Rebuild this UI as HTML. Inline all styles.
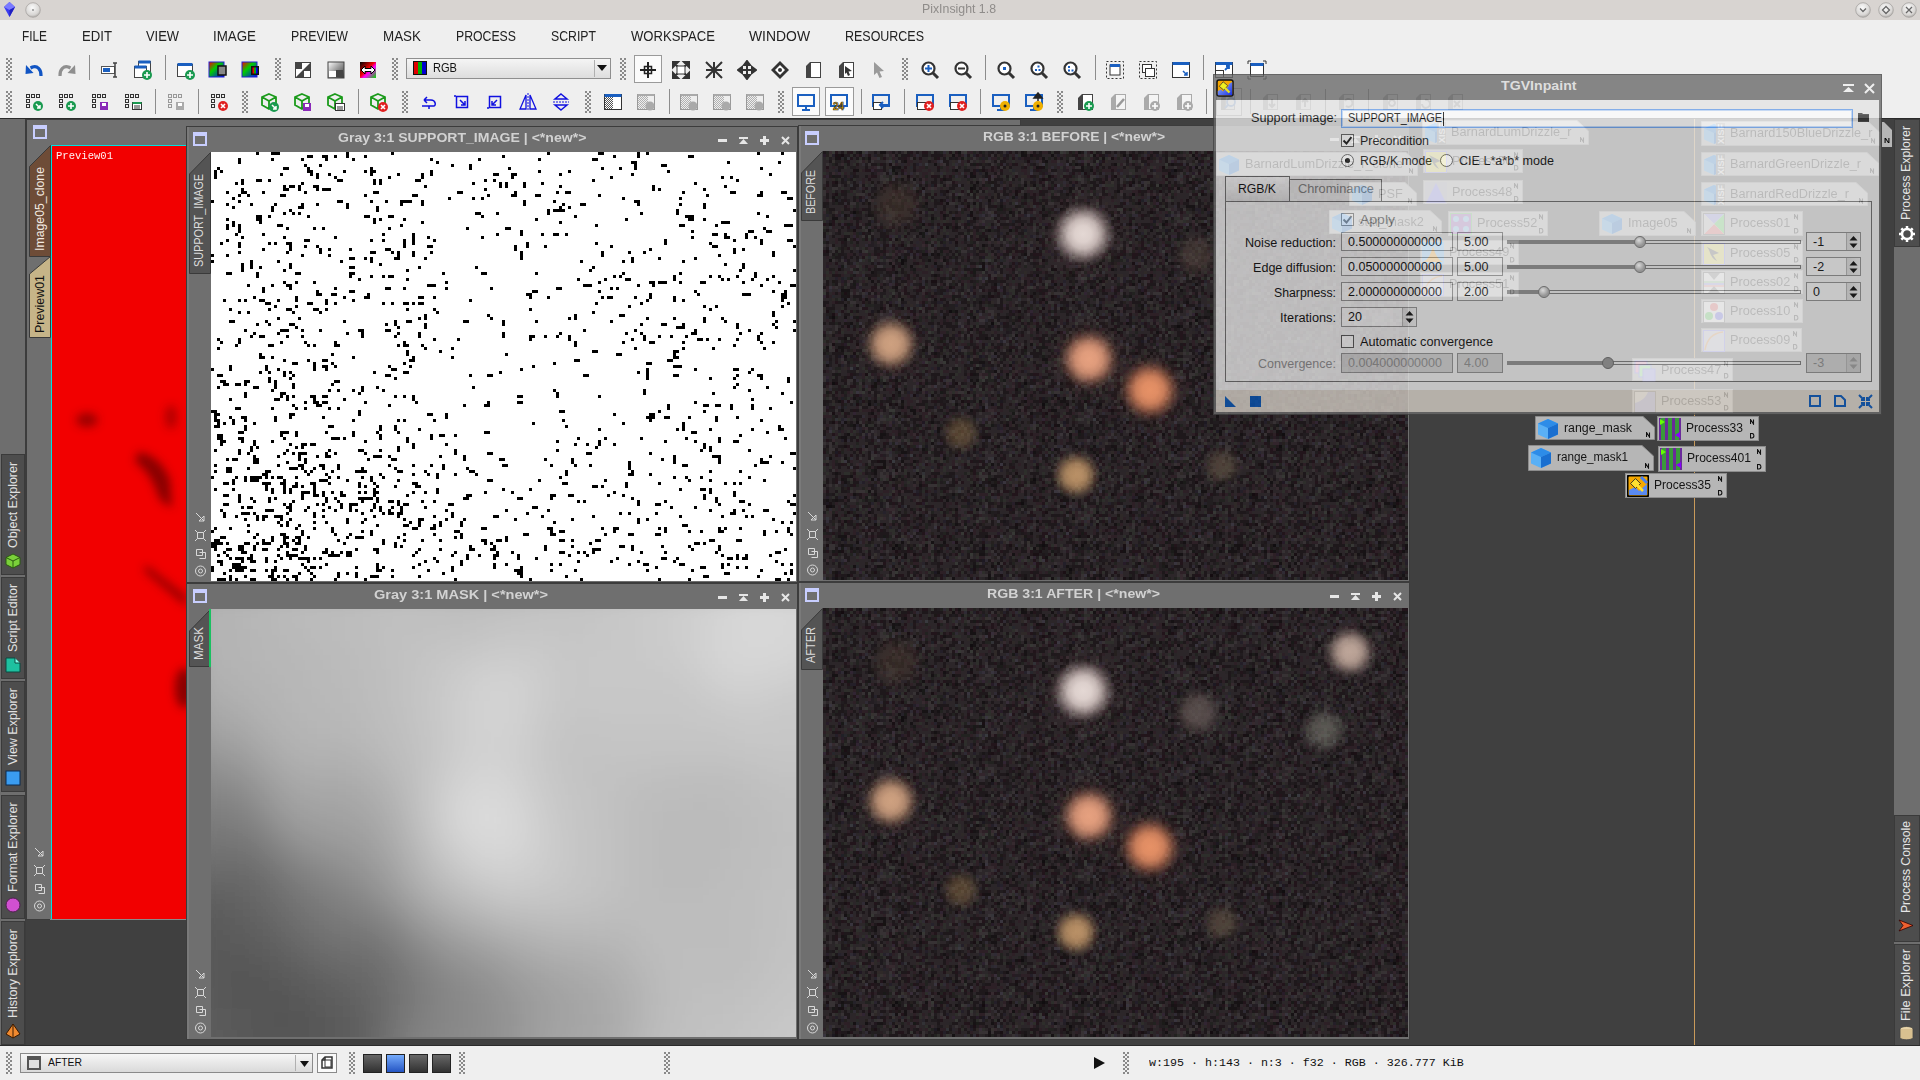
<!DOCTYPE html><html><head><meta charset="utf-8"><style>
html,body{margin:0;padding:0;width:1920px;height:1080px;overflow:hidden;background:#404040;position:relative;font-family:'Liberation Sans',sans-serif}
svg{overflow:hidden}
</style></head><body>
<div style="position:absolute;left:0px;top:0px;width:1920px;height:20px;background:#d8d4d1;"></div>
<div style="position:absolute;left:922.0px;top:2.4px;font:13px/1 'Liberation Sans',sans-serif;color:#8f8c8a;white-space:nowrap;transform:scaleX(0.948);transform-origin:0 0;">PixInsight 1.8</div>
<svg style="position:absolute;left:3px;top:1px;" width="13" height="17" viewBox="0 0 13 17"><path d="M6.5 1 L12 6 L6.5 16 L1 6Z" fill="#3b3bf0"/><path d="M6.5 1 L12 6 L6.5 9 L1 6Z" fill="#7a7aff"/><path d="M6.5 9 L6.5 16 L12 6Z" fill="#2020c0"/></svg>
<svg style="position:absolute;left:25px;top:2px;" width="16" height="16" viewBox="0 0 16 16"><defs><radialGradient id="tbg" cx=".45" cy=".35" r=".7"><stop offset="0" stop-color="#fafafa"/><stop offset=".7" stop-color="#d8d6d4"/><stop offset="1" stop-color="#a09d9a"/></radialGradient></defs><circle cx="8" cy="8" r="7.3" fill="url(#tbg)" stroke="#a8a5a2" stroke-width=".8"/><circle cx="8" cy="8" r=".9" fill="#888"/></svg>
<svg style="position:absolute;left:1855px;top:2px;" width="16" height="16" viewBox="0 0 16 16"><circle cx="8" cy="8" r="7.3" fill="url(#tbg)" stroke="#a5a29f" stroke-width=".8"/><path d="M5 6.5 L8 9.5 L11 6.5" fill="none" stroke="#666" stroke-width="1.3"/></svg>
<svg style="position:absolute;left:1878px;top:2px;" width="16" height="16" viewBox="0 0 16 16"><circle cx="8" cy="8" r="7.3" fill="url(#tbg)" stroke="#a5a29f" stroke-width=".8"/><path d="M8 4.5 L11.5 8 L8 11.5 L4.5 8Z" fill="none" stroke="#666" stroke-width="1.3"/></svg>
<svg style="position:absolute;left:1901px;top:2px;" width="16" height="16" viewBox="0 0 16 16"><circle cx="8" cy="8" r="7.3" fill="url(#tbg)" stroke="#a5a29f" stroke-width=".8"/><path d="M5 5 L11 11 M11 5 L5 11" fill="none" stroke="#666" stroke-width="1.3"/></svg>
<div style="position:absolute;left:0px;top:20px;width:1920px;height:99px;background:#efefef;"></div>
<div style="position:absolute;left:22.0px;top:29.1px;font:14.5px/1 'Liberation Sans',sans-serif;color:#222;white-space:nowrap;transform:scaleX(0.816);transform-origin:0 0;">FILE</div>
<div style="position:absolute;left:82.0px;top:29.1px;font:14.5px/1 'Liberation Sans',sans-serif;color:#222;white-space:nowrap;transform:scaleX(0.908);transform-origin:0 0;">EDIT</div>
<div style="position:absolute;left:146.0px;top:29.1px;font:14.5px/1 'Liberation Sans',sans-serif;color:#222;white-space:nowrap;transform:scaleX(0.890);transform-origin:0 0;">VIEW</div>
<div style="position:absolute;left:213.0px;top:29.1px;font:14.5px/1 'Liberation Sans',sans-serif;color:#222;white-space:nowrap;transform:scaleX(0.920);transform-origin:0 0;">IMAGE</div>
<div style="position:absolute;left:291.0px;top:29.1px;font:14.5px/1 'Liberation Sans',sans-serif;color:#222;white-space:nowrap;transform:scaleX(0.852);transform-origin:0 0;">PREVIEW</div>
<div style="position:absolute;left:383.0px;top:29.1px;font:14.5px/1 'Liberation Sans',sans-serif;color:#222;white-space:nowrap;transform:scaleX(0.925);transform-origin:0 0;">MASK</div>
<div style="position:absolute;left:456.0px;top:29.1px;font:14.5px/1 'Liberation Sans',sans-serif;color:#222;white-space:nowrap;transform:scaleX(0.846);transform-origin:0 0;">PROCESS</div>
<div style="position:absolute;left:551.0px;top:29.1px;font:14.5px/1 'Liberation Sans',sans-serif;color:#222;white-space:nowrap;transform:scaleX(0.846);transform-origin:0 0;">SCRIPT</div>
<div style="position:absolute;left:631.0px;top:29.1px;font:14.5px/1 'Liberation Sans',sans-serif;color:#222;white-space:nowrap;transform:scaleX(0.901);transform-origin:0 0;">WORKSPACE</div>
<div style="position:absolute;left:749.0px;top:29.1px;font:14.5px/1 'Liberation Sans',sans-serif;color:#222;white-space:nowrap;transform:scaleX(0.959);transform-origin:0 0;">WINDOW</div>
<div style="position:absolute;left:845.0px;top:29.1px;font:14.5px/1 'Liberation Sans',sans-serif;color:#222;white-space:nowrap;transform:scaleX(0.860);transform-origin:0 0;">RESOURCES</div>
<svg style="position:absolute;left:6px;top:58px;" width="6" height="22" viewBox="0 0 6 22"><rect x="0" y="0" width="2" height="2" fill="#8a8a8a"/><rect x="4" y="0" width="2" height="2" fill="#8a8a8a"/><rect x="2" y="2" width="2" height="2" fill="#8a8a8a"/><rect x="0" y="4" width="2" height="2" fill="#8a8a8a"/><rect x="4" y="4" width="2" height="2" fill="#8a8a8a"/><rect x="2" y="6" width="2" height="2" fill="#8a8a8a"/><rect x="0" y="8" width="2" height="2" fill="#8a8a8a"/><rect x="4" y="8" width="2" height="2" fill="#8a8a8a"/><rect x="2" y="10" width="2" height="2" fill="#8a8a8a"/><rect x="0" y="12" width="2" height="2" fill="#8a8a8a"/><rect x="4" y="12" width="2" height="2" fill="#8a8a8a"/><rect x="2" y="14" width="2" height="2" fill="#8a8a8a"/><rect x="0" y="16" width="2" height="2" fill="#8a8a8a"/><rect x="4" y="16" width="2" height="2" fill="#8a8a8a"/><rect x="2" y="18" width="2" height="2" fill="#8a8a8a"/><rect x="0" y="20" width="2" height="2" fill="#8a8a8a"/><rect x="4" y="20" width="2" height="2" fill="#8a8a8a"/></svg>
<svg style="position:absolute;left:275px;top:58px;" width="6" height="22" viewBox="0 0 6 22"><rect x="0" y="0" width="2" height="2" fill="#8a8a8a"/><rect x="4" y="0" width="2" height="2" fill="#8a8a8a"/><rect x="2" y="2" width="2" height="2" fill="#8a8a8a"/><rect x="0" y="4" width="2" height="2" fill="#8a8a8a"/><rect x="4" y="4" width="2" height="2" fill="#8a8a8a"/><rect x="2" y="6" width="2" height="2" fill="#8a8a8a"/><rect x="0" y="8" width="2" height="2" fill="#8a8a8a"/><rect x="4" y="8" width="2" height="2" fill="#8a8a8a"/><rect x="2" y="10" width="2" height="2" fill="#8a8a8a"/><rect x="0" y="12" width="2" height="2" fill="#8a8a8a"/><rect x="4" y="12" width="2" height="2" fill="#8a8a8a"/><rect x="2" y="14" width="2" height="2" fill="#8a8a8a"/><rect x="0" y="16" width="2" height="2" fill="#8a8a8a"/><rect x="4" y="16" width="2" height="2" fill="#8a8a8a"/><rect x="2" y="18" width="2" height="2" fill="#8a8a8a"/><rect x="0" y="20" width="2" height="2" fill="#8a8a8a"/><rect x="4" y="20" width="2" height="2" fill="#8a8a8a"/></svg>
<svg style="position:absolute;left:392px;top:58px;" width="6" height="22" viewBox="0 0 6 22"><rect x="0" y="0" width="2" height="2" fill="#8a8a8a"/><rect x="4" y="0" width="2" height="2" fill="#8a8a8a"/><rect x="2" y="2" width="2" height="2" fill="#8a8a8a"/><rect x="0" y="4" width="2" height="2" fill="#8a8a8a"/><rect x="4" y="4" width="2" height="2" fill="#8a8a8a"/><rect x="2" y="6" width="2" height="2" fill="#8a8a8a"/><rect x="0" y="8" width="2" height="2" fill="#8a8a8a"/><rect x="4" y="8" width="2" height="2" fill="#8a8a8a"/><rect x="2" y="10" width="2" height="2" fill="#8a8a8a"/><rect x="0" y="12" width="2" height="2" fill="#8a8a8a"/><rect x="4" y="12" width="2" height="2" fill="#8a8a8a"/><rect x="2" y="14" width="2" height="2" fill="#8a8a8a"/><rect x="0" y="16" width="2" height="2" fill="#8a8a8a"/><rect x="4" y="16" width="2" height="2" fill="#8a8a8a"/><rect x="2" y="18" width="2" height="2" fill="#8a8a8a"/><rect x="0" y="20" width="2" height="2" fill="#8a8a8a"/><rect x="4" y="20" width="2" height="2" fill="#8a8a8a"/></svg>
<svg style="position:absolute;left:620px;top:58px;" width="6" height="22" viewBox="0 0 6 22"><rect x="0" y="0" width="2" height="2" fill="#8a8a8a"/><rect x="4" y="0" width="2" height="2" fill="#8a8a8a"/><rect x="2" y="2" width="2" height="2" fill="#8a8a8a"/><rect x="0" y="4" width="2" height="2" fill="#8a8a8a"/><rect x="4" y="4" width="2" height="2" fill="#8a8a8a"/><rect x="2" y="6" width="2" height="2" fill="#8a8a8a"/><rect x="0" y="8" width="2" height="2" fill="#8a8a8a"/><rect x="4" y="8" width="2" height="2" fill="#8a8a8a"/><rect x="2" y="10" width="2" height="2" fill="#8a8a8a"/><rect x="0" y="12" width="2" height="2" fill="#8a8a8a"/><rect x="4" y="12" width="2" height="2" fill="#8a8a8a"/><rect x="2" y="14" width="2" height="2" fill="#8a8a8a"/><rect x="0" y="16" width="2" height="2" fill="#8a8a8a"/><rect x="4" y="16" width="2" height="2" fill="#8a8a8a"/><rect x="2" y="18" width="2" height="2" fill="#8a8a8a"/><rect x="0" y="20" width="2" height="2" fill="#8a8a8a"/><rect x="4" y="20" width="2" height="2" fill="#8a8a8a"/></svg>
<svg style="position:absolute;left:902px;top:58px;" width="6" height="22" viewBox="0 0 6 22"><rect x="0" y="0" width="2" height="2" fill="#8a8a8a"/><rect x="4" y="0" width="2" height="2" fill="#8a8a8a"/><rect x="2" y="2" width="2" height="2" fill="#8a8a8a"/><rect x="0" y="4" width="2" height="2" fill="#8a8a8a"/><rect x="4" y="4" width="2" height="2" fill="#8a8a8a"/><rect x="2" y="6" width="2" height="2" fill="#8a8a8a"/><rect x="0" y="8" width="2" height="2" fill="#8a8a8a"/><rect x="4" y="8" width="2" height="2" fill="#8a8a8a"/><rect x="2" y="10" width="2" height="2" fill="#8a8a8a"/><rect x="0" y="12" width="2" height="2" fill="#8a8a8a"/><rect x="4" y="12" width="2" height="2" fill="#8a8a8a"/><rect x="2" y="14" width="2" height="2" fill="#8a8a8a"/><rect x="0" y="16" width="2" height="2" fill="#8a8a8a"/><rect x="4" y="16" width="2" height="2" fill="#8a8a8a"/><rect x="2" y="18" width="2" height="2" fill="#8a8a8a"/><rect x="0" y="20" width="2" height="2" fill="#8a8a8a"/><rect x="4" y="20" width="2" height="2" fill="#8a8a8a"/></svg>
<div style="position:absolute;left:89px;top:55px;width:1px;height:25px;background:#8c8c8c;"></div>
<div style="position:absolute;left:165px;top:55px;width:1px;height:25px;background:#8c8c8c;"></div>
<div style="position:absolute;left:985px;top:55px;width:1px;height:25px;background:#8c8c8c;"></div>
<div style="position:absolute;left:1095px;top:55px;width:1px;height:25px;background:#8c8c8c;"></div>
<div style="position:absolute;left:1203px;top:55px;width:1px;height:25px;background:#8c8c8c;"></div>
<div style="position:absolute;left:634px;top:55px;width:28px;height:28px;background:#fbfbfb;box-shadow:inset 0 0 0 1px #9a9a9a;"></div>
<svg style="position:absolute;left:638px;top:60px;" width="20" height="20" viewBox="0 0 20 20"><path d="M10 2 V18 M2 10 H18" stroke="#222" stroke-width="2"/><rect x="6.5" y="6.5" width="7" height="7" fill="none" stroke="#222" stroke-width="1.5"/></svg>
<svg style="position:absolute;left:24px;top:60px;" width="20" height="20" viewBox="0 0 20 20"><path d="M17 16 C17.5 9,13 5.5,8.5 7 L6.5 8" fill="none" stroke="#1155c4" stroke-width="3.2"/><path d="M2 5 L9.5 13 L1.5 14Z" fill="#1155c4"/></svg>
<svg style="position:absolute;left:57px;top:60px;" width="20" height="20" viewBox="0 0 20 20"><path d="M3 16 C2.5 9,7 5.5,11.5 7 L13.5 8" fill="none" stroke="#8f8f8f" stroke-width="3.2"/><path d="M18 5 L10.5 13 L18.5 14Z" fill="#8f8f8f"/></svg>
<svg style="position:absolute;left:100px;top:60px;" width="20" height="20" viewBox="0 0 20 20"><rect x="1.5" y="6.5" width="13" height="7" fill="#fff" stroke="#555"/><rect x="3" y="8" width="7" height="4" fill="#1a5fc0"/><path d="M13 3 H17 M15 3 V17 M13 17 H17" stroke="#444" stroke-width="1.5" fill="none"/></svg>
<svg style="position:absolute;left:133px;top:60px;" width="20" height="20" viewBox="0 0 20 20"><rect x="5.5" y="1.5" width="12" height="10" fill="#fff" stroke="#444"/><rect x="5.5" y="0.5" width="12" height="3" fill="#1a5fc0"/><rect x="1.5" y="6.5" width="12" height="11" fill="#fff" stroke="#444"/><rect x="1.5" y="5.5" width="12" height="3" fill="#1a5fc0"/><circle cx="14" cy="15" r="5" fill="#1a9a50"/><path d="M14 12 V18 M11 15 H17" stroke="#fff" stroke-width="1.6"/></svg>
<svg style="position:absolute;left:176px;top:60px;" width="20" height="20" viewBox="0 0 20 20"><rect x="1.5" y="4.5" width="15" height="12" fill="#fff" stroke="#444"/><rect x="1.5" y="3" width="15" height="3" fill="#1a5fc0"/><circle cx="14" cy="15" r="5" fill="#1a9a50"/><path d="M14 12 V18 M11 15 H17" stroke="#fff" stroke-width="1.6"/></svg>
<svg style="position:absolute;left:208px;top:60px;" width="20" height="20" viewBox="0 0 20 20"><defs><linearGradient id="g1" x1="0" x2="1" y1="0" y2="1"><stop offset="0" stop-color="#f00"/><stop offset=".4" stop-color="#0c0"/><stop offset="1" stop-color="#00f"/></linearGradient></defs><rect x="1" y="2" width="15" height="15" fill="url(#g1)" stroke="#22c"/><rect x="10" y="6" width="8" height="9" fill="#888" stroke="#111" stroke-width="1.5"/></svg>
<svg style="position:absolute;left:241px;top:60px;" width="20" height="20" viewBox="0 0 20 20"><rect x="1" y="2" width="15" height="15" fill="url(#g1)" stroke="#22c"/><rect x="10" y="6" width="8" height="9" fill="#111"/><rect x="11.5" y="7.5" width="1.7" height="6" fill="#e00"/><rect x="13.2" y="7.5" width="1.7" height="6" fill="#0c0"/><rect x="14.9" y="7.5" width="1.7" height="6" fill="#00e"/></svg>
<svg style="position:absolute;left:293px;top:60px;" width="20" height="20" viewBox="0 0 20 20"><rect x="2" y="2" width="16" height="16" fill="#444"/><path d="M3 17 L17 3 L3 3Z" fill="#fff"/><rect x="11" y="11" width="6" height="6" fill="#fff"/><rect x="3" y="3" width="6" height="6" fill="#444"/></svg>
<svg style="position:absolute;left:326px;top:60px;" width="20" height="20" viewBox="0 0 20 20"><defs><linearGradient id="g2" x1="0" x2="1" y1="0" y2="1"><stop offset="0" stop-color="#fff"/><stop offset="1" stop-color="#333"/></linearGradient></defs><rect x="2" y="2" width="16" height="16" fill="url(#g2)" stroke="#444"/><rect x="3" y="11" width="7" height="6" fill="#fff"/><rect x="10" y="10" width="7" height="7" fill="#444"/></svg>
<svg style="position:absolute;left:358px;top:60px;" width="20" height="20" viewBox="0 0 20 20"><defs><linearGradient id="g3" x1="0" x2="1" y1="0" y2="1"><stop offset="0" stop-color="#000"/><stop offset=".45" stop-color="#e00"/><stop offset=".6" stop-color="#f0f"/><stop offset="1" stop-color="#0d0"/></linearGradient></defs><rect x="2" y="2" width="16" height="16" fill="url(#g3)"/><path d="M3 10 L7 6 V8.5 H13 V6 L17 10 L13 14 V11.5 H7 V14Z" fill="#fff" stroke="#000"/></svg>
<svg style="position:absolute;left:671px;top:60px;" width="20" height="20" viewBox="0 0 20 20"><path d="M2 2 L7 2 L2 7Z M18 2 L13 2 L18 7Z M2 18 L7 18 L2 13Z M18 18 L13 18 L18 13Z M3 3 L17 17 M17 3 L3 17" stroke="#333" stroke-width="2" fill="#333"/><rect x="6" y="6" width="8" height="8" fill="#fff" stroke="#333"/></svg>
<svg style="position:absolute;left:704px;top:60px;" width="20" height="20" viewBox="0 0 20 20"><path d="M2 2 L18 18 M18 2 L2 18 M10 2 V18 M2 10 H18" stroke="#333" stroke-width="2"/></svg>
<svg style="position:absolute;left:737px;top:60px;" width="20" height="20" viewBox="0 0 20 20"><path d="M10 1 L13 5 H7Z M10 19 L13 15 H7Z M1 10 L5 7 V13Z M19 10 L15 7 V13Z M10 4 V16 M4 10 H16" stroke="#333" stroke-width="2" fill="#333"/></svg>
<svg style="position:absolute;left:770px;top:60px;" width="20" height="20" viewBox="0 0 20 20"><path d="M10 1 L19 10 L10 19 L1 10Z" fill="#333"/><path d="M10 5 L15 10 L10 15 L5 10Z" fill="#fff"/><circle cx="10" cy="10" r="2" fill="#333"/></svg>
<svg style="position:absolute;left:803px;top:60px;" width="20" height="20" viewBox="0 0 20 20"><path d="M3 6 L7 2 L7 18 L3 18Z" fill="#444"/><rect x="7.5" y="2.5" width="10" height="15" fill="#fff" stroke="#444"/></svg>
<svg style="position:absolute;left:836px;top:60px;" width="20" height="20" viewBox="0 0 20 20"><path d="M3 6 L7 2 L7 18 L3 18Z" fill="#444"/><rect x="7.5" y="2.5" width="10" height="15" fill="#fff" stroke="#444"/><path d="M9 6 L16 11 L12.5 11.5 L14 15 L12 16 L10.5 12.5 L9 14Z" fill="#333"/></svg>
<svg style="position:absolute;left:869px;top:60px;" width="20" height="20" viewBox="0 0 20 20"><path d="M5 2 L15 11 L10.5 11.5 L13 17 L10.5 18 L8 12.5 L5 15Z" fill="#9a9a9a"/></svg>
<svg style="position:absolute;left:920px;top:60px;" width="20" height="20" viewBox="0 0 20 20"><circle cx="8.5" cy="8.5" r="6" fill="#fff" stroke="#333" stroke-width="2.2"/><path d="M13 13 L18 18" stroke="#333" stroke-width="3"/><path d="M8.5 5 V12 M5 8.5 H12" stroke="#1a5fc0" stroke-width="2"/></svg>
<svg style="position:absolute;left:953px;top:60px;" width="20" height="20" viewBox="0 0 20 20"><circle cx="8.5" cy="8.5" r="6" fill="#fff" stroke="#333" stroke-width="2.2"/><path d="M13 13 L18 18" stroke="#333" stroke-width="3"/><path d="M5 8.5 H12" stroke="#333" stroke-width="2"/></svg>
<svg style="position:absolute;left:996px;top:60px;" width="20" height="20" viewBox="0 0 20 20"><circle cx="8.5" cy="8.5" r="6" fill="#fff" stroke="#333" stroke-width="2.2"/><path d="M13 13 L18 18" stroke="#333" stroke-width="3"/><rect x="7" y="7" width="3" height="3" fill="#1a5fc0"/></svg>
<svg style="position:absolute;left:1029px;top:60px;" width="20" height="20" viewBox="0 0 20 20"><circle cx="8.5" cy="8.5" r="6" fill="#fff" stroke="#333" stroke-width="2.2"/><path d="M13 13 L18 18" stroke="#333" stroke-width="3"/><rect x="8.5" y="5.5" width="2" height="2" fill="#1a5fc0"/><rect x="6" y="9" width="2" height="2" fill="#1a5fc0"/><rect x="9.5" y="9" width="2" height="2" fill="#1a5fc0"/></svg>
<svg style="position:absolute;left:1062px;top:60px;" width="20" height="20" viewBox="0 0 20 20"><circle cx="8.5" cy="8.5" r="6" fill="#fff" stroke="#333" stroke-width="2.2"/><path d="M13 13 L18 18" stroke="#333" stroke-width="3"/><rect x="6" y="6" width="2" height="2" fill="#1a5fc0"/><rect x="6" y="9.5" width="2" height="2" fill="#1a5fc0"/><rect x="9.5" y="9.5" width="2" height="2" fill="#1a5fc0"/></svg>
<svg style="position:absolute;left:1105px;top:60px;" width="20" height="20" viewBox="0 0 20 20"><rect x="1.5" y="1.5" width="17" height="17" fill="none" stroke="#333" stroke-dasharray="2 2"/><rect x="5" y="5" width="10" height="10" fill="#fff" stroke="#333"/><rect x="5" y="4" width="10" height="3" fill="#1a5fc0"/></svg>
<svg style="position:absolute;left:1138px;top:60px;" width="20" height="20" viewBox="0 0 20 20"><rect x="1.5" y="1.5" width="17" height="17" fill="none" stroke="#333" stroke-dasharray="2 2"/><rect x="4.5" y="4.5" width="9" height="8" fill="#fff" stroke="#333"/><rect x="7.5" y="8.5" width="9" height="8" fill="#fff" stroke="#333"/></svg>
<svg style="position:absolute;left:1171px;top:60px;" width="20" height="20" viewBox="0 0 20 20"><rect x="1.5" y="2.5" width="17" height="15" fill="#fff" stroke="#333"/><rect x="1.5" y="2" width="17" height="3" fill="#1a5fc0"/><path d="M12 11 L16 15 M13 15 H16 V12" stroke="#1a5fc0" stroke-width="1.5" fill="none"/></svg>
<svg style="position:absolute;left:1214px;top:60px;" width="20" height="20" viewBox="0 0 20 20"><rect x="1.5" y="2.5" width="17" height="15" fill="#fff" stroke="#333"/><rect x="1.5" y="2" width="17" height="3" fill="#1a5fc0"/><rect x="1.5" y="10.5" width="8" height="7" fill="#fff" stroke="#333"/><path d="M11 10 L15 6 M12 6 H15 V9" stroke="#1a5fc0" stroke-width="1.8" fill="none"/></svg>
<svg style="position:absolute;left:1247px;top:60px;" width="20" height="20" viewBox="0 0 20 20"><path d="M1 4 V1 H4 M16 1 H19 V4 M1 16 V19 H4 M16 19 H19 V16" stroke="#333" fill="none"/><rect x="3.5" y="3.5" width="13" height="13" fill="#fff" stroke="#333"/><rect x="3.5" y="3" width="13" height="3" fill="#1a5fc0"/></svg>
<div style="position:absolute;left:406px;top:58px;width:205px;height:21px;background:linear-gradient(#f6f6f6,#dcdcdc);box-shadow:inset 0 0 0 1px #8f8f8f;"></div>
<div style="position:absolute;left:414px;top:62px;width:12px;height:12px;background:linear-gradient(90deg,#e00000 0 33%,#00b000 33% 66%,#0000d0 66%);box-shadow:0 0 0 1px #111;"></div>
<div style="position:absolute;left:433.0px;top:61.4px;font:13px/1 'Liberation Sans',sans-serif;color:#111;white-space:nowrap;transform:scaleX(0.852);transform-origin:0 0;">RGB</div>
<div style="position:absolute;left:594px;top:60px;width:1px;height:17px;background:#b0b0b0;"></div>
<svg style="position:absolute;left:597px;top:64px;" width="10" height="8" viewBox="0 0 10 8"><path d="M0 1 H10 L5 7Z" fill="#111"/></svg>
<svg style="position:absolute;left:6px;top:91px;" width="6" height="22" viewBox="0 0 6 22"><rect x="0" y="0" width="2" height="2" fill="#8a8a8a"/><rect x="4" y="0" width="2" height="2" fill="#8a8a8a"/><rect x="2" y="2" width="2" height="2" fill="#8a8a8a"/><rect x="0" y="4" width="2" height="2" fill="#8a8a8a"/><rect x="4" y="4" width="2" height="2" fill="#8a8a8a"/><rect x="2" y="6" width="2" height="2" fill="#8a8a8a"/><rect x="0" y="8" width="2" height="2" fill="#8a8a8a"/><rect x="4" y="8" width="2" height="2" fill="#8a8a8a"/><rect x="2" y="10" width="2" height="2" fill="#8a8a8a"/><rect x="0" y="12" width="2" height="2" fill="#8a8a8a"/><rect x="4" y="12" width="2" height="2" fill="#8a8a8a"/><rect x="2" y="14" width="2" height="2" fill="#8a8a8a"/><rect x="0" y="16" width="2" height="2" fill="#8a8a8a"/><rect x="4" y="16" width="2" height="2" fill="#8a8a8a"/><rect x="2" y="18" width="2" height="2" fill="#8a8a8a"/><rect x="0" y="20" width="2" height="2" fill="#8a8a8a"/><rect x="4" y="20" width="2" height="2" fill="#8a8a8a"/></svg>
<svg style="position:absolute;left:242px;top:91px;" width="6" height="22" viewBox="0 0 6 22"><rect x="0" y="0" width="2" height="2" fill="#8a8a8a"/><rect x="4" y="0" width="2" height="2" fill="#8a8a8a"/><rect x="2" y="2" width="2" height="2" fill="#8a8a8a"/><rect x="0" y="4" width="2" height="2" fill="#8a8a8a"/><rect x="4" y="4" width="2" height="2" fill="#8a8a8a"/><rect x="2" y="6" width="2" height="2" fill="#8a8a8a"/><rect x="0" y="8" width="2" height="2" fill="#8a8a8a"/><rect x="4" y="8" width="2" height="2" fill="#8a8a8a"/><rect x="2" y="10" width="2" height="2" fill="#8a8a8a"/><rect x="0" y="12" width="2" height="2" fill="#8a8a8a"/><rect x="4" y="12" width="2" height="2" fill="#8a8a8a"/><rect x="2" y="14" width="2" height="2" fill="#8a8a8a"/><rect x="0" y="16" width="2" height="2" fill="#8a8a8a"/><rect x="4" y="16" width="2" height="2" fill="#8a8a8a"/><rect x="2" y="18" width="2" height="2" fill="#8a8a8a"/><rect x="0" y="20" width="2" height="2" fill="#8a8a8a"/><rect x="4" y="20" width="2" height="2" fill="#8a8a8a"/></svg>
<svg style="position:absolute;left:402px;top:91px;" width="6" height="22" viewBox="0 0 6 22"><rect x="0" y="0" width="2" height="2" fill="#8a8a8a"/><rect x="4" y="0" width="2" height="2" fill="#8a8a8a"/><rect x="2" y="2" width="2" height="2" fill="#8a8a8a"/><rect x="0" y="4" width="2" height="2" fill="#8a8a8a"/><rect x="4" y="4" width="2" height="2" fill="#8a8a8a"/><rect x="2" y="6" width="2" height="2" fill="#8a8a8a"/><rect x="0" y="8" width="2" height="2" fill="#8a8a8a"/><rect x="4" y="8" width="2" height="2" fill="#8a8a8a"/><rect x="2" y="10" width="2" height="2" fill="#8a8a8a"/><rect x="0" y="12" width="2" height="2" fill="#8a8a8a"/><rect x="4" y="12" width="2" height="2" fill="#8a8a8a"/><rect x="2" y="14" width="2" height="2" fill="#8a8a8a"/><rect x="0" y="16" width="2" height="2" fill="#8a8a8a"/><rect x="4" y="16" width="2" height="2" fill="#8a8a8a"/><rect x="2" y="18" width="2" height="2" fill="#8a8a8a"/><rect x="0" y="20" width="2" height="2" fill="#8a8a8a"/><rect x="4" y="20" width="2" height="2" fill="#8a8a8a"/></svg>
<svg style="position:absolute;left:585px;top:91px;" width="6" height="22" viewBox="0 0 6 22"><rect x="0" y="0" width="2" height="2" fill="#8a8a8a"/><rect x="4" y="0" width="2" height="2" fill="#8a8a8a"/><rect x="2" y="2" width="2" height="2" fill="#8a8a8a"/><rect x="0" y="4" width="2" height="2" fill="#8a8a8a"/><rect x="4" y="4" width="2" height="2" fill="#8a8a8a"/><rect x="2" y="6" width="2" height="2" fill="#8a8a8a"/><rect x="0" y="8" width="2" height="2" fill="#8a8a8a"/><rect x="4" y="8" width="2" height="2" fill="#8a8a8a"/><rect x="2" y="10" width="2" height="2" fill="#8a8a8a"/><rect x="0" y="12" width="2" height="2" fill="#8a8a8a"/><rect x="4" y="12" width="2" height="2" fill="#8a8a8a"/><rect x="2" y="14" width="2" height="2" fill="#8a8a8a"/><rect x="0" y="16" width="2" height="2" fill="#8a8a8a"/><rect x="4" y="16" width="2" height="2" fill="#8a8a8a"/><rect x="2" y="18" width="2" height="2" fill="#8a8a8a"/><rect x="0" y="20" width="2" height="2" fill="#8a8a8a"/><rect x="4" y="20" width="2" height="2" fill="#8a8a8a"/></svg>
<svg style="position:absolute;left:778px;top:91px;" width="6" height="22" viewBox="0 0 6 22"><rect x="0" y="0" width="2" height="2" fill="#8a8a8a"/><rect x="4" y="0" width="2" height="2" fill="#8a8a8a"/><rect x="2" y="2" width="2" height="2" fill="#8a8a8a"/><rect x="0" y="4" width="2" height="2" fill="#8a8a8a"/><rect x="4" y="4" width="2" height="2" fill="#8a8a8a"/><rect x="2" y="6" width="2" height="2" fill="#8a8a8a"/><rect x="0" y="8" width="2" height="2" fill="#8a8a8a"/><rect x="4" y="8" width="2" height="2" fill="#8a8a8a"/><rect x="2" y="10" width="2" height="2" fill="#8a8a8a"/><rect x="0" y="12" width="2" height="2" fill="#8a8a8a"/><rect x="4" y="12" width="2" height="2" fill="#8a8a8a"/><rect x="2" y="14" width="2" height="2" fill="#8a8a8a"/><rect x="0" y="16" width="2" height="2" fill="#8a8a8a"/><rect x="4" y="16" width="2" height="2" fill="#8a8a8a"/><rect x="2" y="18" width="2" height="2" fill="#8a8a8a"/><rect x="0" y="20" width="2" height="2" fill="#8a8a8a"/><rect x="4" y="20" width="2" height="2" fill="#8a8a8a"/></svg>
<svg style="position:absolute;left:1057px;top:91px;" width="6" height="22" viewBox="0 0 6 22"><rect x="0" y="0" width="2" height="2" fill="#8a8a8a"/><rect x="4" y="0" width="2" height="2" fill="#8a8a8a"/><rect x="2" y="2" width="2" height="2" fill="#8a8a8a"/><rect x="0" y="4" width="2" height="2" fill="#8a8a8a"/><rect x="4" y="4" width="2" height="2" fill="#8a8a8a"/><rect x="2" y="6" width="2" height="2" fill="#8a8a8a"/><rect x="0" y="8" width="2" height="2" fill="#8a8a8a"/><rect x="4" y="8" width="2" height="2" fill="#8a8a8a"/><rect x="2" y="10" width="2" height="2" fill="#8a8a8a"/><rect x="0" y="12" width="2" height="2" fill="#8a8a8a"/><rect x="4" y="12" width="2" height="2" fill="#8a8a8a"/><rect x="2" y="14" width="2" height="2" fill="#8a8a8a"/><rect x="0" y="16" width="2" height="2" fill="#8a8a8a"/><rect x="4" y="16" width="2" height="2" fill="#8a8a8a"/><rect x="2" y="18" width="2" height="2" fill="#8a8a8a"/><rect x="0" y="20" width="2" height="2" fill="#8a8a8a"/><rect x="4" y="20" width="2" height="2" fill="#8a8a8a"/></svg>
<div style="position:absolute;left:155px;top:89px;width:1px;height:25px;background:#8c8c8c;"></div>
<div style="position:absolute;left:198px;top:89px;width:1px;height:25px;background:#8c8c8c;"></div>
<div style="position:absolute;left:358px;top:89px;width:1px;height:25px;background:#8c8c8c;"></div>
<div style="position:absolute;left:669px;top:89px;width:1px;height:25px;background:#8c8c8c;"></div>
<div style="position:absolute;left:861px;top:89px;width:1px;height:25px;background:#8c8c8c;"></div>
<div style="position:absolute;left:904px;top:89px;width:1px;height:25px;background:#8c8c8c;"></div>
<div style="position:absolute;left:980px;top:89px;width:1px;height:25px;background:#8c8c8c;"></div>
<div style="position:absolute;left:1206px;top:89px;width:1px;height:25px;background:#8c8c8c;"></div>
<div style="position:absolute;left:792px;top:87px;width:28px;height:29px;background:#fbfbfb;box-shadow:inset 0 0 0 1px #9a9a9a;"></div>
<div style="position:absolute;left:825px;top:87px;width:29px;height:29px;background:#fbfbfb;box-shadow:inset 0 0 0 1px #9a9a9a;"></div>
<svg style="position:absolute;left:796px;top:92px;" width="20" height="20" viewBox="0 0 20 20"><rect x="2" y="3" width="16" height="11" fill="none" stroke="#1a5fc0" stroke-width="2"/><path d="M10 14 V17 M6 18 H14" stroke="#1a5fc0" stroke-width="2"/></svg>
<svg style="position:absolute;left:829px;top:92px;" width="20" height="20" viewBox="0 0 20 20"><rect x="2" y="3" width="16" height="11" fill="none" stroke="#1a5fc0" stroke-width="2"/><text x="4" y="18" font-family="Liberation Sans" font-weight="bold" font-size="10" fill="#f0b000" stroke="#222" stroke-width=".6">24</text></svg>
<svg style="position:absolute;left:24px;top:92px;" width="20" height="20" viewBox="0 0 20 20"><rect x="2.5" y="2.5" width="3" height="3" fill="none" stroke="#333"/><rect x="7.5" y="2.5" width="3" height="3" fill="none" stroke="#333"/><rect x="12.5" y="2.5" width="3" height="3" fill="none" stroke="#333"/><rect x="2.5" y="7.5" width="3" height="3" fill="none" stroke="#333"/><rect x="2.5" y="12.5" width="3" height="3" fill="none" stroke="#333"/><circle cx="14" cy="14" r="5" fill="#1a9a50"/><path d="M12 12 L16 16 M16 13 V16 H13" stroke="#fff" stroke-width="1.5" fill="none"/></svg>
<svg style="position:absolute;left:57px;top:92px;" width="20" height="20" viewBox="0 0 20 20"><rect x="2.5" y="2.5" width="3" height="3" fill="none" stroke="#333"/><rect x="7.5" y="2.5" width="3" height="3" fill="none" stroke="#333"/><rect x="12.5" y="2.5" width="3" height="3" fill="none" stroke="#333"/><rect x="2.5" y="7.5" width="3" height="3" fill="none" stroke="#333"/><rect x="2.5" y="12.5" width="3" height="3" fill="none" stroke="#333"/><circle cx="14" cy="14" r="5" fill="#1a9a50"/><path d="M14 11 V17 M11 14 H17" stroke="#fff" stroke-width="1.6"/></svg>
<svg style="position:absolute;left:90px;top:92px;" width="20" height="20" viewBox="0 0 20 20"><rect x="2.5" y="2.5" width="3" height="3" fill="none" stroke="#333"/><rect x="7.5" y="2.5" width="3" height="3" fill="none" stroke="#333"/><rect x="12.5" y="2.5" width="3" height="3" fill="none" stroke="#333"/><rect x="2.5" y="7.5" width="3" height="3" fill="none" stroke="#333"/><rect x="2.5" y="12.5" width="3" height="3" fill="none" stroke="#333"/><rect x="10" y="10" width="8" height="8" fill="#8a2ab8"/><rect x="12" y="11" width="4" height="3" fill="#fff"/></svg>
<svg style="position:absolute;left:123px;top:92px;" width="20" height="20" viewBox="0 0 20 20"><rect x="2.5" y="2.5" width="3" height="3" fill="none" stroke="#333"/><rect x="7.5" y="2.5" width="3" height="3" fill="none" stroke="#333"/><rect x="12.5" y="2.5" width="3" height="3" fill="none" stroke="#333"/><rect x="2.5" y="7.5" width="3" height="3" fill="none" stroke="#333"/><rect x="2.5" y="12.5" width="3" height="3" fill="none" stroke="#333"/><rect x="9.5" y="10.5" width="9" height="7" fill="#fff" stroke="#333"/><rect x="9.5" y="10" width="9" height="2" fill="#1a9a50"/><path d="M11 14 H17 M11 16 H17" stroke="#333"/></svg>
<svg style="position:absolute;left:166px;top:92px;" width="20" height="20" viewBox="0 0 20 20"><rect x="2.5" y="2.5" width="3" height="3" fill="none" stroke="#999"/><rect x="7.5" y="2.5" width="3" height="3" fill="none" stroke="#999"/><rect x="12.5" y="2.5" width="3" height="3" fill="none" stroke="#999"/><rect x="2.5" y="7.5" width="3" height="3" fill="none" stroke="#999"/><rect x="2.5" y="12.5" width="3" height="3" fill="none" stroke="#999"/><rect x="10" y="10" width="8" height="8" fill="#aaa"/><rect x="12" y="11" width="4" height="3" fill="#fff"/></svg>
<svg style="position:absolute;left:209px;top:92px;" width="20" height="20" viewBox="0 0 20 20"><rect x="2.5" y="2.5" width="3" height="3" fill="none" stroke="#333"/><rect x="7.5" y="2.5" width="3" height="3" fill="none" stroke="#333"/><rect x="12.5" y="2.5" width="3" height="3" fill="none" stroke="#333"/><rect x="2.5" y="7.5" width="3" height="3" fill="none" stroke="#333"/><rect x="2.5" y="12.5" width="3" height="3" fill="none" stroke="#333"/><circle cx="14" cy="14" r="5" fill="#e02020"/><path d="M12 12 L16 16 M16 12 L12 16" stroke="#fff" stroke-width="1.6"/></svg>
<svg style="position:absolute;left:260px;top:92px;" width="20" height="20" viewBox="0 0 20 20"><path d="M9 2 L16 5 L16 13 L9 17 L2 13 L2 5Z M2 5 L9 9 L16 5 M9 9 V17" fill="none" stroke="#1a9a1a" stroke-width="1.8"/><circle cx="14" cy="15" r="5" fill="#1a9a50"/><path d="M12 13 L16 17 M16 14 V17 H13" stroke="#fff" stroke-width="1.5" fill="none"/></svg>
<svg style="position:absolute;left:293px;top:92px;" width="20" height="20" viewBox="0 0 20 20"><path d="M9 2 L16 5 L16 13 L9 17 L2 13 L2 5Z M2 5 L9 9 L16 5 M9 9 V17" fill="none" stroke="#1a9a1a" stroke-width="1.8"/><rect x="10" y="11" width="8" height="8" fill="#8a2ab8"/><rect x="12" y="12" width="4" height="3" fill="#fff"/></svg>
<svg style="position:absolute;left:326px;top:92px;" width="20" height="20" viewBox="0 0 20 20"><path d="M9 2 L16 5 L16 13 L9 17 L2 13 L2 5Z M2 5 L9 9 L16 5 M9 9 V17" fill="none" stroke="#1a9a1a" stroke-width="1.8"/><rect x="9.5" y="11.5" width="9" height="7" fill="#fff" stroke="#333"/><path d="M11 15 H17 M11 17 H17" stroke="#333"/></svg>
<svg style="position:absolute;left:369px;top:92px;" width="20" height="20" viewBox="0 0 20 20"><path d="M9 2 L16 5 L16 13 L9 17 L2 13 L2 5Z M2 5 L9 9 L16 5 M9 9 V17" fill="none" stroke="#1a9a1a" stroke-width="1.8"/><circle cx="14" cy="15" r="5" fill="#e02020"/><path d="M12 13 L16 17 M16 13 L12 17" stroke="#fff" stroke-width="1.6"/></svg>
<svg style="position:absolute;left:419px;top:92px;" width="20" height="20" viewBox="0 0 20 20"><path d="M3 14 H15 C17 14,17 8,12 8 H5 M5 8 L8 5 M5 8 L8 11 M10 14 V17" stroke="#1010e0" stroke-width="1.5" fill="none"/></svg>
<svg style="position:absolute;left:452px;top:92px;" width="20" height="20" viewBox="0 0 20 20"><rect x="4.5" y="4.5" width="11" height="11" fill="none" stroke="#1010e0" stroke-width="1.5"/><path d="M8 8 L13 13 M13 9 V13 H9 M2 4 H4" stroke="#1010e0" stroke-width="1.5" fill="none"/></svg>
<svg style="position:absolute;left:485px;top:92px;" width="20" height="20" viewBox="0 0 20 20"><rect x="4.5" y="4.5" width="11" height="11" fill="none" stroke="#1010e0" stroke-width="1.5"/><path d="M12 8 L7 13 M7 9 V13 H11 M2 16 H4" stroke="#1010e0" stroke-width="1.5" fill="none"/></svg>
<svg style="position:absolute;left:518px;top:92px;" width="20" height="20" viewBox="0 0 20 20"><path d="M8 3 L2 17 H8Z M12 3 L18 17 H12Z" fill="none" stroke="#1010e0" stroke-width="1.3"/><path d="M10 1 V19" stroke="#1010e0" stroke-dasharray="2 1"/></svg>
<svg style="position:absolute;left:551px;top:92px;" width="20" height="20" viewBox="0 0 20 20"><path d="M10 2 L16 7 H4Z M10 18 L16 13 H4Z" fill="none" stroke="#1010e0" stroke-width="1.5"/><path d="M2 10 H18" stroke="#1010e0" stroke-dasharray="2 1"/></svg>
<svg style="position:absolute;left:603px;top:92px;" width="20" height="20" viewBox="0 0 20 20"><defs><pattern id="pc" width="2" height="2" patternUnits="userSpaceOnUse"><rect width="1" height="1" fill="#555"/><rect x="1" y="1" width="1" height="1" fill="#555"/></pattern></defs><rect x="1.5" y="2.5" width="17" height="15" fill="#fff" stroke="#333"/><rect x="2" y="5" width="8" height="12" fill="url(#pc)"/><rect x="1.5" y="2" width="17" height="3" fill="#1a5fc0"/></svg>
<svg style="position:absolute;left:636px;top:92px;" width="20" height="20" viewBox="0 0 20 20"><defs><pattern id="pc" width="2" height="2" patternUnits="userSpaceOnUse"><rect width="1" height="1" fill="#555"/><rect x="1" y="1" width="1" height="1" fill="#555"/></pattern></defs><rect x="1.5" y="2.5" width="17" height="15" fill="#eee" stroke="#999"/><rect x="2" y="4" width="10" height="13" fill="url(#pc)" opacity=".4"/><rect x="1.5" y="2" width="17" height="2" fill="#aaa"/><circle cx="14" cy="14" r="4.5" fill="#aaa"/></svg>
<svg style="position:absolute;left:679px;top:92px;" width="20" height="20" viewBox="0 0 20 20"><defs><pattern id="pc" width="2" height="2" patternUnits="userSpaceOnUse"><rect width="1" height="1" fill="#555"/><rect x="1" y="1" width="1" height="1" fill="#555"/></pattern></defs><rect x="1.5" y="2.5" width="17" height="15" fill="#eee" stroke="#999"/><rect x="2" y="4" width="10" height="13" fill="url(#pc)" opacity=".4"/><rect x="1.5" y="2" width="17" height="2" fill="#aaa"/><circle cx="14" cy="14" r="4.5" fill="#aaa"/></svg>
<svg style="position:absolute;left:712px;top:92px;" width="20" height="20" viewBox="0 0 20 20"><defs><pattern id="pc" width="2" height="2" patternUnits="userSpaceOnUse"><rect width="1" height="1" fill="#555"/><rect x="1" y="1" width="1" height="1" fill="#555"/></pattern></defs><rect x="1.5" y="2.5" width="17" height="15" fill="#eee" stroke="#999"/><rect x="2" y="4" width="10" height="13" fill="url(#pc)" opacity=".4"/><rect x="1.5" y="2" width="17" height="2" fill="#aaa"/><circle cx="14" cy="14" r="4.5" fill="#aaa"/></svg>
<svg style="position:absolute;left:745px;top:92px;" width="20" height="20" viewBox="0 0 20 20"><defs><pattern id="pc" width="2" height="2" patternUnits="userSpaceOnUse"><rect width="1" height="1" fill="#555"/><rect x="1" y="1" width="1" height="1" fill="#555"/></pattern></defs><rect x="1.5" y="2.5" width="17" height="15" fill="#eee" stroke="#999"/><rect x="2" y="4" width="10" height="13" fill="url(#pc)" opacity=".4"/><rect x="1.5" y="2" width="17" height="2" fill="#aaa"/><circle cx="14" cy="14" r="4.5" fill="#aaa"/></svg>
<svg style="position:absolute;left:871px;top:92px;" width="20" height="20" viewBox="0 0 20 20"><rect x="2" y="3" width="16" height="11" fill="none" stroke="#1a5fc0" stroke-width="2"/><rect x="2.5" y="10.5" width="8" height="7" fill="#fff" stroke="#333"/><path d="M18 13 H9 M12 10 L9 13 L12 16" stroke="#1a5fc0" stroke-width="2" fill="none"/></svg>
<svg style="position:absolute;left:915px;top:92px;" width="20" height="20" viewBox="0 0 20 20"><rect x="2" y="3" width="16" height="11" fill="none" stroke="#1a5fc0" stroke-width="2"/><rect x="2.5" y="10.5" width="8" height="7" fill="#fff" stroke="#333"/><circle cx="14" cy="14" r="5" fill="#e02020"/><path d="M12 12 L16 16 M16 12 L12 16" stroke="#fff" stroke-width="1.6"/></svg>
<svg style="position:absolute;left:948px;top:92px;" width="20" height="20" viewBox="0 0 20 20"><rect x="2" y="3" width="16" height="11" fill="none" stroke="#1a5fc0" stroke-width="2"/><rect x="2.5" y="10.5" width="8" height="7" fill="#fff" stroke="#333"/><circle cx="14" cy="14" r="5" fill="#e02020"/><path d="M12 12 L16 16 M16 12 L12 16" stroke="#fff" stroke-width="1.6"/></svg>
<svg style="position:absolute;left:991px;top:92px;" width="20" height="20" viewBox="0 0 20 20"><rect x="2" y="3" width="16" height="11" fill="none" stroke="#1a5fc0" stroke-width="2"/><path d="M10 14 V17 M6 18 H14" stroke="#1a5fc0" stroke-width="2"/><circle cx="14" cy="14" r="5" fill="#f0b000"/><circle cx="14" cy="14" r="1.5" fill="#222"/></svg>
<svg style="position:absolute;left:1024px;top:92px;" width="20" height="20" viewBox="0 0 20 20"><rect x="2" y="3" width="16" height="11" fill="none" stroke="#1a5fc0" stroke-width="2"/><path d="M10 14 V17 M6 18 H14" stroke="#1a5fc0" stroke-width="2"/><circle cx="14" cy="14" r="5" fill="#f0b000"/><circle cx="14" cy="14" r="1.5" fill="#222"/><path d="M14 1 L18 6 H10Z M14 5 V9" fill="#222" stroke="#222" stroke-width="1.5"/></svg>
<svg style="position:absolute;left:1075px;top:92px;" width="20" height="20" viewBox="0 0 20 20"><path d="M3 6 L7 2 V18 H3Z" fill="#444"/><rect x="7.5" y="2.5" width="10" height="15" fill="#fff" stroke="#444"/><circle cx="14" cy="14" r="5" fill="#1a9a50"/><path d="M14 11 V17 M11 14 H17" stroke="#fff" stroke-width="1.6"/></svg>
<svg style="position:absolute;left:1108px;top:92px;" width="20" height="20" viewBox="0 0 20 20"><path d="M3 6 L7 2 V18 H3Z" fill="#aaa"/><rect x="7.5" y="2.5" width="10" height="15" fill="#f4f4f4" stroke="#aaa"/><path d="M9 15 L16 7" stroke="#999" stroke-width="2.5"/></svg>
<svg style="position:absolute;left:1141px;top:92px;" width="20" height="20" viewBox="0 0 20 20"><path d="M3 6 L7 2 V18 H3Z" fill="#aaa"/><rect x="7.5" y="2.5" width="10" height="15" fill="#f4f4f4" stroke="#aaa"/><circle cx="14" cy="14" r="5" fill="#aaa"/><path d="M14 11 V17 M11 14 H17" stroke="#fff" stroke-width="1.6"/></svg>
<svg style="position:absolute;left:1174px;top:92px;" width="20" height="20" viewBox="0 0 20 20"><path d="M3 6 L7 2 V18 H3Z" fill="#aaa"/><rect x="7.5" y="2.5" width="10" height="15" fill="#f4f4f4" stroke="#aaa"/><circle cx="14" cy="14" r="5" fill="#aaa"/><path d="M14 11 V17 M11 14 H17" stroke="#fff" stroke-width="1.6"/></svg>
<div style="position:absolute;left:1216px;top:88px;width:26px;height:28px;background:#f8f8f8;box-shadow:inset 0 0 0 1px #a0a0a0;"></div>
<svg style="position:absolute;left:1219px;top:92px;" width="20" height="20" viewBox="0 0 20 20"><path d="M2 6 L6 2 V18 H2Z" fill="#999"/><rect x="6.5" y="2.5" width="9" height="15" fill="#eee" stroke="#aaa"/><circle cx="12" cy="10" r="4" fill="none" stroke="#7aa0d8" stroke-width="1.8"/><path d="M9 13 L6 16" stroke="#7aa0d8" stroke-width="2"/></svg>
<div style="position:absolute;left:1250px;top:89px;width:1px;height:25px;background:#8c8c8c;"></div>
<div style="position:absolute;left:1325px;top:89px;width:1px;height:25px;background:#8c8c8c;"></div>
<div style="position:absolute;left:1368px;top:89px;width:1px;height:25px;background:#8c8c8c;"></div>
<svg style="position:absolute;left:1260px;top:92px;" width="20" height="20" viewBox="0 0 20 20"><path d="M3 6 L7 2 V18 H3Z" fill="#aaa"/><rect x="7.5" y="2.5" width="10" height="15" fill="#f0f0f0" stroke="#aaa"/><path d="M12 7 V15 M9 12 L12 15 L15 12" fill="none" stroke="#999" stroke-width="2"/></svg>
<svg style="position:absolute;left:1293px;top:92px;" width="20" height="20" viewBox="0 0 20 20"><path d="M3 6 L7 2 V18 H3Z" fill="#aaa"/><rect x="7.5" y="2.5" width="10" height="15" fill="#f0f0f0" stroke="#aaa"/><path d="M12 15 V7 M9 10 L12 7 L15 10" fill="none" stroke="#999" stroke-width="2"/></svg>
<svg style="position:absolute;left:1336px;top:92px;" width="20" height="20" viewBox="0 0 20 20"><path d="M3 6 L7 2 V18 H3Z" fill="#aaa"/><rect x="7.5" y="2.5" width="10" height="15" fill="#f0f0f0" stroke="#aaa"/><path d="M9 9 A4 4 0 1 1 10 14" fill="none" stroke="#999" stroke-width="2"/></svg>
<svg style="position:absolute;left:1380px;top:92px;" width="20" height="20" viewBox="0 0 20 20"><path d="M3 6 L7 2 V18 H3Z" fill="#aaa"/><rect x="7.5" y="2.5" width="10" height="15" fill="#f0f0f0" stroke="#aaa"/><path d="M12 8 A3 3 0 1 1 11.9 8" fill="none" stroke="#999" stroke-width="2"/></svg>
<svg style="position:absolute;left:1413px;top:92px;" width="20" height="20" viewBox="0 0 20 20"><path d="M3 6 L7 2 V18 H3Z" fill="#aaa"/><rect x="7.5" y="2.5" width="10" height="15" fill="#f0f0f0" stroke="#aaa"/><path d="M9 12 A4 4 0 1 0 12 8" fill="none" stroke="#999" stroke-width="2"/></svg>
<svg style="position:absolute;left:1445px;top:92px;" width="20" height="20" viewBox="0 0 20 20"><path d="M3 6 L7 2 V18 H3Z" fill="#aaa"/><rect x="7.5" y="2.5" width="10" height="15" fill="#f0f0f0" stroke="#aaa"/><path d="M9 9 L15 15 M15 9 L9 15" fill="none" stroke="#999" stroke-width="2"/></svg>
<div style="position:absolute;left:0px;top:119px;width:1920px;height:927px;background:#404040;"></div>
<div style="position:absolute;left:0px;top:118px;width:1920px;height:1px;background:#2b2b2b;"></div>
<div style="position:absolute;left:0px;top:119px;width:26px;height:927px;background:#6e6e6e;"></div>
<div style="position:absolute;left:25px;top:119px;width:1px;height:927px;background:#3c3c3c;"></div>
<div style="position:absolute;left:1px;top:454px;width:24px;height:121px;background:#4d4d4d;box-shadow:inset 0 0 0 1px #3a3a3a;"></div>
<div style="position:absolute;left:6.5px;top:548.0px;font:12.5px/1 'Liberation Sans',sans-serif;color:#e0e0e0;white-space:nowrap;transform-origin:0 0;transform:rotate(-90deg) scaleX(1.000);">Object Explorer</div>
<svg style="position:absolute;left:5px;top:553px;" width="16" height="16" viewBox="0 0 16 16"><path d="M8 1 L15 4.5 V11.5 L8 15 L1 11.5 V4.5Z" fill="#7ad03a" stroke="#2a5a10"/><path d="M1 4.5 L8 8 L15 4.5 M8 8 V15" stroke="#2a5a10" fill="none"/></svg>
<div style="position:absolute;left:1px;top:577px;width:24px;height:102px;background:#4d4d4d;box-shadow:inset 0 0 0 1px #3a3a3a;"></div>
<div style="position:absolute;left:6.5px;top:652.0px;font:12.5px/1 'Liberation Sans',sans-serif;color:#e0e0e0;white-space:nowrap;transform-origin:0 0;transform:rotate(-90deg) scaleX(1.000);">Script Editor</div>
<svg style="position:absolute;left:5px;top:657px;" width="16" height="16" viewBox="0 0 16 16"><path d="M1 1 H10 L15 6 V15 H1Z" fill="#1ec0a0" stroke="#0a4a40"/><path d="M10 1 V6 H15" fill="#8fe" stroke="#0a4a40"/></svg>
<div style="position:absolute;left:1px;top:681px;width:24px;height:111px;background:#4d4d4d;box-shadow:inset 0 0 0 1px #3a3a3a;"></div>
<div style="position:absolute;left:6.5px;top:765.0px;font:12.5px/1 'Liberation Sans',sans-serif;color:#e0e0e0;white-space:nowrap;transform-origin:0 0;transform:rotate(-90deg) scaleX(1.000);">View Explorer</div>
<svg style="position:absolute;left:5px;top:770px;" width="16" height="16" viewBox="0 0 16 16"><rect x="1" y="1" width="14" height="14" fill="#3a9cf0" stroke="#0a2a50"/></svg>
<div style="position:absolute;left:1px;top:795px;width:24px;height:124px;background:#4d4d4d;box-shadow:inset 0 0 0 1px #3a3a3a;"></div>
<div style="position:absolute;left:6.5px;top:892.0px;font:12.5px/1 'Liberation Sans',sans-serif;color:#e0e0e0;white-space:nowrap;transform-origin:0 0;transform:rotate(-90deg) scaleX(1.000);">Format Explorer</div>
<svg style="position:absolute;left:5px;top:897px;" width="16" height="16" viewBox="0 0 16 16"><circle cx="8" cy="8" r="7" fill="#d050d0" stroke="#502050"/></svg>
<div style="position:absolute;left:1px;top:921px;width:24px;height:124px;background:#4d4d4d;box-shadow:inset 0 0 0 1px #3a3a3a;"></div>
<div style="position:absolute;left:6.5px;top:1018.0px;font:12.5px/1 'Liberation Sans',sans-serif;color:#e0e0e0;white-space:nowrap;transform-origin:0 0;transform:rotate(-90deg) scaleX(1.000);">History Explorer</div>
<svg style="position:absolute;left:5px;top:1023px;" width="16" height="16" viewBox="0 0 16 16"><path d="M8 1 L15 11 L8 15 L1 11Z" fill="#f08a30" stroke="#3a1a00"/><path d="M8 1 V15" stroke="#3a1a00"/></svg>
<div style="position:absolute;left:26px;top:119px;width:995px;height:801px;background:#6f6f6f;box-shadow:inset 0 0 0 1px #3c3c3c;"></div>
<div style="position:absolute;left:33px;top:125px;width:14px;height:14px;background:#c8ceff;"></div>
<div style="position:absolute;left:35px;top:129px;width:10px;height:8px;background:#6f6f6f;"></div>
<svg style="position:absolute;left:51px;top:145px;" width="135" height="774" viewBox="0 0 135 774"><defs><filter id="rb" x="-100%" y="-100%" width="300%" height="300%"><feGaussianBlur stdDeviation="5"/></filter></defs><rect width="135" height="774" fill="#f20000"/><g filter="url(#rb)" fill="#500000"><ellipse cx="36" cy="275" rx="11" ry="7" opacity=".55"/><ellipse cx="120" cy="272" rx="6" ry="12" opacity=".4"/><path d="M87 307 Q109 310 119 335 L121 363 L109 355 Q99 325 84 317Z" opacity=".65"/><path d="M95 420 L135 451 L135 461 L93 426Z" opacity=".6"/><ellipse cx="133" cy="543" rx="9" ry="20" opacity=".65"/></g></svg>
<div style="position:absolute;left:51px;top:145px;width:135px;height:1px;background:#00e0e0;"></div>
<div style="position:absolute;left:51px;top:145px;width:1px;height:775px;background:#00e0e0;"></div>
<div style="position:absolute;left:50px;top:919px;width:136px;height:1px;background:#8a8a8a;"></div>
<div style="position:absolute;left:55.5px;top:151.3px;font:11px/1 'Liberation Mono',monospace;color:#fff0f0;white-space:nowrap;transform:scaleX(0.959);transform-origin:0 0;">Preview01</div>
<svg style="position:absolute;left:29px;top:145px;" width="22" height="112" viewBox="0 0 22 112"><path d="M0.5 21.5 L21.5 0.5 V111.5 H0.5Z" fill="#6e4c37" stroke="#3a3a3a"/></svg>
<div style="position:absolute;left:34.0px;top:251.0px;font:12.5px/1 'Liberation Sans',sans-serif;color:#f4ece4;white-space:nowrap;transform-origin:0 0;transform:rotate(-90deg) scaleX(0.983);">Image05_clone</div>
<svg style="position:absolute;left:29px;top:256px;" width="22" height="82" viewBox="0 0 22 82"><path d="M0.5 18 L21.5 0.5 V81.5 H0.5Z" fill="#c6b488" stroke="#3a3a3a"/></svg>
<div style="position:absolute;left:34.0px;top:332.5px;font:12.5px/1 'Liberation Sans',sans-serif;color:#111;white-space:nowrap;transform-origin:0 0;transform:rotate(-90deg) scaleX(0.994);">Preview01</div>
<svg style="position:absolute;left:34px;top:847px;" width="12" height="66" viewBox="0 0 12 66"><g fill="none" stroke="#d8d8d8" stroke-width="1"><path d="M1 1 L9 9 M9 4 V9 H4Z"/><path d="M2.5 20.5 H8.5 V26.5 H2.5Z M0 18 L2.5 20.5 M11 18 L8.5 20.5 M0 29 L2.5 26.5 M11 29 L8.5 26.5"/><path d="M1.5 37.5 H7.5 V43.5 H1.5Z M4.5 40.5 H10.5 V46.5 H4.5"/><circle cx="5.5" cy="59" r="5"/><circle cx="5.5" cy="59" r="2"/></g></svg>
<div style="position:absolute;left:186px;top:126px;width:612px;height:457px;background:#6f6f6f;box-shadow:inset 0 0 0 1px #3c3c3c;"></div>
<div style="position:absolute;left:187px;top:127px;width:2px;height:455px;background:#7a7a7a;"></div>
<div style="position:absolute;left:193px;top:132px;width:14px;height:14px;background:#c8ceff;"></div>
<div style="position:absolute;left:195px;top:136px;width:10px;height:8px;background:#6f6f6f;"></div>
<div style="position:absolute;left:337.7px;top:132.0px;font:bold 12.5px/1 'Liberation Sans',sans-serif;color:#d2d2d2;white-space:nowrap;transform:scaleX(1.124);transform-origin:0 0;">Gray 3:1 SUPPORT_IMAGE | &lt;*new*&gt;</div>
<svg style="position:absolute;left:718px;top:136px;" width="72" height="10" viewBox="0 0 72 10"><g fill="#e6e6e6" stroke="#e6e6e6"><rect x="0" y="3" width="9" height="3" stroke="none"/><rect x="21" y="1" width="9" height="2" stroke="none"/><path d="M21 8 L25.5 3 L30 8Z" stroke="none"/><rect x="42" y="3" width="9" height="3" stroke="none"/><rect x="45" y="0" width="3" height="9" stroke="none"/><path d="M64 1 L71 8 M71 1 L64 8" stroke-width="2"/></g></svg>
<svg style="position:absolute;left:189px;top:152px;" width="22" height="122" viewBox="0 0 22 122"><path d="M0.5 22 L21.5 0.5 L21.5 121.5 L0.5 121.5Z" fill="#545454" stroke="#3a3a3a"/></svg>
<div style="position:absolute;left:192.5px;top:267.0px;font:12.5px/1 'Liberation Sans',sans-serif;color:#dcdcdc;white-space:nowrap;transform-origin:0 0;transform:rotate(-90deg) scaleX(0.866);">SUPPORT_IMAGE</div>
<svg style="position:absolute;left:194.5px;top:512px;" width="12" height="66" viewBox="0 0 12 66"><g fill="none" stroke="#d8d8d8" stroke-width="1"><path d="M1 1 L9 9 M9 4 V9 H4Z"/><path d="M2.5 20.5 H8.5 V26.5 H2.5Z M0 18 L2.5 20.5 M11 18 L8.5 20.5 M0 29 L2.5 26.5 M11 29 L8.5 26.5"/><path d="M1.5 37.5 H7.5 V43.5 H1.5Z M4.5 40.5 H10.5 V46.5 H4.5"/><circle cx="5.5" cy="59" r="5"/><circle cx="5.5" cy="59" r="2"/></g></svg>
<svg style="position:absolute;left:211px;top:152px;" width="585" height="429" viewBox="0 0 585 429"><rect width="585" height="429" fill="#fff"/><path fill="#000" d="M0 48h3v3h-3zM0 102h3v3h-3zM0 108h3v3h-3zM0 216h3v3h-3zM0 258h3v3h-3zM0 324h3v3h-3zM0 378h3v3h-3zM0 390h3v3h-3zM0 393h3v3h-3zM0 414h3v3h-3zM0 417h3v3h-3zM3 18h3v3h-3zM3 21h3v3h-3zM3 24h3v3h-3zM3 258h3v3h-3zM3 261h3v3h-3zM3 264h3v3h-3zM3 267h3v3h-3zM3 273h3v3h-3zM3 297h3v3h-3zM3 312h3v3h-3zM3 318h3v3h-3zM3 336h3v3h-3zM3 375h3v3h-3zM3 387h3v3h-3zM3 390h3v3h-3zM3 393h3v3h-3zM3 396h3v3h-3zM6 15h3v3h-3zM6 186h3v3h-3zM6 195h3v3h-3zM6 222h3v3h-3zM6 234h3v3h-3zM6 261h3v3h-3zM6 267h3v3h-3zM6 270h3v3h-3zM6 273h3v3h-3zM6 282h3v3h-3zM6 285h3v3h-3zM6 387h3v3h-3zM6 390h3v3h-3zM6 402h3v3h-3zM6 408h3v3h-3zM6 426h3v3h-3zM9 18h3v3h-3zM9 90h3v3h-3zM9 189h3v3h-3zM9 222h3v3h-3zM9 228h3v3h-3zM9 282h3v3h-3zM9 285h3v3h-3zM9 288h3v3h-3zM9 291h3v3h-3zM9 357h3v3h-3zM9 384h3v3h-3zM9 390h3v3h-3zM9 408h3v3h-3zM9 411h3v3h-3zM9 426h3v3h-3zM12 147h3v3h-3zM12 228h3v3h-3zM12 231h3v3h-3zM12 270h3v3h-3zM12 288h3v3h-3zM12 330h3v3h-3zM12 342h3v3h-3zM12 351h3v3h-3zM12 360h3v3h-3zM12 363h3v3h-3zM12 384h3v3h-3zM12 399h3v3h-3zM12 420h3v3h-3zM12 426h3v3h-3zM15 39h3v3h-3zM15 51h3v3h-3zM15 66h3v3h-3zM15 72h3v3h-3zM15 75h3v3h-3zM15 87h3v3h-3zM15 102h3v3h-3zM15 120h3v3h-3zM15 231h3v3h-3zM15 306h3v3h-3zM15 315h3v3h-3zM15 318h3v3h-3zM15 330h3v3h-3zM15 342h3v3h-3zM15 351h3v3h-3zM15 390h3v3h-3zM15 396h3v3h-3zM15 402h3v3h-3zM18 120h3v3h-3zM18 156h3v3h-3zM18 168h3v3h-3zM18 213h3v3h-3zM18 216h3v3h-3zM18 246h3v3h-3zM18 264h3v3h-3zM18 315h3v3h-3zM18 318h3v3h-3zM18 375h3v3h-3zM18 396h3v3h-3zM18 405h3v3h-3zM18 417h3v3h-3zM18 423h3v3h-3zM18 426h3v3h-3zM21 45h3v3h-3zM21 54h3v3h-3zM21 69h3v3h-3zM21 72h3v3h-3zM21 168h3v3h-3zM21 267h3v3h-3zM21 270h3v3h-3zM21 306h3v3h-3zM21 327h3v3h-3zM21 330h3v3h-3zM21 336h3v3h-3zM21 411h3v3h-3zM21 414h3v3h-3zM24 30h3v3h-3zM24 81h3v3h-3zM24 192h3v3h-3zM24 231h3v3h-3zM24 255h3v3h-3zM24 306h3v3h-3zM24 324h3v3h-3zM24 363h3v3h-3zM24 405h3v3h-3zM24 411h3v3h-3zM24 414h3v3h-3zM24 417h3v3h-3zM24 426h3v3h-3zM27 6h3v3h-3zM27 9h3v3h-3zM27 42h3v3h-3zM27 48h3v3h-3zM27 72h3v3h-3zM27 75h3v3h-3zM27 78h3v3h-3zM27 90h3v3h-3zM27 93h3v3h-3zM27 99h3v3h-3zM27 147h3v3h-3zM27 159h3v3h-3zM27 186h3v3h-3zM27 189h3v3h-3zM27 231h3v3h-3zM27 255h3v3h-3zM27 279h3v3h-3zM27 285h3v3h-3zM27 297h3v3h-3zM27 300h3v3h-3zM27 342h3v3h-3zM27 345h3v3h-3zM27 348h3v3h-3zM27 393h3v3h-3zM27 396h3v3h-3zM27 405h3v3h-3zM27 411h3v3h-3zM27 414h3v3h-3zM27 417h3v3h-3zM30 27h3v3h-3zM30 30h3v3h-3zM30 36h3v3h-3zM30 39h3v3h-3zM30 84h3v3h-3zM30 111h3v3h-3zM30 114h3v3h-3zM30 117h3v3h-3zM30 264h3v3h-3zM30 279h3v3h-3zM30 285h3v3h-3zM30 288h3v3h-3zM30 354h3v3h-3zM30 360h3v3h-3zM30 393h3v3h-3zM30 396h3v3h-3zM30 399h3v3h-3zM30 405h3v3h-3zM30 408h3v3h-3zM30 414h3v3h-3zM30 417h3v3h-3zM33 39h3v3h-3zM33 147h3v3h-3zM33 177h3v3h-3zM33 228h3v3h-3zM33 231h3v3h-3zM33 240h3v3h-3zM33 243h3v3h-3zM33 264h3v3h-3zM33 267h3v3h-3zM33 273h3v3h-3zM33 276h3v3h-3zM33 324h3v3h-3zM33 327h3v3h-3zM33 360h3v3h-3zM33 366h3v3h-3zM33 390h3v3h-3zM33 399h3v3h-3zM33 414h3v3h-3zM33 423h3v3h-3zM36 42h3v3h-3zM36 132h3v3h-3zM36 159h3v3h-3zM36 228h3v3h-3zM36 300h3v3h-3zM36 315h3v3h-3zM36 354h3v3h-3zM36 360h3v3h-3zM36 372h3v3h-3zM36 378h3v3h-3zM36 390h3v3h-3zM36 405h3v3h-3zM39 51h3v3h-3zM39 108h3v3h-3zM39 111h3v3h-3zM39 114h3v3h-3zM39 183h3v3h-3zM39 294h3v3h-3zM39 297h3v3h-3zM39 324h3v3h-3zM39 327h3v3h-3zM39 345h3v3h-3zM39 354h3v3h-3zM39 402h3v3h-3zM39 405h3v3h-3zM39 408h3v3h-3zM39 417h3v3h-3zM39 426h3v3h-3zM42 144h3v3h-3zM42 180h3v3h-3zM42 234h3v3h-3zM42 270h3v3h-3zM42 288h3v3h-3zM42 291h3v3h-3zM42 303h3v3h-3zM42 306h3v3h-3zM42 309h3v3h-3zM42 324h3v3h-3zM42 327h3v3h-3zM42 348h3v3h-3zM42 360h3v3h-3zM42 384h3v3h-3zM42 393h3v3h-3zM42 396h3v3h-3zM42 408h3v3h-3zM42 417h3v3h-3zM42 426h3v3h-3zM45 0h3v3h-3zM45 27h3v3h-3zM45 63h3v3h-3zM45 66h3v3h-3zM45 120h3v3h-3zM45 123h3v3h-3zM45 171h3v3h-3zM45 234h3v3h-3zM45 294h3v3h-3zM45 306h3v3h-3zM45 309h3v3h-3zM45 324h3v3h-3zM45 327h3v3h-3zM45 363h3v3h-3zM45 366h3v3h-3zM45 381h3v3h-3zM45 390h3v3h-3zM48 27h3v3h-3zM48 63h3v3h-3zM48 66h3v3h-3zM48 69h3v3h-3zM48 114h3v3h-3zM48 147h3v3h-3zM48 183h3v3h-3zM48 201h3v3h-3zM48 204h3v3h-3zM48 219h3v3h-3zM48 324h3v3h-3zM51 39h3v3h-3zM51 81h3v3h-3zM51 96h3v3h-3zM51 135h3v3h-3zM51 138h3v3h-3zM51 147h3v3h-3zM51 183h3v3h-3zM51 204h3v3h-3zM51 321h3v3h-3zM51 330h3v3h-3zM51 363h3v3h-3zM51 366h3v3h-3zM51 387h3v3h-3zM51 390h3v3h-3zM51 396h3v3h-3zM54 150h3v3h-3zM54 168h3v3h-3zM54 213h3v3h-3zM54 216h3v3h-3zM54 318h3v3h-3zM54 321h3v3h-3zM54 324h3v3h-3zM54 330h3v3h-3zM54 333h3v3h-3zM54 336h3v3h-3zM54 357h3v3h-3zM54 363h3v3h-3zM54 390h3v3h-3zM54 396h3v3h-3zM54 405h3v3h-3zM54 408h3v3h-3zM54 417h3v3h-3zM57 27h3v3h-3zM57 63h3v3h-3zM57 90h3v3h-3zM57 150h3v3h-3zM57 156h3v3h-3zM57 171h3v3h-3zM57 192h3v3h-3zM57 219h3v3h-3zM57 225h3v3h-3zM57 228h3v3h-3zM57 318h3v3h-3zM57 330h3v3h-3zM57 345h3v3h-3zM57 348h3v3h-3zM57 357h3v3h-3zM57 390h3v3h-3zM57 423h3v3h-3zM60 0h3v3h-3zM60 6h3v3h-3zM60 54h3v3h-3zM60 57h3v3h-3zM60 132h3v3h-3zM60 192h3v3h-3zM60 204h3v3h-3zM60 237h3v3h-3zM60 255h3v3h-3zM60 288h3v3h-3zM60 324h3v3h-3zM60 336h3v3h-3zM60 339h3v3h-3zM60 357h3v3h-3zM60 384h3v3h-3zM60 387h3v3h-3zM60 417h3v3h-3zM60 420h3v3h-3zM60 423h3v3h-3zM60 426h3v3h-3zM63 0h3v3h-3zM63 51h3v3h-3zM63 90h3v3h-3zM63 153h3v3h-3zM63 228h3v3h-3zM63 231h3v3h-3zM63 234h3v3h-3zM63 246h3v3h-3zM63 264h3v3h-3zM63 267h3v3h-3zM63 345h3v3h-3zM63 363h3v3h-3zM63 408h3v3h-3zM63 414h3v3h-3zM63 417h3v3h-3zM63 426h3v3h-3zM66 0h3v3h-3zM66 72h3v3h-3zM66 108h3v3h-3zM66 147h3v3h-3zM66 165h3v3h-3zM66 180h3v3h-3zM66 216h3v3h-3zM66 246h3v3h-3zM66 303h3v3h-3zM66 312h3v3h-3zM66 324h3v3h-3zM66 363h3v3h-3zM66 369h3v3h-3zM66 396h3v3h-3zM66 402h3v3h-3zM66 423h3v3h-3zM69 21h3v3h-3zM69 42h3v3h-3zM69 72h3v3h-3zM69 177h3v3h-3zM69 189h3v3h-3zM69 240h3v3h-3zM69 243h3v3h-3zM69 279h3v3h-3zM69 282h3v3h-3zM69 324h3v3h-3zM69 330h3v3h-3zM69 363h3v3h-3zM69 366h3v3h-3zM69 372h3v3h-3zM69 381h3v3h-3zM69 393h3v3h-3zM69 405h3v3h-3zM72 15h3v3h-3zM72 33h3v3h-3zM72 36h3v3h-3zM72 42h3v3h-3zM72 60h3v3h-3zM72 84h3v3h-3zM72 117h3v3h-3zM72 129h3v3h-3zM72 177h3v3h-3zM72 207h3v3h-3zM72 219h3v3h-3zM72 222h3v3h-3zM72 240h3v3h-3zM72 279h3v3h-3zM72 285h3v3h-3zM72 300h3v3h-3zM72 327h3v3h-3zM72 330h3v3h-3zM72 333h3v3h-3zM72 336h3v3h-3zM72 339h3v3h-3zM72 351h3v3h-3zM72 381h3v3h-3zM72 384h3v3h-3zM72 387h3v3h-3zM72 390h3v3h-3zM72 417h3v3h-3zM72 423h3v3h-3zM75 15h3v3h-3zM75 36h3v3h-3zM75 75h3v3h-3zM75 90h3v3h-3zM75 99h3v3h-3zM75 132h3v3h-3zM75 156h3v3h-3zM75 177h3v3h-3zM75 183h3v3h-3zM75 243h3v3h-3zM75 246h3v3h-3zM75 279h3v3h-3zM75 297h3v3h-3zM75 309h3v3h-3zM75 354h3v3h-3zM75 360h3v3h-3zM75 369h3v3h-3zM75 372h3v3h-3zM75 384h3v3h-3zM75 390h3v3h-3zM75 393h3v3h-3zM75 399h3v3h-3zM75 402h3v3h-3zM75 417h3v3h-3zM75 426h3v3h-3zM78 33h3v3h-3zM78 57h3v3h-3zM78 90h3v3h-3zM78 93h3v3h-3zM78 96h3v3h-3zM78 111h3v3h-3zM78 114h3v3h-3zM78 132h3v3h-3zM78 135h3v3h-3zM78 156h3v3h-3zM78 171h3v3h-3zM78 219h3v3h-3zM78 225h3v3h-3zM78 261h3v3h-3zM78 264h3v3h-3zM78 291h3v3h-3zM78 315h3v3h-3zM78 336h3v3h-3zM78 339h3v3h-3zM78 351h3v3h-3zM78 354h3v3h-3zM78 357h3v3h-3zM78 366h3v3h-3zM78 402h3v3h-3zM78 405h3v3h-3zM81 33h3v3h-3zM81 60h3v3h-3zM81 159h3v3h-3zM81 171h3v3h-3zM81 210h3v3h-3zM81 222h3v3h-3zM81 231h3v3h-3zM81 234h3v3h-3zM81 243h3v3h-3zM81 252h3v3h-3zM81 261h3v3h-3zM81 300h3v3h-3zM81 315h3v3h-3zM81 333h3v3h-3zM81 348h3v3h-3zM81 387h3v3h-3zM81 396h3v3h-3zM81 402h3v3h-3zM81 423h3v3h-3zM84 120h3v3h-3zM84 129h3v3h-3zM84 144h3v3h-3zM84 147h3v3h-3zM84 153h3v3h-3zM84 174h3v3h-3zM84 210h3v3h-3zM84 255h3v3h-3zM84 279h3v3h-3zM84 282h3v3h-3zM84 294h3v3h-3zM84 315h3v3h-3zM84 324h3v3h-3zM84 330h3v3h-3zM84 333h3v3h-3zM84 375h3v3h-3zM84 384h3v3h-3zM84 390h3v3h-3zM84 396h3v3h-3zM84 402h3v3h-3zM84 423h3v3h-3zM84 426h3v3h-3zM87 33h3v3h-3zM87 36h3v3h-3zM87 54h3v3h-3zM87 60h3v3h-3zM87 120h3v3h-3zM87 165h3v3h-3zM87 300h3v3h-3zM87 303h3v3h-3zM87 306h3v3h-3zM87 312h3v3h-3zM87 372h3v3h-3zM87 384h3v3h-3zM87 387h3v3h-3zM87 390h3v3h-3zM87 405h3v3h-3zM87 420h3v3h-3zM90 6h3v3h-3zM90 30h3v3h-3zM90 51h3v3h-3zM90 54h3v3h-3zM90 102h3v3h-3zM90 177h3v3h-3zM90 183h3v3h-3zM90 291h3v3h-3zM90 294h3v3h-3zM90 300h3v3h-3zM90 312h3v3h-3zM90 315h3v3h-3zM90 333h3v3h-3zM90 339h3v3h-3zM90 342h3v3h-3zM90 345h3v3h-3zM90 378h3v3h-3zM90 381h3v3h-3zM90 399h3v3h-3zM90 405h3v3h-3zM90 411h3v3h-3zM93 12h3v3h-3zM93 39h3v3h-3zM93 87h3v3h-3zM93 93h3v3h-3zM93 189h3v3h-3zM93 249h3v3h-3zM93 255h3v3h-3zM93 291h3v3h-3zM93 300h3v3h-3zM93 306h3v3h-3zM93 309h3v3h-3zM93 318h3v3h-3zM93 339h3v3h-3zM93 357h3v3h-3zM93 393h3v3h-3zM93 396h3v3h-3zM93 405h3v3h-3zM93 414h3v3h-3zM96 3h3v3h-3zM96 15h3v3h-3zM96 18h3v3h-3zM96 63h3v3h-3zM96 87h3v3h-3zM96 150h3v3h-3zM96 192h3v3h-3zM96 207h3v3h-3zM96 321h3v3h-3zM96 339h3v3h-3zM96 354h3v3h-3zM96 384h3v3h-3zM96 405h3v3h-3zM96 408h3v3h-3zM96 417h3v3h-3zM99 3h3v3h-3zM99 18h3v3h-3zM99 21h3v3h-3zM99 150h3v3h-3zM99 243h3v3h-3zM99 291h3v3h-3zM99 318h3v3h-3zM99 330h3v3h-3zM99 414h3v3h-3zM99 420h3v3h-3zM99 426h3v3h-3zM102 33h3v3h-3zM102 75h3v3h-3zM102 129h3v3h-3zM102 156h3v3h-3zM102 192h3v3h-3zM102 210h3v3h-3zM102 213h3v3h-3zM102 216h3v3h-3zM102 243h3v3h-3zM102 246h3v3h-3zM102 249h3v3h-3zM102 291h3v3h-3zM102 315h3v3h-3zM102 330h3v3h-3zM102 333h3v3h-3zM102 336h3v3h-3zM102 339h3v3h-3zM102 342h3v3h-3zM102 360h3v3h-3zM102 363h3v3h-3zM102 369h3v3h-3zM102 375h3v3h-3zM102 405h3v3h-3zM102 414h3v3h-3zM102 423h3v3h-3zM105 21h3v3h-3zM105 24h3v3h-3zM105 33h3v3h-3zM105 36h3v3h-3zM105 51h3v3h-3zM105 93h3v3h-3zM105 138h3v3h-3zM105 141h3v3h-3zM105 156h3v3h-3zM105 249h3v3h-3zM105 252h3v3h-3zM105 303h3v3h-3zM105 342h3v3h-3zM105 351h3v3h-3zM108 12h3v3h-3zM108 96h3v3h-3zM108 99h3v3h-3zM108 141h3v3h-3zM108 159h3v3h-3zM108 177h3v3h-3zM108 252h3v3h-3zM108 312h3v3h-3zM108 327h3v3h-3zM108 405h3v3h-3zM108 414h3v3h-3zM111 3h3v3h-3zM111 36h3v3h-3zM111 75h3v3h-3zM111 207h3v3h-3zM111 213h3v3h-3zM111 243h3v3h-3zM111 249h3v3h-3zM111 264h3v3h-3zM111 312h3v3h-3zM111 315h3v3h-3zM111 327h3v3h-3zM111 339h3v3h-3zM111 342h3v3h-3zM111 351h3v3h-3zM111 357h3v3h-3zM111 363h3v3h-3zM111 399h3v3h-3zM114 3h3v3h-3zM114 6h3v3h-3zM114 36h3v3h-3zM114 147h3v3h-3zM114 150h3v3h-3zM114 156h3v3h-3zM114 207h3v3h-3zM114 213h3v3h-3zM114 216h3v3h-3zM114 243h3v3h-3zM114 249h3v3h-3zM114 279h3v3h-3zM114 300h3v3h-3zM114 303h3v3h-3zM114 321h3v3h-3zM114 327h3v3h-3zM114 345h3v3h-3zM114 348h3v3h-3zM114 369h3v3h-3zM114 396h3v3h-3zM114 399h3v3h-3zM114 411h3v3h-3zM117 21h3v3h-3zM117 36h3v3h-3zM117 96h3v3h-3zM117 102h3v3h-3zM117 237h3v3h-3zM117 255h3v3h-3zM117 273h3v3h-3zM117 297h3v3h-3zM117 303h3v3h-3zM117 324h3v3h-3zM117 330h3v3h-3zM117 354h3v3h-3zM117 402h3v3h-3zM120 141h3v3h-3zM120 201h3v3h-3zM120 210h3v3h-3zM120 231h3v3h-3zM120 273h3v3h-3zM120 285h3v3h-3zM120 318h3v3h-3zM120 339h3v3h-3zM120 375h3v3h-3zM120 378h3v3h-3zM120 399h3v3h-3zM120 402h3v3h-3zM123 3h3v3h-3zM123 24h3v3h-3zM123 84h3v3h-3zM123 135h3v3h-3zM123 141h3v3h-3zM123 150h3v3h-3zM123 189h3v3h-3zM123 192h3v3h-3zM123 213h3v3h-3zM123 228h3v3h-3zM123 285h3v3h-3zM123 300h3v3h-3zM123 345h3v3h-3zM123 357h3v3h-3zM123 381h3v3h-3zM123 402h3v3h-3zM123 426h3v3h-3zM126 27h3v3h-3zM126 48h3v3h-3zM126 192h3v3h-3zM126 228h3v3h-3zM126 237h3v3h-3zM126 255h3v3h-3zM126 285h3v3h-3zM126 312h3v3h-3zM126 315h3v3h-3zM126 324h3v3h-3zM126 348h3v3h-3zM126 387h3v3h-3zM126 402h3v3h-3zM126 420h3v3h-3zM126 423h3v3h-3zM129 27h3v3h-3zM129 48h3v3h-3zM129 108h3v3h-3zM129 339h3v3h-3zM129 342h3v3h-3zM129 351h3v3h-3zM129 354h3v3h-3zM129 399h3v3h-3zM132 18h3v3h-3zM132 144h3v3h-3zM132 168h3v3h-3zM132 246h3v3h-3zM132 285h3v3h-3zM132 342h3v3h-3zM132 390h3v3h-3zM135 0h3v3h-3zM135 3h3v3h-3zM135 51h3v3h-3zM135 54h3v3h-3zM135 180h3v3h-3zM135 327h3v3h-3zM135 366h3v3h-3zM135 369h3v3h-3zM135 384h3v3h-3zM135 399h3v3h-3zM135 402h3v3h-3zM135 420h3v3h-3zM138 96h3v3h-3zM138 105h3v3h-3zM138 114h3v3h-3zM138 120h3v3h-3zM138 123h3v3h-3zM138 138h3v3h-3zM138 351h3v3h-3zM138 354h3v3h-3zM138 357h3v3h-3zM138 381h3v3h-3zM138 399h3v3h-3zM138 402h3v3h-3zM141 6h3v3h-3zM141 105h3v3h-3zM141 114h3v3h-3zM141 120h3v3h-3zM141 138h3v3h-3zM141 147h3v3h-3zM141 204h3v3h-3zM141 237h3v3h-3zM141 267h3v3h-3zM141 279h3v3h-3zM141 282h3v3h-3zM141 351h3v3h-3zM144 318h3v3h-3zM144 351h3v3h-3zM144 357h3v3h-3zM144 384h3v3h-3zM144 396h3v3h-3zM144 414h3v3h-3zM144 420h3v3h-3zM144 423h3v3h-3zM147 126h3v3h-3zM147 177h3v3h-3zM147 240h3v3h-3zM147 258h3v3h-3zM147 261h3v3h-3zM147 297h3v3h-3zM147 318h3v3h-3zM147 330h3v3h-3zM147 333h3v3h-3zM147 339h3v3h-3zM147 345h3v3h-3zM147 384h3v3h-3zM150 177h3v3h-3zM150 180h3v3h-3zM150 183h3v3h-3zM150 234h3v3h-3zM150 237h3v3h-3zM150 297h3v3h-3zM150 315h3v3h-3zM150 318h3v3h-3zM150 324h3v3h-3zM150 345h3v3h-3zM150 348h3v3h-3zM150 360h3v3h-3zM150 369h3v3h-3zM150 378h3v3h-3zM150 384h3v3h-3zM153 3h3v3h-3zM153 18h3v3h-3zM153 42h3v3h-3zM153 63h3v3h-3zM153 105h3v3h-3zM153 144h3v3h-3zM153 249h3v3h-3zM153 288h3v3h-3zM153 300h3v3h-3zM153 318h3v3h-3zM153 333h3v3h-3zM153 339h3v3h-3zM153 345h3v3h-3zM153 366h3v3h-3zM153 426h3v3h-3zM156 63h3v3h-3zM156 141h3v3h-3zM156 144h3v3h-3zM156 306h3v3h-3zM156 345h3v3h-3zM159 15h3v3h-3zM159 18h3v3h-3zM159 21h3v3h-3zM159 48h3v3h-3zM159 87h3v3h-3zM159 99h3v3h-3zM159 105h3v3h-3zM159 108h3v3h-3zM159 123h3v3h-3zM159 324h3v3h-3zM159 327h3v3h-3zM159 345h3v3h-3zM159 357h3v3h-3zM159 378h3v3h-3zM159 381h3v3h-3zM159 423h3v3h-3zM162 18h3v3h-3zM162 27h3v3h-3zM162 30h3v3h-3zM162 39h3v3h-3zM162 66h3v3h-3zM162 69h3v3h-3zM162 99h3v3h-3zM162 219h3v3h-3zM162 303h3v3h-3zM162 330h3v3h-3zM162 336h3v3h-3zM162 339h3v3h-3zM162 342h3v3h-3zM162 351h3v3h-3zM162 354h3v3h-3zM162 363h3v3h-3zM162 396h3v3h-3zM162 423h3v3h-3zM165 39h3v3h-3zM165 54h3v3h-3zM165 57h3v3h-3zM165 234h3v3h-3zM165 279h3v3h-3zM165 303h3v3h-3zM165 333h3v3h-3zM165 339h3v3h-3zM165 345h3v3h-3zM165 348h3v3h-3zM165 372h3v3h-3zM165 396h3v3h-3zM165 399h3v3h-3zM165 411h3v3h-3zM165 414h3v3h-3zM165 417h3v3h-3zM165 423h3v3h-3zM168 27h3v3h-3zM168 30h3v3h-3zM168 66h3v3h-3zM168 111h3v3h-3zM168 273h3v3h-3zM168 276h3v3h-3zM168 282h3v3h-3zM168 285h3v3h-3zM168 297h3v3h-3zM168 303h3v3h-3zM168 321h3v3h-3zM168 354h3v3h-3zM168 357h3v3h-3zM168 417h3v3h-3zM171 81h3v3h-3zM171 87h3v3h-3zM171 123h3v3h-3zM171 150h3v3h-3zM171 237h3v3h-3zM171 324h3v3h-3zM171 360h3v3h-3zM171 387h3v3h-3zM171 390h3v3h-3zM171 414h3v3h-3zM174 48h3v3h-3zM174 96h3v3h-3zM174 135h3v3h-3zM174 171h3v3h-3zM174 177h3v3h-3zM174 222h3v3h-3zM177 24h3v3h-3zM177 63h3v3h-3zM177 75h3v3h-3zM177 96h3v3h-3zM177 123h3v3h-3zM177 135h3v3h-3zM177 177h3v3h-3zM177 213h3v3h-3zM177 222h3v3h-3zM177 252h3v3h-3zM177 303h3v3h-3zM177 312h3v3h-3zM177 348h3v3h-3zM177 357h3v3h-3zM177 360h3v3h-3zM180 0h3v3h-3zM180 63h3v3h-3zM180 99h3v3h-3zM180 123h3v3h-3zM180 150h3v3h-3zM180 216h3v3h-3zM180 306h3v3h-3zM180 348h3v3h-3zM180 354h3v3h-3zM180 360h3v3h-3zM180 417h3v3h-3zM180 423h3v3h-3zM183 105h3v3h-3zM183 168h3v3h-3zM183 171h3v3h-3zM183 183h3v3h-3zM183 216h3v3h-3zM183 225h3v3h-3zM183 243h3v3h-3zM183 273h3v3h-3zM183 276h3v3h-3zM183 306h3v3h-3zM183 315h3v3h-3zM183 333h3v3h-3zM183 390h3v3h-3zM183 393h3v3h-3zM186 21h3v3h-3zM186 99h3v3h-3zM186 102h3v3h-3zM186 105h3v3h-3zM186 174h3v3h-3zM186 180h3v3h-3zM186 192h3v3h-3zM186 267h3v3h-3zM186 279h3v3h-3zM186 294h3v3h-3zM186 297h3v3h-3zM186 318h3v3h-3zM186 327h3v3h-3zM186 348h3v3h-3zM186 351h3v3h-3zM186 360h3v3h-3zM186 363h3v3h-3zM186 384h3v3h-3zM189 48h3v3h-3zM189 51h3v3h-3zM189 72h3v3h-3zM189 318h3v3h-3zM189 354h3v3h-3zM189 357h3v3h-3zM189 360h3v3h-3zM189 393h3v3h-3zM192 48h3v3h-3zM192 66h3v3h-3zM192 87h3v3h-3zM192 90h3v3h-3zM192 93h3v3h-3zM192 135h3v3h-3zM192 150h3v3h-3zM192 189h3v3h-3zM192 192h3v3h-3zM192 210h3v3h-3zM192 219h3v3h-3zM192 243h3v3h-3zM192 267h3v3h-3zM192 351h3v3h-3zM192 366h3v3h-3zM192 372h3v3h-3zM192 381h3v3h-3zM192 387h3v3h-3zM195 48h3v3h-3zM195 117h3v3h-3zM195 126h3v3h-3zM195 150h3v3h-3zM195 156h3v3h-3zM195 168h3v3h-3zM195 192h3v3h-3zM195 198h3v3h-3zM195 201h3v3h-3zM195 219h3v3h-3zM195 285h3v3h-3zM195 288h3v3h-3zM195 342h3v3h-3zM195 351h3v3h-3zM195 372h3v3h-3zM198 48h3v3h-3zM198 168h3v3h-3zM198 207h3v3h-3zM198 213h3v3h-3zM198 369h3v3h-3zM201 42h3v3h-3zM201 81h3v3h-3zM201 84h3v3h-3zM201 87h3v3h-3zM201 90h3v3h-3zM201 99h3v3h-3zM201 102h3v3h-3zM201 150h3v3h-3zM201 204h3v3h-3zM201 207h3v3h-3zM201 243h3v3h-3zM201 246h3v3h-3zM201 291h3v3h-3zM201 294h3v3h-3zM201 312h3v3h-3zM201 321h3v3h-3zM201 330h3v3h-3zM201 339h3v3h-3zM201 375h3v3h-3zM201 402h3v3h-3zM201 414h3v3h-3zM204 27h3v3h-3zM204 42h3v3h-3zM204 249h3v3h-3zM204 330h3v3h-3zM204 333h3v3h-3zM204 375h3v3h-3zM204 399h3v3h-3zM207 27h3v3h-3zM207 114h3v3h-3zM207 144h3v3h-3zM207 150h3v3h-3zM207 165h3v3h-3zM207 180h3v3h-3zM207 183h3v3h-3zM207 276h3v3h-3zM207 333h3v3h-3zM207 366h3v3h-3zM207 369h3v3h-3zM207 372h3v3h-3zM207 396h3v3h-3zM207 411h3v3h-3zM207 423h3v3h-3zM210 21h3v3h-3zM210 24h3v3h-3zM210 48h3v3h-3zM210 51h3v3h-3zM210 69h3v3h-3zM210 144h3v3h-3zM210 150h3v3h-3zM210 192h3v3h-3zM210 348h3v3h-3zM210 366h3v3h-3zM210 387h3v3h-3zM213 33h3v3h-3zM213 105h3v3h-3zM213 162h3v3h-3zM213 165h3v3h-3zM213 171h3v3h-3zM213 174h3v3h-3zM213 195h3v3h-3zM213 318h3v3h-3zM213 339h3v3h-3zM213 354h3v3h-3zM213 408h3v3h-3zM216 84h3v3h-3zM216 93h3v3h-3zM216 132h3v3h-3zM216 261h3v3h-3zM216 321h3v3h-3zM216 417h3v3h-3zM219 6h3v3h-3zM219 18h3v3h-3zM219 21h3v3h-3zM219 93h3v3h-3zM219 99h3v3h-3zM219 132h3v3h-3zM219 261h3v3h-3zM219 282h3v3h-3zM219 285h3v3h-3zM219 312h3v3h-3zM219 375h3v3h-3zM222 87h3v3h-3zM222 132h3v3h-3zM222 144h3v3h-3zM222 156h3v3h-3zM222 186h3v3h-3zM222 267h3v3h-3zM222 348h3v3h-3zM222 363h3v3h-3zM222 372h3v3h-3zM222 375h3v3h-3zM222 381h3v3h-3zM222 405h3v3h-3zM225 9h3v3h-3zM225 159h3v3h-3zM225 321h3v3h-3zM225 324h3v3h-3zM225 336h3v3h-3zM225 339h3v3h-3zM225 408h3v3h-3zM228 198h3v3h-3zM228 282h3v3h-3zM228 303h3v3h-3zM228 369h3v3h-3zM228 372h3v3h-3zM228 387h3v3h-3zM228 396h3v3h-3zM231 120h3v3h-3zM231 282h3v3h-3zM231 312h3v3h-3zM231 315h3v3h-3zM231 420h3v3h-3zM234 129h3v3h-3zM234 135h3v3h-3zM234 261h3v3h-3zM234 264h3v3h-3zM234 291h3v3h-3zM234 357h3v3h-3zM234 366h3v3h-3zM237 45h3v3h-3zM237 351h3v3h-3zM240 12h3v3h-3zM240 195h3v3h-3zM240 204h3v3h-3zM240 351h3v3h-3zM240 360h3v3h-3zM240 363h3v3h-3zM240 402h3v3h-3zM240 414h3v3h-3zM240 417h3v3h-3zM243 282h3v3h-3zM243 297h3v3h-3zM243 300h3v3h-3zM243 321h3v3h-3zM243 378h3v3h-3zM243 384h3v3h-3zM243 399h3v3h-3zM243 426h3v3h-3zM246 39h3v3h-3zM246 186h3v3h-3zM246 378h3v3h-3zM249 39h3v3h-3zM249 369h3v3h-3zM249 372h3v3h-3zM249 381h3v3h-3zM249 384h3v3h-3zM249 408h3v3h-3zM249 411h3v3h-3zM252 168h3v3h-3zM252 252h3v3h-3zM252 303h3v3h-3zM252 306h3v3h-3zM252 345h3v3h-3zM252 366h3v3h-3zM255 75h3v3h-3zM255 168h3v3h-3zM255 315h3v3h-3zM255 342h3v3h-3zM255 345h3v3h-3zM255 402h3v3h-3zM255 405h3v3h-3zM258 12h3v3h-3zM258 15h3v3h-3zM258 147h3v3h-3zM258 222h3v3h-3zM258 318h3v3h-3zM258 342h3v3h-3zM258 393h3v3h-3zM258 396h3v3h-3zM261 30h3v3h-3zM261 45h3v3h-3zM261 234h3v3h-3zM261 318h3v3h-3zM261 396h3v3h-3zM264 60h3v3h-3zM264 114h3v3h-3zM264 321h3v3h-3zM267 6h3v3h-3zM267 60h3v3h-3zM267 402h3v3h-3zM270 45h3v3h-3zM270 63h3v3h-3zM270 84h3v3h-3zM270 120h3v3h-3zM270 375h3v3h-3zM270 387h3v3h-3zM273 27h3v3h-3zM273 36h3v3h-3zM273 120h3v3h-3zM273 252h3v3h-3zM273 279h3v3h-3zM273 339h3v3h-3zM273 375h3v3h-3zM273 387h3v3h-3zM273 390h3v3h-3zM276 42h3v3h-3zM276 162h3v3h-3zM276 222h3v3h-3zM276 249h3v3h-3zM276 252h3v3h-3zM276 279h3v3h-3zM276 300h3v3h-3zM276 327h3v3h-3zM279 135h3v3h-3zM279 165h3v3h-3zM279 222h3v3h-3zM279 300h3v3h-3zM279 327h3v3h-3zM279 390h3v3h-3zM279 396h3v3h-3zM282 21h3v3h-3zM282 27h3v3h-3zM282 363h3v3h-3zM282 393h3v3h-3zM282 396h3v3h-3zM282 402h3v3h-3zM282 405h3v3h-3zM282 411h3v3h-3zM282 414h3v3h-3zM285 21h3v3h-3zM285 60h3v3h-3zM285 81h3v3h-3zM285 363h3v3h-3zM285 387h3v3h-3zM285 399h3v3h-3zM285 402h3v3h-3zM288 30h3v3h-3zM288 33h3v3h-3zM288 219h3v3h-3zM288 306h3v3h-3zM288 387h3v3h-3zM291 3h3v3h-3zM291 168h3v3h-3zM291 171h3v3h-3zM291 180h3v3h-3zM291 183h3v3h-3zM291 306h3v3h-3zM291 312h3v3h-3zM291 336h3v3h-3zM294 30h3v3h-3zM294 33h3v3h-3zM294 75h3v3h-3zM294 201h3v3h-3zM294 312h3v3h-3zM294 357h3v3h-3zM294 384h3v3h-3zM294 387h3v3h-3zM294 411h3v3h-3zM297 15h3v3h-3zM297 75h3v3h-3zM300 21h3v3h-3zM300 24h3v3h-3zM300 42h3v3h-3zM300 339h3v3h-3zM300 399h3v3h-3zM303 21h3v3h-3zM303 39h3v3h-3zM303 42h3v3h-3zM303 93h3v3h-3zM303 96h3v3h-3zM303 366h3v3h-3zM303 417h3v3h-3zM306 243h3v3h-3zM306 249h3v3h-3zM306 345h3v3h-3zM306 402h3v3h-3zM306 405h3v3h-3zM306 417h3v3h-3zM306 420h3v3h-3zM309 78h3v3h-3zM309 81h3v3h-3zM309 99h3v3h-3zM309 102h3v3h-3zM309 105h3v3h-3zM309 216h3v3h-3zM309 243h3v3h-3zM309 249h3v3h-3zM309 345h3v3h-3zM309 414h3v3h-3zM309 417h3v3h-3zM309 420h3v3h-3zM309 423h3v3h-3zM312 30h3v3h-3zM312 33h3v3h-3zM312 48h3v3h-3zM312 51h3v3h-3zM312 381h3v3h-3zM315 90h3v3h-3zM315 93h3v3h-3zM315 141h3v3h-3zM315 360h3v3h-3zM315 381h3v3h-3zM318 141h3v3h-3zM318 144h3v3h-3zM318 156h3v3h-3zM318 183h3v3h-3zM318 186h3v3h-3zM318 336h3v3h-3zM318 426h3v3h-3zM321 138h3v3h-3zM321 183h3v3h-3zM321 213h3v3h-3zM321 270h3v3h-3zM321 354h3v3h-3zM324 42h3v3h-3zM324 66h3v3h-3zM324 120h3v3h-3zM324 138h3v3h-3zM324 168h3v3h-3zM324 354h3v3h-3zM324 405h3v3h-3zM327 6h3v3h-3zM327 18h3v3h-3zM327 42h3v3h-3zM327 327h3v3h-3zM330 30h3v3h-3zM330 81h3v3h-3zM330 363h3v3h-3zM333 93h3v3h-3zM333 183h3v3h-3zM333 306h3v3h-3zM333 393h3v3h-3zM333 396h3v3h-3zM336 0h3v3h-3zM336 57h3v3h-3zM336 60h3v3h-3zM336 144h3v3h-3zM336 357h3v3h-3zM336 375h3v3h-3zM339 312h3v3h-3zM339 342h3v3h-3zM339 345h3v3h-3zM339 375h3v3h-3zM339 378h3v3h-3zM339 381h3v3h-3zM339 411h3v3h-3zM339 417h3v3h-3zM342 48h3v3h-3zM342 57h3v3h-3zM342 81h3v3h-3zM342 210h3v3h-3zM342 237h3v3h-3zM342 342h3v3h-3zM342 369h3v3h-3zM342 381h3v3h-3zM345 39h3v3h-3zM345 57h3v3h-3zM345 81h3v3h-3zM345 135h3v3h-3zM345 183h3v3h-3zM345 240h3v3h-3zM345 243h3v3h-3zM345 288h3v3h-3zM345 297h3v3h-3zM348 21h3v3h-3zM348 33h3v3h-3zM348 54h3v3h-3zM348 57h3v3h-3zM348 69h3v3h-3zM348 135h3v3h-3zM348 180h3v3h-3zM348 258h3v3h-3zM348 324h3v3h-3zM348 378h3v3h-3zM348 387h3v3h-3zM348 399h3v3h-3zM348 411h3v3h-3zM351 51h3v3h-3zM351 57h3v3h-3zM351 258h3v3h-3zM351 267h3v3h-3zM351 330h3v3h-3zM351 378h3v3h-3zM351 387h3v3h-3zM351 399h3v3h-3zM354 39h3v3h-3zM354 81h3v3h-3zM354 273h3v3h-3zM354 318h3v3h-3zM354 321h3v3h-3zM354 330h3v3h-3zM354 423h3v3h-3zM357 18h3v3h-3zM357 39h3v3h-3zM357 54h3v3h-3zM357 165h3v3h-3zM357 183h3v3h-3zM357 186h3v3h-3zM357 342h3v3h-3zM357 402h3v3h-3zM360 306h3v3h-3zM360 309h3v3h-3zM360 342h3v3h-3zM360 366h3v3h-3zM360 387h3v3h-3zM360 393h3v3h-3zM363 63h3v3h-3zM363 162h3v3h-3zM363 165h3v3h-3zM363 189h3v3h-3zM363 192h3v3h-3zM363 207h3v3h-3zM363 291h3v3h-3zM363 312h3v3h-3zM363 417h3v3h-3zM366 126h3v3h-3zM366 207h3v3h-3zM366 285h3v3h-3zM366 348h3v3h-3zM366 399h3v3h-3zM366 408h3v3h-3zM369 51h3v3h-3zM369 108h3v3h-3zM369 426h3v3h-3zM372 51h3v3h-3zM372 132h3v3h-3zM372 177h3v3h-3zM372 222h3v3h-3zM372 348h3v3h-3zM372 399h3v3h-3zM375 132h3v3h-3zM375 222h3v3h-3zM375 291h3v3h-3zM375 300h3v3h-3zM375 402h3v3h-3zM378 117h3v3h-3zM378 132h3v3h-3zM378 300h3v3h-3zM378 312h3v3h-3zM378 390h3v3h-3zM381 6h3v3h-3zM381 27h3v3h-3zM381 114h3v3h-3zM381 159h3v3h-3zM381 198h3v3h-3zM381 333h3v3h-3zM381 363h3v3h-3zM381 396h3v3h-3zM381 399h3v3h-3zM384 6h3v3h-3zM384 72h3v3h-3zM384 90h3v3h-3zM384 150h3v3h-3zM384 198h3v3h-3zM384 294h3v3h-3zM384 333h3v3h-3zM384 387h3v3h-3zM384 396h3v3h-3zM387 0h3v3h-3zM387 42h3v3h-3zM387 129h3v3h-3zM387 138h3v3h-3zM387 243h3v3h-3zM387 276h3v3h-3zM387 288h3v3h-3zM387 291h3v3h-3zM387 387h3v3h-3zM387 396h3v3h-3zM390 0h3v3h-3zM390 15h3v3h-3zM390 99h3v3h-3zM390 102h3v3h-3zM390 144h3v3h-3zM390 333h3v3h-3zM390 375h3v3h-3zM393 126h3v3h-3zM393 285h3v3h-3zM393 327h3v3h-3zM393 381h3v3h-3zM396 144h3v3h-3zM396 342h3v3h-3zM399 24h3v3h-3zM399 93h3v3h-3zM399 135h3v3h-3zM399 144h3v3h-3zM399 168h3v3h-3zM399 408h3v3h-3zM402 3h3v3h-3zM402 123h3v3h-3zM402 261h3v3h-3zM402 291h3v3h-3zM402 339h3v3h-3zM402 375h3v3h-3zM402 378h3v3h-3zM405 135h3v3h-3zM405 201h3v3h-3zM405 375h3v3h-3zM405 405h3v3h-3zM408 15h3v3h-3zM408 123h3v3h-3zM408 162h3v3h-3zM408 201h3v3h-3zM408 360h3v3h-3zM408 393h3v3h-3zM411 45h3v3h-3zM411 108h3v3h-3zM411 120h3v3h-3zM411 162h3v3h-3zM411 189h3v3h-3zM411 270h3v3h-3zM411 342h3v3h-3zM411 393h3v3h-3zM414 66h3v3h-3zM414 126h3v3h-3zM414 180h3v3h-3zM414 330h3v3h-3zM414 333h3v3h-3zM417 99h3v3h-3zM417 126h3v3h-3zM417 153h3v3h-3zM417 309h3v3h-3zM417 312h3v3h-3zM417 315h3v3h-3zM417 321h3v3h-3zM417 360h3v3h-3zM417 381h3v3h-3zM417 411h3v3h-3zM420 9h3v3h-3zM420 21h3v3h-3zM420 105h3v3h-3zM420 108h3v3h-3zM420 186h3v3h-3zM420 318h3v3h-3zM420 321h3v3h-3zM420 345h3v3h-3zM420 381h3v3h-3zM420 393h3v3h-3zM420 396h3v3h-3zM423 9h3v3h-3zM423 12h3v3h-3zM423 15h3v3h-3zM423 48h3v3h-3zM423 144h3v3h-3zM423 177h3v3h-3zM423 195h3v3h-3zM426 0h3v3h-3zM426 3h3v3h-3zM426 48h3v3h-3zM426 51h3v3h-3zM426 132h3v3h-3zM426 219h3v3h-3zM426 348h3v3h-3zM426 351h3v3h-3zM426 366h3v3h-3zM426 369h3v3h-3zM426 408h3v3h-3zM429 60h3v3h-3zM429 150h3v3h-3zM429 171h3v3h-3zM429 180h3v3h-3zM429 285h3v3h-3zM429 399h3v3h-3zM432 99h3v3h-3zM432 183h3v3h-3zM432 186h3v3h-3zM432 237h3v3h-3zM432 240h3v3h-3zM432 411h3v3h-3zM435 0h3v3h-3zM435 147h3v3h-3zM435 165h3v3h-3zM435 210h3v3h-3zM435 216h3v3h-3zM435 219h3v3h-3zM435 222h3v3h-3zM435 225h3v3h-3zM435 264h3v3h-3zM435 366h3v3h-3zM435 411h3v3h-3zM435 417h3v3h-3zM438 96h3v3h-3zM438 129h3v3h-3zM438 141h3v3h-3zM438 144h3v3h-3zM438 189h3v3h-3zM438 210h3v3h-3zM438 261h3v3h-3zM438 264h3v3h-3zM438 267h3v3h-3zM438 300h3v3h-3zM438 321h3v3h-3zM441 33h3v3h-3zM441 36h3v3h-3zM441 129h3v3h-3zM441 132h3v3h-3zM441 189h3v3h-3zM441 261h3v3h-3zM441 264h3v3h-3zM444 351h3v3h-3zM444 360h3v3h-3zM444 381h3v3h-3zM444 414h3v3h-3zM447 36h3v3h-3zM447 105h3v3h-3zM447 129h3v3h-3zM447 183h3v3h-3zM447 258h3v3h-3zM447 330h3v3h-3zM447 351h3v3h-3zM447 375h3v3h-3zM447 381h3v3h-3zM447 426h3v3h-3zM450 12h3v3h-3zM450 129h3v3h-3zM450 171h3v3h-3zM450 306h3v3h-3zM450 393h3v3h-3zM450 405h3v3h-3zM453 12h3v3h-3zM453 87h3v3h-3zM453 90h3v3h-3zM453 129h3v3h-3zM453 171h3v3h-3zM453 264h3v3h-3zM453 288h3v3h-3zM453 348h3v3h-3zM453 375h3v3h-3zM453 378h3v3h-3zM453 399h3v3h-3zM453 405h3v3h-3zM456 18h3v3h-3zM456 207h3v3h-3zM456 252h3v3h-3zM456 255h3v3h-3zM456 264h3v3h-3zM459 183h3v3h-3zM459 207h3v3h-3zM459 354h3v3h-3zM462 123h3v3h-3zM462 126h3v3h-3zM462 144h3v3h-3zM462 147h3v3h-3zM462 165h3v3h-3zM462 198h3v3h-3zM462 201h3v3h-3zM462 204h3v3h-3zM462 213h3v3h-3zM462 222h3v3h-3zM462 303h3v3h-3zM462 306h3v3h-3zM462 309h3v3h-3zM462 324h3v3h-3zM462 408h3v3h-3zM465 57h3v3h-3zM465 60h3v3h-3zM465 174h3v3h-3zM465 198h3v3h-3zM465 204h3v3h-3zM465 213h3v3h-3zM465 222h3v3h-3zM465 276h3v3h-3zM465 405h3v3h-3zM468 45h3v3h-3zM468 51h3v3h-3zM468 72h3v3h-3zM468 120h3v3h-3zM468 129h3v3h-3zM468 174h3v3h-3zM468 213h3v3h-3zM468 336h3v3h-3zM468 363h3v3h-3zM468 411h3v3h-3zM471 39h3v3h-3zM471 72h3v3h-3zM471 108h3v3h-3zM471 147h3v3h-3zM471 171h3v3h-3zM471 174h3v3h-3zM471 189h3v3h-3zM471 195h3v3h-3zM471 270h3v3h-3zM471 273h3v3h-3zM471 276h3v3h-3zM471 312h3v3h-3zM471 372h3v3h-3zM471 411h3v3h-3zM474 63h3v3h-3zM474 183h3v3h-3zM474 285h3v3h-3zM474 312h3v3h-3zM474 324h3v3h-3zM474 372h3v3h-3zM477 3h3v3h-3zM477 63h3v3h-3zM477 66h3v3h-3zM477 264h3v3h-3zM477 327h3v3h-3zM477 378h3v3h-3zM477 393h3v3h-3zM477 426h3v3h-3zM480 3h3v3h-3zM480 63h3v3h-3zM480 66h3v3h-3zM480 78h3v3h-3zM480 84h3v3h-3zM480 180h3v3h-3zM480 279h3v3h-3zM480 396h3v3h-3zM480 417h3v3h-3zM483 30h3v3h-3zM483 105h3v3h-3zM483 138h3v3h-3zM483 177h3v3h-3zM483 180h3v3h-3zM483 216h3v3h-3zM483 249h3v3h-3zM483 279h3v3h-3zM483 288h3v3h-3zM483 354h3v3h-3zM483 390h3v3h-3zM486 141h3v3h-3zM486 186h3v3h-3zM486 390h3v3h-3zM489 129h3v3h-3zM489 186h3v3h-3zM489 297h3v3h-3zM489 324h3v3h-3zM489 336h3v3h-3zM489 378h3v3h-3zM489 414h3v3h-3zM492 36h3v3h-3zM492 51h3v3h-3zM492 54h3v3h-3zM492 66h3v3h-3zM492 129h3v3h-3zM492 153h3v3h-3zM492 165h3v3h-3zM492 168h3v3h-3zM492 252h3v3h-3zM492 258h3v3h-3zM492 291h3v3h-3zM492 294h3v3h-3zM492 336h3v3h-3zM492 342h3v3h-3zM492 345h3v3h-3zM492 390h3v3h-3zM492 414h3v3h-3zM492 423h3v3h-3zM495 42h3v3h-3zM495 186h3v3h-3zM495 252h3v3h-3zM495 423h3v3h-3zM498 90h3v3h-3zM498 123h3v3h-3zM498 156h3v3h-3zM498 225h3v3h-3zM498 276h3v3h-3zM498 294h3v3h-3zM498 297h3v3h-3zM498 318h3v3h-3zM498 327h3v3h-3zM498 336h3v3h-3zM498 339h3v3h-3zM498 357h3v3h-3zM498 387h3v3h-3zM501 81h3v3h-3zM501 93h3v3h-3zM501 195h3v3h-3zM501 240h3v3h-3zM501 303h3v3h-3zM501 387h3v3h-3zM504 72h3v3h-3zM504 81h3v3h-3zM504 93h3v3h-3zM504 153h3v3h-3zM504 252h3v3h-3zM504 264h3v3h-3zM504 267h3v3h-3zM504 303h3v3h-3zM504 345h3v3h-3zM504 348h3v3h-3zM504 399h3v3h-3zM507 102h3v3h-3zM507 123h3v3h-3zM507 186h3v3h-3zM507 252h3v3h-3zM507 285h3v3h-3zM507 288h3v3h-3zM507 303h3v3h-3zM507 306h3v3h-3zM507 309h3v3h-3zM507 351h3v3h-3zM507 375h3v3h-3zM507 378h3v3h-3zM507 393h3v3h-3zM507 396h3v3h-3zM510 24h3v3h-3zM510 69h3v3h-3zM510 126h3v3h-3zM510 165h3v3h-3zM510 363h3v3h-3zM510 378h3v3h-3zM510 402h3v3h-3zM510 411h3v3h-3zM510 414h3v3h-3zM513 33h3v3h-3zM513 69h3v3h-3zM513 81h3v3h-3zM513 84h3v3h-3zM513 111h3v3h-3zM513 168h3v3h-3zM513 330h3v3h-3zM513 375h3v3h-3zM513 420h3v3h-3zM516 9h3v3h-3zM516 69h3v3h-3zM516 84h3v3h-3zM516 126h3v3h-3zM516 405h3v3h-3zM516 411h3v3h-3zM516 420h3v3h-3zM519 24h3v3h-3zM519 39h3v3h-3zM519 252h3v3h-3zM519 255h3v3h-3zM519 360h3v3h-3zM519 405h3v3h-3zM522 39h3v3h-3zM522 87h3v3h-3zM522 96h3v3h-3zM522 99h3v3h-3zM522 192h3v3h-3zM522 216h3v3h-3zM522 225h3v3h-3zM522 234h3v3h-3zM522 288h3v3h-3zM522 330h3v3h-3zM522 339h3v3h-3zM522 342h3v3h-3zM522 357h3v3h-3zM522 360h3v3h-3zM525 27h3v3h-3zM525 123h3v3h-3zM525 171h3v3h-3zM525 174h3v3h-3zM525 186h3v3h-3zM525 216h3v3h-3zM525 222h3v3h-3zM525 231h3v3h-3zM525 264h3v3h-3zM525 288h3v3h-3zM525 387h3v3h-3zM525 402h3v3h-3zM525 405h3v3h-3zM525 414h3v3h-3zM528 117h3v3h-3zM528 180h3v3h-3zM528 282h3v3h-3zM528 318h3v3h-3zM528 330h3v3h-3zM528 348h3v3h-3zM528 375h3v3h-3zM528 387h3v3h-3zM531 96h3v3h-3zM531 111h3v3h-3zM531 114h3v3h-3zM531 129h3v3h-3zM531 141h3v3h-3zM531 348h3v3h-3zM531 357h3v3h-3zM531 405h3v3h-3zM534 81h3v3h-3zM534 84h3v3h-3zM534 141h3v3h-3zM534 363h3v3h-3zM534 402h3v3h-3zM534 405h3v3h-3zM534 414h3v3h-3zM537 78h3v3h-3zM537 141h3v3h-3zM537 177h3v3h-3zM537 219h3v3h-3zM537 237h3v3h-3zM537 297h3v3h-3zM537 324h3v3h-3zM537 351h3v3h-3zM540 78h3v3h-3zM540 126h3v3h-3zM540 216h3v3h-3zM540 246h3v3h-3zM540 252h3v3h-3zM540 255h3v3h-3zM540 276h3v3h-3zM540 363h3v3h-3zM543 84h3v3h-3zM543 120h3v3h-3zM543 123h3v3h-3zM543 312h3v3h-3zM546 0h3v3h-3zM546 42h3v3h-3zM546 60h3v3h-3zM546 183h3v3h-3zM546 186h3v3h-3zM546 222h3v3h-3zM546 423h3v3h-3zM549 15h3v3h-3zM549 39h3v3h-3zM549 42h3v3h-3zM549 87h3v3h-3zM549 90h3v3h-3zM549 132h3v3h-3zM549 180h3v3h-3zM549 189h3v3h-3zM549 222h3v3h-3zM549 225h3v3h-3zM549 267h3v3h-3zM549 306h3v3h-3zM549 309h3v3h-3zM549 417h3v3h-3zM552 75h3v3h-3zM552 195h3v3h-3zM552 309h3v3h-3zM552 327h3v3h-3zM552 357h3v3h-3zM552 378h3v3h-3zM552 381h3v3h-3zM555 63h3v3h-3zM555 78h3v3h-3zM555 126h3v3h-3zM555 234h3v3h-3zM555 279h3v3h-3zM555 309h3v3h-3zM555 357h3v3h-3zM558 21h3v3h-3zM558 78h3v3h-3zM558 255h3v3h-3zM558 303h3v3h-3zM558 402h3v3h-3zM561 99h3v3h-3zM561 102h3v3h-3zM561 123h3v3h-3zM561 138h3v3h-3zM561 159h3v3h-3zM561 162h3v3h-3zM561 171h3v3h-3zM561 189h3v3h-3zM561 366h3v3h-3zM564 168h3v3h-3zM564 174h3v3h-3zM564 378h3v3h-3zM564 399h3v3h-3zM564 408h3v3h-3zM564 426h3v3h-3zM567 9h3v3h-3zM567 129h3v3h-3zM567 273h3v3h-3zM567 276h3v3h-3zM567 399h3v3h-3zM567 426h3v3h-3zM570 0h3v3h-3zM570 39h3v3h-3zM570 141h3v3h-3zM570 144h3v3h-3zM570 147h3v3h-3zM570 153h3v3h-3zM570 240h3v3h-3zM570 276h3v3h-3zM570 309h3v3h-3zM570 369h3v3h-3zM570 411h3v3h-3zM573 39h3v3h-3zM573 72h3v3h-3zM573 138h3v3h-3zM573 141h3v3h-3zM573 144h3v3h-3zM573 285h3v3h-3zM573 396h3v3h-3zM573 420h3v3h-3zM576 45h3v3h-3zM576 72h3v3h-3zM576 87h3v3h-3zM576 150h3v3h-3zM576 225h3v3h-3zM576 228h3v3h-3zM576 348h3v3h-3zM576 375h3v3h-3zM576 378h3v3h-3zM576 426h3v3h-3zM579 45h3v3h-3zM579 72h3v3h-3zM579 87h3v3h-3zM579 132h3v3h-3zM579 249h3v3h-3zM579 300h3v3h-3zM579 351h3v3h-3zM579 369h3v3h-3zM579 381h3v3h-3zM579 411h3v3h-3zM579 417h3v3h-3zM579 420h3v3h-3zM582 57h3v3h-3zM582 93h3v3h-3zM582 117h3v3h-3zM582 132h3v3h-3zM582 168h3v3h-3zM582 177h3v3h-3zM582 300h3v3h-3zM582 315h3v3h-3zM582 342h3v3h-3zM582 351h3v3h-3zM582 360h3v3h-3z"/></svg>
<div style="position:absolute;left:798px;top:125px;width:612px;height:457px;background:#6f6f6f;box-shadow:inset 0 0 0 1px #3c3c3c;"></div>
<div style="position:absolute;left:799px;top:126px;width:2px;height:455px;background:#7a7a7a;"></div>
<div style="position:absolute;left:805px;top:131px;width:14px;height:14px;background:#c8ceff;"></div>
<div style="position:absolute;left:807px;top:135px;width:10px;height:8px;background:#6f6f6f;"></div>
<div style="position:absolute;left:983.0px;top:131.0px;font:bold 12.5px/1 'Liberation Sans',sans-serif;color:#d2d2d2;white-space:nowrap;transform:scaleX(1.110);transform-origin:0 0;">RGB 3:1 BEFORE | &lt;*new*&gt;</div>
<svg style="position:absolute;left:1330px;top:135px;" width="72" height="10" viewBox="0 0 72 10"><g fill="#e6e6e6" stroke="#e6e6e6"><rect x="0" y="3" width="9" height="3" stroke="none"/><rect x="21" y="1" width="9" height="2" stroke="none"/><path d="M21 8 L25.5 3 L30 8Z" stroke="none"/><rect x="42" y="3" width="9" height="3" stroke="none"/><rect x="45" y="0" width="3" height="9" stroke="none"/><path d="M64 1 L71 8 M71 1 L64 8" stroke-width="2"/></g></svg>
<svg style="position:absolute;left:801px;top:151px;" width="22" height="70" viewBox="0 0 22 70"><path d="M0.5 22 L21.5 0.5 L21.5 69.5 L0.5 69.5Z" fill="#545454" stroke="#3a3a3a"/></svg>
<div style="position:absolute;left:804.5px;top:214.0px;font:12.5px/1 'Liberation Sans',sans-serif;color:#dcdcdc;white-space:nowrap;transform-origin:0 0;transform:rotate(-90deg) scaleX(0.856);">BEFORE</div>
<svg style="position:absolute;left:806.5px;top:511px;" width="12" height="66" viewBox="0 0 12 66"><g fill="none" stroke="#d8d8d8" stroke-width="1"><path d="M1 1 L9 9 M9 4 V9 H4Z"/><path d="M2.5 20.5 H8.5 V26.5 H2.5Z M0 18 L2.5 20.5 M11 18 L8.5 20.5 M0 29 L2.5 26.5 M11 29 L8.5 26.5"/><path d="M1.5 37.5 H7.5 V43.5 H1.5Z M4.5 40.5 H10.5 V46.5 H4.5"/><circle cx="5.5" cy="59" r="5"/><circle cx="5.5" cy="59" r="2"/></g></svg>
<svg style="position:absolute;left:823px;top:151px;" width="585" height="429" viewBox="0 0 585 429"><defs><pattern id="bn1" width="99" height="99" patternUnits="userSpaceOnUse"><path d="M24 12h3v3h-3zM48 21h3v3h-3zM93 84h3v3h-3zM90 72h3v3h-3zM39 18h3v3h-3zM93 3h3v3h-3zM72 81h3v3h-3zM0 84h3v3h-3zM51 42h3v3h-3zM18 60h3v3h-3zM3 3h3v3h-3zM3 0h3v3h-3zM72 39h3v3h-3zM81 3h3v3h-3zM42 84h3v3h-3zM93 42h3v3h-3zM66 42h3v3h-3zM42 87h3v3h-3zM54 3h3v3h-3zM78 18h3v3h-3zM33 54h3v3h-3zM21 63h3v3h-3zM96 81h3v3h-3zM96 36h3v3h-3zM57 54h3v3h-3zM93 96h3v3h-3zM75 6h3v3h-3zM90 45h3v3h-3zM75 78h3v3h-3zM33 69h3v3h-3zM69 15h3v3h-3zM84 96h3v3h-3zM18 30h3v3h-3zM75 69h3v3h-3zM93 3h3v3h-3zM90 6h3v3h-3zM57 75h3v3h-3zM30 30h3v3h-3zM96 42h3v3h-3zM0 36h3v3h-3zM42 75h3v3h-3zM96 66h3v3h-3zM66 87h3v3h-3zM51 0h3v3h-3zM72 96h3v3h-3zM24 39h3v3h-3zM81 9h3v3h-3zM90 69h3v3h-3zM36 96h3v3h-3zM78 93h3v3h-3zM66 78h3v3h-3zM66 0h3v3h-3zM63 87h3v3h-3zM3 42h3v3h-3zM33 33h3v3h-3zM15 48h3v3h-3zM6 12h3v3h-3zM15 3h3v3h-3zM84 0h3v3h-3zM51 45h3v3h-3zM51 21h3v3h-3zM33 66h3v3h-3zM54 12h3v3h-3zM30 30h3v3h-3zM48 30h3v3h-3zM51 54h3v3h-3zM87 60h3v3h-3zM93 90h3v3h-3zM21 3h3v3h-3zM57 72h3v3h-3zM63 78h3v3h-3zM36 48h3v3h-3zM18 48h3v3h-3zM96 39h3v3h-3zM81 3h3v3h-3zM42 3h3v3h-3zM75 27h3v3h-3zM6 30h3v3h-3zM84 96h3v3h-3zM81 42h3v3h-3zM84 42h3v3h-3zM3 75h3v3h-3zM60 81h3v3h-3zM9 57h3v3h-3zM24 39h3v3h-3zM9 57h3v3h-3zM12 12h3v3h-3zM57 57h3v3h-3zM30 78h3v3h-3zM48 24h3v3h-3zM0 6h3v3h-3zM39 87h3v3h-3zM30 96h3v3h-3zM6 72h3v3h-3zM36 66h3v3h-3zM18 39h3v3h-3zM81 36h3v3h-3zM93 18h3v3h-3zM72 54h3v3h-3zM96 93h3v3h-3zM3 60h3v3h-3zM75 54h3v3h-3zM3 30h3v3h-3zM36 60h3v3h-3zM24 63h3v3h-3zM81 39h3v3h-3zM51 18h3v3h-3zM72 66h3v3h-3zM93 45h3v3h-3zM12 6h3v3h-3zM15 24h3v3h-3zM30 30h3v3h-3zM39 51h3v3h-3zM63 96h3v3h-3zM48 69h3v3h-3zM63 63h3v3h-3zM21 54h3v3h-3zM45 93h3v3h-3zM24 18h3v3h-3zM60 6h3v3h-3zM78 12h3v3h-3zM72 27h3v3h-3zM24 63h3v3h-3zM21 72h3v3h-3zM12 42h3v3h-3zM15 51h3v3h-3zM69 54h3v3h-3zM21 87h3v3h-3zM51 18h3v3h-3zM6 54h3v3h-3zM0 0h3v3h-3zM15 78h3v3h-3zM21 6h3v3h-3zM36 45h3v3h-3zM78 30h3v3h-3zM21 84h3v3h-3zM30 45h3v3h-3zM30 18h3v3h-3zM81 72h3v3h-3zM54 48h3v3h-3zM90 60h3v3h-3zM18 39h3v3h-3zM60 6h3v3h-3zM3 0h3v3h-3zM54 60h3v3h-3zM84 75h3v3h-3zM60 75h3v3h-3zM12 12h3v3h-3zM60 87h3v3h-3zM21 48h3v3h-3zM39 90h3v3h-3zM66 48h3v3h-3zM33 39h3v3h-3zM57 36h3v3h-3zM45 69h3v3h-3zM15 51h3v3h-3zM15 84h3v3h-3zM15 63h3v3h-3zM42 72h3v3h-3zM57 6h3v3h-3zM60 33h3v3h-3zM60 57h3v3h-3zM45 63h3v3h-3zM18 15h3v3h-3zM45 42h3v3h-3zM3 45h3v3h-3zM75 12h3v3h-3zM51 12h3v3h-3zM12 3h3v3h-3zM0 54h3v3h-3zM66 93h3v3h-3zM90 27h3v3h-3zM18 96h3v3h-3zM60 12h3v3h-3zM96 33h3v3h-3zM33 27h3v3h-3zM27 60h3v3h-3zM57 18h3v3h-3zM96 54h3v3h-3zM24 39h3v3h-3zM27 6h3v3h-3zM60 39h3v3h-3zM33 57h3v3h-3zM81 30h3v3h-3zM9 45h3v3h-3zM48 12h3v3h-3zM84 81h3v3h-3zM48 84h3v3h-3zM87 0h3v3h-3zM75 63h3v3h-3zM30 48h3v3h-3zM93 3h3v3h-3zM78 3h3v3h-3zM9 66h3v3h-3zM24 24h3v3h-3zM24 48h3v3h-3zM51 75h3v3h-3zM75 33h3v3h-3zM15 42h3v3h-3zM93 0h3v3h-3zM33 60h3v3h-3zM96 84h3v3h-3zM42 45h3v3h-3zM60 93h3v3h-3zM90 42h3v3h-3zM78 63h3v3h-3zM51 42h3v3h-3zM9 12h3v3h-3zM96 69h3v3h-3zM30 96h3v3h-3zM39 57h3v3h-3zM57 57h3v3h-3zM69 30h3v3h-3zM87 15h3v3h-3zM21 96h3v3h-3zM72 33h3v3h-3zM27 48h3v3h-3zM81 39h3v3h-3zM9 93h3v3h-3zM75 66h3v3h-3zM72 96h3v3h-3zM30 6h3v3h-3zM15 48h3v3h-3zM18 51h3v3h-3zM15 24h3v3h-3zM15 84h3v3h-3zM45 72h3v3h-3zM81 75h3v3h-3zM30 60h3v3h-3zM84 24h3v3h-3zM93 39h3v3h-3zM21 81h3v3h-3zM78 21h3v3h-3zM54 51h3v3h-3zM45 72h3v3h-3zM0 36h3v3h-3zM84 3h3v3h-3zM3 45h3v3h-3zM48 39h3v3h-3zM33 54h3v3h-3zM27 36h3v3h-3zM51 57h3v3h-3zM48 84h3v3h-3zM30 66h3v3h-3zM93 78h3v3h-3zM21 39h3v3h-3zM72 39h3v3h-3zM54 18h3v3h-3zM3 21h3v3h-3zM0 54h3v3h-3zM24 12h3v3h-3zM96 69h3v3h-3zM57 81h3v3h-3zM96 66h3v3h-3zM60 0h3v3h-3zM21 84h3v3h-3zM84 66h3v3h-3zM57 75h3v3h-3zM63 93h3v3h-3zM21 72h3v3h-3zM72 39h3v3h-3zM0 51h3v3h-3zM96 36h3v3h-3zM87 78h3v3h-3zM57 30h3v3h-3zM84 36h3v3h-3zM69 0h3v3h-3zM72 81h3v3h-3zM75 63h3v3h-3zM12 93h3v3h-3zM45 54h3v3h-3zM3 78h3v3h-3zM27 75h3v3h-3zM51 33h3v3h-3zM12 0h3v3h-3zM66 48h3v3h-3zM78 57h3v3h-3zM27 87h3v3h-3zM48 93h3v3h-3zM30 87h3v3h-3zM96 6h3v3h-3zM51 96h3v3h-3zM18 81h3v3h-3zM12 66h3v3h-3zM12 84h3v3h-3zM3 30h3v3h-3zM96 30h3v3h-3zM15 75h3v3h-3zM51 57h3v3h-3zM39 39h3v3h-3zM45 63h3v3h-3zM51 12h3v3h-3zM12 69h3v3h-3zM87 96h3v3h-3zM9 30h3v3h-3zM57 51h3v3h-3zM66 42h3v3h-3zM75 75h3v3h-3zM33 90h3v3h-3zM48 63h3v3h-3zM42 48h3v3h-3zM45 3h3v3h-3zM75 60h3v3h-3zM81 45h3v3h-3zM51 36h3v3h-3zM12 30h3v3h-3zM84 27h3v3h-3zM48 87h3v3h-3zM30 24h3v3h-3zM24 84h3v3h-3zM69 57h3v3h-3zM75 45h3v3h-3zM21 39h3v3h-3zM57 12h3v3h-3zM18 42h3v3h-3zM75 60h3v3h-3zM93 18h3v3h-3zM33 6h3v3h-3zM9 3h3v3h-3zM39 6h3v3h-3zM93 84h3v3h-3zM63 51h3v3h-3zM21 33h3v3h-3zM18 42h3v3h-3zM75 42h3v3h-3zM93 84h3v3h-3zM72 30h3v3h-3zM42 45h3v3h-3zM54 87h3v3h-3zM72 39h3v3h-3zM84 48h3v3h-3zM63 93h3v3h-3zM21 39h3v3h-3zM15 6h3v3h-3zM0 0h3v3h-3zM90 60h3v3h-3zM72 54h3v3h-3zM36 75h3v3h-3zM30 27h3v3h-3zM3 0h3v3h-3zM72 27h3v3h-3zM9 72h3v3h-3zM48 24h3v3h-3zM15 87h3v3h-3zM57 0h3v3h-3zM6 9h3v3h-3zM24 6h3v3h-3zM51 21h3v3h-3zM81 15h3v3h-3zM36 3h3v3h-3zM93 24h3v3h-3zM51 36h3v3h-3zM84 72h3v3h-3zM63 51h3v3h-3zM48 45h3v3h-3zM45 9h3v3h-3zM33 66h3v3h-3zM81 9h3v3h-3zM66 78h3v3h-3zM36 81h3v3h-3zM12 51h3v3h-3zM12 48h3v3h-3zM33 18h3v3h-3zM27 9h3v3h-3zM39 81h3v3h-3zM6 9h3v3h-3zM15 96h3v3h-3zM90 96h3v3h-3zM69 18h3v3h-3zM60 6h3v3h-3zM24 6h3v3h-3zM84 24h3v3h-3zM75 84h3v3h-3zM3 51h3v3h-3zM15 48h3v3h-3zM60 15h3v3h-3zM57 6h3v3h-3zM72 9h3v3h-3zM48 60h3v3h-3zM24 48h3v3h-3zM72 21h3v3h-3zM57 18h3v3h-3zM81 45h3v3h-3zM96 39h3v3h-3zM63 63h3v3h-3zM96 75h3v3h-3zM90 18h3v3h-3zM24 84h3v3h-3zM3 54h3v3h-3zM30 36h3v3h-3zM69 72h3v3h-3zM60 18h3v3h-3zM78 66h3v3h-3zM24 12h3v3h-3zM6 57h3v3h-3zM60 78h3v3h-3zM57 60h3v3h-3zM66 51h3v3h-3zM60 96h3v3h-3zM0 21h3v3h-3zM27 60h3v3h-3zM60 60h3v3h-3zM12 84h3v3h-3zM51 90h3v3h-3zM87 69h3v3h-3zM72 15h3v3h-3zM9 24h3v3h-3zM9 93h3v3h-3zM48 45h3v3h-3zM63 69h3v3h-3zM69 75h3v3h-3zM57 87h3v3h-3zM63 96h3v3h-3zM30 3h3v3h-3zM27 48h3v3h-3zM42 24h3v3h-3zM21 33h3v3h-3zM78 9h3v3h-3zM18 51h3v3h-3zM18 39h3v3h-3zM48 12h3v3h-3zM15 12h3v3h-3zM39 33h3v3h-3zM96 81h3v3h-3zM3 69h3v3h-3zM93 54h3v3h-3zM42 36h3v3h-3zM93 45h3v3h-3zM81 84h3v3h-3zM69 36h3v3h-3zM90 12h3v3h-3zM48 78h3v3h-3zM36 0h3v3h-3zM72 96h3v3h-3zM93 12h3v3h-3zM75 96h3v3h-3zM81 6h3v3h-3zM66 87h3v3h-3zM0 36h3v3h-3zM57 0h3v3h-3zM21 57h3v3h-3zM96 60h3v3h-3zM54 78h3v3h-3zM78 57h3v3h-3zM84 57h3v3h-3zM24 96h3v3h-3zM84 24h3v3h-3zM30 48h3v3h-3zM0 81h3v3h-3zM6 69h3v3h-3zM78 75h3v3h-3zM54 3h3v3h-3zM15 15h3v3h-3zM0 72h3v3h-3zM51 87h3v3h-3zM51 69h3v3h-3zM90 63h3v3h-3zM72 87h3v3h-3zM21 90h3v3h-3zM66 27h3v3h-3zM78 27h3v3h-3zM3 33h3v3h-3zM48 69h3v3h-3zM24 54h3v3h-3zM78 48h3v3h-3zM96 54h3v3h-3zM78 51h3v3h-3zM81 63h3v3h-3zM93 39h3v3h-3zM93 75h3v3h-3zM81 15h3v3h-3zM12 24h3v3h-3zM39 27h3v3h-3zM42 3h3v3h-3zM18 48h3v3h-3zM27 90h3v3h-3zM18 75h3v3h-3zM33 0h3v3h-3zM15 81h3v3h-3zM9 39h3v3h-3zM81 66h3v3h-3zM9 18h3v3h-3zM78 21h3v3h-3zM48 51h3v3h-3zM33 90h3v3h-3zM9 39h3v3h-3zM15 72h3v3h-3zM21 84h3v3h-3zM54 96h3v3h-3zM93 75h3v3h-3zM21 90h3v3h-3zM18 27h3v3h-3zM72 36h3v3h-3zM30 48h3v3h-3zM78 54h3v3h-3zM93 39h3v3h-3zM63 93h3v3h-3zM18 0h3v3h-3zM66 51h3v3h-3zM9 84h3v3h-3zM57 18h3v3h-3zM42 96h3v3h-3zM51 51h3v3h-3zM45 78h3v3h-3zM27 24h3v3h-3zM48 36h3v3h-3zM78 9h3v3h-3zM96 27h3v3h-3zM78 51h3v3h-3zM51 90h3v3h-3zM57 51h3v3h-3zM93 39h3v3h-3zM93 69h3v3h-3zM90 45h3v3h-3zM63 33h3v3h-3zM33 84h3v3h-3zM27 9h3v3h-3zM96 60h3v3h-3zM24 39h3v3h-3zM60 93h3v3h-3zM90 63h3v3h-3zM21 24h3v3h-3zM24 48h3v3h-3zM42 15h3v3h-3zM9 33h3v3h-3zM21 42h3v3h-3zM36 96h3v3h-3zM57 81h3v3h-3zM60 0h3v3h-3zM3 57h3v3h-3zM42 15h3v3h-3zM42 51h3v3h-3zM63 51h3v3h-3zM72 3h3v3h-3zM21 63h3v3h-3zM66 24h3v3h-3zM21 48h3v3h-3zM27 6h3v3h-3zM66 12h3v3h-3zM15 18h3v3h-3zM57 60h3v3h-3zM45 51h3v3h-3zM9 69h3v3h-3zM3 15h3v3h-3zM24 75h3v3h-3zM69 45h3v3h-3zM18 63h3v3h-3zM51 0h3v3h-3zM96 60h3v3h-3zM21 66h3v3h-3zM24 51h3v3h-3zM75 15h3v3h-3zM90 78h3v3h-3zM75 57h3v3h-3zM42 57h3v3h-3zM24 9h3v3h-3zM96 21h3v3h-3zM33 45h3v3h-3zM39 81h3v3h-3zM51 3h3v3h-3zM48 51h3v3h-3zM48 90h3v3h-3zM24 75h3v3h-3zM18 69h3v3h-3zM12 69h3v3h-3zM96 3h3v3h-3zM57 84h3v3h-3zM24 27h3v3h-3zM12 27h3v3h-3zM39 90h3v3h-3zM63 69h3v3h-3zM54 30h3v3h-3zM27 72h3v3h-3zM84 75h3v3h-3zM21 27h3v3h-3zM51 54h3v3h-3zM0 0h3v3h-3zM24 72h3v3h-3zM18 87h3v3h-3zM3 81h3v3h-3zM81 51h3v3h-3zM69 78h3v3h-3zM75 87h3v3h-3zM9 18h3v3h-3zM90 6h3v3h-3zM0 6h3v3h-3zM21 24h3v3h-3zM96 66h3v3h-3zM51 66h3v3h-3zM90 45h3v3h-3zM45 18h3v3h-3zM66 30h3v3h-3zM21 6h3v3h-3zM60 81h3v3h-3zM66 48h3v3h-3zM9 81h3v3h-3zM78 72h3v3h-3zM66 54h3v3h-3zM63 84h3v3h-3zM45 27h3v3h-3zM9 63h3v3h-3zM21 96h3v3h-3zM33 93h3v3h-3zM63 21h3v3h-3zM3 90h3v3h-3zM39 72h3v3h-3zM33 75h3v3h-3zM42 18h3v3h-3zM45 63h3v3h-3zM63 45h3v3h-3zM87 90h3v3h-3zM69 93h3v3h-3zM36 81h3v3h-3zM84 75h3v3h-3zM21 93h3v3h-3zM51 24h3v3h-3zM27 0h3v3h-3zM72 78h3v3h-3zM18 3h3v3h-3zM12 33h3v3h-3zM87 72h3v3h-3zM96 54h3v3h-3zM27 27h3v3h-3zM18 48h3v3h-3zM3 87h3v3h-3zM75 42h3v3h-3zM75 0h3v3h-3zM45 81h3v3h-3zM30 33h3v3h-3zM63 45h3v3h-3zM12 30h3v3h-3zM33 72h3v3h-3zM3 96h3v3h-3zM39 81h3v3h-3zM45 6h3v3h-3zM36 96h3v3h-3zM12 45h3v3h-3zM75 87h3v3h-3zM21 9h3v3h-3zM72 15h3v3h-3zM18 90h3v3h-3zM6 45h3v3h-3zM0 3h3v3h-3zM57 87h3v3h-3zM51 78h3v3h-3zM30 24h3v3h-3zM60 84h3v3h-3zM96 78h3v3h-3zM30 75h3v3h-3zM72 36h3v3h-3z" fill="#050003" opacity="0.36"/><path d="M93 51h3v3h-3zM69 27h3v3h-3zM48 51h3v3h-3zM33 15h3v3h-3zM69 63h3v3h-3zM27 48h3v3h-3zM48 48h3v3h-3zM66 72h3v3h-3zM51 87h3v3h-3zM0 27h3v3h-3zM24 48h3v3h-3zM42 36h3v3h-3zM12 36h3v3h-3zM81 45h3v3h-3zM24 87h3v3h-3zM75 36h3v3h-3zM15 12h3v3h-3zM27 9h3v3h-3zM3 75h3v3h-3zM72 78h3v3h-3zM24 24h3v3h-3zM12 45h3v3h-3zM72 24h3v3h-3zM54 36h3v3h-3zM75 66h3v3h-3zM33 42h3v3h-3zM57 27h3v3h-3zM66 93h3v3h-3zM54 15h3v3h-3zM96 57h3v3h-3zM39 87h3v3h-3zM3 54h3v3h-3zM18 69h3v3h-3zM84 48h3v3h-3zM9 9h3v3h-3zM60 30h3v3h-3zM24 18h3v3h-3zM21 81h3v3h-3zM45 39h3v3h-3zM96 96h3v3h-3zM75 21h3v3h-3zM39 72h3v3h-3zM24 48h3v3h-3zM0 21h3v3h-3zM36 72h3v3h-3zM90 42h3v3h-3zM51 6h3v3h-3zM30 96h3v3h-3zM42 78h3v3h-3zM51 78h3v3h-3zM75 51h3v3h-3zM93 18h3v3h-3zM24 33h3v3h-3zM3 87h3v3h-3zM6 93h3v3h-3zM39 75h3v3h-3zM63 45h3v3h-3zM18 12h3v3h-3zM6 81h3v3h-3zM84 36h3v3h-3zM33 96h3v3h-3zM36 96h3v3h-3zM72 69h3v3h-3zM36 42h3v3h-3zM69 12h3v3h-3zM63 9h3v3h-3zM87 6h3v3h-3zM33 27h3v3h-3zM54 90h3v3h-3zM6 96h3v3h-3zM12 75h3v3h-3zM15 75h3v3h-3zM96 57h3v3h-3zM75 51h3v3h-3zM66 90h3v3h-3zM9 90h3v3h-3zM3 81h3v3h-3zM57 60h3v3h-3zM27 51h3v3h-3zM12 69h3v3h-3zM78 75h3v3h-3zM3 21h3v3h-3zM6 0h3v3h-3zM18 63h3v3h-3zM63 69h3v3h-3zM6 69h3v3h-3zM12 93h3v3h-3zM15 84h3v3h-3zM63 96h3v3h-3zM0 30h3v3h-3zM60 69h3v3h-3zM39 27h3v3h-3zM27 18h3v3h-3zM75 60h3v3h-3zM96 78h3v3h-3zM69 63h3v3h-3zM48 69h3v3h-3zM6 12h3v3h-3zM45 48h3v3h-3zM75 54h3v3h-3zM15 12h3v3h-3zM30 51h3v3h-3zM78 15h3v3h-3zM24 54h3v3h-3zM48 45h3v3h-3zM39 18h3v3h-3zM51 90h3v3h-3zM9 96h3v3h-3zM57 39h3v3h-3zM12 60h3v3h-3zM63 54h3v3h-3zM24 6h3v3h-3zM84 69h3v3h-3zM6 3h3v3h-3zM60 78h3v3h-3zM30 6h3v3h-3zM81 33h3v3h-3zM36 42h3v3h-3zM21 24h3v3h-3zM96 21h3v3h-3zM51 87h3v3h-3zM36 9h3v3h-3zM69 87h3v3h-3zM63 66h3v3h-3zM42 0h3v3h-3zM0 93h3v3h-3zM6 30h3v3h-3zM48 6h3v3h-3zM0 42h3v3h-3zM15 33h3v3h-3zM6 36h3v3h-3zM39 84h3v3h-3zM54 45h3v3h-3zM93 96h3v3h-3zM69 60h3v3h-3zM75 12h3v3h-3zM36 33h3v3h-3zM36 57h3v3h-3zM81 90h3v3h-3zM69 3h3v3h-3zM93 3h3v3h-3zM18 81h3v3h-3zM63 63h3v3h-3zM12 78h3v3h-3zM36 96h3v3h-3zM93 96h3v3h-3zM90 84h3v3h-3zM90 30h3v3h-3zM51 57h3v3h-3zM75 48h3v3h-3zM48 57h3v3h-3zM0 6h3v3h-3zM87 87h3v3h-3zM66 42h3v3h-3zM96 84h3v3h-3zM39 90h3v3h-3zM63 27h3v3h-3zM72 81h3v3h-3zM9 21h3v3h-3zM66 0h3v3h-3zM48 9h3v3h-3zM57 72h3v3h-3zM0 60h3v3h-3zM63 57h3v3h-3zM9 39h3v3h-3zM15 63h3v3h-3zM21 12h3v3h-3zM24 54h3v3h-3zM78 63h3v3h-3zM42 3h3v3h-3zM33 96h3v3h-3zM69 57h3v3h-3zM54 72h3v3h-3zM78 87h3v3h-3zM12 36h3v3h-3zM78 42h3v3h-3zM6 45h3v3h-3zM42 45h3v3h-3zM75 72h3v3h-3zM39 27h3v3h-3zM57 69h3v3h-3zM0 57h3v3h-3zM84 93h3v3h-3zM30 27h3v3h-3zM3 69h3v3h-3zM81 63h3v3h-3zM96 93h3v3h-3zM60 21h3v3h-3zM54 51h3v3h-3zM81 0h3v3h-3zM57 15h3v3h-3zM93 21h3v3h-3zM96 42h3v3h-3zM48 81h3v3h-3zM69 42h3v3h-3zM9 18h3v3h-3zM96 96h3v3h-3zM96 30h3v3h-3zM24 54h3v3h-3zM9 12h3v3h-3zM39 0h3v3h-3zM9 81h3v3h-3zM3 12h3v3h-3zM9 0h3v3h-3zM6 63h3v3h-3zM63 3h3v3h-3zM0 39h3v3h-3zM90 36h3v3h-3zM51 54h3v3h-3zM48 42h3v3h-3zM33 39h3v3h-3zM75 9h3v3h-3zM45 84h3v3h-3zM6 63h3v3h-3zM60 78h3v3h-3zM21 3h3v3h-3zM33 96h3v3h-3zM15 33h3v3h-3zM39 42h3v3h-3zM33 57h3v3h-3zM18 9h3v3h-3zM60 27h3v3h-3zM12 84h3v3h-3zM27 42h3v3h-3zM6 54h3v3h-3zM66 9h3v3h-3zM15 84h3v3h-3zM36 42h3v3h-3zM33 21h3v3h-3zM9 36h3v3h-3zM9 21h3v3h-3zM15 42h3v3h-3zM54 48h3v3h-3zM81 45h3v3h-3zM6 48h3v3h-3zM36 60h3v3h-3zM66 66h3v3h-3zM87 72h3v3h-3zM72 15h3v3h-3zM81 45h3v3h-3zM93 63h3v3h-3zM33 21h3v3h-3zM45 12h3v3h-3zM81 51h3v3h-3zM57 63h3v3h-3zM69 78h3v3h-3zM87 69h3v3h-3zM66 60h3v3h-3zM75 90h3v3h-3zM96 3h3v3h-3zM69 24h3v3h-3zM57 30h3v3h-3zM57 24h3v3h-3zM27 30h3v3h-3zM87 27h3v3h-3zM24 30h3v3h-3zM15 48h3v3h-3zM45 66h3v3h-3zM60 30h3v3h-3zM51 90h3v3h-3z" fill="#7a7878" opacity="0.14"/></pattern><pattern id="bn2" width="120" height="120" patternUnits="userSpaceOnUse"><path d="M9 15h3v3h-3zM15 69h3v3h-3zM30 57h3v3h-3zM48 114h3v3h-3zM39 114h3v3h-3zM6 111h3v3h-3zM30 81h3v3h-3zM75 96h3v3h-3zM69 102h3v3h-3zM84 96h3v3h-3zM51 6h3v3h-3zM3 69h3v3h-3zM87 60h3v3h-3zM72 81h3v3h-3zM99 30h3v3h-3zM105 33h3v3h-3zM45 42h3v3h-3zM3 33h3v3h-3zM60 33h3v3h-3zM24 96h3v3h-3zM96 69h3v3h-3zM96 105h3v3h-3zM33 84h3v3h-3zM78 99h3v3h-3zM69 111h3v3h-3zM66 69h3v3h-3zM84 30h3v3h-3zM75 87h3v3h-3zM99 45h3v3h-3zM93 51h3v3h-3zM93 96h3v3h-3zM96 66h3v3h-3zM87 87h3v3h-3zM66 108h3v3h-3zM105 87h3v3h-3zM93 42h3v3h-3zM60 30h3v3h-3zM117 51h3v3h-3zM90 57h3v3h-3zM57 96h3v3h-3zM105 99h3v3h-3zM96 117h3v3h-3zM111 78h3v3h-3zM57 39h3v3h-3zM93 96h3v3h-3zM69 117h3v3h-3zM12 63h3v3h-3zM0 36h3v3h-3zM18 9h3v3h-3zM108 9h3v3h-3zM51 111h3v3h-3zM42 18h3v3h-3zM99 24h3v3h-3zM51 45h3v3h-3zM39 9h3v3h-3zM81 6h3v3h-3zM9 69h3v3h-3zM69 33h3v3h-3zM45 3h3v3h-3zM15 21h3v3h-3zM12 3h3v3h-3zM6 3h3v3h-3zM69 48h3v3h-3zM24 30h3v3h-3zM33 99h3v3h-3zM0 72h3v3h-3zM111 6h3v3h-3zM45 27h3v3h-3zM6 0h3v3h-3zM66 117h3v3h-3zM21 54h3v3h-3zM63 93h3v3h-3zM3 57h3v3h-3zM84 105h3v3h-3zM114 6h3v3h-3zM48 75h3v3h-3zM117 27h3v3h-3zM90 42h3v3h-3zM15 60h3v3h-3zM18 3h3v3h-3zM84 24h3v3h-3zM99 111h3v3h-3zM75 93h3v3h-3zM96 60h3v3h-3zM27 63h3v3h-3zM48 48h3v3h-3zM114 78h3v3h-3zM3 105h3v3h-3zM24 9h3v3h-3zM48 6h3v3h-3zM24 30h3v3h-3zM30 18h3v3h-3zM87 42h3v3h-3zM96 6h3v3h-3zM45 42h3v3h-3zM84 12h3v3h-3zM48 15h3v3h-3zM111 42h3v3h-3zM117 117h3v3h-3zM69 48h3v3h-3zM81 51h3v3h-3zM99 0h3v3h-3zM27 6h3v3h-3zM72 78h3v3h-3zM30 21h3v3h-3zM96 15h3v3h-3zM45 18h3v3h-3zM18 3h3v3h-3zM33 42h3v3h-3zM18 39h3v3h-3zM3 99h3v3h-3zM87 87h3v3h-3zM57 102h3v3h-3zM72 39h3v3h-3zM39 81h3v3h-3zM81 96h3v3h-3zM3 111h3v3h-3zM111 9h3v3h-3zM78 99h3v3h-3zM111 33h3v3h-3zM18 90h3v3h-3zM69 3h3v3h-3zM99 21h3v3h-3zM117 69h3v3h-3zM54 69h3v3h-3zM57 3h3v3h-3zM78 18h3v3h-3zM18 57h3v3h-3zM36 3h3v3h-3zM84 9h3v3h-3zM78 93h3v3h-3zM87 39h3v3h-3zM111 117h3v3h-3zM12 0h3v3h-3zM54 3h3v3h-3zM69 57h3v3h-3zM12 42h3v3h-3zM93 36h3v3h-3zM21 108h3v3h-3zM69 75h3v3h-3zM87 24h3v3h-3zM66 75h3v3h-3zM21 48h3v3h-3zM21 21h3v3h-3zM15 117h3v3h-3zM63 75h3v3h-3zM39 18h3v3h-3zM3 117h3v3h-3zM90 6h3v3h-3zM93 54h3v3h-3zM66 87h3v3h-3zM27 69h3v3h-3zM51 90h3v3h-3zM99 90h3v3h-3zM78 93h3v3h-3zM54 75h3v3h-3zM42 30h3v3h-3zM93 114h3v3h-3zM48 105h3v3h-3zM81 15h3v3h-3zM111 108h3v3h-3zM18 12h3v3h-3zM66 33h3v3h-3zM102 27h3v3h-3zM78 12h3v3h-3zM15 6h3v3h-3zM24 54h3v3h-3zM72 42h3v3h-3zM63 84h3v3h-3zM33 99h3v3h-3zM54 21h3v3h-3zM27 102h3v3h-3zM81 18h3v3h-3zM63 99h3v3h-3zM45 96h3v3h-3zM48 30h3v3h-3zM30 87h3v3h-3zM45 75h3v3h-3zM66 108h3v3h-3zM27 87h3v3h-3zM84 3h3v3h-3zM114 72h3v3h-3zM33 75h3v3h-3zM96 9h3v3h-3zM90 51h3v3h-3zM75 48h3v3h-3zM78 90h3v3h-3zM69 105h3v3h-3zM63 15h3v3h-3zM42 102h3v3h-3zM117 36h3v3h-3zM75 72h3v3h-3zM0 60h3v3h-3zM87 99h3v3h-3zM87 33h3v3h-3zM18 3h3v3h-3zM75 39h3v3h-3zM108 114h3v3h-3zM72 39h3v3h-3zM18 72h3v3h-3zM105 36h3v3h-3zM51 111h3v3h-3zM111 36h3v3h-3zM93 117h3v3h-3zM24 0h3v3h-3zM117 81h3v3h-3zM90 48h3v3h-3zM96 108h3v3h-3zM33 87h3v3h-3zM39 12h3v3h-3zM66 0h3v3h-3zM93 102h3v3h-3zM12 111h3v3h-3zM93 63h3v3h-3zM87 51h3v3h-3zM96 87h3v3h-3zM3 15h3v3h-3zM117 66h3v3h-3zM33 75h3v3h-3zM48 24h3v3h-3zM9 30h3v3h-3zM93 72h3v3h-3zM87 54h3v3h-3zM27 0h3v3h-3zM54 105h3v3h-3zM87 0h3v3h-3zM69 6h3v3h-3zM102 72h3v3h-3zM108 84h3v3h-3zM39 57h3v3h-3zM93 24h3v3h-3zM90 102h3v3h-3zM57 12h3v3h-3zM48 60h3v3h-3zM57 63h3v3h-3zM57 75h3v3h-3zM99 15h3v3h-3zM96 39h3v3h-3zM75 114h3v3h-3zM99 27h3v3h-3zM96 15h3v3h-3zM57 6h3v3h-3zM42 87h3v3h-3zM105 42h3v3h-3zM99 51h3v3h-3zM9 21h3v3h-3zM21 72h3v3h-3zM69 39h3v3h-3zM60 66h3v3h-3zM12 63h3v3h-3zM87 69h3v3h-3zM30 93h3v3h-3zM84 54h3v3h-3zM87 24h3v3h-3zM84 39h3v3h-3zM51 60h3v3h-3zM30 18h3v3h-3zM45 90h3v3h-3zM36 69h3v3h-3zM33 66h3v3h-3zM24 24h3v3h-3zM42 51h3v3h-3zM105 72h3v3h-3zM75 63h3v3h-3zM51 114h3v3h-3zM96 111h3v3h-3zM60 75h3v3h-3zM54 102h3v3h-3zM117 12h3v3h-3zM69 57h3v3h-3zM75 90h3v3h-3zM33 48h3v3h-3zM66 84h3v3h-3zM90 15h3v3h-3zM33 60h3v3h-3zM72 24h3v3h-3zM3 18h3v3h-3zM66 30h3v3h-3zM66 12h3v3h-3zM81 0h3v3h-3zM102 60h3v3h-3zM45 114h3v3h-3zM72 102h3v3h-3zM54 90h3v3h-3zM27 69h3v3h-3zM60 36h3v3h-3zM93 18h3v3h-3zM27 39h3v3h-3zM63 48h3v3h-3zM27 78h3v3h-3zM69 48h3v3h-3zM15 63h3v3h-3zM36 45h3v3h-3zM45 117h3v3h-3zM6 63h3v3h-3zM69 117h3v3h-3zM9 27h3v3h-3zM33 12h3v3h-3zM81 84h3v3h-3zM51 24h3v3h-3zM60 99h3v3h-3zM108 21h3v3h-3zM63 117h3v3h-3zM75 42h3v3h-3zM9 75h3v3h-3zM90 93h3v3h-3zM117 60h3v3h-3zM102 117h3v3h-3zM114 15h3v3h-3zM111 96h3v3h-3zM102 93h3v3h-3zM75 87h3v3h-3zM30 78h3v3h-3zM72 99h3v3h-3zM84 6h3v3h-3zM18 84h3v3h-3zM111 24h3v3h-3zM21 96h3v3h-3zM33 12h3v3h-3zM75 57h3v3h-3zM87 0h3v3h-3zM48 18h3v3h-3zM66 42h3v3h-3zM33 3h3v3h-3zM27 81h3v3h-3zM15 63h3v3h-3zM87 9h3v3h-3zM90 45h3v3h-3zM12 90h3v3h-3zM24 105h3v3h-3zM3 24h3v3h-3zM96 102h3v3h-3zM9 9h3v3h-3zM36 102h3v3h-3zM0 99h3v3h-3zM63 99h3v3h-3zM45 24h3v3h-3zM69 93h3v3h-3zM0 24h3v3h-3zM102 21h3v3h-3zM45 18h3v3h-3zM87 39h3v3h-3zM9 117h3v3h-3zM39 72h3v3h-3zM63 117h3v3h-3zM75 99h3v3h-3zM96 30h3v3h-3zM96 18h3v3h-3zM27 39h3v3h-3zM33 72h3v3h-3zM36 57h3v3h-3zM63 81h3v3h-3zM27 81h3v3h-3zM24 75h3v3h-3zM60 57h3v3h-3zM18 105h3v3h-3zM18 90h3v3h-3zM51 54h3v3h-3zM99 93h3v3h-3zM51 42h3v3h-3zM78 24h3v3h-3zM105 18h3v3h-3zM3 114h3v3h-3zM105 36h3v3h-3zM39 36h3v3h-3zM75 111h3v3h-3zM6 24h3v3h-3zM3 48h3v3h-3zM90 102h3v3h-3zM9 42h3v3h-3zM27 114h3v3h-3zM60 6h3v3h-3zM36 18h3v3h-3zM24 102h3v3h-3zM33 15h3v3h-3zM87 54h3v3h-3zM39 30h3v3h-3zM60 51h3v3h-3zM99 108h3v3h-3zM12 78h3v3h-3zM78 6h3v3h-3zM87 57h3v3h-3zM21 51h3v3h-3zM3 39h3v3h-3zM78 63h3v3h-3zM48 102h3v3h-3zM75 111h3v3h-3zM99 36h3v3h-3zM81 24h3v3h-3zM30 84h3v3h-3zM87 66h3v3h-3zM72 90h3v3h-3zM117 48h3v3h-3zM117 36h3v3h-3zM111 90h3v3h-3zM84 36h3v3h-3zM90 108h3v3h-3zM63 57h3v3h-3zM12 30h3v3h-3zM69 114h3v3h-3zM90 42h3v3h-3zM117 108h3v3h-3zM24 57h3v3h-3zM39 102h3v3h-3zM57 18h3v3h-3zM0 3h3v3h-3zM36 60h3v3h-3zM9 60h3v3h-3zM102 48h3v3h-3zM63 84h3v3h-3zM12 78h3v3h-3zM90 3h3v3h-3zM54 111h3v3h-3zM108 24h3v3h-3zM39 27h3v3h-3zM30 114h3v3h-3zM72 12h3v3h-3zM111 84h3v3h-3zM51 15h3v3h-3zM93 90h3v3h-3zM45 27h3v3h-3zM108 57h3v3h-3zM42 36h3v3h-3zM117 63h3v3h-3zM111 117h3v3h-3zM75 99h3v3h-3zM78 45h3v3h-3zM39 105h3v3h-3zM9 48h3v3h-3zM45 24h3v3h-3zM117 75h3v3h-3zM81 21h3v3h-3zM87 75h3v3h-3zM75 90h3v3h-3zM72 54h3v3h-3zM39 45h3v3h-3zM42 9h3v3h-3zM102 99h3v3h-3zM15 114h3v3h-3zM102 0h3v3h-3zM9 72h3v3h-3zM81 75h3v3h-3zM42 96h3v3h-3zM51 18h3v3h-3zM69 96h3v3h-3zM69 99h3v3h-3zM93 111h3v3h-3zM12 87h3v3h-3zM42 51h3v3h-3zM3 3h3v3h-3z" fill="#300818" opacity="0.2"/><path d="M90 6h3v3h-3zM24 27h3v3h-3zM39 60h3v3h-3zM45 102h3v3h-3zM9 117h3v3h-3zM27 54h3v3h-3zM18 105h3v3h-3zM102 15h3v3h-3zM24 81h3v3h-3zM24 6h3v3h-3zM57 96h3v3h-3zM51 90h3v3h-3zM9 105h3v3h-3zM66 63h3v3h-3zM18 114h3v3h-3zM69 18h3v3h-3zM114 66h3v3h-3zM69 51h3v3h-3zM90 54h3v3h-3zM96 114h3v3h-3zM27 3h3v3h-3zM6 63h3v3h-3zM81 0h3v3h-3zM66 102h3v3h-3zM9 12h3v3h-3zM102 96h3v3h-3zM117 81h3v3h-3zM81 78h3v3h-3zM45 33h3v3h-3zM30 117h3v3h-3zM6 3h3v3h-3zM111 66h3v3h-3zM33 54h3v3h-3zM3 6h3v3h-3zM45 108h3v3h-3zM42 75h3v3h-3zM12 69h3v3h-3zM21 114h3v3h-3zM12 45h3v3h-3zM42 105h3v3h-3zM36 18h3v3h-3zM0 75h3v3h-3zM15 96h3v3h-3zM51 111h3v3h-3zM42 9h3v3h-3zM99 99h3v3h-3zM99 75h3v3h-3zM81 24h3v3h-3zM27 81h3v3h-3zM24 87h3v3h-3zM69 9h3v3h-3zM108 33h3v3h-3zM99 84h3v3h-3zM81 114h3v3h-3zM84 30h3v3h-3zM93 114h3v3h-3zM24 66h3v3h-3zM27 3h3v3h-3zM48 33h3v3h-3zM27 78h3v3h-3zM108 48h3v3h-3zM84 90h3v3h-3zM87 36h3v3h-3zM81 81h3v3h-3zM51 42h3v3h-3zM66 6h3v3h-3zM75 117h3v3h-3zM3 81h3v3h-3zM57 3h3v3h-3zM105 90h3v3h-3zM108 48h3v3h-3zM51 45h3v3h-3zM87 87h3v3h-3zM69 99h3v3h-3zM117 87h3v3h-3zM45 105h3v3h-3zM102 30h3v3h-3zM87 54h3v3h-3zM69 78h3v3h-3zM21 96h3v3h-3zM45 72h3v3h-3zM21 81h3v3h-3zM114 87h3v3h-3zM117 99h3v3h-3zM87 15h3v3h-3zM72 84h3v3h-3zM117 69h3v3h-3zM105 66h3v3h-3zM30 27h3v3h-3zM42 33h3v3h-3zM78 84h3v3h-3zM93 33h3v3h-3zM78 48h3v3h-3zM60 108h3v3h-3zM75 57h3v3h-3zM48 60h3v3h-3zM0 75h3v3h-3zM111 6h3v3h-3zM39 87h3v3h-3zM18 21h3v3h-3zM0 69h3v3h-3zM60 114h3v3h-3zM60 75h3v3h-3zM33 60h3v3h-3zM15 99h3v3h-3zM114 90h3v3h-3zM75 117h3v3h-3zM45 84h3v3h-3zM18 114h3v3h-3zM3 66h3v3h-3zM3 57h3v3h-3zM93 24h3v3h-3zM9 0h3v3h-3zM63 75h3v3h-3zM90 117h3v3h-3zM0 90h3v3h-3zM108 39h3v3h-3zM42 117h3v3h-3zM60 30h3v3h-3zM63 57h3v3h-3zM75 108h3v3h-3zM114 93h3v3h-3zM87 51h3v3h-3zM15 96h3v3h-3zM39 108h3v3h-3zM69 45h3v3h-3zM69 69h3v3h-3zM33 45h3v3h-3zM102 117h3v3h-3zM42 39h3v3h-3zM111 87h3v3h-3zM45 75h3v3h-3zM51 111h3v3h-3zM39 96h3v3h-3zM30 0h3v3h-3zM75 90h3v3h-3zM69 33h3v3h-3zM36 114h3v3h-3zM33 93h3v3h-3zM117 0h3v3h-3zM24 39h3v3h-3zM39 0h3v3h-3zM117 15h3v3h-3zM87 36h3v3h-3zM33 51h3v3h-3zM75 117h3v3h-3zM3 0h3v3h-3zM69 21h3v3h-3zM57 6h3v3h-3zM108 69h3v3h-3zM90 72h3v3h-3zM21 12h3v3h-3zM87 33h3v3h-3zM27 87h3v3h-3zM12 51h3v3h-3zM27 90h3v3h-3zM102 12h3v3h-3zM99 54h3v3h-3zM54 3h3v3h-3zM105 105h3v3h-3zM39 12h3v3h-3zM78 24h3v3h-3zM33 111h3v3h-3zM57 87h3v3h-3zM36 6h3v3h-3zM63 87h3v3h-3zM9 27h3v3h-3zM42 117h3v3h-3zM66 57h3v3h-3zM18 36h3v3h-3zM27 42h3v3h-3zM3 60h3v3h-3zM21 51h3v3h-3zM18 69h3v3h-3zM12 96h3v3h-3zM117 24h3v3h-3zM66 24h3v3h-3zM81 36h3v3h-3zM57 105h3v3h-3zM3 3h3v3h-3zM63 27h3v3h-3zM12 102h3v3h-3zM9 24h3v3h-3zM93 78h3v3h-3zM66 90h3v3h-3zM54 57h3v3h-3zM12 27h3v3h-3zM21 0h3v3h-3zM15 27h3v3h-3zM66 27h3v3h-3zM57 108h3v3h-3zM102 24h3v3h-3zM15 42h3v3h-3zM108 42h3v3h-3zM63 15h3v3h-3zM33 81h3v3h-3zM39 78h3v3h-3zM6 63h3v3h-3zM81 93h3v3h-3zM105 66h3v3h-3zM33 99h3v3h-3zM21 6h3v3h-3zM24 72h3v3h-3zM27 78h3v3h-3zM42 51h3v3h-3zM117 102h3v3h-3zM21 15h3v3h-3zM96 108h3v3h-3zM117 33h3v3h-3zM36 117h3v3h-3zM12 102h3v3h-3zM60 24h3v3h-3zM96 45h3v3h-3zM45 87h3v3h-3zM75 87h3v3h-3zM18 60h3v3h-3zM42 9h3v3h-3zM66 18h3v3h-3zM75 3h3v3h-3zM108 21h3v3h-3zM48 66h3v3h-3zM105 45h3v3h-3zM63 81h3v3h-3zM42 6h3v3h-3zM24 30h3v3h-3zM24 30h3v3h-3zM75 27h3v3h-3zM18 57h3v3h-3zM81 87h3v3h-3zM0 21h3v3h-3zM81 0h3v3h-3zM18 6h3v3h-3zM36 81h3v3h-3zM0 36h3v3h-3zM72 60h3v3h-3zM27 33h3v3h-3zM51 51h3v3h-3zM48 108h3v3h-3zM42 99h3v3h-3zM57 57h3v3h-3zM108 78h3v3h-3zM93 90h3v3h-3zM72 54h3v3h-3zM75 33h3v3h-3zM78 54h3v3h-3zM108 87h3v3h-3zM99 81h3v3h-3zM108 60h3v3h-3zM102 12h3v3h-3zM108 0h3v3h-3zM48 78h3v3h-3zM111 87h3v3h-3zM15 96h3v3h-3zM102 90h3v3h-3zM99 51h3v3h-3zM30 39h3v3h-3zM69 18h3v3h-3zM42 39h3v3h-3zM81 24h3v3h-3zM96 36h3v3h-3zM96 72h3v3h-3zM30 12h3v3h-3zM57 87h3v3h-3zM27 96h3v3h-3zM15 69h3v3h-3zM33 42h3v3h-3zM105 6h3v3h-3zM81 105h3v3h-3zM6 75h3v3h-3zM102 57h3v3h-3zM42 30h3v3h-3zM75 42h3v3h-3zM36 108h3v3h-3zM42 96h3v3h-3zM48 105h3v3h-3zM51 114h3v3h-3zM48 30h3v3h-3zM3 117h3v3h-3zM75 96h3v3h-3zM9 9h3v3h-3zM93 36h3v3h-3zM105 60h3v3h-3zM54 6h3v3h-3zM87 63h3v3h-3zM33 84h3v3h-3zM9 39h3v3h-3zM69 48h3v3h-3zM84 48h3v3h-3zM96 48h3v3h-3zM9 60h3v3h-3zM0 78h3v3h-3zM42 33h3v3h-3zM72 90h3v3h-3zM24 81h3v3h-3zM54 12h3v3h-3zM33 9h3v3h-3zM78 12h3v3h-3zM102 111h3v3h-3zM27 3h3v3h-3zM3 69h3v3h-3z" fill="#3a5a3a" opacity="0.16"/></pattern><pattern id="bn3" width="141" height="141" patternUnits="userSpaceOnUse"><path d="M45 111h3v3h-3zM102 24h3v3h-3zM69 114h3v3h-3zM90 120h3v3h-3zM111 12h3v3h-3zM114 0h3v3h-3zM90 48h3v3h-3zM105 42h3v3h-3zM36 135h3v3h-3zM90 102h3v3h-3zM105 90h3v3h-3zM75 120h3v3h-3zM27 42h3v3h-3zM120 27h3v3h-3zM99 72h3v3h-3zM0 126h3v3h-3zM12 30h3v3h-3zM111 6h3v3h-3zM57 3h3v3h-3zM51 90h3v3h-3zM114 138h3v3h-3zM72 135h3v3h-3zM81 75h3v3h-3zM138 108h3v3h-3zM84 24h3v3h-3zM69 18h3v3h-3zM6 24h3v3h-3zM93 39h3v3h-3zM48 129h3v3h-3zM81 120h3v3h-3zM57 78h3v3h-3zM96 72h3v3h-3zM108 66h3v3h-3zM102 111h3v3h-3zM78 111h3v3h-3zM42 63h3v3h-3zM129 3h3v3h-3zM51 114h3v3h-3zM126 132h3v3h-3zM30 132h3v3h-3zM60 102h3v3h-3zM108 108h3v3h-3zM18 135h3v3h-3zM123 39h3v3h-3zM120 108h3v3h-3zM51 54h3v3h-3zM21 12h3v3h-3zM90 120h3v3h-3zM90 15h3v3h-3zM66 12h3v3h-3zM78 27h3v3h-3zM3 54h3v3h-3zM81 78h3v3h-3zM21 6h3v3h-3zM114 117h3v3h-3zM6 72h3v3h-3zM135 111h3v3h-3zM63 105h3v3h-3zM51 96h3v3h-3zM45 6h3v3h-3zM57 0h3v3h-3zM12 18h3v3h-3zM114 102h3v3h-3zM6 36h3v3h-3zM78 54h3v3h-3zM117 48h3v3h-3zM27 132h3v3h-3zM6 63h3v3h-3zM60 69h3v3h-3zM24 72h3v3h-3zM72 87h3v3h-3zM99 72h3v3h-3zM123 114h3v3h-3zM129 105h3v3h-3zM18 117h3v3h-3zM96 51h3v3h-3zM81 120h3v3h-3zM138 135h3v3h-3zM45 57h3v3h-3zM81 48h3v3h-3zM99 57h3v3h-3zM105 63h3v3h-3zM0 78h3v3h-3zM111 60h3v3h-3zM3 72h3v3h-3zM117 111h3v3h-3zM120 24h3v3h-3zM9 120h3v3h-3zM120 63h3v3h-3zM87 66h3v3h-3zM129 66h3v3h-3zM114 135h3v3h-3zM51 93h3v3h-3zM3 111h3v3h-3zM9 129h3v3h-3zM3 69h3v3h-3zM48 120h3v3h-3zM87 57h3v3h-3zM111 114h3v3h-3zM60 33h3v3h-3zM69 33h3v3h-3zM60 69h3v3h-3zM114 48h3v3h-3zM57 72h3v3h-3zM18 3h3v3h-3zM108 129h3v3h-3zM24 57h3v3h-3zM96 42h3v3h-3zM123 51h3v3h-3zM45 60h3v3h-3zM33 129h3v3h-3zM81 123h3v3h-3zM132 18h3v3h-3zM18 114h3v3h-3zM60 63h3v3h-3zM129 42h3v3h-3zM84 30h3v3h-3zM15 63h3v3h-3zM123 39h3v3h-3zM108 84h3v3h-3zM51 42h3v3h-3zM21 6h3v3h-3zM99 36h3v3h-3zM60 108h3v3h-3zM33 51h3v3h-3zM63 123h3v3h-3zM15 117h3v3h-3zM66 111h3v3h-3zM24 78h3v3h-3zM54 99h3v3h-3zM51 87h3v3h-3zM66 120h3v3h-3zM78 54h3v3h-3zM78 108h3v3h-3zM78 6h3v3h-3zM78 27h3v3h-3zM36 0h3v3h-3zM90 117h3v3h-3zM96 81h3v3h-3zM105 135h3v3h-3zM42 6h3v3h-3zM87 126h3v3h-3zM99 54h3v3h-3zM102 63h3v3h-3zM42 12h3v3h-3zM111 54h3v3h-3zM21 45h3v3h-3zM6 6h3v3h-3zM132 96h3v3h-3zM36 81h3v3h-3zM108 9h3v3h-3zM0 90h3v3h-3zM21 30h3v3h-3zM96 57h3v3h-3zM45 126h3v3h-3zM3 99h3v3h-3zM102 78h3v3h-3zM9 117h3v3h-3zM21 63h3v3h-3zM24 48h3v3h-3zM102 90h3v3h-3zM9 66h3v3h-3zM42 36h3v3h-3zM21 102h3v3h-3zM21 30h3v3h-3zM45 51h3v3h-3zM24 0h3v3h-3zM93 120h3v3h-3zM108 75h3v3h-3zM9 51h3v3h-3zM45 51h3v3h-3zM117 99h3v3h-3zM99 81h3v3h-3zM9 90h3v3h-3zM60 0h3v3h-3zM9 24h3v3h-3zM6 21h3v3h-3zM9 12h3v3h-3zM90 6h3v3h-3zM135 15h3v3h-3zM96 96h3v3h-3zM93 60h3v3h-3zM30 60h3v3h-3zM12 66h3v3h-3zM72 123h3v3h-3zM72 111h3v3h-3zM57 69h3v3h-3zM48 36h3v3h-3zM63 81h3v3h-3zM21 24h3v3h-3zM105 0h3v3h-3zM135 138h3v3h-3zM72 15h3v3h-3zM108 33h3v3h-3zM6 69h3v3h-3zM87 114h3v3h-3zM123 102h3v3h-3zM72 120h3v3h-3zM6 117h3v3h-3zM81 9h3v3h-3zM69 120h3v3h-3zM93 132h3v3h-3zM60 78h3v3h-3zM132 78h3v3h-3zM87 3h3v3h-3zM45 39h3v3h-3zM102 51h3v3h-3zM132 111h3v3h-3zM12 81h3v3h-3zM42 81h3v3h-3zM24 3h3v3h-3zM60 69h3v3h-3zM105 48h3v3h-3zM21 87h3v3h-3zM132 21h3v3h-3zM138 126h3v3h-3zM99 72h3v3h-3zM126 18h3v3h-3zM138 60h3v3h-3zM108 102h3v3h-3zM18 111h3v3h-3zM135 0h3v3h-3zM90 27h3v3h-3zM45 72h3v3h-3zM6 99h3v3h-3zM15 108h3v3h-3zM18 126h3v3h-3zM72 33h3v3h-3zM3 63h3v3h-3zM21 3h3v3h-3zM21 129h3v3h-3zM90 132h3v3h-3zM54 111h3v3h-3zM57 15h3v3h-3zM6 108h3v3h-3zM96 99h3v3h-3zM135 45h3v3h-3zM18 105h3v3h-3zM18 105h3v3h-3zM9 105h3v3h-3zM60 108h3v3h-3zM33 12h3v3h-3zM45 33h3v3h-3zM123 45h3v3h-3zM87 117h3v3h-3zM132 75h3v3h-3zM48 69h3v3h-3zM114 75h3v3h-3zM66 105h3v3h-3zM78 15h3v3h-3zM72 96h3v3h-3zM45 78h3v3h-3zM30 78h3v3h-3zM132 108h3v3h-3zM111 129h3v3h-3zM99 129h3v3h-3zM90 27h3v3h-3zM123 75h3v3h-3zM27 30h3v3h-3zM18 93h3v3h-3zM90 132h3v3h-3zM99 84h3v3h-3zM111 138h3v3h-3zM33 24h3v3h-3zM51 36h3v3h-3zM27 111h3v3h-3zM96 60h3v3h-3zM42 132h3v3h-3zM102 54h3v3h-3zM126 135h3v3h-3zM78 114h3v3h-3zM111 111h3v3h-3zM51 39h3v3h-3zM57 3h3v3h-3zM51 90h3v3h-3zM72 36h3v3h-3zM33 108h3v3h-3zM69 45h3v3h-3zM60 90h3v3h-3zM27 78h3v3h-3zM132 90h3v3h-3zM132 114h3v3h-3zM39 87h3v3h-3zM111 123h3v3h-3zM105 3h3v3h-3zM90 138h3v3h-3zM12 75h3v3h-3zM138 6h3v3h-3zM87 42h3v3h-3zM45 123h3v3h-3zM135 129h3v3h-3zM12 39h3v3h-3zM48 45h3v3h-3zM36 48h3v3h-3zM24 33h3v3h-3zM117 135h3v3h-3zM129 6h3v3h-3zM48 30h3v3h-3zM6 60h3v3h-3zM33 81h3v3h-3z" fill="#000" opacity="0.25"/><path d="M15 138h3v3h-3zM15 21h3v3h-3zM15 48h3v3h-3zM54 6h3v3h-3zM66 84h3v3h-3zM111 138h3v3h-3zM129 63h3v3h-3zM0 3h3v3h-3zM63 63h3v3h-3zM81 72h3v3h-3zM93 12h3v3h-3zM39 123h3v3h-3zM111 93h3v3h-3zM75 24h3v3h-3zM102 60h3v3h-3zM21 51h3v3h-3zM12 126h3v3h-3zM81 21h3v3h-3zM84 99h3v3h-3zM48 18h3v3h-3zM99 132h3v3h-3zM69 129h3v3h-3zM69 84h3v3h-3zM54 126h3v3h-3zM129 126h3v3h-3zM123 48h3v3h-3zM18 63h3v3h-3zM129 108h3v3h-3zM102 99h3v3h-3zM21 126h3v3h-3zM93 96h3v3h-3zM66 9h3v3h-3zM135 54h3v3h-3zM129 138h3v3h-3zM108 33h3v3h-3zM123 123h3v3h-3zM138 120h3v3h-3zM27 33h3v3h-3zM69 123h3v3h-3zM87 21h3v3h-3zM18 105h3v3h-3zM27 63h3v3h-3zM123 138h3v3h-3zM123 114h3v3h-3zM78 105h3v3h-3zM57 123h3v3h-3zM33 87h3v3h-3zM90 57h3v3h-3zM33 135h3v3h-3zM12 18h3v3h-3zM135 33h3v3h-3zM105 102h3v3h-3zM108 75h3v3h-3zM66 18h3v3h-3zM51 51h3v3h-3zM72 9h3v3h-3zM24 6h3v3h-3zM90 96h3v3h-3zM51 45h3v3h-3zM132 96h3v3h-3zM66 63h3v3h-3zM75 84h3v3h-3zM102 12h3v3h-3zM66 93h3v3h-3zM21 27h3v3h-3zM51 111h3v3h-3zM18 129h3v3h-3zM21 108h3v3h-3zM138 21h3v3h-3zM33 132h3v3h-3zM36 108h3v3h-3zM78 126h3v3h-3zM75 24h3v3h-3zM111 114h3v3h-3zM27 75h3v3h-3zM36 102h3v3h-3zM99 30h3v3h-3zM108 33h3v3h-3zM36 48h3v3h-3zM69 54h3v3h-3zM3 84h3v3h-3zM78 72h3v3h-3zM60 105h3v3h-3zM111 57h3v3h-3zM120 93h3v3h-3zM99 129h3v3h-3zM135 57h3v3h-3zM126 90h3v3h-3zM3 114h3v3h-3zM36 138h3v3h-3zM120 0h3v3h-3zM18 126h3v3h-3zM42 93h3v3h-3zM33 99h3v3h-3zM120 87h3v3h-3zM36 36h3v3h-3zM99 39h3v3h-3zM6 96h3v3h-3zM123 84h3v3h-3zM21 108h3v3h-3zM54 126h3v3h-3zM27 24h3v3h-3zM87 15h3v3h-3zM117 9h3v3h-3zM3 69h3v3h-3zM117 42h3v3h-3zM96 12h3v3h-3zM93 102h3v3h-3zM3 63h3v3h-3zM60 63h3v3h-3zM66 132h3v3h-3zM132 24h3v3h-3zM15 114h3v3h-3zM6 135h3v3h-3zM15 63h3v3h-3zM39 12h3v3h-3zM36 81h3v3h-3zM132 42h3v3h-3zM93 60h3v3h-3zM18 6h3v3h-3zM78 12h3v3h-3zM36 135h3v3h-3zM30 75h3v3h-3zM93 90h3v3h-3zM132 12h3v3h-3zM102 81h3v3h-3zM39 123h3v3h-3zM93 57h3v3h-3zM3 87h3v3h-3zM87 132h3v3h-3zM75 84h3v3h-3zM33 87h3v3h-3zM6 138h3v3h-3zM48 69h3v3h-3zM69 84h3v3h-3zM99 69h3v3h-3zM114 75h3v3h-3zM42 0h3v3h-3zM39 48h3v3h-3zM69 27h3v3h-3zM87 102h3v3h-3zM36 30h3v3h-3zM39 3h3v3h-3zM30 111h3v3h-3zM75 96h3v3h-3zM30 120h3v3h-3zM3 24h3v3h-3zM21 114h3v3h-3zM30 84h3v3h-3zM93 33h3v3h-3zM9 3h3v3h-3zM75 84h3v3h-3zM60 78h3v3h-3zM6 135h3v3h-3zM135 9h3v3h-3zM45 75h3v3h-3zM6 75h3v3h-3zM93 3h3v3h-3zM42 45h3v3h-3zM18 72h3v3h-3zM90 36h3v3h-3zM30 63h3v3h-3zM117 21h3v3h-3zM66 21h3v3h-3zM114 9h3v3h-3zM138 54h3v3h-3zM51 87h3v3h-3zM57 93h3v3h-3zM45 105h3v3h-3zM51 3h3v3h-3z" fill="#48487a" opacity="0.14"/></pattern><pattern id="bn4" width="189" height="189" patternUnits="userSpaceOnUse"><path d="M45 57h9v9h-9zM18 138h9v9h-9zM75 90h9v9h-9zM27 15h9v9h-9zM12 3h9v9h-9zM75 105h9v9h-9zM174 54h9v9h-9zM153 144h9v9h-9zM9 42h9v9h-9zM99 102h9v9h-9zM69 51h9v9h-9zM147 33h9v9h-9zM156 18h9v9h-9zM48 39h9v9h-9zM180 177h9v9h-9zM3 159h9v9h-9zM123 153h9v9h-9zM48 153h9v9h-9zM51 36h9v9h-9zM30 57h9v9h-9zM54 120h9v9h-9zM165 138h9v9h-9zM183 162h9v9h-9zM162 168h9v9h-9zM69 15h9v9h-9z" fill="#000" opacity="0.22"/><path d="M162 114h9v9h-9zM63 126h9v9h-9zM72 96h9v9h-9zM45 33h9v9h-9zM45 90h9v9h-9zM51 15h9v9h-9zM180 177h9v9h-9zM156 165h9v9h-9zM180 105h9v9h-9zM159 57h9v9h-9zM0 174h9v9h-9zM54 108h9v9h-9zM135 168h9v9h-9zM57 162h9v9h-9zM144 96h9v9h-9z" fill="#504a58" opacity="0.12"/></pattern><radialGradient id="bs0"><stop offset="0" stop-color="#704a4a" stop-opacity="0.620"/><stop offset="0.1" stop-color="#704a4a" stop-opacity="0.593"/><stop offset="0.2" stop-color="#704a4a" stop-opacity="0.518"/><stop offset="0.3" stop-color="#704a4a" stop-opacity="0.414"/><stop offset="0.4" stop-color="#704a4a" stop-opacity="0.302"/><stop offset="0.5" stop-color="#704a4a" stop-opacity="0.201"/><stop offset="0.6" stop-color="#704a4a" stop-opacity="0.123"/><stop offset="0.7" stop-color="#704a4a" stop-opacity="0.068"/><stop offset="0.8" stop-color="#704a4a" stop-opacity="0.035"/><stop offset="0.9" stop-color="#704a4a" stop-opacity="0.016"/><stop offset="1" stop-color="#704a4a" stop-opacity="0.000"/></radialGradient><radialGradient id="bs1"><stop offset="0" stop-color="#e4d8d4" stop-opacity="1.000"/><stop offset="0.25" stop-color="#e4d8d4" stop-opacity="0.950"/><stop offset="0.45" stop-color="#e4d8d4" stop-opacity="0.800"/><stop offset="0.6" stop-color="#e4d8d4" stop-opacity="0.550"/><stop offset="0.75" stop-color="#e4d8d4" stop-opacity="0.280"/><stop offset="0.88" stop-color="#e4d8d4" stop-opacity="0.100"/><stop offset="1" stop-color="#e4d8d4" stop-opacity="0.000"/></radialGradient><radialGradient id="bs2"><stop offset="0" stop-color="#805040" stop-opacity="0.560"/><stop offset="0.1" stop-color="#805040" stop-opacity="0.535"/><stop offset="0.2" stop-color="#805040" stop-opacity="0.468"/><stop offset="0.3" stop-color="#805040" stop-opacity="0.374"/><stop offset="0.4" stop-color="#805040" stop-opacity="0.273"/><stop offset="0.5" stop-color="#805040" stop-opacity="0.182"/><stop offset="0.6" stop-color="#805040" stop-opacity="0.111"/><stop offset="0.7" stop-color="#805040" stop-opacity="0.062"/><stop offset="0.8" stop-color="#805040" stop-opacity="0.031"/><stop offset="0.9" stop-color="#805040" stop-opacity="0.015"/><stop offset="1" stop-color="#805040" stop-opacity="0.000"/></radialGradient><radialGradient id="bs3"><stop offset="0" stop-color="#d4a684" stop-opacity="0.950"/><stop offset="0.25" stop-color="#d4a684" stop-opacity="0.902"/><stop offset="0.45" stop-color="#d4a684" stop-opacity="0.760"/><stop offset="0.6" stop-color="#d4a684" stop-opacity="0.522"/><stop offset="0.75" stop-color="#d4a684" stop-opacity="0.266"/><stop offset="0.88" stop-color="#d4a684" stop-opacity="0.095"/><stop offset="1" stop-color="#d4a684" stop-opacity="0.000"/></radialGradient><radialGradient id="bs4"><stop offset="0" stop-color="#904838" stop-opacity="0.620"/><stop offset="0.1" stop-color="#904838" stop-opacity="0.593"/><stop offset="0.2" stop-color="#904838" stop-opacity="0.518"/><stop offset="0.3" stop-color="#904838" stop-opacity="0.414"/><stop offset="0.4" stop-color="#904838" stop-opacity="0.302"/><stop offset="0.5" stop-color="#904838" stop-opacity="0.201"/><stop offset="0.6" stop-color="#904838" stop-opacity="0.123"/><stop offset="0.7" stop-color="#904838" stop-opacity="0.068"/><stop offset="0.8" stop-color="#904838" stop-opacity="0.035"/><stop offset="0.9" stop-color="#904838" stop-opacity="0.016"/><stop offset="1" stop-color="#904838" stop-opacity="0.000"/></radialGradient><radialGradient id="bs5"><stop offset="0" stop-color="#eaa482" stop-opacity="0.970"/><stop offset="0.25" stop-color="#eaa482" stop-opacity="0.921"/><stop offset="0.45" stop-color="#eaa482" stop-opacity="0.776"/><stop offset="0.6" stop-color="#eaa482" stop-opacity="0.533"/><stop offset="0.75" stop-color="#eaa482" stop-opacity="0.272"/><stop offset="0.88" stop-color="#eaa482" stop-opacity="0.097"/><stop offset="1" stop-color="#eaa482" stop-opacity="0.000"/></radialGradient><radialGradient id="bs6"><stop offset="0" stop-color="#904030" stop-opacity="0.620"/><stop offset="0.1" stop-color="#904030" stop-opacity="0.593"/><stop offset="0.2" stop-color="#904030" stop-opacity="0.518"/><stop offset="0.3" stop-color="#904030" stop-opacity="0.414"/><stop offset="0.4" stop-color="#904030" stop-opacity="0.302"/><stop offset="0.5" stop-color="#904030" stop-opacity="0.201"/><stop offset="0.6" stop-color="#904030" stop-opacity="0.123"/><stop offset="0.7" stop-color="#904030" stop-opacity="0.068"/><stop offset="0.8" stop-color="#904030" stop-opacity="0.035"/><stop offset="0.9" stop-color="#904030" stop-opacity="0.016"/><stop offset="1" stop-color="#904030" stop-opacity="0.000"/></radialGradient><radialGradient id="bs7"><stop offset="0" stop-color="#ea9468" stop-opacity="0.970"/><stop offset="0.25" stop-color="#ea9468" stop-opacity="0.921"/><stop offset="0.45" stop-color="#ea9468" stop-opacity="0.776"/><stop offset="0.6" stop-color="#ea9468" stop-opacity="0.533"/><stop offset="0.75" stop-color="#ea9468" stop-opacity="0.272"/><stop offset="0.88" stop-color="#ea9468" stop-opacity="0.097"/><stop offset="1" stop-color="#ea9468" stop-opacity="0.000"/></radialGradient><radialGradient id="bs8"><stop offset="0" stop-color="#7a6040" stop-opacity="0.600"/><stop offset="0.25" stop-color="#7a6040" stop-opacity="0.570"/><stop offset="0.45" stop-color="#7a6040" stop-opacity="0.480"/><stop offset="0.6" stop-color="#7a6040" stop-opacity="0.330"/><stop offset="0.75" stop-color="#7a6040" stop-opacity="0.168"/><stop offset="0.88" stop-color="#7a6040" stop-opacity="0.060"/><stop offset="1" stop-color="#7a6040" stop-opacity="0.000"/></radialGradient><radialGradient id="bs9"><stop offset="0" stop-color="#704830" stop-opacity="0.440"/><stop offset="0.1" stop-color="#704830" stop-opacity="0.421"/><stop offset="0.2" stop-color="#704830" stop-opacity="0.368"/><stop offset="0.3" stop-color="#704830" stop-opacity="0.293"/><stop offset="0.4" stop-color="#704830" stop-opacity="0.214"/><stop offset="0.5" stop-color="#704830" stop-opacity="0.143"/><stop offset="0.6" stop-color="#704830" stop-opacity="0.087"/><stop offset="0.7" stop-color="#704830" stop-opacity="0.049"/><stop offset="0.8" stop-color="#704830" stop-opacity="0.025"/><stop offset="0.9" stop-color="#704830" stop-opacity="0.011"/><stop offset="1" stop-color="#704830" stop-opacity="0.000"/></radialGradient><radialGradient id="bs10"><stop offset="0" stop-color="#cca070" stop-opacity="0.850"/><stop offset="0.25" stop-color="#cca070" stop-opacity="0.807"/><stop offset="0.45" stop-color="#cca070" stop-opacity="0.680"/><stop offset="0.6" stop-color="#cca070" stop-opacity="0.468"/><stop offset="0.75" stop-color="#cca070" stop-opacity="0.238"/><stop offset="0.88" stop-color="#cca070" stop-opacity="0.085"/><stop offset="1" stop-color="#cca070" stop-opacity="0.000"/></radialGradient><radialGradient id="bs11"><stop offset="0" stop-color="#6a5a48" stop-opacity="0.550"/><stop offset="0.25" stop-color="#6a5a48" stop-opacity="0.522"/><stop offset="0.45" stop-color="#6a5a48" stop-opacity="0.440"/><stop offset="0.6" stop-color="#6a5a48" stop-opacity="0.303"/><stop offset="0.75" stop-color="#6a5a48" stop-opacity="0.154"/><stop offset="0.88" stop-color="#6a5a48" stop-opacity="0.055"/><stop offset="1" stop-color="#6a5a48" stop-opacity="0.000"/></radialGradient><radialGradient id="bs12"><stop offset="0" stop-color="#4a3a30" stop-opacity="0.500"/><stop offset="0.25" stop-color="#4a3a30" stop-opacity="0.475"/><stop offset="0.45" stop-color="#4a3a30" stop-opacity="0.400"/><stop offset="0.6" stop-color="#4a3a30" stop-opacity="0.275"/><stop offset="0.75" stop-color="#4a3a30" stop-opacity="0.140"/><stop offset="0.88" stop-color="#4a3a30" stop-opacity="0.050"/><stop offset="1" stop-color="#4a3a30" stop-opacity="0.000"/></radialGradient><radialGradient id="bs13"><stop offset="0" stop-color="#5a4a40" stop-opacity="0.500"/><stop offset="0.25" stop-color="#5a4a40" stop-opacity="0.475"/><stop offset="0.45" stop-color="#5a4a40" stop-opacity="0.400"/><stop offset="0.6" stop-color="#5a4a40" stop-opacity="0.275"/><stop offset="0.75" stop-color="#5a4a40" stop-opacity="0.140"/><stop offset="0.88" stop-color="#5a4a40" stop-opacity="0.050"/><stop offset="1" stop-color="#5a4a40" stop-opacity="0.000"/></radialGradient></defs><rect width="585" height="429" fill="#2c2629"/><rect width="585" height="429" fill="url(#bn1)"/><rect width="585" height="429" fill="url(#bn2)"/><rect width="585" height="429" fill="url(#bn3)"/><rect width="585" height="429" fill="url(#bn4)"/><circle cx="260" cy="83" r="50" fill="url(#bs0)"/><circle cx="260" cy="83" r="33" fill="url(#bs1)"/><circle cx="68" cy="193" r="40" fill="url(#bs2)"/><circle cx="68" cy="193" r="29" fill="url(#bs3)"/><circle cx="266" cy="208" r="44" fill="url(#bs4)"/><circle cx="266" cy="208" r="31" fill="url(#bs5)"/><circle cx="327" cy="239" r="44" fill="url(#bs6)"/><circle cx="327" cy="239" r="31" fill="url(#bs7)"/><circle cx="138" cy="282" r="22" fill="url(#bs8)"/><circle cx="253" cy="324" r="32" fill="url(#bs9)"/><circle cx="253" cy="324" r="25" fill="url(#bs10)"/><circle cx="399" cy="315" r="22" fill="url(#bs11)"/><circle cx="73" cy="54" r="31" fill="url(#bs12)"/><circle cx="373" cy="104" r="25" fill="url(#bs13)"/></svg>
<div style="position:absolute;left:186px;top:583px;width:612px;height:457px;background:#6f6f6f;box-shadow:inset 0 0 0 1px #3c3c3c;"></div>
<div style="position:absolute;left:187px;top:584px;width:2px;height:455px;background:#7a7a7a;"></div>
<div style="position:absolute;left:193px;top:589px;width:14px;height:14px;background:#c8ceff;"></div>
<div style="position:absolute;left:195px;top:593px;width:10px;height:8px;background:#6f6f6f;"></div>
<div style="position:absolute;left:374.0px;top:589.0px;font:bold 12.5px/1 'Liberation Sans',sans-serif;color:#d2d2d2;white-space:nowrap;transform:scaleX(1.165);transform-origin:0 0;">Gray 3:1 MASK | &lt;*new*&gt;</div>
<svg style="position:absolute;left:718px;top:593px;" width="72" height="10" viewBox="0 0 72 10"><g fill="#e6e6e6" stroke="#e6e6e6"><rect x="0" y="3" width="9" height="3" stroke="none"/><rect x="21" y="1" width="9" height="2" stroke="none"/><path d="M21 8 L25.5 3 L30 8Z" stroke="none"/><rect x="42" y="3" width="9" height="3" stroke="none"/><rect x="45" y="0" width="3" height="9" stroke="none"/><path d="M64 1 L71 8 M71 1 L64 8" stroke-width="2"/></g></svg>
<svg style="position:absolute;left:189px;top:609px;" width="22" height="58" viewBox="0 0 22 58"><path d="M0.5 22 L21.5 0.5 L21.5 57.5 L0.5 57.5Z" fill="#545454" stroke="#3a3a3a"/><rect x="20" y="0" width="2" height="58" fill="#19c060"/></svg>
<div style="position:absolute;left:192.5px;top:660.0px;font:12.5px/1 'Liberation Sans',sans-serif;color:#dcdcdc;white-space:nowrap;transform-origin:0 0;transform:rotate(-90deg) scaleX(0.932);">MASK</div>
<svg style="position:absolute;left:194.5px;top:969px;" width="12" height="66" viewBox="0 0 12 66"><g fill="none" stroke="#d8d8d8" stroke-width="1"><path d="M1 1 L9 9 M9 4 V9 H4Z"/><path d="M2.5 20.5 H8.5 V26.5 H2.5Z M0 18 L2.5 20.5 M11 18 L8.5 20.5 M0 29 L2.5 26.5 M11 29 L8.5 26.5"/><path d="M1.5 37.5 H7.5 V43.5 H1.5Z M4.5 40.5 H10.5 V46.5 H4.5"/><circle cx="5.5" cy="59" r="5"/><circle cx="5.5" cy="59" r="2"/></g></svg>
<svg style="position:absolute;left:211px;top:609px" width="585" height="428" viewBox="0 0 585 428"><defs><filter id="mbf" x="-5%" y="-5%" width="110%" height="110%"><feGaussianBlur stdDeviation="12"/></filter></defs><g filter="url(#mbf)"><rect x="-20" y="-20" width="20" height="20" fill="#b4b4b4"/><rect x="0" y="-20" width="20" height="20" fill="#b4b4b4"/><rect x="20" y="-20" width="20" height="20" fill="#b5b5b5"/><rect x="40" y="-20" width="20" height="20" fill="#b7b7b7"/><rect x="60" y="-20" width="20" height="20" fill="#b9b9b9"/><rect x="80" y="-20" width="20" height="20" fill="#bbbbbb"/><rect x="100" y="-20" width="20" height="20" fill="#bcbcbc"/><rect x="120" y="-20" width="20" height="20" fill="#bcbcbc"/><rect x="140" y="-20" width="20" height="20" fill="#bdbdbd"/><rect x="160" y="-20" width="20" height="20" fill="#bfbfbf"/><rect x="180" y="-20" width="20" height="20" fill="#c1c1c1"/><rect x="200" y="-20" width="20" height="20" fill="#c0c0c0"/><rect x="220" y="-20" width="20" height="20" fill="#bfbfbf"/><rect x="240" y="-20" width="20" height="20" fill="#bebebe"/><rect x="260" y="-20" width="20" height="20" fill="#bebebe"/><rect x="280" y="-20" width="20" height="20" fill="#bfbfbf"/><rect x="300" y="-20" width="20" height="20" fill="#c1c1c1"/><rect x="320" y="-20" width="20" height="20" fill="#c3c3c3"/><rect x="340" y="-20" width="20" height="20" fill="#c4c4c4"/><rect x="360" y="-20" width="20" height="20" fill="#c4c4c4"/><rect x="380" y="-20" width="20" height="20" fill="#c5c5c5"/><rect x="400" y="-20" width="20" height="20" fill="#c7c7c7"/><rect x="420" y="-20" width="20" height="20" fill="#c9c9c9"/><rect x="440" y="-20" width="20" height="20" fill="#cbcbcb"/><rect x="460" y="-20" width="20" height="20" fill="#cccccc"/><rect x="480" y="-20" width="20" height="20" fill="#cfcfcf"/><rect x="500" y="-20" width="20" height="20" fill="#d2d2d2"/><rect x="520" y="-20" width="20" height="20" fill="#d6d6d6"/><rect x="540" y="-20" width="20" height="20" fill="#d7d7d7"/><rect x="560" y="-20" width="20" height="20" fill="#d7d7d7"/><rect x="580" y="-20" width="20" height="20" fill="#d6d6d6"/><rect x="600" y="-20" width="20" height="20" fill="#d5d5d5"/><rect x="-20" y="0" width="20" height="20" fill="#b4b4b4"/><rect x="0" y="0" width="20" height="20" fill="#b4b4b4"/><rect x="20" y="0" width="20" height="20" fill="#b5b5b5"/><rect x="40" y="0" width="20" height="20" fill="#b7b7b7"/><rect x="60" y="0" width="20" height="20" fill="#b9b9b9"/><rect x="80" y="0" width="20" height="20" fill="#bababa"/><rect x="100" y="0" width="20" height="20" fill="#bbbbbb"/><rect x="120" y="0" width="20" height="20" fill="#bcbcbc"/><rect x="140" y="0" width="20" height="20" fill="#bdbdbd"/><rect x="160" y="0" width="20" height="20" fill="#bfbfbf"/><rect x="180" y="0" width="20" height="20" fill="#c0c0c0"/><rect x="200" y="0" width="20" height="20" fill="#c0c0c0"/><rect x="220" y="0" width="20" height="20" fill="#c0c0c0"/><rect x="240" y="0" width="20" height="20" fill="#c0c0c0"/><rect x="260" y="0" width="20" height="20" fill="#c1c1c1"/><rect x="280" y="0" width="20" height="20" fill="#c2c2c2"/><rect x="300" y="0" width="20" height="20" fill="#c3c3c3"/><rect x="320" y="0" width="20" height="20" fill="#c4c4c4"/><rect x="340" y="0" width="20" height="20" fill="#c4c4c4"/><rect x="360" y="0" width="20" height="20" fill="#c5c5c5"/><rect x="380" y="0" width="20" height="20" fill="#c6c6c6"/><rect x="400" y="0" width="20" height="20" fill="#c8c8c8"/><rect x="420" y="0" width="20" height="20" fill="#c9c9c9"/><rect x="440" y="0" width="20" height="20" fill="#cbcbcb"/><rect x="460" y="0" width="20" height="20" fill="#cdcdcd"/><rect x="480" y="0" width="20" height="20" fill="#d0d0d0"/><rect x="500" y="0" width="20" height="20" fill="#d4d4d4"/><rect x="520" y="0" width="20" height="20" fill="#d7d7d7"/><rect x="540" y="0" width="20" height="20" fill="#d8d8d8"/><rect x="560" y="0" width="20" height="20" fill="#d7d7d7"/><rect x="580" y="0" width="20" height="20" fill="#d6d6d6"/><rect x="600" y="0" width="20" height="20" fill="#d5d5d5"/><rect x="-20" y="20" width="20" height="20" fill="#b4b4b4"/><rect x="0" y="20" width="20" height="20" fill="#b4b4b4"/><rect x="20" y="20" width="20" height="20" fill="#b5b5b5"/><rect x="40" y="20" width="20" height="20" fill="#b6b6b6"/><rect x="60" y="20" width="20" height="20" fill="#b8b8b8"/><rect x="80" y="20" width="20" height="20" fill="#b9b9b9"/><rect x="100" y="20" width="20" height="20" fill="#bbbbbb"/><rect x="120" y="20" width="20" height="20" fill="#bcbcbc"/><rect x="140" y="20" width="20" height="20" fill="#bdbdbd"/><rect x="160" y="20" width="20" height="20" fill="#bfbfbf"/><rect x="180" y="20" width="20" height="20" fill="#c1c1c1"/><rect x="200" y="20" width="20" height="20" fill="#c1c1c1"/><rect x="220" y="20" width="20" height="20" fill="#c2c2c2"/><rect x="240" y="20" width="20" height="20" fill="#c3c3c3"/><rect x="260" y="20" width="20" height="20" fill="#c5c5c5"/><rect x="280" y="20" width="20" height="20" fill="#c7c7c7"/><rect x="300" y="20" width="20" height="20" fill="#c7c7c7"/><rect x="320" y="20" width="20" height="20" fill="#c7c7c7"/><rect x="340" y="20" width="20" height="20" fill="#c6c6c6"/><rect x="360" y="20" width="20" height="20" fill="#c6c6c6"/><rect x="380" y="20" width="20" height="20" fill="#c7c7c7"/><rect x="400" y="20" width="20" height="20" fill="#c8c8c8"/><rect x="420" y="20" width="20" height="20" fill="#c9c9c9"/><rect x="440" y="20" width="20" height="20" fill="#cbcbcb"/><rect x="460" y="20" width="20" height="20" fill="#cdcdcd"/><rect x="480" y="20" width="20" height="20" fill="#d1d1d1"/><rect x="500" y="20" width="20" height="20" fill="#d5d5d5"/><rect x="520" y="20" width="20" height="20" fill="#d7d7d7"/><rect x="540" y="20" width="20" height="20" fill="#d8d8d8"/><rect x="560" y="20" width="20" height="20" fill="#d7d7d7"/><rect x="580" y="20" width="20" height="20" fill="#d5d5d5"/><rect x="600" y="20" width="20" height="20" fill="#d4d4d4"/><rect x="-20" y="40" width="20" height="20" fill="#b2b2b2"/><rect x="0" y="40" width="20" height="20" fill="#b3b3b3"/><rect x="20" y="40" width="20" height="20" fill="#b5b5b5"/><rect x="40" y="40" width="20" height="20" fill="#b6b6b6"/><rect x="60" y="40" width="20" height="20" fill="#b7b7b7"/><rect x="80" y="40" width="20" height="20" fill="#b8b8b8"/><rect x="100" y="40" width="20" height="20" fill="#b9b9b9"/><rect x="120" y="40" width="20" height="20" fill="#bbbbbb"/><rect x="140" y="40" width="20" height="20" fill="#bcbcbc"/><rect x="160" y="40" width="20" height="20" fill="#bfbfbf"/><rect x="180" y="40" width="20" height="20" fill="#c1c1c1"/><rect x="200" y="40" width="20" height="20" fill="#c3c3c3"/><rect x="220" y="40" width="20" height="20" fill="#c6c6c6"/><rect x="240" y="40" width="20" height="20" fill="#c8c8c8"/><rect x="260" y="40" width="20" height="20" fill="#cbcbcb"/><rect x="280" y="40" width="20" height="20" fill="#cccccc"/><rect x="300" y="40" width="20" height="20" fill="#cccccc"/><rect x="320" y="40" width="20" height="20" fill="#cacaca"/><rect x="340" y="40" width="20" height="20" fill="#c8c8c8"/><rect x="360" y="40" width="20" height="20" fill="#c7c7c7"/><rect x="380" y="40" width="20" height="20" fill="#c8c8c8"/><rect x="400" y="40" width="20" height="20" fill="#c8c8c8"/><rect x="420" y="40" width="20" height="20" fill="#c9c9c9"/><rect x="440" y="40" width="20" height="20" fill="#cacaca"/><rect x="460" y="40" width="20" height="20" fill="#cccccc"/><rect x="480" y="40" width="20" height="20" fill="#d0d0d0"/><rect x="500" y="40" width="20" height="20" fill="#d4d4d4"/><rect x="520" y="40" width="20" height="20" fill="#d6d6d6"/><rect x="540" y="40" width="20" height="20" fill="#d6d6d6"/><rect x="560" y="40" width="20" height="20" fill="#d5d5d5"/><rect x="580" y="40" width="20" height="20" fill="#d3d3d3"/><rect x="600" y="40" width="20" height="20" fill="#d1d1d1"/><rect x="-20" y="60" width="20" height="20" fill="#afafaf"/><rect x="0" y="60" width="20" height="20" fill="#b1b1b1"/><rect x="20" y="60" width="20" height="20" fill="#b3b3b3"/><rect x="40" y="60" width="20" height="20" fill="#b5b5b5"/><rect x="60" y="60" width="20" height="20" fill="#b6b6b6"/><rect x="80" y="60" width="20" height="20" fill="#b7b7b7"/><rect x="100" y="60" width="20" height="20" fill="#b9b9b9"/><rect x="120" y="60" width="20" height="20" fill="#bababa"/><rect x="140" y="60" width="20" height="20" fill="#bcbcbc"/><rect x="160" y="60" width="20" height="20" fill="#bebebe"/><rect x="180" y="60" width="20" height="20" fill="#c1c1c1"/><rect x="200" y="60" width="20" height="20" fill="#c4c4c4"/><rect x="220" y="60" width="20" height="20" fill="#c8c8c8"/><rect x="240" y="60" width="20" height="20" fill="#cccccc"/><rect x="260" y="60" width="20" height="20" fill="#d0d0d0"/><rect x="280" y="60" width="20" height="20" fill="#d1d1d1"/><rect x="300" y="60" width="20" height="20" fill="#d0d0d0"/><rect x="320" y="60" width="20" height="20" fill="#cccccc"/><rect x="340" y="60" width="20" height="20" fill="#c8c8c8"/><rect x="360" y="60" width="20" height="20" fill="#c7c7c7"/><rect x="380" y="60" width="20" height="20" fill="#c8c8c8"/><rect x="400" y="60" width="20" height="20" fill="#c8c8c8"/><rect x="420" y="60" width="20" height="20" fill="#c8c8c8"/><rect x="440" y="60" width="20" height="20" fill="#c8c8c8"/><rect x="460" y="60" width="20" height="20" fill="#c9c9c9"/><rect x="480" y="60" width="20" height="20" fill="#cdcdcd"/><rect x="500" y="60" width="20" height="20" fill="#d1d1d1"/><rect x="520" y="60" width="20" height="20" fill="#d3d3d3"/><rect x="540" y="60" width="20" height="20" fill="#d2d2d2"/><rect x="560" y="60" width="20" height="20" fill="#d0d0d0"/><rect x="580" y="60" width="20" height="20" fill="#cecece"/><rect x="600" y="60" width="20" height="20" fill="#cccccc"/><rect x="-20" y="80" width="20" height="20" fill="#ababab"/><rect x="0" y="80" width="20" height="20" fill="#adadad"/><rect x="20" y="80" width="20" height="20" fill="#b0b0b0"/><rect x="40" y="80" width="20" height="20" fill="#b3b3b3"/><rect x="60" y="80" width="20" height="20" fill="#b5b5b5"/><rect x="80" y="80" width="20" height="20" fill="#b7b7b7"/><rect x="100" y="80" width="20" height="20" fill="#b8b8b8"/><rect x="120" y="80" width="20" height="20" fill="#b9b9b9"/><rect x="140" y="80" width="20" height="20" fill="#bbbbbb"/><rect x="160" y="80" width="20" height="20" fill="#bebebe"/><rect x="180" y="80" width="20" height="20" fill="#c1c1c1"/><rect x="200" y="80" width="20" height="20" fill="#c4c4c4"/><rect x="220" y="80" width="20" height="20" fill="#c9c9c9"/><rect x="240" y="80" width="20" height="20" fill="#cecece"/><rect x="260" y="80" width="20" height="20" fill="#d2d2d2"/><rect x="280" y="80" width="20" height="20" fill="#d3d3d3"/><rect x="300" y="80" width="20" height="20" fill="#d1d1d1"/><rect x="320" y="80" width="20" height="20" fill="#cccccc"/><rect x="340" y="80" width="20" height="20" fill="#c8c8c8"/><rect x="360" y="80" width="20" height="20" fill="#c7c7c7"/><rect x="380" y="80" width="20" height="20" fill="#c7c7c7"/><rect x="400" y="80" width="20" height="20" fill="#c7c7c7"/><rect x="420" y="80" width="20" height="20" fill="#c7c7c7"/><rect x="440" y="80" width="20" height="20" fill="#c7c7c7"/><rect x="460" y="80" width="20" height="20" fill="#c7c7c7"/><rect x="480" y="80" width="20" height="20" fill="#c9c9c9"/><rect x="500" y="80" width="20" height="20" fill="#cccccc"/><rect x="520" y="80" width="20" height="20" fill="#cecece"/><rect x="540" y="80" width="20" height="20" fill="#cdcdcd"/><rect x="560" y="80" width="20" height="20" fill="#cbcbcb"/><rect x="580" y="80" width="20" height="20" fill="#cacaca"/><rect x="600" y="80" width="20" height="20" fill="#c9c9c9"/><rect x="-20" y="100" width="20" height="20" fill="#a5a5a5"/><rect x="0" y="100" width="20" height="20" fill="#a7a7a7"/><rect x="20" y="100" width="20" height="20" fill="#ababab"/><rect x="40" y="100" width="20" height="20" fill="#b0b0b0"/><rect x="60" y="100" width="20" height="20" fill="#b4b4b4"/><rect x="80" y="100" width="20" height="20" fill="#b6b6b6"/><rect x="100" y="100" width="20" height="20" fill="#b7b7b7"/><rect x="120" y="100" width="20" height="20" fill="#b8b8b8"/><rect x="140" y="100" width="20" height="20" fill="#bababa"/><rect x="160" y="100" width="20" height="20" fill="#bdbdbd"/><rect x="180" y="100" width="20" height="20" fill="#c0c0c0"/><rect x="200" y="100" width="20" height="20" fill="#c4c4c4"/><rect x="220" y="100" width="20" height="20" fill="#c9c9c9"/><rect x="240" y="100" width="20" height="20" fill="#cecece"/><rect x="260" y="100" width="20" height="20" fill="#d2d2d2"/><rect x="280" y="100" width="20" height="20" fill="#d3d3d3"/><rect x="300" y="100" width="20" height="20" fill="#d0d0d0"/><rect x="320" y="100" width="20" height="20" fill="#cacaca"/><rect x="340" y="100" width="20" height="20" fill="#c7c7c7"/><rect x="360" y="100" width="20" height="20" fill="#c5c5c5"/><rect x="380" y="100" width="20" height="20" fill="#c6c6c6"/><rect x="400" y="100" width="20" height="20" fill="#c6c6c6"/><rect x="420" y="100" width="20" height="20" fill="#c6c6c6"/><rect x="440" y="100" width="20" height="20" fill="#c6c6c6"/><rect x="460" y="100" width="20" height="20" fill="#c6c6c6"/><rect x="480" y="100" width="20" height="20" fill="#c7c7c7"/><rect x="500" y="100" width="20" height="20" fill="#c8c8c8"/><rect x="520" y="100" width="20" height="20" fill="#c9c9c9"/><rect x="540" y="100" width="20" height="20" fill="#c9c9c9"/><rect x="560" y="100" width="20" height="20" fill="#c8c8c8"/><rect x="580" y="100" width="20" height="20" fill="#c8c8c8"/><rect x="600" y="100" width="20" height="20" fill="#c7c7c7"/><rect x="-20" y="120" width="20" height="20" fill="#9d9d9d"/><rect x="0" y="120" width="20" height="20" fill="#a0a0a0"/><rect x="20" y="120" width="20" height="20" fill="#a4a4a4"/><rect x="40" y="120" width="20" height="20" fill="#ababab"/><rect x="60" y="120" width="20" height="20" fill="#b1b1b1"/><rect x="80" y="120" width="20" height="20" fill="#b4b4b4"/><rect x="100" y="120" width="20" height="20" fill="#b5b5b5"/><rect x="120" y="120" width="20" height="20" fill="#b6b6b6"/><rect x="140" y="120" width="20" height="20" fill="#b8b8b8"/><rect x="160" y="120" width="20" height="20" fill="#bbbbbb"/><rect x="180" y="120" width="20" height="20" fill="#bfbfbf"/><rect x="200" y="120" width="20" height="20" fill="#c3c3c3"/><rect x="220" y="120" width="20" height="20" fill="#c8c8c8"/><rect x="240" y="120" width="20" height="20" fill="#cecece"/><rect x="260" y="120" width="20" height="20" fill="#d2d2d2"/><rect x="280" y="120" width="20" height="20" fill="#d2d2d2"/><rect x="300" y="120" width="20" height="20" fill="#cfcfcf"/><rect x="320" y="120" width="20" height="20" fill="#c9c9c9"/><rect x="340" y="120" width="20" height="20" fill="#c5c5c5"/><rect x="360" y="120" width="20" height="20" fill="#c4c4c4"/><rect x="380" y="120" width="20" height="20" fill="#c4c4c4"/><rect x="400" y="120" width="20" height="20" fill="#c5c5c5"/><rect x="420" y="120" width="20" height="20" fill="#c5c5c5"/><rect x="440" y="120" width="20" height="20" fill="#c5c5c5"/><rect x="460" y="120" width="20" height="20" fill="#c5c5c5"/><rect x="480" y="120" width="20" height="20" fill="#c5c5c5"/><rect x="500" y="120" width="20" height="20" fill="#c5c5c5"/><rect x="520" y="120" width="20" height="20" fill="#c7c7c7"/><rect x="540" y="120" width="20" height="20" fill="#c7c7c7"/><rect x="560" y="120" width="20" height="20" fill="#c7c7c7"/><rect x="580" y="120" width="20" height="20" fill="#c7c7c7"/><rect x="600" y="120" width="20" height="20" fill="#c6c6c6"/><rect x="-20" y="140" width="20" height="20" fill="#949494"/><rect x="0" y="140" width="20" height="20" fill="#969696"/><rect x="20" y="140" width="20" height="20" fill="#9b9b9b"/><rect x="40" y="140" width="20" height="20" fill="#a4a4a4"/><rect x="60" y="140" width="20" height="20" fill="#acacac"/><rect x="80" y="140" width="20" height="20" fill="#b0b0b0"/><rect x="100" y="140" width="20" height="20" fill="#b1b1b1"/><rect x="120" y="140" width="20" height="20" fill="#b1b1b1"/><rect x="140" y="140" width="20" height="20" fill="#b4b4b4"/><rect x="160" y="140" width="20" height="20" fill="#b8b8b8"/><rect x="180" y="140" width="20" height="20" fill="#bdbdbd"/><rect x="200" y="140" width="20" height="20" fill="#c2c2c2"/><rect x="220" y="140" width="20" height="20" fill="#c9c9c9"/><rect x="240" y="140" width="20" height="20" fill="#cfcfcf"/><rect x="260" y="140" width="20" height="20" fill="#d2d2d2"/><rect x="280" y="140" width="20" height="20" fill="#d2d2d2"/><rect x="300" y="140" width="20" height="20" fill="#cecece"/><rect x="320" y="140" width="20" height="20" fill="#c9c9c9"/><rect x="340" y="140" width="20" height="20" fill="#c5c5c5"/><rect x="360" y="140" width="20" height="20" fill="#c3c3c3"/><rect x="380" y="140" width="20" height="20" fill="#c3c3c3"/><rect x="400" y="140" width="20" height="20" fill="#c3c3c3"/><rect x="420" y="140" width="20" height="20" fill="#c3c3c3"/><rect x="440" y="140" width="20" height="20" fill="#c2c2c2"/><rect x="460" y="140" width="20" height="20" fill="#c2c2c2"/><rect x="480" y="140" width="20" height="20" fill="#c2c2c2"/><rect x="500" y="140" width="20" height="20" fill="#c2c2c2"/><rect x="520" y="140" width="20" height="20" fill="#c3c3c3"/><rect x="540" y="140" width="20" height="20" fill="#c4c4c4"/><rect x="560" y="140" width="20" height="20" fill="#c5c5c5"/><rect x="580" y="140" width="20" height="20" fill="#c5c5c5"/><rect x="600" y="140" width="20" height="20" fill="#c5c5c5"/><rect x="-20" y="160" width="20" height="20" fill="#8b8b8b"/><rect x="0" y="160" width="20" height="20" fill="#8d8d8d"/><rect x="20" y="160" width="20" height="20" fill="#919191"/><rect x="40" y="160" width="20" height="20" fill="#9b9b9b"/><rect x="60" y="160" width="20" height="20" fill="#a5a5a5"/><rect x="80" y="160" width="20" height="20" fill="#aaaaaa"/><rect x="100" y="160" width="20" height="20" fill="#ababab"/><rect x="120" y="160" width="20" height="20" fill="#ababab"/><rect x="140" y="160" width="20" height="20" fill="#aeaeae"/><rect x="160" y="160" width="20" height="20" fill="#b3b3b3"/><rect x="180" y="160" width="20" height="20" fill="#bababa"/><rect x="200" y="160" width="20" height="20" fill="#c3c3c3"/><rect x="220" y="160" width="20" height="20" fill="#cbcbcb"/><rect x="240" y="160" width="20" height="20" fill="#d2d2d2"/><rect x="260" y="160" width="20" height="20" fill="#d5d5d5"/><rect x="280" y="160" width="20" height="20" fill="#d5d5d5"/><rect x="300" y="160" width="20" height="20" fill="#d0d0d0"/><rect x="320" y="160" width="20" height="20" fill="#cacaca"/><rect x="340" y="160" width="20" height="20" fill="#c6c6c6"/><rect x="360" y="160" width="20" height="20" fill="#c3c3c3"/><rect x="380" y="160" width="20" height="20" fill="#c2c2c2"/><rect x="400" y="160" width="20" height="20" fill="#c1c1c1"/><rect x="420" y="160" width="20" height="20" fill="#c0c0c0"/><rect x="440" y="160" width="20" height="20" fill="#bfbfbf"/><rect x="460" y="160" width="20" height="20" fill="#bebebe"/><rect x="480" y="160" width="20" height="20" fill="#bebebe"/><rect x="500" y="160" width="20" height="20" fill="#bebebe"/><rect x="520" y="160" width="20" height="20" fill="#bfbfbf"/><rect x="540" y="160" width="20" height="20" fill="#c1c1c1"/><rect x="560" y="160" width="20" height="20" fill="#c2c2c2"/><rect x="580" y="160" width="20" height="20" fill="#c2c2c2"/><rect x="600" y="160" width="20" height="20" fill="#c2c2c2"/><rect x="-20" y="180" width="20" height="20" fill="#838383"/><rect x="0" y="180" width="20" height="20" fill="#848484"/><rect x="20" y="180" width="20" height="20" fill="#888888"/><rect x="40" y="180" width="20" height="20" fill="#929292"/><rect x="60" y="180" width="20" height="20" fill="#9e9e9e"/><rect x="80" y="180" width="20" height="20" fill="#a4a4a4"/><rect x="100" y="180" width="20" height="20" fill="#a6a6a6"/><rect x="120" y="180" width="20" height="20" fill="#a6a6a6"/><rect x="140" y="180" width="20" height="20" fill="#a9a9a9"/><rect x="160" y="180" width="20" height="20" fill="#aeaeae"/><rect x="180" y="180" width="20" height="20" fill="#b7b7b7"/><rect x="200" y="180" width="20" height="20" fill="#c2c2c2"/><rect x="220" y="180" width="20" height="20" fill="#cdcdcd"/><rect x="240" y="180" width="20" height="20" fill="#d6d6d6"/><rect x="260" y="180" width="20" height="20" fill="#d9d9d9"/><rect x="280" y="180" width="20" height="20" fill="#d8d8d8"/><rect x="300" y="180" width="20" height="20" fill="#d3d3d3"/><rect x="320" y="180" width="20" height="20" fill="#cccccc"/><rect x="340" y="180" width="20" height="20" fill="#c7c7c7"/><rect x="360" y="180" width="20" height="20" fill="#c4c4c4"/><rect x="380" y="180" width="20" height="20" fill="#c2c2c2"/><rect x="400" y="180" width="20" height="20" fill="#c0c0c0"/><rect x="420" y="180" width="20" height="20" fill="#bebebe"/><rect x="440" y="180" width="20" height="20" fill="#bcbcbc"/><rect x="460" y="180" width="20" height="20" fill="#bcbcbc"/><rect x="480" y="180" width="20" height="20" fill="#bbbbbb"/><rect x="500" y="180" width="20" height="20" fill="#bcbcbc"/><rect x="520" y="180" width="20" height="20" fill="#bdbdbd"/><rect x="540" y="180" width="20" height="20" fill="#bfbfbf"/><rect x="560" y="180" width="20" height="20" fill="#c0c0c0"/><rect x="580" y="180" width="20" height="20" fill="#c1c1c1"/><rect x="600" y="180" width="20" height="20" fill="#c1c1c1"/><rect x="-20" y="200" width="20" height="20" fill="#7d7d7d"/><rect x="0" y="200" width="20" height="20" fill="#7d7d7d"/><rect x="20" y="200" width="20" height="20" fill="#808080"/><rect x="40" y="200" width="20" height="20" fill="#898989"/><rect x="60" y="200" width="20" height="20" fill="#969696"/><rect x="80" y="200" width="20" height="20" fill="#9e9e9e"/><rect x="100" y="200" width="20" height="20" fill="#a0a0a0"/><rect x="120" y="200" width="20" height="20" fill="#a2a2a2"/><rect x="140" y="200" width="20" height="20" fill="#a4a4a4"/><rect x="160" y="200" width="20" height="20" fill="#aaaaaa"/><rect x="180" y="200" width="20" height="20" fill="#b4b4b4"/><rect x="200" y="200" width="20" height="20" fill="#c1c1c1"/><rect x="220" y="200" width="20" height="20" fill="#cdcdcd"/><rect x="240" y="200" width="20" height="20" fill="#d7d7d7"/><rect x="260" y="200" width="20" height="20" fill="#dbdbdb"/><rect x="280" y="200" width="20" height="20" fill="#dadada"/><rect x="300" y="200" width="20" height="20" fill="#d5d5d5"/><rect x="320" y="200" width="20" height="20" fill="#cecece"/><rect x="340" y="200" width="20" height="20" fill="#c8c8c8"/><rect x="360" y="200" width="20" height="20" fill="#c5c5c5"/><rect x="380" y="200" width="20" height="20" fill="#c2c2c2"/><rect x="400" y="200" width="20" height="20" fill="#c0c0c0"/><rect x="420" y="200" width="20" height="20" fill="#bdbdbd"/><rect x="440" y="200" width="20" height="20" fill="#bbbbbb"/><rect x="460" y="200" width="20" height="20" fill="#bbbbbb"/><rect x="480" y="200" width="20" height="20" fill="#bbbbbb"/><rect x="500" y="200" width="20" height="20" fill="#bbbbbb"/><rect x="520" y="200" width="20" height="20" fill="#bcbcbc"/><rect x="540" y="200" width="20" height="20" fill="#bebebe"/><rect x="560" y="200" width="20" height="20" fill="#c0c0c0"/><rect x="580" y="200" width="20" height="20" fill="#c0c0c0"/><rect x="600" y="200" width="20" height="20" fill="#c0c0c0"/><rect x="-20" y="220" width="20" height="20" fill="#777777"/><rect x="0" y="220" width="20" height="20" fill="#767676"/><rect x="20" y="220" width="20" height="20" fill="#777777"/><rect x="40" y="220" width="20" height="20" fill="#7e7e7e"/><rect x="60" y="220" width="20" height="20" fill="#8b8b8b"/><rect x="80" y="220" width="20" height="20" fill="#949494"/><rect x="100" y="220" width="20" height="20" fill="#999999"/><rect x="120" y="220" width="20" height="20" fill="#9b9b9b"/><rect x="140" y="220" width="20" height="20" fill="#9f9f9f"/><rect x="160" y="220" width="20" height="20" fill="#a5a5a5"/><rect x="180" y="220" width="20" height="20" fill="#b0b0b0"/><rect x="200" y="220" width="20" height="20" fill="#bdbdbd"/><rect x="220" y="220" width="20" height="20" fill="#cacaca"/><rect x="240" y="220" width="20" height="20" fill="#d3d3d3"/><rect x="260" y="220" width="20" height="20" fill="#d8d8d8"/><rect x="280" y="220" width="20" height="20" fill="#d9d9d9"/><rect x="300" y="220" width="20" height="20" fill="#d5d5d5"/><rect x="320" y="220" width="20" height="20" fill="#cfcfcf"/><rect x="340" y="220" width="20" height="20" fill="#c9c9c9"/><rect x="360" y="220" width="20" height="20" fill="#c5c5c5"/><rect x="380" y="220" width="20" height="20" fill="#c3c3c3"/><rect x="400" y="220" width="20" height="20" fill="#c0c0c0"/><rect x="420" y="220" width="20" height="20" fill="#bdbdbd"/><rect x="440" y="220" width="20" height="20" fill="#bbbbbb"/><rect x="460" y="220" width="20" height="20" fill="#bababa"/><rect x="480" y="220" width="20" height="20" fill="#bababa"/><rect x="500" y="220" width="20" height="20" fill="#bbbbbb"/><rect x="520" y="220" width="20" height="20" fill="#bcbcbc"/><rect x="540" y="220" width="20" height="20" fill="#bebebe"/><rect x="560" y="220" width="20" height="20" fill="#bfbfbf"/><rect x="580" y="220" width="20" height="20" fill="#c0c0c0"/><rect x="600" y="220" width="20" height="20" fill="#c0c0c0"/><rect x="-20" y="240" width="20" height="20" fill="#707070"/><rect x="0" y="240" width="20" height="20" fill="#6f6f6f"/><rect x="20" y="240" width="20" height="20" fill="#6f6f6f"/><rect x="40" y="240" width="20" height="20" fill="#747474"/><rect x="60" y="240" width="20" height="20" fill="#7f7f7f"/><rect x="80" y="240" width="20" height="20" fill="#898989"/><rect x="100" y="240" width="20" height="20" fill="#8f8f8f"/><rect x="120" y="240" width="20" height="20" fill="#939393"/><rect x="140" y="240" width="20" height="20" fill="#989898"/><rect x="160" y="240" width="20" height="20" fill="#a0a0a0"/><rect x="180" y="240" width="20" height="20" fill="#ababab"/><rect x="200" y="240" width="20" height="20" fill="#b8b8b8"/><rect x="220" y="240" width="20" height="20" fill="#c4c4c4"/><rect x="240" y="240" width="20" height="20" fill="#cdcdcd"/><rect x="260" y="240" width="20" height="20" fill="#d3d3d3"/><rect x="280" y="240" width="20" height="20" fill="#d4d4d4"/><rect x="300" y="240" width="20" height="20" fill="#d2d2d2"/><rect x="320" y="240" width="20" height="20" fill="#cecece"/><rect x="340" y="240" width="20" height="20" fill="#c9c9c9"/><rect x="360" y="240" width="20" height="20" fill="#c5c5c5"/><rect x="380" y="240" width="20" height="20" fill="#c3c3c3"/><rect x="400" y="240" width="20" height="20" fill="#c0c0c0"/><rect x="420" y="240" width="20" height="20" fill="#bdbdbd"/><rect x="440" y="240" width="20" height="20" fill="#bbbbbb"/><rect x="460" y="240" width="20" height="20" fill="#bababa"/><rect x="480" y="240" width="20" height="20" fill="#bbbbbb"/><rect x="500" y="240" width="20" height="20" fill="#bbbbbb"/><rect x="520" y="240" width="20" height="20" fill="#bdbdbd"/><rect x="540" y="240" width="20" height="20" fill="#bebebe"/><rect x="560" y="240" width="20" height="20" fill="#c0c0c0"/><rect x="580" y="240" width="20" height="20" fill="#c0c0c0"/><rect x="600" y="240" width="20" height="20" fill="#c0c0c0"/><rect x="-20" y="260" width="20" height="20" fill="#676767"/><rect x="0" y="260" width="20" height="20" fill="#676767"/><rect x="20" y="260" width="20" height="20" fill="#686868"/><rect x="40" y="260" width="20" height="20" fill="#6c6c6c"/><rect x="60" y="260" width="20" height="20" fill="#757575"/><rect x="80" y="260" width="20" height="20" fill="#7e7e7e"/><rect x="100" y="260" width="20" height="20" fill="#848484"/><rect x="120" y="260" width="20" height="20" fill="#8a8a8a"/><rect x="140" y="260" width="20" height="20" fill="#909090"/><rect x="160" y="260" width="20" height="20" fill="#999999"/><rect x="180" y="260" width="20" height="20" fill="#a5a5a5"/><rect x="200" y="260" width="20" height="20" fill="#b2b2b2"/><rect x="220" y="260" width="20" height="20" fill="#bcbcbc"/><rect x="240" y="260" width="20" height="20" fill="#c5c5c5"/><rect x="260" y="260" width="20" height="20" fill="#cbcbcb"/><rect x="280" y="260" width="20" height="20" fill="#cecece"/><rect x="300" y="260" width="20" height="20" fill="#cecece"/><rect x="320" y="260" width="20" height="20" fill="#cbcbcb"/><rect x="340" y="260" width="20" height="20" fill="#c8c8c8"/><rect x="360" y="260" width="20" height="20" fill="#c5c5c5"/><rect x="380" y="260" width="20" height="20" fill="#c3c3c3"/><rect x="400" y="260" width="20" height="20" fill="#c0c0c0"/><rect x="420" y="260" width="20" height="20" fill="#bdbdbd"/><rect x="440" y="260" width="20" height="20" fill="#bbbbbb"/><rect x="460" y="260" width="20" height="20" fill="#bbbbbb"/><rect x="480" y="260" width="20" height="20" fill="#bbbbbb"/><rect x="500" y="260" width="20" height="20" fill="#bcbcbc"/><rect x="520" y="260" width="20" height="20" fill="#bdbdbd"/><rect x="540" y="260" width="20" height="20" fill="#bfbfbf"/><rect x="560" y="260" width="20" height="20" fill="#c0c0c0"/><rect x="580" y="260" width="20" height="20" fill="#c1c1c1"/><rect x="600" y="260" width="20" height="20" fill="#c1c1c1"/><rect x="-20" y="280" width="20" height="20" fill="#5f5f5f"/><rect x="0" y="280" width="20" height="20" fill="#616161"/><rect x="20" y="280" width="20" height="20" fill="#636363"/><rect x="40" y="280" width="20" height="20" fill="#676767"/><rect x="60" y="280" width="20" height="20" fill="#6e6e6e"/><rect x="80" y="280" width="20" height="20" fill="#767676"/><rect x="100" y="280" width="20" height="20" fill="#7c7c7c"/><rect x="120" y="280" width="20" height="20" fill="#818181"/><rect x="140" y="280" width="20" height="20" fill="#878787"/><rect x="160" y="280" width="20" height="20" fill="#909090"/><rect x="180" y="280" width="20" height="20" fill="#9c9c9c"/><rect x="200" y="280" width="20" height="20" fill="#a9a9a9"/><rect x="220" y="280" width="20" height="20" fill="#b3b3b3"/><rect x="240" y="280" width="20" height="20" fill="#bababa"/><rect x="260" y="280" width="20" height="20" fill="#c0c0c0"/><rect x="280" y="280" width="20" height="20" fill="#c5c5c5"/><rect x="300" y="280" width="20" height="20" fill="#c6c6c6"/><rect x="320" y="280" width="20" height="20" fill="#c6c6c6"/><rect x="340" y="280" width="20" height="20" fill="#c4c4c4"/><rect x="360" y="280" width="20" height="20" fill="#c3c3c3"/><rect x="380" y="280" width="20" height="20" fill="#c1c1c1"/><rect x="400" y="280" width="20" height="20" fill="#bfbfbf"/><rect x="420" y="280" width="20" height="20" fill="#bdbdbd"/><rect x="440" y="280" width="20" height="20" fill="#bcbcbc"/><rect x="460" y="280" width="20" height="20" fill="#bcbcbc"/><rect x="480" y="280" width="20" height="20" fill="#bcbcbc"/><rect x="500" y="280" width="20" height="20" fill="#bdbdbd"/><rect x="520" y="280" width="20" height="20" fill="#bebebe"/><rect x="540" y="280" width="20" height="20" fill="#bfbfbf"/><rect x="560" y="280" width="20" height="20" fill="#c1c1c1"/><rect x="580" y="280" width="20" height="20" fill="#c1c1c1"/><rect x="600" y="280" width="20" height="20" fill="#c2c2c2"/><rect x="-20" y="300" width="20" height="20" fill="#5b5b5b"/><rect x="0" y="300" width="20" height="20" fill="#5c5c5c"/><rect x="20" y="300" width="20" height="20" fill="#5f5f5f"/><rect x="40" y="300" width="20" height="20" fill="#636363"/><rect x="60" y="300" width="20" height="20" fill="#696969"/><rect x="80" y="300" width="20" height="20" fill="#717171"/><rect x="100" y="300" width="20" height="20" fill="#767676"/><rect x="120" y="300" width="20" height="20" fill="#7a7a7a"/><rect x="140" y="300" width="20" height="20" fill="#7d7d7d"/><rect x="160" y="300" width="20" height="20" fill="#848484"/><rect x="180" y="300" width="20" height="20" fill="#8f8f8f"/><rect x="200" y="300" width="20" height="20" fill="#9c9c9c"/><rect x="220" y="300" width="20" height="20" fill="#a6a6a6"/><rect x="240" y="300" width="20" height="20" fill="#aeaeae"/><rect x="260" y="300" width="20" height="20" fill="#b4b4b4"/><rect x="280" y="300" width="20" height="20" fill="#b9b9b9"/><rect x="300" y="300" width="20" height="20" fill="#bcbcbc"/><rect x="320" y="300" width="20" height="20" fill="#bdbdbd"/><rect x="340" y="300" width="20" height="20" fill="#bebebe"/><rect x="360" y="300" width="20" height="20" fill="#bebebe"/><rect x="380" y="300" width="20" height="20" fill="#bdbdbd"/><rect x="400" y="300" width="20" height="20" fill="#bcbcbc"/><rect x="420" y="300" width="20" height="20" fill="#bdbdbd"/><rect x="440" y="300" width="20" height="20" fill="#bdbdbd"/><rect x="460" y="300" width="20" height="20" fill="#bdbdbd"/><rect x="480" y="300" width="20" height="20" fill="#bdbdbd"/><rect x="500" y="300" width="20" height="20" fill="#bdbdbd"/><rect x="520" y="300" width="20" height="20" fill="#bebebe"/><rect x="540" y="300" width="20" height="20" fill="#bfbfbf"/><rect x="560" y="300" width="20" height="20" fill="#c1c1c1"/><rect x="580" y="300" width="20" height="20" fill="#c2c2c2"/><rect x="600" y="300" width="20" height="20" fill="#c2c2c2"/><rect x="-20" y="320" width="20" height="20" fill="#595959"/><rect x="0" y="320" width="20" height="20" fill="#5a5a5a"/><rect x="20" y="320" width="20" height="20" fill="#5b5b5b"/><rect x="40" y="320" width="20" height="20" fill="#5e5e5e"/><rect x="60" y="320" width="20" height="20" fill="#646464"/><rect x="80" y="320" width="20" height="20" fill="#6b6b6b"/><rect x="100" y="320" width="20" height="20" fill="#707070"/><rect x="120" y="320" width="20" height="20" fill="#737373"/><rect x="140" y="320" width="20" height="20" fill="#747474"/><rect x="160" y="320" width="20" height="20" fill="#797979"/><rect x="180" y="320" width="20" height="20" fill="#838383"/><rect x="200" y="320" width="20" height="20" fill="#8f8f8f"/><rect x="220" y="320" width="20" height="20" fill="#999999"/><rect x="240" y="320" width="20" height="20" fill="#a0a0a0"/><rect x="260" y="320" width="20" height="20" fill="#a6a6a6"/><rect x="280" y="320" width="20" height="20" fill="#acacac"/><rect x="300" y="320" width="20" height="20" fill="#b0b0b0"/><rect x="320" y="320" width="20" height="20" fill="#b4b4b4"/><rect x="340" y="320" width="20" height="20" fill="#b6b6b6"/><rect x="360" y="320" width="20" height="20" fill="#b6b6b6"/><rect x="380" y="320" width="20" height="20" fill="#b7b7b7"/><rect x="400" y="320" width="20" height="20" fill="#b8b8b8"/><rect x="420" y="320" width="20" height="20" fill="#bbbbbb"/><rect x="440" y="320" width="20" height="20" fill="#bdbdbd"/><rect x="460" y="320" width="20" height="20" fill="#bdbdbd"/><rect x="480" y="320" width="20" height="20" fill="#bdbdbd"/><rect x="500" y="320" width="20" height="20" fill="#bdbdbd"/><rect x="520" y="320" width="20" height="20" fill="#bebebe"/><rect x="540" y="320" width="20" height="20" fill="#c0c0c0"/><rect x="560" y="320" width="20" height="20" fill="#c1c1c1"/><rect x="580" y="320" width="20" height="20" fill="#c2c2c2"/><rect x="600" y="320" width="20" height="20" fill="#c3c3c3"/><rect x="-20" y="340" width="20" height="20" fill="#585858"/><rect x="0" y="340" width="20" height="20" fill="#585858"/><rect x="20" y="340" width="20" height="20" fill="#595959"/><rect x="40" y="340" width="20" height="20" fill="#5a5a5a"/><rect x="60" y="340" width="20" height="20" fill="#5e5e5e"/><rect x="80" y="340" width="20" height="20" fill="#646464"/><rect x="100" y="340" width="20" height="20" fill="#696969"/><rect x="120" y="340" width="20" height="20" fill="#6c6c6c"/><rect x="140" y="340" width="20" height="20" fill="#6d6d6d"/><rect x="160" y="340" width="20" height="20" fill="#717171"/><rect x="180" y="340" width="20" height="20" fill="#7a7a7a"/><rect x="200" y="340" width="20" height="20" fill="#848484"/><rect x="220" y="340" width="20" height="20" fill="#8e8e8e"/><rect x="240" y="340" width="20" height="20" fill="#949494"/><rect x="260" y="340" width="20" height="20" fill="#9a9a9a"/><rect x="280" y="340" width="20" height="20" fill="#a0a0a0"/><rect x="300" y="340" width="20" height="20" fill="#a6a6a6"/><rect x="320" y="340" width="20" height="20" fill="#aaaaaa"/><rect x="340" y="340" width="20" height="20" fill="#adadad"/><rect x="360" y="340" width="20" height="20" fill="#afafaf"/><rect x="380" y="340" width="20" height="20" fill="#b1b1b1"/><rect x="400" y="340" width="20" height="20" fill="#b4b4b4"/><rect x="420" y="340" width="20" height="20" fill="#b9b9b9"/><rect x="440" y="340" width="20" height="20" fill="#bcbcbc"/><rect x="460" y="340" width="20" height="20" fill="#bebebe"/><rect x="480" y="340" width="20" height="20" fill="#bebebe"/><rect x="500" y="340" width="20" height="20" fill="#bebebe"/><rect x="520" y="340" width="20" height="20" fill="#bebebe"/><rect x="540" y="340" width="20" height="20" fill="#c0c0c0"/><rect x="560" y="340" width="20" height="20" fill="#c2c2c2"/><rect x="580" y="340" width="20" height="20" fill="#c3c3c3"/><rect x="600" y="340" width="20" height="20" fill="#c4c4c4"/><rect x="-20" y="360" width="20" height="20" fill="#595959"/><rect x="0" y="360" width="20" height="20" fill="#585858"/><rect x="20" y="360" width="20" height="20" fill="#575757"/><rect x="40" y="360" width="20" height="20" fill="#575757"/><rect x="60" y="360" width="20" height="20" fill="#595959"/><rect x="80" y="360" width="20" height="20" fill="#5d5d5d"/><rect x="100" y="360" width="20" height="20" fill="#616161"/><rect x="120" y="360" width="20" height="20" fill="#656565"/><rect x="140" y="360" width="20" height="20" fill="#686868"/><rect x="160" y="360" width="20" height="20" fill="#6d6d6d"/><rect x="180" y="360" width="20" height="20" fill="#757575"/><rect x="200" y="360" width="20" height="20" fill="#7e7e7e"/><rect x="220" y="360" width="20" height="20" fill="#868686"/><rect x="240" y="360" width="20" height="20" fill="#8c8c8c"/><rect x="260" y="360" width="20" height="20" fill="#919191"/><rect x="280" y="360" width="20" height="20" fill="#979797"/><rect x="300" y="360" width="20" height="20" fill="#9e9e9e"/><rect x="320" y="360" width="20" height="20" fill="#a3a3a3"/><rect x="340" y="360" width="20" height="20" fill="#a6a6a6"/><rect x="360" y="360" width="20" height="20" fill="#a9a9a9"/><rect x="380" y="360" width="20" height="20" fill="#acacac"/><rect x="400" y="360" width="20" height="20" fill="#b0b0b0"/><rect x="420" y="360" width="20" height="20" fill="#b6b6b6"/><rect x="440" y="360" width="20" height="20" fill="#bbbbbb"/><rect x="460" y="360" width="20" height="20" fill="#bebebe"/><rect x="480" y="360" width="20" height="20" fill="#bfbfbf"/><rect x="500" y="360" width="20" height="20" fill="#bebebe"/><rect x="520" y="360" width="20" height="20" fill="#bfbfbf"/><rect x="540" y="360" width="20" height="20" fill="#c1c1c1"/><rect x="560" y="360" width="20" height="20" fill="#c3c3c3"/><rect x="580" y="360" width="20" height="20" fill="#c4c4c4"/><rect x="600" y="360" width="20" height="20" fill="#c6c6c6"/><rect x="-20" y="380" width="20" height="20" fill="#5a5a5a"/><rect x="0" y="380" width="20" height="20" fill="#595959"/><rect x="20" y="380" width="20" height="20" fill="#575757"/><rect x="40" y="380" width="20" height="20" fill="#565656"/><rect x="60" y="380" width="20" height="20" fill="#565656"/><rect x="80" y="380" width="20" height="20" fill="#585858"/><rect x="100" y="380" width="20" height="20" fill="#5b5b5b"/><rect x="120" y="380" width="20" height="20" fill="#5f5f5f"/><rect x="140" y="380" width="20" height="20" fill="#636363"/><rect x="160" y="380" width="20" height="20" fill="#6a6a6a"/><rect x="180" y="380" width="20" height="20" fill="#747474"/><rect x="200" y="380" width="20" height="20" fill="#7d7d7d"/><rect x="220" y="380" width="20" height="20" fill="#848484"/><rect x="240" y="380" width="20" height="20" fill="#898989"/><rect x="260" y="380" width="20" height="20" fill="#8d8d8d"/><rect x="280" y="380" width="20" height="20" fill="#939393"/><rect x="300" y="380" width="20" height="20" fill="#999999"/><rect x="320" y="380" width="20" height="20" fill="#9f9f9f"/><rect x="340" y="380" width="20" height="20" fill="#a3a3a3"/><rect x="360" y="380" width="20" height="20" fill="#a6a6a6"/><rect x="380" y="380" width="20" height="20" fill="#a9a9a9"/><rect x="400" y="380" width="20" height="20" fill="#aeaeae"/><rect x="420" y="380" width="20" height="20" fill="#b4b4b4"/><rect x="440" y="380" width="20" height="20" fill="#bbbbbb"/><rect x="460" y="380" width="20" height="20" fill="#bebebe"/><rect x="480" y="380" width="20" height="20" fill="#c0c0c0"/><rect x="500" y="380" width="20" height="20" fill="#c0c0c0"/><rect x="520" y="380" width="20" height="20" fill="#c1c1c1"/><rect x="540" y="380" width="20" height="20" fill="#c3c3c3"/><rect x="560" y="380" width="20" height="20" fill="#c4c4c4"/><rect x="580" y="380" width="20" height="20" fill="#c6c6c6"/><rect x="600" y="380" width="20" height="20" fill="#c8c8c8"/><rect x="-20" y="400" width="20" height="20" fill="#5c5c5c"/><rect x="0" y="400" width="20" height="20" fill="#5a5a5a"/><rect x="20" y="400" width="20" height="20" fill="#585858"/><rect x="40" y="400" width="20" height="20" fill="#565656"/><rect x="60" y="400" width="20" height="20" fill="#555555"/><rect x="80" y="400" width="20" height="20" fill="#565656"/><rect x="100" y="400" width="20" height="20" fill="#595959"/><rect x="120" y="400" width="20" height="20" fill="#5c5c5c"/><rect x="140" y="400" width="20" height="20" fill="#616161"/><rect x="160" y="400" width="20" height="20" fill="#6a6a6a"/><rect x="180" y="400" width="20" height="20" fill="#767676"/><rect x="200" y="400" width="20" height="20" fill="#7f7f7f"/><rect x="220" y="400" width="20" height="20" fill="#858585"/><rect x="240" y="400" width="20" height="20" fill="#898989"/><rect x="260" y="400" width="20" height="20" fill="#8d8d8d"/><rect x="280" y="400" width="20" height="20" fill="#929292"/><rect x="300" y="400" width="20" height="20" fill="#989898"/><rect x="320" y="400" width="20" height="20" fill="#9e9e9e"/><rect x="340" y="400" width="20" height="20" fill="#a3a3a3"/><rect x="360" y="400" width="20" height="20" fill="#a5a5a5"/><rect x="380" y="400" width="20" height="20" fill="#a8a8a8"/><rect x="400" y="400" width="20" height="20" fill="#adadad"/><rect x="420" y="400" width="20" height="20" fill="#b5b5b5"/><rect x="440" y="400" width="20" height="20" fill="#bbbbbb"/><rect x="460" y="400" width="20" height="20" fill="#bfbfbf"/><rect x="480" y="400" width="20" height="20" fill="#c1c1c1"/><rect x="500" y="400" width="20" height="20" fill="#c1c1c1"/><rect x="520" y="400" width="20" height="20" fill="#c2c2c2"/><rect x="540" y="400" width="20" height="20" fill="#c4c4c4"/><rect x="560" y="400" width="20" height="20" fill="#c6c6c6"/><rect x="580" y="400" width="20" height="20" fill="#c8c8c8"/><rect x="600" y="400" width="20" height="20" fill="#c9c9c9"/><rect x="-20" y="420" width="20" height="20" fill="#5c5c5c"/><rect x="0" y="420" width="20" height="20" fill="#5b5b5b"/><rect x="20" y="420" width="20" height="20" fill="#595959"/><rect x="40" y="420" width="20" height="20" fill="#565656"/><rect x="60" y="420" width="20" height="20" fill="#565656"/><rect x="80" y="420" width="20" height="20" fill="#575757"/><rect x="100" y="420" width="20" height="20" fill="#585858"/><rect x="120" y="420" width="20" height="20" fill="#5b5b5b"/><rect x="140" y="420" width="20" height="20" fill="#606060"/><rect x="160" y="420" width="20" height="20" fill="#6c6c6c"/><rect x="180" y="420" width="20" height="20" fill="#7a7a7a"/><rect x="200" y="420" width="20" height="20" fill="#838383"/><rect x="220" y="420" width="20" height="20" fill="#878787"/><rect x="240" y="420" width="20" height="20" fill="#8a8a8a"/><rect x="260" y="420" width="20" height="20" fill="#8d8d8d"/><rect x="280" y="420" width="20" height="20" fill="#929292"/><rect x="300" y="420" width="20" height="20" fill="#999999"/><rect x="320" y="420" width="20" height="20" fill="#a0a0a0"/><rect x="340" y="420" width="20" height="20" fill="#a4a4a4"/><rect x="360" y="420" width="20" height="20" fill="#a6a6a6"/><rect x="380" y="420" width="20" height="20" fill="#a9a9a9"/><rect x="400" y="420" width="20" height="20" fill="#aeaeae"/><rect x="420" y="420" width="20" height="20" fill="#b7b7b7"/><rect x="440" y="420" width="20" height="20" fill="#bdbdbd"/><rect x="460" y="420" width="20" height="20" fill="#c0c0c0"/><rect x="480" y="420" width="20" height="20" fill="#c1c1c1"/><rect x="500" y="420" width="20" height="20" fill="#c2c2c2"/><rect x="520" y="420" width="20" height="20" fill="#c4c4c4"/><rect x="540" y="420" width="20" height="20" fill="#c6c6c6"/><rect x="560" y="420" width="20" height="20" fill="#c8c8c8"/><rect x="580" y="420" width="20" height="20" fill="#c9c9c9"/><rect x="600" y="420" width="20" height="20" fill="#c9c9c9"/><rect x="-20" y="440" width="20" height="20" fill="#5d5d5d"/><rect x="0" y="440" width="20" height="20" fill="#5c5c5c"/><rect x="20" y="440" width="20" height="20" fill="#5a5a5a"/><rect x="40" y="440" width="20" height="20" fill="#575757"/><rect x="60" y="440" width="20" height="20" fill="#575757"/><rect x="80" y="440" width="20" height="20" fill="#575757"/><rect x="100" y="440" width="20" height="20" fill="#595959"/><rect x="120" y="440" width="20" height="20" fill="#5b5b5b"/><rect x="140" y="440" width="20" height="20" fill="#606060"/><rect x="160" y="440" width="20" height="20" fill="#6d6d6d"/><rect x="180" y="440" width="20" height="20" fill="#7d7d7d"/><rect x="200" y="440" width="20" height="20" fill="#858585"/><rect x="220" y="440" width="20" height="20" fill="#898989"/><rect x="240" y="440" width="20" height="20" fill="#8b8b8b"/><rect x="260" y="440" width="20" height="20" fill="#8e8e8e"/><rect x="280" y="440" width="20" height="20" fill="#939393"/><rect x="300" y="440" width="20" height="20" fill="#9a9a9a"/><rect x="320" y="440" width="20" height="20" fill="#a1a1a1"/><rect x="340" y="440" width="20" height="20" fill="#a6a6a6"/><rect x="360" y="440" width="20" height="20" fill="#a8a8a8"/><rect x="380" y="440" width="20" height="20" fill="#ababab"/><rect x="400" y="440" width="20" height="20" fill="#b1b1b1"/><rect x="420" y="440" width="20" height="20" fill="#b9b9b9"/><rect x="440" y="440" width="20" height="20" fill="#bfbfbf"/><rect x="460" y="440" width="20" height="20" fill="#c1c1c1"/><rect x="480" y="440" width="20" height="20" fill="#c2c2c2"/><rect x="500" y="440" width="20" height="20" fill="#c3c3c3"/><rect x="520" y="440" width="20" height="20" fill="#c5c5c5"/><rect x="540" y="440" width="20" height="20" fill="#c7c7c7"/><rect x="560" y="440" width="20" height="20" fill="#c8c8c8"/><rect x="580" y="440" width="20" height="20" fill="#c9c9c9"/><rect x="600" y="440" width="20" height="20" fill="#cacaca"/></g></svg>
<div style="position:absolute;left:798px;top:582px;width:612px;height:458px;background:#6f6f6f;box-shadow:inset 0 0 0 1px #3c3c3c;"></div>
<div style="position:absolute;left:799px;top:583px;width:2px;height:456px;background:#7a7a7a;"></div>
<div style="position:absolute;left:805px;top:588px;width:14px;height:14px;background:#c8ceff;"></div>
<div style="position:absolute;left:807px;top:592px;width:10px;height:8px;background:#6f6f6f;"></div>
<div style="position:absolute;left:987.0px;top:588.0px;font:bold 12.5px/1 'Liberation Sans',sans-serif;color:#d2d2d2;white-space:nowrap;transform:scaleX(1.130);transform-origin:0 0;">RGB 3:1 AFTER | &lt;*new*&gt;</div>
<svg style="position:absolute;left:1330px;top:592px;" width="72" height="10" viewBox="0 0 72 10"><g fill="#e6e6e6" stroke="#e6e6e6"><rect x="0" y="3" width="9" height="3" stroke="none"/><rect x="21" y="1" width="9" height="2" stroke="none"/><path d="M21 8 L25.5 3 L30 8Z" stroke="none"/><rect x="42" y="3" width="9" height="3" stroke="none"/><rect x="45" y="0" width="3" height="9" stroke="none"/><path d="M64 1 L71 8 M71 1 L64 8" stroke-width="2"/></g></svg>
<svg style="position:absolute;left:801px;top:608px;" width="22" height="62" viewBox="0 0 22 62"><path d="M0.5 22 L21.5 0.5 L21.5 61.5 L0.5 61.5Z" fill="#545454" stroke="#3a3a3a"/></svg>
<div style="position:absolute;left:804.5px;top:663.0px;font:12.5px/1 'Liberation Sans',sans-serif;color:#dcdcdc;white-space:nowrap;transform-origin:0 0;transform:rotate(-90deg) scaleX(0.879);">AFTER</div>
<svg style="position:absolute;left:806.5px;top:969px;" width="12" height="66" viewBox="0 0 12 66"><g fill="none" stroke="#d8d8d8" stroke-width="1"><path d="M1 1 L9 9 M9 4 V9 H4Z"/><path d="M2.5 20.5 H8.5 V26.5 H2.5Z M0 18 L2.5 20.5 M11 18 L8.5 20.5 M0 29 L2.5 26.5 M11 29 L8.5 26.5"/><path d="M1.5 37.5 H7.5 V43.5 H1.5Z M4.5 40.5 H10.5 V46.5 H4.5"/><circle cx="5.5" cy="59" r="5"/><circle cx="5.5" cy="59" r="2"/></g></svg>
<svg style="position:absolute;left:823px;top:608px;" width="585" height="429" viewBox="0 0 585 429"><defs><pattern id="an1" width="99" height="99" patternUnits="userSpaceOnUse"><path d="M24 12h3v3h-3zM48 21h3v3h-3zM93 84h3v3h-3zM90 72h3v3h-3zM39 18h3v3h-3zM93 3h3v3h-3zM72 81h3v3h-3zM0 84h3v3h-3zM51 42h3v3h-3zM18 60h3v3h-3zM3 3h3v3h-3zM3 0h3v3h-3zM72 39h3v3h-3zM81 3h3v3h-3zM42 84h3v3h-3zM93 42h3v3h-3zM66 42h3v3h-3zM42 87h3v3h-3zM54 3h3v3h-3zM78 18h3v3h-3zM33 54h3v3h-3zM21 63h3v3h-3zM96 81h3v3h-3zM96 36h3v3h-3zM57 54h3v3h-3zM93 96h3v3h-3zM75 6h3v3h-3zM90 45h3v3h-3zM75 78h3v3h-3zM33 69h3v3h-3zM69 15h3v3h-3zM84 96h3v3h-3zM18 30h3v3h-3zM75 69h3v3h-3zM93 3h3v3h-3zM90 6h3v3h-3zM57 75h3v3h-3zM30 30h3v3h-3zM96 42h3v3h-3zM0 36h3v3h-3zM42 75h3v3h-3zM96 66h3v3h-3zM66 87h3v3h-3zM51 0h3v3h-3zM72 96h3v3h-3zM24 39h3v3h-3zM81 9h3v3h-3zM90 69h3v3h-3zM36 96h3v3h-3zM78 93h3v3h-3zM66 78h3v3h-3zM66 0h3v3h-3zM63 87h3v3h-3zM3 42h3v3h-3zM33 33h3v3h-3zM15 48h3v3h-3zM6 12h3v3h-3zM15 3h3v3h-3zM84 0h3v3h-3zM51 45h3v3h-3zM51 21h3v3h-3zM33 66h3v3h-3zM54 12h3v3h-3zM30 30h3v3h-3zM48 30h3v3h-3zM51 54h3v3h-3zM87 60h3v3h-3zM93 90h3v3h-3zM21 3h3v3h-3zM57 72h3v3h-3zM63 78h3v3h-3zM36 48h3v3h-3zM18 48h3v3h-3zM96 39h3v3h-3zM81 3h3v3h-3zM42 3h3v3h-3zM75 27h3v3h-3zM6 30h3v3h-3zM84 96h3v3h-3zM81 42h3v3h-3zM84 42h3v3h-3zM3 75h3v3h-3zM60 81h3v3h-3zM9 57h3v3h-3zM24 39h3v3h-3zM9 57h3v3h-3zM12 12h3v3h-3zM57 57h3v3h-3zM30 78h3v3h-3zM48 24h3v3h-3zM0 6h3v3h-3zM39 87h3v3h-3zM30 96h3v3h-3zM6 72h3v3h-3zM36 66h3v3h-3zM18 39h3v3h-3zM81 36h3v3h-3zM93 18h3v3h-3zM72 54h3v3h-3zM96 93h3v3h-3zM3 60h3v3h-3zM75 54h3v3h-3zM3 30h3v3h-3zM36 60h3v3h-3zM24 63h3v3h-3zM81 39h3v3h-3zM51 18h3v3h-3zM72 66h3v3h-3zM93 45h3v3h-3zM12 6h3v3h-3zM15 24h3v3h-3zM30 30h3v3h-3zM39 51h3v3h-3zM63 96h3v3h-3zM48 69h3v3h-3zM63 63h3v3h-3zM21 54h3v3h-3zM45 93h3v3h-3zM24 18h3v3h-3zM60 6h3v3h-3zM78 12h3v3h-3zM72 27h3v3h-3zM24 63h3v3h-3zM21 72h3v3h-3zM12 42h3v3h-3zM15 51h3v3h-3zM69 54h3v3h-3zM21 87h3v3h-3zM51 18h3v3h-3zM6 54h3v3h-3zM0 0h3v3h-3zM15 78h3v3h-3zM21 6h3v3h-3zM36 45h3v3h-3zM78 30h3v3h-3zM21 84h3v3h-3zM30 45h3v3h-3zM30 18h3v3h-3zM81 72h3v3h-3zM54 48h3v3h-3zM90 60h3v3h-3zM18 39h3v3h-3zM60 6h3v3h-3zM3 0h3v3h-3zM54 60h3v3h-3zM84 75h3v3h-3zM60 75h3v3h-3zM12 12h3v3h-3zM60 87h3v3h-3zM21 48h3v3h-3zM39 90h3v3h-3zM66 48h3v3h-3zM33 39h3v3h-3zM57 36h3v3h-3zM45 69h3v3h-3zM15 51h3v3h-3zM15 84h3v3h-3zM15 63h3v3h-3zM42 72h3v3h-3zM57 6h3v3h-3zM60 33h3v3h-3zM60 57h3v3h-3zM45 63h3v3h-3zM18 15h3v3h-3zM45 42h3v3h-3zM3 45h3v3h-3zM75 12h3v3h-3zM51 12h3v3h-3zM12 3h3v3h-3zM0 54h3v3h-3zM66 93h3v3h-3zM90 27h3v3h-3zM18 96h3v3h-3zM60 12h3v3h-3zM96 33h3v3h-3zM33 27h3v3h-3zM27 60h3v3h-3zM57 18h3v3h-3zM96 54h3v3h-3zM24 39h3v3h-3zM27 6h3v3h-3zM60 39h3v3h-3zM33 57h3v3h-3zM81 30h3v3h-3zM9 45h3v3h-3zM48 12h3v3h-3zM84 81h3v3h-3zM48 84h3v3h-3zM87 0h3v3h-3zM75 63h3v3h-3zM30 48h3v3h-3zM93 3h3v3h-3zM78 3h3v3h-3zM9 66h3v3h-3zM24 24h3v3h-3zM24 48h3v3h-3zM51 75h3v3h-3zM75 33h3v3h-3zM15 42h3v3h-3zM93 0h3v3h-3zM33 60h3v3h-3zM96 84h3v3h-3zM42 45h3v3h-3zM60 93h3v3h-3zM90 42h3v3h-3zM78 63h3v3h-3zM51 42h3v3h-3zM9 12h3v3h-3zM96 69h3v3h-3zM30 96h3v3h-3zM39 57h3v3h-3zM57 57h3v3h-3zM69 30h3v3h-3zM87 15h3v3h-3zM21 96h3v3h-3zM72 33h3v3h-3zM27 48h3v3h-3zM81 39h3v3h-3zM9 93h3v3h-3zM75 66h3v3h-3zM72 96h3v3h-3zM30 6h3v3h-3zM15 48h3v3h-3zM18 51h3v3h-3zM15 24h3v3h-3zM15 84h3v3h-3zM45 72h3v3h-3zM81 75h3v3h-3zM30 60h3v3h-3zM84 24h3v3h-3zM93 39h3v3h-3zM21 81h3v3h-3zM78 21h3v3h-3zM54 51h3v3h-3zM45 72h3v3h-3zM0 36h3v3h-3zM84 3h3v3h-3zM3 45h3v3h-3zM48 39h3v3h-3zM33 54h3v3h-3zM27 36h3v3h-3zM51 57h3v3h-3zM48 84h3v3h-3zM30 66h3v3h-3zM93 78h3v3h-3zM21 39h3v3h-3zM72 39h3v3h-3zM54 18h3v3h-3zM3 21h3v3h-3zM0 54h3v3h-3zM24 12h3v3h-3zM96 69h3v3h-3zM57 81h3v3h-3zM96 66h3v3h-3zM60 0h3v3h-3zM21 84h3v3h-3zM84 66h3v3h-3zM57 75h3v3h-3zM63 93h3v3h-3zM21 72h3v3h-3zM72 39h3v3h-3zM0 51h3v3h-3zM96 36h3v3h-3zM87 78h3v3h-3zM57 30h3v3h-3zM84 36h3v3h-3zM69 0h3v3h-3zM72 81h3v3h-3zM75 63h3v3h-3zM12 93h3v3h-3zM45 54h3v3h-3zM3 78h3v3h-3zM27 75h3v3h-3zM51 33h3v3h-3zM12 0h3v3h-3zM66 48h3v3h-3zM78 57h3v3h-3zM27 87h3v3h-3zM48 93h3v3h-3zM30 87h3v3h-3zM96 6h3v3h-3zM51 96h3v3h-3zM18 81h3v3h-3zM12 66h3v3h-3zM12 84h3v3h-3zM3 30h3v3h-3zM96 30h3v3h-3zM15 75h3v3h-3zM51 57h3v3h-3zM39 39h3v3h-3zM45 63h3v3h-3zM51 12h3v3h-3zM12 69h3v3h-3zM87 96h3v3h-3zM9 30h3v3h-3zM57 51h3v3h-3zM66 42h3v3h-3zM75 75h3v3h-3zM33 90h3v3h-3zM48 63h3v3h-3zM42 48h3v3h-3zM45 3h3v3h-3zM75 60h3v3h-3zM81 45h3v3h-3zM51 36h3v3h-3zM12 30h3v3h-3zM84 27h3v3h-3zM48 87h3v3h-3zM30 24h3v3h-3zM24 84h3v3h-3zM69 57h3v3h-3zM75 45h3v3h-3zM21 39h3v3h-3zM57 12h3v3h-3zM18 42h3v3h-3zM75 60h3v3h-3zM93 18h3v3h-3zM33 6h3v3h-3zM9 3h3v3h-3zM39 6h3v3h-3zM93 84h3v3h-3zM63 51h3v3h-3zM21 33h3v3h-3zM18 42h3v3h-3zM75 42h3v3h-3zM93 84h3v3h-3zM72 30h3v3h-3zM42 45h3v3h-3zM54 87h3v3h-3zM72 39h3v3h-3zM84 48h3v3h-3zM63 93h3v3h-3zM21 39h3v3h-3zM15 6h3v3h-3zM0 0h3v3h-3zM90 60h3v3h-3zM72 54h3v3h-3zM36 75h3v3h-3zM30 27h3v3h-3zM3 0h3v3h-3zM72 27h3v3h-3zM9 72h3v3h-3zM48 24h3v3h-3zM15 87h3v3h-3zM57 0h3v3h-3zM6 9h3v3h-3zM24 6h3v3h-3zM51 21h3v3h-3zM81 15h3v3h-3zM36 3h3v3h-3zM93 24h3v3h-3zM51 36h3v3h-3zM84 72h3v3h-3zM63 51h3v3h-3zM48 45h3v3h-3zM45 9h3v3h-3zM33 66h3v3h-3zM81 9h3v3h-3zM66 78h3v3h-3zM36 81h3v3h-3zM12 51h3v3h-3zM12 48h3v3h-3zM33 18h3v3h-3zM27 9h3v3h-3zM39 81h3v3h-3zM6 9h3v3h-3zM15 96h3v3h-3zM90 96h3v3h-3zM69 18h3v3h-3zM60 6h3v3h-3zM24 6h3v3h-3zM84 24h3v3h-3zM75 84h3v3h-3zM3 51h3v3h-3zM15 48h3v3h-3zM60 15h3v3h-3zM57 6h3v3h-3zM72 9h3v3h-3zM48 60h3v3h-3zM24 48h3v3h-3zM72 21h3v3h-3zM57 18h3v3h-3zM81 45h3v3h-3zM96 39h3v3h-3zM63 63h3v3h-3zM96 75h3v3h-3zM90 18h3v3h-3zM24 84h3v3h-3zM3 54h3v3h-3zM30 36h3v3h-3zM69 72h3v3h-3zM60 18h3v3h-3zM78 66h3v3h-3zM24 12h3v3h-3zM6 57h3v3h-3zM60 78h3v3h-3zM57 60h3v3h-3zM66 51h3v3h-3zM60 96h3v3h-3zM0 21h3v3h-3zM27 60h3v3h-3zM60 60h3v3h-3zM12 84h3v3h-3zM51 90h3v3h-3zM87 69h3v3h-3zM72 15h3v3h-3zM9 24h3v3h-3zM9 93h3v3h-3zM48 45h3v3h-3zM63 69h3v3h-3zM69 75h3v3h-3zM57 87h3v3h-3zM63 96h3v3h-3zM30 3h3v3h-3zM27 48h3v3h-3zM42 24h3v3h-3zM21 33h3v3h-3zM78 9h3v3h-3zM18 51h3v3h-3zM18 39h3v3h-3zM48 12h3v3h-3zM15 12h3v3h-3zM39 33h3v3h-3zM96 81h3v3h-3zM3 69h3v3h-3zM93 54h3v3h-3zM42 36h3v3h-3zM93 45h3v3h-3zM81 84h3v3h-3zM69 36h3v3h-3zM90 12h3v3h-3zM48 78h3v3h-3zM36 0h3v3h-3zM72 96h3v3h-3zM93 12h3v3h-3zM75 96h3v3h-3zM81 6h3v3h-3zM66 87h3v3h-3zM0 36h3v3h-3zM57 0h3v3h-3zM21 57h3v3h-3zM96 60h3v3h-3zM54 78h3v3h-3zM78 57h3v3h-3zM84 57h3v3h-3zM24 96h3v3h-3zM84 24h3v3h-3zM30 48h3v3h-3zM0 81h3v3h-3zM6 69h3v3h-3zM78 75h3v3h-3zM54 3h3v3h-3zM15 15h3v3h-3zM0 72h3v3h-3zM51 87h3v3h-3zM51 69h3v3h-3zM90 63h3v3h-3zM72 87h3v3h-3zM21 90h3v3h-3zM66 27h3v3h-3zM78 27h3v3h-3zM3 33h3v3h-3zM48 69h3v3h-3zM24 54h3v3h-3zM78 48h3v3h-3zM96 54h3v3h-3zM78 51h3v3h-3zM81 63h3v3h-3zM93 39h3v3h-3zM93 75h3v3h-3zM81 15h3v3h-3zM12 24h3v3h-3zM39 27h3v3h-3zM42 3h3v3h-3zM18 48h3v3h-3zM27 90h3v3h-3zM18 75h3v3h-3zM33 0h3v3h-3zM15 81h3v3h-3zM9 39h3v3h-3zM81 66h3v3h-3zM9 18h3v3h-3zM78 21h3v3h-3zM48 51h3v3h-3zM33 90h3v3h-3zM9 39h3v3h-3zM15 72h3v3h-3zM21 84h3v3h-3zM54 96h3v3h-3zM93 75h3v3h-3zM21 90h3v3h-3zM18 27h3v3h-3zM72 36h3v3h-3zM30 48h3v3h-3zM78 54h3v3h-3zM93 39h3v3h-3zM63 93h3v3h-3zM18 0h3v3h-3zM66 51h3v3h-3zM9 84h3v3h-3zM57 18h3v3h-3zM42 96h3v3h-3zM51 51h3v3h-3zM45 78h3v3h-3zM27 24h3v3h-3zM48 36h3v3h-3zM78 9h3v3h-3zM96 27h3v3h-3zM78 51h3v3h-3zM51 90h3v3h-3zM57 51h3v3h-3zM93 39h3v3h-3zM93 69h3v3h-3zM90 45h3v3h-3zM63 33h3v3h-3zM33 84h3v3h-3zM27 9h3v3h-3zM96 60h3v3h-3zM24 39h3v3h-3zM60 93h3v3h-3zM90 63h3v3h-3zM21 24h3v3h-3zM24 48h3v3h-3zM42 15h3v3h-3zM9 33h3v3h-3zM21 42h3v3h-3zM36 96h3v3h-3zM57 81h3v3h-3zM60 0h3v3h-3zM3 57h3v3h-3zM42 15h3v3h-3zM42 51h3v3h-3zM63 51h3v3h-3zM72 3h3v3h-3zM21 63h3v3h-3zM66 24h3v3h-3zM21 48h3v3h-3zM27 6h3v3h-3zM66 12h3v3h-3zM15 18h3v3h-3zM57 60h3v3h-3zM45 51h3v3h-3zM9 69h3v3h-3zM3 15h3v3h-3zM24 75h3v3h-3zM69 45h3v3h-3zM18 63h3v3h-3zM51 0h3v3h-3zM96 60h3v3h-3zM21 66h3v3h-3zM24 51h3v3h-3zM75 15h3v3h-3zM90 78h3v3h-3zM75 57h3v3h-3zM42 57h3v3h-3zM24 9h3v3h-3zM96 21h3v3h-3zM33 45h3v3h-3zM39 81h3v3h-3zM51 3h3v3h-3zM48 51h3v3h-3zM48 90h3v3h-3zM24 75h3v3h-3zM18 69h3v3h-3zM12 69h3v3h-3zM96 3h3v3h-3zM57 84h3v3h-3zM24 27h3v3h-3zM12 27h3v3h-3zM39 90h3v3h-3zM63 69h3v3h-3zM54 30h3v3h-3zM27 72h3v3h-3zM84 75h3v3h-3zM21 27h3v3h-3zM51 54h3v3h-3zM0 0h3v3h-3zM24 72h3v3h-3zM18 87h3v3h-3zM3 81h3v3h-3zM81 51h3v3h-3zM69 78h3v3h-3zM75 87h3v3h-3zM9 18h3v3h-3zM90 6h3v3h-3zM0 6h3v3h-3zM21 24h3v3h-3zM96 66h3v3h-3zM51 66h3v3h-3zM90 45h3v3h-3zM45 18h3v3h-3zM66 30h3v3h-3zM21 6h3v3h-3zM60 81h3v3h-3zM66 48h3v3h-3zM9 81h3v3h-3zM78 72h3v3h-3zM66 54h3v3h-3zM63 84h3v3h-3zM45 27h3v3h-3zM9 63h3v3h-3zM21 96h3v3h-3zM33 93h3v3h-3zM63 21h3v3h-3zM3 90h3v3h-3zM39 72h3v3h-3zM33 75h3v3h-3zM42 18h3v3h-3zM45 63h3v3h-3zM63 45h3v3h-3zM87 90h3v3h-3zM69 93h3v3h-3zM36 81h3v3h-3zM84 75h3v3h-3zM21 93h3v3h-3zM51 24h3v3h-3zM27 0h3v3h-3zM72 78h3v3h-3zM18 3h3v3h-3zM12 33h3v3h-3zM87 72h3v3h-3zM96 54h3v3h-3zM27 27h3v3h-3zM18 48h3v3h-3zM3 87h3v3h-3zM75 42h3v3h-3zM75 0h3v3h-3zM45 81h3v3h-3zM30 33h3v3h-3zM63 45h3v3h-3zM12 30h3v3h-3zM33 72h3v3h-3zM3 96h3v3h-3zM39 81h3v3h-3zM45 6h3v3h-3zM36 96h3v3h-3zM12 45h3v3h-3zM75 87h3v3h-3zM21 9h3v3h-3zM72 15h3v3h-3zM18 90h3v3h-3zM6 45h3v3h-3zM0 3h3v3h-3zM57 87h3v3h-3zM51 78h3v3h-3zM30 24h3v3h-3zM60 84h3v3h-3zM96 78h3v3h-3zM30 75h3v3h-3zM72 36h3v3h-3z" fill="#050003" opacity="0.36"/><path d="M93 51h3v3h-3zM69 27h3v3h-3zM48 51h3v3h-3zM33 15h3v3h-3zM69 63h3v3h-3zM27 48h3v3h-3zM48 48h3v3h-3zM66 72h3v3h-3zM51 87h3v3h-3zM0 27h3v3h-3zM24 48h3v3h-3zM42 36h3v3h-3zM12 36h3v3h-3zM81 45h3v3h-3zM24 87h3v3h-3zM75 36h3v3h-3zM15 12h3v3h-3zM27 9h3v3h-3zM3 75h3v3h-3zM72 78h3v3h-3zM24 24h3v3h-3zM12 45h3v3h-3zM72 24h3v3h-3zM54 36h3v3h-3zM75 66h3v3h-3zM33 42h3v3h-3zM57 27h3v3h-3zM66 93h3v3h-3zM54 15h3v3h-3zM96 57h3v3h-3zM39 87h3v3h-3zM3 54h3v3h-3zM18 69h3v3h-3zM84 48h3v3h-3zM9 9h3v3h-3zM60 30h3v3h-3zM24 18h3v3h-3zM21 81h3v3h-3zM45 39h3v3h-3zM96 96h3v3h-3zM75 21h3v3h-3zM39 72h3v3h-3zM24 48h3v3h-3zM0 21h3v3h-3zM36 72h3v3h-3zM90 42h3v3h-3zM51 6h3v3h-3zM30 96h3v3h-3zM42 78h3v3h-3zM51 78h3v3h-3zM75 51h3v3h-3zM93 18h3v3h-3zM24 33h3v3h-3zM3 87h3v3h-3zM6 93h3v3h-3zM39 75h3v3h-3zM63 45h3v3h-3zM18 12h3v3h-3zM6 81h3v3h-3zM84 36h3v3h-3zM33 96h3v3h-3zM36 96h3v3h-3zM72 69h3v3h-3zM36 42h3v3h-3zM69 12h3v3h-3zM63 9h3v3h-3zM87 6h3v3h-3zM33 27h3v3h-3zM54 90h3v3h-3zM6 96h3v3h-3zM12 75h3v3h-3zM15 75h3v3h-3zM96 57h3v3h-3zM75 51h3v3h-3zM66 90h3v3h-3zM9 90h3v3h-3zM3 81h3v3h-3zM57 60h3v3h-3zM27 51h3v3h-3zM12 69h3v3h-3zM78 75h3v3h-3zM3 21h3v3h-3zM6 0h3v3h-3zM18 63h3v3h-3zM63 69h3v3h-3zM6 69h3v3h-3zM12 93h3v3h-3zM15 84h3v3h-3zM63 96h3v3h-3zM0 30h3v3h-3zM60 69h3v3h-3zM39 27h3v3h-3zM27 18h3v3h-3zM75 60h3v3h-3zM96 78h3v3h-3zM69 63h3v3h-3zM48 69h3v3h-3zM6 12h3v3h-3zM45 48h3v3h-3zM75 54h3v3h-3zM15 12h3v3h-3zM30 51h3v3h-3zM78 15h3v3h-3zM24 54h3v3h-3zM48 45h3v3h-3zM39 18h3v3h-3zM51 90h3v3h-3zM9 96h3v3h-3zM57 39h3v3h-3zM12 60h3v3h-3zM63 54h3v3h-3zM24 6h3v3h-3zM84 69h3v3h-3zM6 3h3v3h-3zM60 78h3v3h-3zM30 6h3v3h-3zM81 33h3v3h-3zM36 42h3v3h-3zM21 24h3v3h-3zM96 21h3v3h-3zM51 87h3v3h-3zM36 9h3v3h-3zM69 87h3v3h-3zM63 66h3v3h-3zM42 0h3v3h-3zM0 93h3v3h-3zM6 30h3v3h-3zM48 6h3v3h-3zM0 42h3v3h-3zM15 33h3v3h-3zM6 36h3v3h-3zM39 84h3v3h-3zM54 45h3v3h-3zM93 96h3v3h-3zM69 60h3v3h-3zM75 12h3v3h-3zM36 33h3v3h-3zM36 57h3v3h-3zM81 90h3v3h-3zM69 3h3v3h-3zM93 3h3v3h-3zM18 81h3v3h-3zM63 63h3v3h-3zM12 78h3v3h-3zM36 96h3v3h-3zM93 96h3v3h-3zM90 84h3v3h-3zM90 30h3v3h-3zM51 57h3v3h-3zM75 48h3v3h-3zM48 57h3v3h-3zM0 6h3v3h-3zM87 87h3v3h-3zM66 42h3v3h-3zM96 84h3v3h-3zM39 90h3v3h-3zM63 27h3v3h-3zM72 81h3v3h-3zM9 21h3v3h-3zM66 0h3v3h-3zM48 9h3v3h-3zM57 72h3v3h-3zM0 60h3v3h-3zM63 57h3v3h-3zM9 39h3v3h-3zM15 63h3v3h-3zM21 12h3v3h-3zM24 54h3v3h-3zM78 63h3v3h-3zM42 3h3v3h-3zM33 96h3v3h-3zM69 57h3v3h-3zM54 72h3v3h-3zM78 87h3v3h-3zM12 36h3v3h-3zM78 42h3v3h-3zM6 45h3v3h-3zM42 45h3v3h-3zM75 72h3v3h-3zM39 27h3v3h-3zM57 69h3v3h-3zM0 57h3v3h-3zM84 93h3v3h-3zM30 27h3v3h-3zM3 69h3v3h-3zM81 63h3v3h-3zM96 93h3v3h-3zM60 21h3v3h-3zM54 51h3v3h-3zM81 0h3v3h-3zM57 15h3v3h-3zM93 21h3v3h-3zM96 42h3v3h-3zM48 81h3v3h-3zM69 42h3v3h-3zM9 18h3v3h-3zM96 96h3v3h-3zM96 30h3v3h-3zM24 54h3v3h-3zM9 12h3v3h-3zM39 0h3v3h-3zM9 81h3v3h-3zM3 12h3v3h-3zM9 0h3v3h-3zM6 63h3v3h-3zM63 3h3v3h-3zM0 39h3v3h-3zM90 36h3v3h-3zM51 54h3v3h-3zM48 42h3v3h-3zM33 39h3v3h-3zM75 9h3v3h-3zM45 84h3v3h-3zM6 63h3v3h-3zM60 78h3v3h-3zM21 3h3v3h-3zM33 96h3v3h-3zM15 33h3v3h-3zM39 42h3v3h-3zM33 57h3v3h-3zM18 9h3v3h-3zM60 27h3v3h-3zM12 84h3v3h-3zM27 42h3v3h-3zM6 54h3v3h-3zM66 9h3v3h-3zM15 84h3v3h-3zM36 42h3v3h-3zM33 21h3v3h-3zM9 36h3v3h-3zM9 21h3v3h-3zM15 42h3v3h-3zM54 48h3v3h-3zM81 45h3v3h-3zM6 48h3v3h-3zM36 60h3v3h-3zM66 66h3v3h-3zM87 72h3v3h-3zM72 15h3v3h-3zM81 45h3v3h-3zM93 63h3v3h-3zM33 21h3v3h-3zM45 12h3v3h-3zM81 51h3v3h-3zM57 63h3v3h-3zM69 78h3v3h-3zM87 69h3v3h-3zM66 60h3v3h-3zM75 90h3v3h-3zM96 3h3v3h-3zM69 24h3v3h-3zM57 30h3v3h-3zM57 24h3v3h-3zM27 30h3v3h-3zM87 27h3v3h-3zM24 30h3v3h-3zM15 48h3v3h-3zM45 66h3v3h-3zM60 30h3v3h-3zM51 90h3v3h-3z" fill="#7a7878" opacity="0.14"/></pattern><pattern id="an2" width="120" height="120" patternUnits="userSpaceOnUse"><path d="M9 15h3v3h-3zM15 69h3v3h-3zM30 57h3v3h-3zM48 114h3v3h-3zM39 114h3v3h-3zM6 111h3v3h-3zM30 81h3v3h-3zM75 96h3v3h-3zM69 102h3v3h-3zM84 96h3v3h-3zM51 6h3v3h-3zM3 69h3v3h-3zM87 60h3v3h-3zM72 81h3v3h-3zM99 30h3v3h-3zM105 33h3v3h-3zM45 42h3v3h-3zM3 33h3v3h-3zM60 33h3v3h-3zM24 96h3v3h-3zM96 69h3v3h-3zM96 105h3v3h-3zM33 84h3v3h-3zM78 99h3v3h-3zM69 111h3v3h-3zM66 69h3v3h-3zM84 30h3v3h-3zM75 87h3v3h-3zM99 45h3v3h-3zM93 51h3v3h-3zM93 96h3v3h-3zM96 66h3v3h-3zM87 87h3v3h-3zM66 108h3v3h-3zM105 87h3v3h-3zM93 42h3v3h-3zM60 30h3v3h-3zM117 51h3v3h-3zM90 57h3v3h-3zM57 96h3v3h-3zM105 99h3v3h-3zM96 117h3v3h-3zM111 78h3v3h-3zM57 39h3v3h-3zM93 96h3v3h-3zM69 117h3v3h-3zM12 63h3v3h-3zM0 36h3v3h-3zM18 9h3v3h-3zM108 9h3v3h-3zM51 111h3v3h-3zM42 18h3v3h-3zM99 24h3v3h-3zM51 45h3v3h-3zM39 9h3v3h-3zM81 6h3v3h-3zM9 69h3v3h-3zM69 33h3v3h-3zM45 3h3v3h-3zM15 21h3v3h-3zM12 3h3v3h-3zM6 3h3v3h-3zM69 48h3v3h-3zM24 30h3v3h-3zM33 99h3v3h-3zM0 72h3v3h-3zM111 6h3v3h-3zM45 27h3v3h-3zM6 0h3v3h-3zM66 117h3v3h-3zM21 54h3v3h-3zM63 93h3v3h-3zM3 57h3v3h-3zM84 105h3v3h-3zM114 6h3v3h-3zM48 75h3v3h-3zM117 27h3v3h-3zM90 42h3v3h-3zM15 60h3v3h-3zM18 3h3v3h-3zM84 24h3v3h-3zM99 111h3v3h-3zM75 93h3v3h-3zM96 60h3v3h-3zM27 63h3v3h-3zM48 48h3v3h-3zM114 78h3v3h-3zM3 105h3v3h-3zM24 9h3v3h-3zM48 6h3v3h-3zM24 30h3v3h-3zM30 18h3v3h-3zM87 42h3v3h-3zM96 6h3v3h-3zM45 42h3v3h-3zM84 12h3v3h-3zM48 15h3v3h-3zM111 42h3v3h-3zM117 117h3v3h-3zM69 48h3v3h-3zM81 51h3v3h-3zM99 0h3v3h-3zM27 6h3v3h-3zM72 78h3v3h-3zM30 21h3v3h-3zM96 15h3v3h-3zM45 18h3v3h-3zM18 3h3v3h-3zM33 42h3v3h-3zM18 39h3v3h-3zM3 99h3v3h-3zM87 87h3v3h-3zM57 102h3v3h-3zM72 39h3v3h-3zM39 81h3v3h-3zM81 96h3v3h-3zM3 111h3v3h-3zM111 9h3v3h-3zM78 99h3v3h-3zM111 33h3v3h-3zM18 90h3v3h-3zM69 3h3v3h-3zM99 21h3v3h-3zM117 69h3v3h-3zM54 69h3v3h-3zM57 3h3v3h-3zM78 18h3v3h-3zM18 57h3v3h-3zM36 3h3v3h-3zM84 9h3v3h-3zM78 93h3v3h-3zM87 39h3v3h-3zM111 117h3v3h-3zM12 0h3v3h-3zM54 3h3v3h-3zM69 57h3v3h-3zM12 42h3v3h-3zM93 36h3v3h-3zM21 108h3v3h-3zM69 75h3v3h-3zM87 24h3v3h-3zM66 75h3v3h-3zM21 48h3v3h-3zM21 21h3v3h-3zM15 117h3v3h-3zM63 75h3v3h-3zM39 18h3v3h-3zM3 117h3v3h-3zM90 6h3v3h-3zM93 54h3v3h-3zM66 87h3v3h-3zM27 69h3v3h-3zM51 90h3v3h-3zM99 90h3v3h-3zM78 93h3v3h-3zM54 75h3v3h-3zM42 30h3v3h-3zM93 114h3v3h-3zM48 105h3v3h-3zM81 15h3v3h-3zM111 108h3v3h-3zM18 12h3v3h-3zM66 33h3v3h-3zM102 27h3v3h-3zM78 12h3v3h-3zM15 6h3v3h-3zM24 54h3v3h-3zM72 42h3v3h-3zM63 84h3v3h-3zM33 99h3v3h-3zM54 21h3v3h-3zM27 102h3v3h-3zM81 18h3v3h-3zM63 99h3v3h-3zM45 96h3v3h-3zM48 30h3v3h-3zM30 87h3v3h-3zM45 75h3v3h-3zM66 108h3v3h-3zM27 87h3v3h-3zM84 3h3v3h-3zM114 72h3v3h-3zM33 75h3v3h-3zM96 9h3v3h-3zM90 51h3v3h-3zM75 48h3v3h-3zM78 90h3v3h-3zM69 105h3v3h-3zM63 15h3v3h-3zM42 102h3v3h-3zM117 36h3v3h-3zM75 72h3v3h-3zM0 60h3v3h-3zM87 99h3v3h-3zM87 33h3v3h-3zM18 3h3v3h-3zM75 39h3v3h-3zM108 114h3v3h-3zM72 39h3v3h-3zM18 72h3v3h-3zM105 36h3v3h-3zM51 111h3v3h-3zM111 36h3v3h-3zM93 117h3v3h-3zM24 0h3v3h-3zM117 81h3v3h-3zM90 48h3v3h-3zM96 108h3v3h-3zM33 87h3v3h-3zM39 12h3v3h-3zM66 0h3v3h-3zM93 102h3v3h-3zM12 111h3v3h-3zM93 63h3v3h-3zM87 51h3v3h-3zM96 87h3v3h-3zM3 15h3v3h-3zM117 66h3v3h-3zM33 75h3v3h-3zM48 24h3v3h-3zM9 30h3v3h-3zM93 72h3v3h-3zM87 54h3v3h-3zM27 0h3v3h-3zM54 105h3v3h-3zM87 0h3v3h-3zM69 6h3v3h-3zM102 72h3v3h-3zM108 84h3v3h-3zM39 57h3v3h-3zM93 24h3v3h-3zM90 102h3v3h-3zM57 12h3v3h-3zM48 60h3v3h-3zM57 63h3v3h-3zM57 75h3v3h-3zM99 15h3v3h-3zM96 39h3v3h-3zM75 114h3v3h-3zM99 27h3v3h-3zM96 15h3v3h-3zM57 6h3v3h-3zM42 87h3v3h-3zM105 42h3v3h-3zM99 51h3v3h-3zM9 21h3v3h-3zM21 72h3v3h-3zM69 39h3v3h-3zM60 66h3v3h-3zM12 63h3v3h-3zM87 69h3v3h-3zM30 93h3v3h-3zM84 54h3v3h-3zM87 24h3v3h-3zM84 39h3v3h-3zM51 60h3v3h-3zM30 18h3v3h-3zM45 90h3v3h-3zM36 69h3v3h-3zM33 66h3v3h-3zM24 24h3v3h-3zM42 51h3v3h-3zM105 72h3v3h-3zM75 63h3v3h-3zM51 114h3v3h-3zM96 111h3v3h-3zM60 75h3v3h-3zM54 102h3v3h-3zM117 12h3v3h-3zM69 57h3v3h-3zM75 90h3v3h-3zM33 48h3v3h-3zM66 84h3v3h-3zM90 15h3v3h-3zM33 60h3v3h-3zM72 24h3v3h-3zM3 18h3v3h-3zM66 30h3v3h-3zM66 12h3v3h-3zM81 0h3v3h-3zM102 60h3v3h-3zM45 114h3v3h-3zM72 102h3v3h-3zM54 90h3v3h-3zM27 69h3v3h-3zM60 36h3v3h-3zM93 18h3v3h-3zM27 39h3v3h-3zM63 48h3v3h-3zM27 78h3v3h-3zM69 48h3v3h-3zM15 63h3v3h-3zM36 45h3v3h-3zM45 117h3v3h-3zM6 63h3v3h-3zM69 117h3v3h-3zM9 27h3v3h-3zM33 12h3v3h-3zM81 84h3v3h-3zM51 24h3v3h-3zM60 99h3v3h-3zM108 21h3v3h-3zM63 117h3v3h-3zM75 42h3v3h-3zM9 75h3v3h-3zM90 93h3v3h-3zM117 60h3v3h-3zM102 117h3v3h-3zM114 15h3v3h-3zM111 96h3v3h-3zM102 93h3v3h-3zM75 87h3v3h-3zM30 78h3v3h-3zM72 99h3v3h-3zM84 6h3v3h-3zM18 84h3v3h-3zM111 24h3v3h-3zM21 96h3v3h-3zM33 12h3v3h-3zM75 57h3v3h-3zM87 0h3v3h-3zM48 18h3v3h-3zM66 42h3v3h-3zM33 3h3v3h-3zM27 81h3v3h-3zM15 63h3v3h-3zM87 9h3v3h-3zM90 45h3v3h-3zM12 90h3v3h-3zM24 105h3v3h-3zM3 24h3v3h-3zM96 102h3v3h-3zM9 9h3v3h-3zM36 102h3v3h-3zM0 99h3v3h-3zM63 99h3v3h-3zM45 24h3v3h-3zM69 93h3v3h-3zM0 24h3v3h-3zM102 21h3v3h-3zM45 18h3v3h-3zM87 39h3v3h-3zM9 117h3v3h-3zM39 72h3v3h-3zM63 117h3v3h-3zM75 99h3v3h-3zM96 30h3v3h-3zM96 18h3v3h-3zM27 39h3v3h-3zM33 72h3v3h-3zM36 57h3v3h-3zM63 81h3v3h-3zM27 81h3v3h-3zM24 75h3v3h-3zM60 57h3v3h-3zM18 105h3v3h-3zM18 90h3v3h-3zM51 54h3v3h-3zM99 93h3v3h-3zM51 42h3v3h-3zM78 24h3v3h-3zM105 18h3v3h-3zM3 114h3v3h-3zM105 36h3v3h-3zM39 36h3v3h-3zM75 111h3v3h-3zM6 24h3v3h-3zM3 48h3v3h-3zM90 102h3v3h-3zM9 42h3v3h-3zM27 114h3v3h-3zM60 6h3v3h-3zM36 18h3v3h-3zM24 102h3v3h-3zM33 15h3v3h-3zM87 54h3v3h-3zM39 30h3v3h-3zM60 51h3v3h-3zM99 108h3v3h-3zM12 78h3v3h-3zM78 6h3v3h-3zM87 57h3v3h-3zM21 51h3v3h-3zM3 39h3v3h-3zM78 63h3v3h-3zM48 102h3v3h-3zM75 111h3v3h-3zM99 36h3v3h-3zM81 24h3v3h-3zM30 84h3v3h-3zM87 66h3v3h-3zM72 90h3v3h-3zM117 48h3v3h-3zM117 36h3v3h-3zM111 90h3v3h-3zM84 36h3v3h-3zM90 108h3v3h-3zM63 57h3v3h-3zM12 30h3v3h-3zM69 114h3v3h-3zM90 42h3v3h-3zM117 108h3v3h-3zM24 57h3v3h-3zM39 102h3v3h-3zM57 18h3v3h-3zM0 3h3v3h-3zM36 60h3v3h-3zM9 60h3v3h-3zM102 48h3v3h-3zM63 84h3v3h-3zM12 78h3v3h-3zM90 3h3v3h-3zM54 111h3v3h-3zM108 24h3v3h-3zM39 27h3v3h-3zM30 114h3v3h-3zM72 12h3v3h-3zM111 84h3v3h-3zM51 15h3v3h-3zM93 90h3v3h-3zM45 27h3v3h-3zM108 57h3v3h-3zM42 36h3v3h-3zM117 63h3v3h-3zM111 117h3v3h-3zM75 99h3v3h-3zM78 45h3v3h-3zM39 105h3v3h-3zM9 48h3v3h-3zM45 24h3v3h-3zM117 75h3v3h-3zM81 21h3v3h-3zM87 75h3v3h-3zM75 90h3v3h-3zM72 54h3v3h-3zM39 45h3v3h-3zM42 9h3v3h-3zM102 99h3v3h-3zM15 114h3v3h-3zM102 0h3v3h-3zM9 72h3v3h-3zM81 75h3v3h-3zM42 96h3v3h-3zM51 18h3v3h-3zM69 96h3v3h-3zM69 99h3v3h-3zM93 111h3v3h-3zM12 87h3v3h-3zM42 51h3v3h-3zM3 3h3v3h-3z" fill="#300818" opacity="0.2"/><path d="M90 6h3v3h-3zM24 27h3v3h-3zM39 60h3v3h-3zM45 102h3v3h-3zM9 117h3v3h-3zM27 54h3v3h-3zM18 105h3v3h-3zM102 15h3v3h-3zM24 81h3v3h-3zM24 6h3v3h-3zM57 96h3v3h-3zM51 90h3v3h-3zM9 105h3v3h-3zM66 63h3v3h-3zM18 114h3v3h-3zM69 18h3v3h-3zM114 66h3v3h-3zM69 51h3v3h-3zM90 54h3v3h-3zM96 114h3v3h-3zM27 3h3v3h-3zM6 63h3v3h-3zM81 0h3v3h-3zM66 102h3v3h-3zM9 12h3v3h-3zM102 96h3v3h-3zM117 81h3v3h-3zM81 78h3v3h-3zM45 33h3v3h-3zM30 117h3v3h-3zM6 3h3v3h-3zM111 66h3v3h-3zM33 54h3v3h-3zM3 6h3v3h-3zM45 108h3v3h-3zM42 75h3v3h-3zM12 69h3v3h-3zM21 114h3v3h-3zM12 45h3v3h-3zM42 105h3v3h-3zM36 18h3v3h-3zM0 75h3v3h-3zM15 96h3v3h-3zM51 111h3v3h-3zM42 9h3v3h-3zM99 99h3v3h-3zM99 75h3v3h-3zM81 24h3v3h-3zM27 81h3v3h-3zM24 87h3v3h-3zM69 9h3v3h-3zM108 33h3v3h-3zM99 84h3v3h-3zM81 114h3v3h-3zM84 30h3v3h-3zM93 114h3v3h-3zM24 66h3v3h-3zM27 3h3v3h-3zM48 33h3v3h-3zM27 78h3v3h-3zM108 48h3v3h-3zM84 90h3v3h-3zM87 36h3v3h-3zM81 81h3v3h-3zM51 42h3v3h-3zM66 6h3v3h-3zM75 117h3v3h-3zM3 81h3v3h-3zM57 3h3v3h-3zM105 90h3v3h-3zM108 48h3v3h-3zM51 45h3v3h-3zM87 87h3v3h-3zM69 99h3v3h-3zM117 87h3v3h-3zM45 105h3v3h-3zM102 30h3v3h-3zM87 54h3v3h-3zM69 78h3v3h-3zM21 96h3v3h-3zM45 72h3v3h-3zM21 81h3v3h-3zM114 87h3v3h-3zM117 99h3v3h-3zM87 15h3v3h-3zM72 84h3v3h-3zM117 69h3v3h-3zM105 66h3v3h-3zM30 27h3v3h-3zM42 33h3v3h-3zM78 84h3v3h-3zM93 33h3v3h-3zM78 48h3v3h-3zM60 108h3v3h-3zM75 57h3v3h-3zM48 60h3v3h-3zM0 75h3v3h-3zM111 6h3v3h-3zM39 87h3v3h-3zM18 21h3v3h-3zM0 69h3v3h-3zM60 114h3v3h-3zM60 75h3v3h-3zM33 60h3v3h-3zM15 99h3v3h-3zM114 90h3v3h-3zM75 117h3v3h-3zM45 84h3v3h-3zM18 114h3v3h-3zM3 66h3v3h-3zM3 57h3v3h-3zM93 24h3v3h-3zM9 0h3v3h-3zM63 75h3v3h-3zM90 117h3v3h-3zM0 90h3v3h-3zM108 39h3v3h-3zM42 117h3v3h-3zM60 30h3v3h-3zM63 57h3v3h-3zM75 108h3v3h-3zM114 93h3v3h-3zM87 51h3v3h-3zM15 96h3v3h-3zM39 108h3v3h-3zM69 45h3v3h-3zM69 69h3v3h-3zM33 45h3v3h-3zM102 117h3v3h-3zM42 39h3v3h-3zM111 87h3v3h-3zM45 75h3v3h-3zM51 111h3v3h-3zM39 96h3v3h-3zM30 0h3v3h-3zM75 90h3v3h-3zM69 33h3v3h-3zM36 114h3v3h-3zM33 93h3v3h-3zM117 0h3v3h-3zM24 39h3v3h-3zM39 0h3v3h-3zM117 15h3v3h-3zM87 36h3v3h-3zM33 51h3v3h-3zM75 117h3v3h-3zM3 0h3v3h-3zM69 21h3v3h-3zM57 6h3v3h-3zM108 69h3v3h-3zM90 72h3v3h-3zM21 12h3v3h-3zM87 33h3v3h-3zM27 87h3v3h-3zM12 51h3v3h-3zM27 90h3v3h-3zM102 12h3v3h-3zM99 54h3v3h-3zM54 3h3v3h-3zM105 105h3v3h-3zM39 12h3v3h-3zM78 24h3v3h-3zM33 111h3v3h-3zM57 87h3v3h-3zM36 6h3v3h-3zM63 87h3v3h-3zM9 27h3v3h-3zM42 117h3v3h-3zM66 57h3v3h-3zM18 36h3v3h-3zM27 42h3v3h-3zM3 60h3v3h-3zM21 51h3v3h-3zM18 69h3v3h-3zM12 96h3v3h-3zM117 24h3v3h-3zM66 24h3v3h-3zM81 36h3v3h-3zM57 105h3v3h-3zM3 3h3v3h-3zM63 27h3v3h-3zM12 102h3v3h-3zM9 24h3v3h-3zM93 78h3v3h-3zM66 90h3v3h-3zM54 57h3v3h-3zM12 27h3v3h-3zM21 0h3v3h-3zM15 27h3v3h-3zM66 27h3v3h-3zM57 108h3v3h-3zM102 24h3v3h-3zM15 42h3v3h-3zM108 42h3v3h-3zM63 15h3v3h-3zM33 81h3v3h-3zM39 78h3v3h-3zM6 63h3v3h-3zM81 93h3v3h-3zM105 66h3v3h-3zM33 99h3v3h-3zM21 6h3v3h-3zM24 72h3v3h-3zM27 78h3v3h-3zM42 51h3v3h-3zM117 102h3v3h-3zM21 15h3v3h-3zM96 108h3v3h-3zM117 33h3v3h-3zM36 117h3v3h-3zM12 102h3v3h-3zM60 24h3v3h-3zM96 45h3v3h-3zM45 87h3v3h-3zM75 87h3v3h-3zM18 60h3v3h-3zM42 9h3v3h-3zM66 18h3v3h-3zM75 3h3v3h-3zM108 21h3v3h-3zM48 66h3v3h-3zM105 45h3v3h-3zM63 81h3v3h-3zM42 6h3v3h-3zM24 30h3v3h-3zM24 30h3v3h-3zM75 27h3v3h-3zM18 57h3v3h-3zM81 87h3v3h-3zM0 21h3v3h-3zM81 0h3v3h-3zM18 6h3v3h-3zM36 81h3v3h-3zM0 36h3v3h-3zM72 60h3v3h-3zM27 33h3v3h-3zM51 51h3v3h-3zM48 108h3v3h-3zM42 99h3v3h-3zM57 57h3v3h-3zM108 78h3v3h-3zM93 90h3v3h-3zM72 54h3v3h-3zM75 33h3v3h-3zM78 54h3v3h-3zM108 87h3v3h-3zM99 81h3v3h-3zM108 60h3v3h-3zM102 12h3v3h-3zM108 0h3v3h-3zM48 78h3v3h-3zM111 87h3v3h-3zM15 96h3v3h-3zM102 90h3v3h-3zM99 51h3v3h-3zM30 39h3v3h-3zM69 18h3v3h-3zM42 39h3v3h-3zM81 24h3v3h-3zM96 36h3v3h-3zM96 72h3v3h-3zM30 12h3v3h-3zM57 87h3v3h-3zM27 96h3v3h-3zM15 69h3v3h-3zM33 42h3v3h-3zM105 6h3v3h-3zM81 105h3v3h-3zM6 75h3v3h-3zM102 57h3v3h-3zM42 30h3v3h-3zM75 42h3v3h-3zM36 108h3v3h-3zM42 96h3v3h-3zM48 105h3v3h-3zM51 114h3v3h-3zM48 30h3v3h-3zM3 117h3v3h-3zM75 96h3v3h-3zM9 9h3v3h-3zM93 36h3v3h-3zM105 60h3v3h-3zM54 6h3v3h-3zM87 63h3v3h-3zM33 84h3v3h-3zM9 39h3v3h-3zM69 48h3v3h-3zM84 48h3v3h-3zM96 48h3v3h-3zM9 60h3v3h-3zM0 78h3v3h-3zM42 33h3v3h-3zM72 90h3v3h-3zM24 81h3v3h-3zM54 12h3v3h-3zM33 9h3v3h-3zM78 12h3v3h-3zM102 111h3v3h-3zM27 3h3v3h-3zM3 69h3v3h-3z" fill="#3a5a3a" opacity="0.16"/></pattern><pattern id="an3" width="141" height="141" patternUnits="userSpaceOnUse"><path d="M45 111h3v3h-3zM102 24h3v3h-3zM69 114h3v3h-3zM90 120h3v3h-3zM111 12h3v3h-3zM114 0h3v3h-3zM90 48h3v3h-3zM105 42h3v3h-3zM36 135h3v3h-3zM90 102h3v3h-3zM105 90h3v3h-3zM75 120h3v3h-3zM27 42h3v3h-3zM120 27h3v3h-3zM99 72h3v3h-3zM0 126h3v3h-3zM12 30h3v3h-3zM111 6h3v3h-3zM57 3h3v3h-3zM51 90h3v3h-3zM114 138h3v3h-3zM72 135h3v3h-3zM81 75h3v3h-3zM138 108h3v3h-3zM84 24h3v3h-3zM69 18h3v3h-3zM6 24h3v3h-3zM93 39h3v3h-3zM48 129h3v3h-3zM81 120h3v3h-3zM57 78h3v3h-3zM96 72h3v3h-3zM108 66h3v3h-3zM102 111h3v3h-3zM78 111h3v3h-3zM42 63h3v3h-3zM129 3h3v3h-3zM51 114h3v3h-3zM126 132h3v3h-3zM30 132h3v3h-3zM60 102h3v3h-3zM108 108h3v3h-3zM18 135h3v3h-3zM123 39h3v3h-3zM120 108h3v3h-3zM51 54h3v3h-3zM21 12h3v3h-3zM90 120h3v3h-3zM90 15h3v3h-3zM66 12h3v3h-3zM78 27h3v3h-3zM3 54h3v3h-3zM81 78h3v3h-3zM21 6h3v3h-3zM114 117h3v3h-3zM6 72h3v3h-3zM135 111h3v3h-3zM63 105h3v3h-3zM51 96h3v3h-3zM45 6h3v3h-3zM57 0h3v3h-3zM12 18h3v3h-3zM114 102h3v3h-3zM6 36h3v3h-3zM78 54h3v3h-3zM117 48h3v3h-3zM27 132h3v3h-3zM6 63h3v3h-3zM60 69h3v3h-3zM24 72h3v3h-3zM72 87h3v3h-3zM99 72h3v3h-3zM123 114h3v3h-3zM129 105h3v3h-3zM18 117h3v3h-3zM96 51h3v3h-3zM81 120h3v3h-3zM138 135h3v3h-3zM45 57h3v3h-3zM81 48h3v3h-3zM99 57h3v3h-3zM105 63h3v3h-3zM0 78h3v3h-3zM111 60h3v3h-3zM3 72h3v3h-3zM117 111h3v3h-3zM120 24h3v3h-3zM9 120h3v3h-3zM120 63h3v3h-3zM87 66h3v3h-3zM129 66h3v3h-3zM114 135h3v3h-3zM51 93h3v3h-3zM3 111h3v3h-3zM9 129h3v3h-3zM3 69h3v3h-3zM48 120h3v3h-3zM87 57h3v3h-3zM111 114h3v3h-3zM60 33h3v3h-3zM69 33h3v3h-3zM60 69h3v3h-3zM114 48h3v3h-3zM57 72h3v3h-3zM18 3h3v3h-3zM108 129h3v3h-3zM24 57h3v3h-3zM96 42h3v3h-3zM123 51h3v3h-3zM45 60h3v3h-3zM33 129h3v3h-3zM81 123h3v3h-3zM132 18h3v3h-3zM18 114h3v3h-3zM60 63h3v3h-3zM129 42h3v3h-3zM84 30h3v3h-3zM15 63h3v3h-3zM123 39h3v3h-3zM108 84h3v3h-3zM51 42h3v3h-3zM21 6h3v3h-3zM99 36h3v3h-3zM60 108h3v3h-3zM33 51h3v3h-3zM63 123h3v3h-3zM15 117h3v3h-3zM66 111h3v3h-3zM24 78h3v3h-3zM54 99h3v3h-3zM51 87h3v3h-3zM66 120h3v3h-3zM78 54h3v3h-3zM78 108h3v3h-3zM78 6h3v3h-3zM78 27h3v3h-3zM36 0h3v3h-3zM90 117h3v3h-3zM96 81h3v3h-3zM105 135h3v3h-3zM42 6h3v3h-3zM87 126h3v3h-3zM99 54h3v3h-3zM102 63h3v3h-3zM42 12h3v3h-3zM111 54h3v3h-3zM21 45h3v3h-3zM6 6h3v3h-3zM132 96h3v3h-3zM36 81h3v3h-3zM108 9h3v3h-3zM0 90h3v3h-3zM21 30h3v3h-3zM96 57h3v3h-3zM45 126h3v3h-3zM3 99h3v3h-3zM102 78h3v3h-3zM9 117h3v3h-3zM21 63h3v3h-3zM24 48h3v3h-3zM102 90h3v3h-3zM9 66h3v3h-3zM42 36h3v3h-3zM21 102h3v3h-3zM21 30h3v3h-3zM45 51h3v3h-3zM24 0h3v3h-3zM93 120h3v3h-3zM108 75h3v3h-3zM9 51h3v3h-3zM45 51h3v3h-3zM117 99h3v3h-3zM99 81h3v3h-3zM9 90h3v3h-3zM60 0h3v3h-3zM9 24h3v3h-3zM6 21h3v3h-3zM9 12h3v3h-3zM90 6h3v3h-3zM135 15h3v3h-3zM96 96h3v3h-3zM93 60h3v3h-3zM30 60h3v3h-3zM12 66h3v3h-3zM72 123h3v3h-3zM72 111h3v3h-3zM57 69h3v3h-3zM48 36h3v3h-3zM63 81h3v3h-3zM21 24h3v3h-3zM105 0h3v3h-3zM135 138h3v3h-3zM72 15h3v3h-3zM108 33h3v3h-3zM6 69h3v3h-3zM87 114h3v3h-3zM123 102h3v3h-3zM72 120h3v3h-3zM6 117h3v3h-3zM81 9h3v3h-3zM69 120h3v3h-3zM93 132h3v3h-3zM60 78h3v3h-3zM132 78h3v3h-3zM87 3h3v3h-3zM45 39h3v3h-3zM102 51h3v3h-3zM132 111h3v3h-3zM12 81h3v3h-3zM42 81h3v3h-3zM24 3h3v3h-3zM60 69h3v3h-3zM105 48h3v3h-3zM21 87h3v3h-3zM132 21h3v3h-3zM138 126h3v3h-3zM99 72h3v3h-3zM126 18h3v3h-3zM138 60h3v3h-3zM108 102h3v3h-3zM18 111h3v3h-3zM135 0h3v3h-3zM90 27h3v3h-3zM45 72h3v3h-3zM6 99h3v3h-3zM15 108h3v3h-3zM18 126h3v3h-3zM72 33h3v3h-3zM3 63h3v3h-3zM21 3h3v3h-3zM21 129h3v3h-3zM90 132h3v3h-3zM54 111h3v3h-3zM57 15h3v3h-3zM6 108h3v3h-3zM96 99h3v3h-3zM135 45h3v3h-3zM18 105h3v3h-3zM18 105h3v3h-3zM9 105h3v3h-3zM60 108h3v3h-3zM33 12h3v3h-3zM45 33h3v3h-3zM123 45h3v3h-3zM87 117h3v3h-3zM132 75h3v3h-3zM48 69h3v3h-3zM114 75h3v3h-3zM66 105h3v3h-3zM78 15h3v3h-3zM72 96h3v3h-3zM45 78h3v3h-3zM30 78h3v3h-3zM132 108h3v3h-3zM111 129h3v3h-3zM99 129h3v3h-3zM90 27h3v3h-3zM123 75h3v3h-3zM27 30h3v3h-3zM18 93h3v3h-3zM90 132h3v3h-3zM99 84h3v3h-3zM111 138h3v3h-3zM33 24h3v3h-3zM51 36h3v3h-3zM27 111h3v3h-3zM96 60h3v3h-3zM42 132h3v3h-3zM102 54h3v3h-3zM126 135h3v3h-3zM78 114h3v3h-3zM111 111h3v3h-3zM51 39h3v3h-3zM57 3h3v3h-3zM51 90h3v3h-3zM72 36h3v3h-3zM33 108h3v3h-3zM69 45h3v3h-3zM60 90h3v3h-3zM27 78h3v3h-3zM132 90h3v3h-3zM132 114h3v3h-3zM39 87h3v3h-3zM111 123h3v3h-3zM105 3h3v3h-3zM90 138h3v3h-3zM12 75h3v3h-3zM138 6h3v3h-3zM87 42h3v3h-3zM45 123h3v3h-3zM135 129h3v3h-3zM12 39h3v3h-3zM48 45h3v3h-3zM36 48h3v3h-3zM24 33h3v3h-3zM117 135h3v3h-3zM129 6h3v3h-3zM48 30h3v3h-3zM6 60h3v3h-3zM33 81h3v3h-3z" fill="#000" opacity="0.25"/><path d="M15 138h3v3h-3zM15 21h3v3h-3zM15 48h3v3h-3zM54 6h3v3h-3zM66 84h3v3h-3zM111 138h3v3h-3zM129 63h3v3h-3zM0 3h3v3h-3zM63 63h3v3h-3zM81 72h3v3h-3zM93 12h3v3h-3zM39 123h3v3h-3zM111 93h3v3h-3zM75 24h3v3h-3zM102 60h3v3h-3zM21 51h3v3h-3zM12 126h3v3h-3zM81 21h3v3h-3zM84 99h3v3h-3zM48 18h3v3h-3zM99 132h3v3h-3zM69 129h3v3h-3zM69 84h3v3h-3zM54 126h3v3h-3zM129 126h3v3h-3zM123 48h3v3h-3zM18 63h3v3h-3zM129 108h3v3h-3zM102 99h3v3h-3zM21 126h3v3h-3zM93 96h3v3h-3zM66 9h3v3h-3zM135 54h3v3h-3zM129 138h3v3h-3zM108 33h3v3h-3zM123 123h3v3h-3zM138 120h3v3h-3zM27 33h3v3h-3zM69 123h3v3h-3zM87 21h3v3h-3zM18 105h3v3h-3zM27 63h3v3h-3zM123 138h3v3h-3zM123 114h3v3h-3zM78 105h3v3h-3zM57 123h3v3h-3zM33 87h3v3h-3zM90 57h3v3h-3zM33 135h3v3h-3zM12 18h3v3h-3zM135 33h3v3h-3zM105 102h3v3h-3zM108 75h3v3h-3zM66 18h3v3h-3zM51 51h3v3h-3zM72 9h3v3h-3zM24 6h3v3h-3zM90 96h3v3h-3zM51 45h3v3h-3zM132 96h3v3h-3zM66 63h3v3h-3zM75 84h3v3h-3zM102 12h3v3h-3zM66 93h3v3h-3zM21 27h3v3h-3zM51 111h3v3h-3zM18 129h3v3h-3zM21 108h3v3h-3zM138 21h3v3h-3zM33 132h3v3h-3zM36 108h3v3h-3zM78 126h3v3h-3zM75 24h3v3h-3zM111 114h3v3h-3zM27 75h3v3h-3zM36 102h3v3h-3zM99 30h3v3h-3zM108 33h3v3h-3zM36 48h3v3h-3zM69 54h3v3h-3zM3 84h3v3h-3zM78 72h3v3h-3zM60 105h3v3h-3zM111 57h3v3h-3zM120 93h3v3h-3zM99 129h3v3h-3zM135 57h3v3h-3zM126 90h3v3h-3zM3 114h3v3h-3zM36 138h3v3h-3zM120 0h3v3h-3zM18 126h3v3h-3zM42 93h3v3h-3zM33 99h3v3h-3zM120 87h3v3h-3zM36 36h3v3h-3zM99 39h3v3h-3zM6 96h3v3h-3zM123 84h3v3h-3zM21 108h3v3h-3zM54 126h3v3h-3zM27 24h3v3h-3zM87 15h3v3h-3zM117 9h3v3h-3zM3 69h3v3h-3zM117 42h3v3h-3zM96 12h3v3h-3zM93 102h3v3h-3zM3 63h3v3h-3zM60 63h3v3h-3zM66 132h3v3h-3zM132 24h3v3h-3zM15 114h3v3h-3zM6 135h3v3h-3zM15 63h3v3h-3zM39 12h3v3h-3zM36 81h3v3h-3zM132 42h3v3h-3zM93 60h3v3h-3zM18 6h3v3h-3zM78 12h3v3h-3zM36 135h3v3h-3zM30 75h3v3h-3zM93 90h3v3h-3zM132 12h3v3h-3zM102 81h3v3h-3zM39 123h3v3h-3zM93 57h3v3h-3zM3 87h3v3h-3zM87 132h3v3h-3zM75 84h3v3h-3zM33 87h3v3h-3zM6 138h3v3h-3zM48 69h3v3h-3zM69 84h3v3h-3zM99 69h3v3h-3zM114 75h3v3h-3zM42 0h3v3h-3zM39 48h3v3h-3zM69 27h3v3h-3zM87 102h3v3h-3zM36 30h3v3h-3zM39 3h3v3h-3zM30 111h3v3h-3zM75 96h3v3h-3zM30 120h3v3h-3zM3 24h3v3h-3zM21 114h3v3h-3zM30 84h3v3h-3zM93 33h3v3h-3zM9 3h3v3h-3zM75 84h3v3h-3zM60 78h3v3h-3zM6 135h3v3h-3zM135 9h3v3h-3zM45 75h3v3h-3zM6 75h3v3h-3zM93 3h3v3h-3zM42 45h3v3h-3zM18 72h3v3h-3zM90 36h3v3h-3zM30 63h3v3h-3zM117 21h3v3h-3zM66 21h3v3h-3zM114 9h3v3h-3zM138 54h3v3h-3zM51 87h3v3h-3zM57 93h3v3h-3zM45 105h3v3h-3zM51 3h3v3h-3z" fill="#48487a" opacity="0.14"/></pattern><pattern id="an4" width="189" height="189" patternUnits="userSpaceOnUse"><path d="M45 57h9v9h-9zM18 138h9v9h-9zM75 90h9v9h-9zM27 15h9v9h-9zM12 3h9v9h-9zM75 105h9v9h-9zM174 54h9v9h-9zM153 144h9v9h-9zM9 42h9v9h-9zM99 102h9v9h-9zM69 51h9v9h-9zM147 33h9v9h-9zM156 18h9v9h-9zM48 39h9v9h-9zM180 177h9v9h-9zM3 159h9v9h-9zM123 153h9v9h-9zM48 153h9v9h-9zM51 36h9v9h-9zM30 57h9v9h-9zM54 120h9v9h-9zM165 138h9v9h-9zM183 162h9v9h-9zM162 168h9v9h-9zM69 15h9v9h-9z" fill="#000" opacity="0.22"/><path d="M162 114h9v9h-9zM63 126h9v9h-9zM72 96h9v9h-9zM45 33h9v9h-9zM45 90h9v9h-9zM51 15h9v9h-9zM180 177h9v9h-9zM156 165h9v9h-9zM180 105h9v9h-9zM159 57h9v9h-9zM0 174h9v9h-9zM54 108h9v9h-9zM135 168h9v9h-9zM57 162h9v9h-9zM144 96h9v9h-9z" fill="#504a58" opacity="0.12"/></pattern><radialGradient id="as0"><stop offset="0" stop-color="#704a4a" stop-opacity="0.620"/><stop offset="0.1" stop-color="#704a4a" stop-opacity="0.593"/><stop offset="0.2" stop-color="#704a4a" stop-opacity="0.518"/><stop offset="0.3" stop-color="#704a4a" stop-opacity="0.414"/><stop offset="0.4" stop-color="#704a4a" stop-opacity="0.302"/><stop offset="0.5" stop-color="#704a4a" stop-opacity="0.201"/><stop offset="0.6" stop-color="#704a4a" stop-opacity="0.123"/><stop offset="0.7" stop-color="#704a4a" stop-opacity="0.068"/><stop offset="0.8" stop-color="#704a4a" stop-opacity="0.035"/><stop offset="0.9" stop-color="#704a4a" stop-opacity="0.016"/><stop offset="1" stop-color="#704a4a" stop-opacity="0.000"/></radialGradient><radialGradient id="as1"><stop offset="0" stop-color="#e4d8d4" stop-opacity="1.000"/><stop offset="0.25" stop-color="#e4d8d4" stop-opacity="0.950"/><stop offset="0.45" stop-color="#e4d8d4" stop-opacity="0.800"/><stop offset="0.6" stop-color="#e4d8d4" stop-opacity="0.550"/><stop offset="0.75" stop-color="#e4d8d4" stop-opacity="0.280"/><stop offset="0.88" stop-color="#e4d8d4" stop-opacity="0.100"/><stop offset="1" stop-color="#e4d8d4" stop-opacity="0.000"/></radialGradient><radialGradient id="as2"><stop offset="0" stop-color="#805040" stop-opacity="0.560"/><stop offset="0.1" stop-color="#805040" stop-opacity="0.535"/><stop offset="0.2" stop-color="#805040" stop-opacity="0.468"/><stop offset="0.3" stop-color="#805040" stop-opacity="0.374"/><stop offset="0.4" stop-color="#805040" stop-opacity="0.273"/><stop offset="0.5" stop-color="#805040" stop-opacity="0.182"/><stop offset="0.6" stop-color="#805040" stop-opacity="0.111"/><stop offset="0.7" stop-color="#805040" stop-opacity="0.062"/><stop offset="0.8" stop-color="#805040" stop-opacity="0.031"/><stop offset="0.9" stop-color="#805040" stop-opacity="0.015"/><stop offset="1" stop-color="#805040" stop-opacity="0.000"/></radialGradient><radialGradient id="as3"><stop offset="0" stop-color="#d4a684" stop-opacity="0.950"/><stop offset="0.25" stop-color="#d4a684" stop-opacity="0.902"/><stop offset="0.45" stop-color="#d4a684" stop-opacity="0.760"/><stop offset="0.6" stop-color="#d4a684" stop-opacity="0.522"/><stop offset="0.75" stop-color="#d4a684" stop-opacity="0.266"/><stop offset="0.88" stop-color="#d4a684" stop-opacity="0.095"/><stop offset="1" stop-color="#d4a684" stop-opacity="0.000"/></radialGradient><radialGradient id="as4"><stop offset="0" stop-color="#904838" stop-opacity="0.620"/><stop offset="0.1" stop-color="#904838" stop-opacity="0.593"/><stop offset="0.2" stop-color="#904838" stop-opacity="0.518"/><stop offset="0.3" stop-color="#904838" stop-opacity="0.414"/><stop offset="0.4" stop-color="#904838" stop-opacity="0.302"/><stop offset="0.5" stop-color="#904838" stop-opacity="0.201"/><stop offset="0.6" stop-color="#904838" stop-opacity="0.123"/><stop offset="0.7" stop-color="#904838" stop-opacity="0.068"/><stop offset="0.8" stop-color="#904838" stop-opacity="0.035"/><stop offset="0.9" stop-color="#904838" stop-opacity="0.016"/><stop offset="1" stop-color="#904838" stop-opacity="0.000"/></radialGradient><radialGradient id="as5"><stop offset="0" stop-color="#eaa482" stop-opacity="0.970"/><stop offset="0.25" stop-color="#eaa482" stop-opacity="0.921"/><stop offset="0.45" stop-color="#eaa482" stop-opacity="0.776"/><stop offset="0.6" stop-color="#eaa482" stop-opacity="0.533"/><stop offset="0.75" stop-color="#eaa482" stop-opacity="0.272"/><stop offset="0.88" stop-color="#eaa482" stop-opacity="0.097"/><stop offset="1" stop-color="#eaa482" stop-opacity="0.000"/></radialGradient><radialGradient id="as6"><stop offset="0" stop-color="#904030" stop-opacity="0.620"/><stop offset="0.1" stop-color="#904030" stop-opacity="0.593"/><stop offset="0.2" stop-color="#904030" stop-opacity="0.518"/><stop offset="0.3" stop-color="#904030" stop-opacity="0.414"/><stop offset="0.4" stop-color="#904030" stop-opacity="0.302"/><stop offset="0.5" stop-color="#904030" stop-opacity="0.201"/><stop offset="0.6" stop-color="#904030" stop-opacity="0.123"/><stop offset="0.7" stop-color="#904030" stop-opacity="0.068"/><stop offset="0.8" stop-color="#904030" stop-opacity="0.035"/><stop offset="0.9" stop-color="#904030" stop-opacity="0.016"/><stop offset="1" stop-color="#904030" stop-opacity="0.000"/></radialGradient><radialGradient id="as7"><stop offset="0" stop-color="#ea9468" stop-opacity="0.970"/><stop offset="0.25" stop-color="#ea9468" stop-opacity="0.921"/><stop offset="0.45" stop-color="#ea9468" stop-opacity="0.776"/><stop offset="0.6" stop-color="#ea9468" stop-opacity="0.533"/><stop offset="0.75" stop-color="#ea9468" stop-opacity="0.272"/><stop offset="0.88" stop-color="#ea9468" stop-opacity="0.097"/><stop offset="1" stop-color="#ea9468" stop-opacity="0.000"/></radialGradient><radialGradient id="as8"><stop offset="0" stop-color="#7a6040" stop-opacity="0.600"/><stop offset="0.25" stop-color="#7a6040" stop-opacity="0.570"/><stop offset="0.45" stop-color="#7a6040" stop-opacity="0.480"/><stop offset="0.6" stop-color="#7a6040" stop-opacity="0.330"/><stop offset="0.75" stop-color="#7a6040" stop-opacity="0.168"/><stop offset="0.88" stop-color="#7a6040" stop-opacity="0.060"/><stop offset="1" stop-color="#7a6040" stop-opacity="0.000"/></radialGradient><radialGradient id="as9"><stop offset="0" stop-color="#704830" stop-opacity="0.440"/><stop offset="0.1" stop-color="#704830" stop-opacity="0.421"/><stop offset="0.2" stop-color="#704830" stop-opacity="0.368"/><stop offset="0.3" stop-color="#704830" stop-opacity="0.293"/><stop offset="0.4" stop-color="#704830" stop-opacity="0.214"/><stop offset="0.5" stop-color="#704830" stop-opacity="0.143"/><stop offset="0.6" stop-color="#704830" stop-opacity="0.087"/><stop offset="0.7" stop-color="#704830" stop-opacity="0.049"/><stop offset="0.8" stop-color="#704830" stop-opacity="0.025"/><stop offset="0.9" stop-color="#704830" stop-opacity="0.011"/><stop offset="1" stop-color="#704830" stop-opacity="0.000"/></radialGradient><radialGradient id="as10"><stop offset="0" stop-color="#cca070" stop-opacity="0.850"/><stop offset="0.25" stop-color="#cca070" stop-opacity="0.807"/><stop offset="0.45" stop-color="#cca070" stop-opacity="0.680"/><stop offset="0.6" stop-color="#cca070" stop-opacity="0.468"/><stop offset="0.75" stop-color="#cca070" stop-opacity="0.238"/><stop offset="0.88" stop-color="#cca070" stop-opacity="0.085"/><stop offset="1" stop-color="#cca070" stop-opacity="0.000"/></radialGradient><radialGradient id="as11"><stop offset="0" stop-color="#6a5a48" stop-opacity="0.550"/><stop offset="0.25" stop-color="#6a5a48" stop-opacity="0.522"/><stop offset="0.45" stop-color="#6a5a48" stop-opacity="0.440"/><stop offset="0.6" stop-color="#6a5a48" stop-opacity="0.303"/><stop offset="0.75" stop-color="#6a5a48" stop-opacity="0.154"/><stop offset="0.88" stop-color="#6a5a48" stop-opacity="0.055"/><stop offset="1" stop-color="#6a5a48" stop-opacity="0.000"/></radialGradient><radialGradient id="as12"><stop offset="0" stop-color="#4a3a30" stop-opacity="0.500"/><stop offset="0.25" stop-color="#4a3a30" stop-opacity="0.475"/><stop offset="0.45" stop-color="#4a3a30" stop-opacity="0.400"/><stop offset="0.6" stop-color="#4a3a30" stop-opacity="0.275"/><stop offset="0.75" stop-color="#4a3a30" stop-opacity="0.140"/><stop offset="0.88" stop-color="#4a3a30" stop-opacity="0.050"/><stop offset="1" stop-color="#4a3a30" stop-opacity="0.000"/></radialGradient><radialGradient id="as13"><stop offset="0" stop-color="#5a4a40" stop-opacity="0.500"/><stop offset="0.25" stop-color="#5a4a40" stop-opacity="0.475"/><stop offset="0.45" stop-color="#5a4a40" stop-opacity="0.400"/><stop offset="0.6" stop-color="#5a4a40" stop-opacity="0.275"/><stop offset="0.75" stop-color="#5a4a40" stop-opacity="0.140"/><stop offset="0.88" stop-color="#5a4a40" stop-opacity="0.050"/><stop offset="1" stop-color="#5a4a40" stop-opacity="0.000"/></radialGradient><radialGradient id="as14"><stop offset="0" stop-color="#604848" stop-opacity="0.500"/><stop offset="0.1" stop-color="#604848" stop-opacity="0.478"/><stop offset="0.2" stop-color="#604848" stop-opacity="0.418"/><stop offset="0.3" stop-color="#604848" stop-opacity="0.333"/><stop offset="0.4" stop-color="#604848" stop-opacity="0.243"/><stop offset="0.5" stop-color="#604848" stop-opacity="0.162"/><stop offset="0.6" stop-color="#604848" stop-opacity="0.099"/><stop offset="0.7" stop-color="#604848" stop-opacity="0.055"/><stop offset="0.8" stop-color="#604848" stop-opacity="0.028"/><stop offset="0.9" stop-color="#604848" stop-opacity="0.013"/><stop offset="1" stop-color="#604848" stop-opacity="0.000"/></radialGradient><radialGradient id="as15"><stop offset="0" stop-color="#cbb2a4" stop-opacity="0.900"/><stop offset="0.25" stop-color="#cbb2a4" stop-opacity="0.855"/><stop offset="0.45" stop-color="#cbb2a4" stop-opacity="0.720"/><stop offset="0.6" stop-color="#cbb2a4" stop-opacity="0.495"/><stop offset="0.75" stop-color="#cbb2a4" stop-opacity="0.252"/><stop offset="0.88" stop-color="#cbb2a4" stop-opacity="0.090"/><stop offset="1" stop-color="#cbb2a4" stop-opacity="0.000"/></radialGradient><radialGradient id="as16"><stop offset="0" stop-color="#7a7a70" stop-opacity="0.600"/><stop offset="0.25" stop-color="#7a7a70" stop-opacity="0.570"/><stop offset="0.45" stop-color="#7a7a70" stop-opacity="0.480"/><stop offset="0.6" stop-color="#7a7a70" stop-opacity="0.330"/><stop offset="0.75" stop-color="#7a7a70" stop-opacity="0.168"/><stop offset="0.88" stop-color="#7a7a70" stop-opacity="0.060"/><stop offset="1" stop-color="#7a7a70" stop-opacity="0.000"/></radialGradient><radialGradient id="as17"><stop offset="0" stop-color="#6a6060" stop-opacity="0.550"/><stop offset="0.25" stop-color="#6a6060" stop-opacity="0.522"/><stop offset="0.45" stop-color="#6a6060" stop-opacity="0.440"/><stop offset="0.6" stop-color="#6a6060" stop-opacity="0.303"/><stop offset="0.75" stop-color="#6a6060" stop-opacity="0.154"/><stop offset="0.88" stop-color="#6a6060" stop-opacity="0.055"/><stop offset="1" stop-color="#6a6060" stop-opacity="0.000"/></radialGradient></defs><rect width="585" height="429" fill="#2c2629"/><rect width="585" height="429" fill="url(#an1)"/><rect width="585" height="429" fill="url(#an2)"/><rect width="585" height="429" fill="url(#an3)"/><rect width="585" height="429" fill="url(#an4)"/><circle cx="260" cy="83" r="50" fill="url(#as0)"/><circle cx="260" cy="83" r="33" fill="url(#as1)"/><circle cx="68" cy="193" r="40" fill="url(#as2)"/><circle cx="68" cy="193" r="29" fill="url(#as3)"/><circle cx="266" cy="208" r="44" fill="url(#as4)"/><circle cx="266" cy="208" r="31" fill="url(#as5)"/><circle cx="327" cy="239" r="44" fill="url(#as6)"/><circle cx="327" cy="239" r="31" fill="url(#as7)"/><circle cx="138" cy="282" r="22" fill="url(#as8)"/><circle cx="253" cy="324" r="32" fill="url(#as9)"/><circle cx="253" cy="324" r="25" fill="url(#as10)"/><circle cx="399" cy="315" r="22" fill="url(#as11)"/><circle cx="73" cy="54" r="31" fill="url(#as12)"/><circle cx="373" cy="104" r="25" fill="url(#as13)"/><circle cx="527" cy="44" r="36" fill="url(#as14)"/><circle cx="527" cy="44" r="27" fill="url(#as15)"/><circle cx="501" cy="122" r="26" fill="url(#as16)"/><circle cx="377" cy="105" r="26" fill="url(#as17)"/></svg>
<div style="position:absolute;left:1894px;top:119px;width:26px;height:927px;background:#6e6e6e;"></div>
<div style="position:absolute;left:1894px;top:119px;width:26px;height:128px;background:#4d4d4d;box-shadow:inset 0 0 0 1px #3a3a3a;"></div>
<div style="position:absolute;left:1900.0px;top:220.0px;font:12.5px/1 'Liberation Sans',sans-serif;color:#e6e6e6;white-space:nowrap;transform-origin:0 0;transform:rotate(-90deg) scaleX(0.988);">Process Explorer</div>
<svg style="position:absolute;left:1898px;top:225px;" width="18" height="18" viewBox="0 0 18 18"><circle cx="9" cy="9" r="5" fill="none" stroke="#fff" stroke-width="2.5"/><g stroke="#fff" stroke-width="2.5"><path d="M9 1 V4 M9 14 V17 M1 9 H4 M14 9 H17 M3.3 3.3 L5.5 5.5 M12.5 12.5 L14.7 14.7 M3.3 14.7 L5.5 12.5 M12.5 5.5 L14.7 3.3"/></g></svg>
<div style="position:absolute;left:1894px;top:815px;width:26px;height:127px;background:#4d4d4d;box-shadow:inset 0 0 0 1px #3a3a3a;"></div>
<div style="position:absolute;left:1900.0px;top:913.0px;font:12.5px/1 'Liberation Sans',sans-serif;color:#e6e6e6;white-space:nowrap;transform-origin:0 0;transform:rotate(-90deg) scaleX(0.974);">Process Console</div>
<svg style="position:absolute;left:1898px;top:918px;" width="16" height="15" viewBox="0 0 16 15"><path d="M1 2 L15 7.5 L1 13 L5 7.5Z" fill="#f06030" stroke="#300" stroke-width=".8"/></svg>
<div style="position:absolute;left:1894px;top:944px;width:26px;height:102px;background:#4d4d4d;box-shadow:inset 0 0 0 1px #3a3a3a;"></div>
<div style="position:absolute;left:1900.0px;top:1021.0px;font:12.5px/1 'Liberation Sans',sans-serif;color:#e6e6e6;white-space:nowrap;transform-origin:0 0;transform:rotate(-90deg) scaleX(1.026);">File Explorer</div>
<svg style="position:absolute;left:1899px;top:1025px;" width="15" height="16" viewBox="0 0 15 16"><ellipse cx="7.5" cy="4" rx="6.5" ry="2.5" fill="#e8d4a8" stroke="#444" stroke-width=".8"/><path d="M1 4 V12.5 C1 15.5,14 15.5,14 12.5 V4" fill="#d8c090" stroke="#444" stroke-width=".8"/></svg>
<div style="position:absolute;left:1694px;top:119px;width:1px;height:927px;background:#c99a5a;"></div>
<svg style="position:absolute;left:1422px;top:120px;" width="167" height="25" viewBox="0 0 167 25"><path d="M0.5 0.5 H155 L166.5 11 V24.5 H0.5Z" fill="#b6b6b6" stroke="#8c8c8c"/></svg>
<svg style="position:absolute;left:1424px;top:122px;" width="22" height="22" viewBox="0 0 22 22"><path d="M11 1 L21 5.5 V16.5 L11 21 L1 16.5 V5.5Z" fill="#5ab0f5"/><path d="M11 1 L21 5.5 L11 10 L1 5.5Z" fill="#2d8ce8"/><path d="M11 10 L21 5.5 V16.5 L11 21Z" fill="#1a6fd0"/><rect x="13" y="0" width="9" height="22" fill="#888"/><text transform="translate(21 21) rotate(-90)" font-family="Liberation Sans" font-weight="bold" font-size="9" fill="#fff">XISF</text></svg>
<div style="position:absolute;left:1451.0px;top:125.5px;font:12.5px/1 'Liberation Sans',sans-serif;color:#151515;white-space:nowrap;transform:scaleX(1.020);transform-origin:0 0;">BarnardLumDrizzle_r</div>
<svg style="position:absolute;left:1580px;top:137px;" width="5" height="6" viewBox="0 0 5 6"><path d="M0.5 5 V0.5 L3.5 5 V0.5" fill="none" stroke="#111" stroke-width="1.1"/></svg>
<svg style="position:absolute;left:1701px;top:121px;" width="179" height="25" viewBox="0 0 179 25"><path d="M0.5 0.5 H167 L178.5 11 V24.5 H0.5Z" fill="#b6b6b6" stroke="#8c8c8c"/></svg>
<svg style="position:absolute;left:1703px;top:123px;" width="22" height="22" viewBox="0 0 22 22"><path d="M11 1 L21 5.5 V16.5 L11 21 L1 16.5 V5.5Z" fill="#5ab0f5"/><path d="M11 1 L21 5.5 L11 10 L1 5.5Z" fill="#2d8ce8"/><path d="M11 10 L21 5.5 V16.5 L11 21Z" fill="#1a6fd0"/><rect x="13" y="0" width="9" height="22" fill="#888"/><text transform="translate(21 21) rotate(-90)" font-family="Liberation Sans" font-weight="bold" font-size="9" fill="#fff">XISF</text></svg>
<div style="position:absolute;left:1730.0px;top:126.5px;font:12.5px/1 'Liberation Sans',sans-serif;color:#151515;white-space:nowrap;transform:scaleX(1.020);transform-origin:0 0;">Barnard150BlueDrizzle_r</div>
<svg style="position:absolute;left:1871px;top:138px;" width="5" height="6" viewBox="0 0 5 6"><path d="M0.5 5 V0.5 L3.5 5 V0.5" fill="none" stroke="#111" stroke-width="1.1"/></svg>
<svg style="position:absolute;left:1701px;top:152px;" width="178" height="24" viewBox="0 0 178 24"><path d="M0.5 0.5 H166 L177.5 11 V23.5 H0.5Z" fill="#b6b6b6" stroke="#8c8c8c"/></svg>
<svg style="position:absolute;left:1703px;top:154px;" width="22" height="22" viewBox="0 0 22 22"><path d="M11 1 L21 5.5 V16.5 L11 21 L1 16.5 V5.5Z" fill="#5ab0f5"/><path d="M11 1 L21 5.5 L11 10 L1 5.5Z" fill="#2d8ce8"/><path d="M11 10 L21 5.5 V16.5 L11 21Z" fill="#1a6fd0"/><rect x="13" y="0" width="9" height="22" fill="#888"/><text transform="translate(21 21) rotate(-90)" font-family="Liberation Sans" font-weight="bold" font-size="9" fill="#fff">XISF</text></svg>
<div style="position:absolute;left:1730.0px;top:157.5px;font:12.5px/1 'Liberation Sans',sans-serif;color:#151515;white-space:nowrap;transform:scaleX(1.020);transform-origin:0 0;">BarnardGreenDrizzle_r</div>
<svg style="position:absolute;left:1870px;top:168px;" width="5" height="6" viewBox="0 0 5 6"><path d="M0.5 5 V0.5 L3.5 5 V0.5" fill="none" stroke="#111" stroke-width="1.1"/></svg>
<svg style="position:absolute;left:1701px;top:182px;" width="167" height="24" viewBox="0 0 167 24"><path d="M0.5 0.5 H155 L166.5 11 V23.5 H0.5Z" fill="#b6b6b6" stroke="#8c8c8c"/></svg>
<svg style="position:absolute;left:1703px;top:184px;" width="22" height="22" viewBox="0 0 22 22"><path d="M11 1 L21 5.5 V16.5 L11 21 L1 16.5 V5.5Z" fill="#5ab0f5"/><path d="M11 1 L21 5.5 L11 10 L1 5.5Z" fill="#2d8ce8"/><path d="M11 10 L21 5.5 V16.5 L11 21Z" fill="#1a6fd0"/><rect x="13" y="0" width="9" height="22" fill="#888"/><text transform="translate(21 21) rotate(-90)" font-family="Liberation Sans" font-weight="bold" font-size="9" fill="#fff">XISF</text></svg>
<div style="position:absolute;left:1730.0px;top:187.5px;font:12.5px/1 'Liberation Sans',sans-serif;color:#151515;white-space:nowrap;transform:scaleX(1.020);transform-origin:0 0;">BarnardRedDrizzle_r</div>
<svg style="position:absolute;left:1859px;top:198px;" width="5" height="6" viewBox="0 0 5 6"><path d="M0.5 5 V0.5 L3.5 5 V0.5" fill="none" stroke="#111" stroke-width="1.1"/></svg>
<svg style="position:absolute;left:1216px;top:152px;" width="202" height="24" viewBox="0 0 202 24"><path d="M0.5 0.5 H190 L201.5 11 V23.5 H0.5Z" fill="#b6b6b6" stroke="#8c8c8c"/></svg>
<svg style="position:absolute;left:1218px;top:154px;" width="22" height="22" viewBox="0 0 22 22"><path d="M11 1 L21 5.5 V16.5 L11 21 L1 16.5 V5.5Z" fill="#5ab0f5"/><path d="M11 1 L21 5.5 L11 10 L1 5.5Z" fill="#2d8ce8"/><path d="M11 10 L21 5.5 V16.5 L11 21Z" fill="#1a6fd0"/></svg>
<div style="position:absolute;left:1245.0px;top:157.5px;font:12.5px/1 'Liberation Sans',sans-serif;color:#151515;white-space:nowrap;transform:scaleX(1.020);transform-origin:0 0;">BarnardLumDrizzle_r_clone</div>
<svg style="position:absolute;left:1409px;top:168px;" width="5" height="6" viewBox="0 0 5 6"><path d="M0.5 5 V0.5 L3.5 5 V0.5" fill="none" stroke="#111" stroke-width="1.1"/></svg>
<div style="position:absolute;left:1423px;top:149px;width:100px;height:24px;background:#b6b6b6;box-shadow:inset 0 0 0 1px #8c8c8c;"></div>
<svg style="position:absolute;left:1425px;top:151px;" width="22" height="22" viewBox="0 0 22 22"><rect x=".5" y=".5" width="21" height="21" fill="#e8e060" stroke="#88f"/><path d="M4 4 C8 8,6 14,14 18 L10 12 L16 10Z" fill="#555"/></svg>
<div style="position:absolute;left:1452.0px;top:154.5px;font:12.5px/1 'Liberation Sans',sans-serif;color:#151515;white-space:nowrap;transform:scaleX(1.020);transform-origin:0 0;">Process50</div>
<svg style="position:absolute;left:1514px;top:152px;" width="5" height="6" viewBox="0 0 5 6"><path d="M0.5 5 V0.5 L3.5 5 V0.5" fill="none" stroke="#111" stroke-width="1.1"/></svg>
<svg style="position:absolute;left:1514px;top:165px;" width="5" height="6" viewBox="0 0 5 6"><path d="M0.5 0.5 V5 H2 C4.5 5,4.5 0.5,2 0.5Z" fill="none" stroke="#111" stroke-width="1.1"/></svg>
<svg style="position:absolute;left:1349px;top:182px;" width="68" height="24" viewBox="0 0 68 24"><path d="M0.5 0.5 H56 L67.5 11 V23.5 H0.5Z" fill="#b6b6b6" stroke="#8c8c8c"/></svg>
<svg style="position:absolute;left:1351px;top:184px;" width="22" height="22" viewBox="0 0 22 22"><path d="M11 1 L21 5.5 V16.5 L11 21 L1 16.5 V5.5Z" fill="#5ab0f5"/><path d="M11 1 L21 5.5 L11 10 L1 5.5Z" fill="#2d8ce8"/><path d="M11 10 L21 5.5 V16.5 L11 21Z" fill="#1a6fd0"/></svg>
<div style="position:absolute;left:1378.0px;top:187.5px;font:12.5px/1 'Liberation Sans',sans-serif;color:#151515;white-space:nowrap;transform:scaleX(1.020);transform-origin:0 0;">PSF</div>
<svg style="position:absolute;left:1408px;top:198px;" width="5" height="6" viewBox="0 0 5 6"><path d="M0.5 5 V0.5 L3.5 5 V0.5" fill="none" stroke="#111" stroke-width="1.1"/></svg>
<div style="position:absolute;left:1423px;top:180px;width:100px;height:24px;background:#b6b6b6;box-shadow:inset 0 0 0 1px #8c8c8c;"></div>
<svg style="position:absolute;left:1425px;top:182px;" width="22" height="22" viewBox="0 0 22 22"><rect width="22" height="22" fill="#aab"/><path d="M11 1 L21 21 H1Z" fill="#88f"/></svg>
<div style="position:absolute;left:1452.0px;top:185.5px;font:12.5px/1 'Liberation Sans',sans-serif;color:#151515;white-space:nowrap;transform:scaleX(1.020);transform-origin:0 0;">Process48</div>
<svg style="position:absolute;left:1514px;top:183px;" width="5" height="6" viewBox="0 0 5 6"><path d="M0.5 5 V0.5 L3.5 5 V0.5" fill="none" stroke="#111" stroke-width="1.1"/></svg>
<svg style="position:absolute;left:1514px;top:196px;" width="5" height="6" viewBox="0 0 5 6"><path d="M0.5 0.5 V5 H2 C4.5 5,4.5 0.5,2 0.5Z" fill="none" stroke="#111" stroke-width="1.1"/></svg>
<svg style="position:absolute;left:1329px;top:210px;" width="113" height="24" viewBox="0 0 113 24"><path d="M0.5 0.5 H101 L112.5 11 V23.5 H0.5Z" fill="#b6b6b6" stroke="#8c8c8c"/></svg>
<svg style="position:absolute;left:1331px;top:212px;" width="22" height="22" viewBox="0 0 22 22"><path d="M11 1 L21 5.5 V16.5 L11 21 L1 16.5 V5.5Z" fill="#5ab0f5"/><path d="M11 1 L21 5.5 L11 10 L1 5.5Z" fill="#2d8ce8"/><path d="M11 10 L21 5.5 V16.5 L11 21Z" fill="#1a6fd0"/></svg>
<div style="position:absolute;left:1358.0px;top:215.5px;font:12.5px/1 'Liberation Sans',sans-serif;color:#151515;white-space:nowrap;transform:scaleX(1.020);transform-origin:0 0;">star_mask2</div>
<svg style="position:absolute;left:1433px;top:226px;" width="5" height="6" viewBox="0 0 5 6"><path d="M0.5 5 V0.5 L3.5 5 V0.5" fill="none" stroke="#111" stroke-width="1.1"/></svg>
<div style="position:absolute;left:1448px;top:211px;width:100px;height:25px;background:#b6b6b6;box-shadow:inset 0 0 0 1px #8c8c8c;"></div>
<svg style="position:absolute;left:1450px;top:213px;" width="22" height="22" viewBox="0 0 22 22"><rect x=".5" y=".5" width="21" height="21" fill="#a060c0" stroke="#6c6"/><circle cx="6" cy="6" r="3" fill="#8cf"/><circle cx="16" cy="6" r="3" fill="#8cf"/><circle cx="6" cy="16" r="3" fill="#8cf"/><circle cx="16" cy="16" r="3" fill="#8cf"/></svg>
<div style="position:absolute;left:1477.0px;top:216.5px;font:12.5px/1 'Liberation Sans',sans-serif;color:#151515;white-space:nowrap;transform:scaleX(1.020);transform-origin:0 0;">Process52</div>
<svg style="position:absolute;left:1539px;top:214px;" width="5" height="6" viewBox="0 0 5 6"><path d="M0.5 5 V0.5 L3.5 5 V0.5" fill="none" stroke="#111" stroke-width="1.1"/></svg>
<svg style="position:absolute;left:1539px;top:228px;" width="5" height="6" viewBox="0 0 5 6"><path d="M0.5 0.5 V5 H2 C4.5 5,4.5 0.5,2 0.5Z" fill="none" stroke="#111" stroke-width="1.1"/></svg>
<svg style="position:absolute;left:1599px;top:211px;" width="97" height="25" viewBox="0 0 97 25"><path d="M0.5 0.5 H85 L96.5 11 V24.5 H0.5Z" fill="#b6b6b6" stroke="#8c8c8c"/></svg>
<svg style="position:absolute;left:1601px;top:213px;" width="22" height="22" viewBox="0 0 22 22"><path d="M11 1 L21 5.5 V16.5 L11 21 L1 16.5 V5.5Z" fill="#5ab0f5"/><path d="M11 1 L21 5.5 L11 10 L1 5.5Z" fill="#2d8ce8"/><path d="M11 10 L21 5.5 V16.5 L11 21Z" fill="#1a6fd0"/></svg>
<div style="position:absolute;left:1628.0px;top:216.5px;font:12.5px/1 'Liberation Sans',sans-serif;color:#151515;white-space:nowrap;transform:scaleX(1.020);transform-origin:0 0;">Image05</div>
<svg style="position:absolute;left:1687px;top:228px;" width="5" height="6" viewBox="0 0 5 6"><path d="M0.5 5 V0.5 L3.5 5 V0.5" fill="none" stroke="#111" stroke-width="1.1"/></svg>
<div style="position:absolute;left:1701px;top:211px;width:102px;height:25px;background:#b6b6b6;box-shadow:inset 0 0 0 1px #8c8c8c;"></div>
<svg style="position:absolute;left:1703px;top:213px;" width="22" height="22" viewBox="0 0 22 22"><rect x=".5" y=".5" width="21" height="21" fill="#eee" stroke="#666"/><path d="M11 11 L1 1 H21Z" fill="#9a9af0"/><path d="M11 11 L21 1 V21Z" fill="#60e060"/><path d="M11 11 L21 21 H1Z" fill="#f07070"/><path d="M11 11 L1 21 V1Z" fill="#ccc"/></svg>
<div style="position:absolute;left:1730.0px;top:216.5px;font:12.5px/1 'Liberation Sans',sans-serif;color:#151515;white-space:nowrap;transform:scaleX(1.020);transform-origin:0 0;">Process01</div>
<svg style="position:absolute;left:1794px;top:214px;" width="5" height="6" viewBox="0 0 5 6"><path d="M0.5 5 V0.5 L3.5 5 V0.5" fill="none" stroke="#111" stroke-width="1.1"/></svg>
<svg style="position:absolute;left:1794px;top:228px;" width="5" height="6" viewBox="0 0 5 6"><path d="M0.5 0.5 V5 H2 C4.5 5,4.5 0.5,2 0.5Z" fill="none" stroke="#111" stroke-width="1.1"/></svg>
<div style="position:absolute;left:1420px;top:240px;width:99px;height:25px;background:#b6b6b6;box-shadow:inset 0 0 0 1px #8c8c8c;"></div>
<svg style="position:absolute;left:1422px;top:242px;" width="22" height="22" viewBox="0 0 22 22"><rect width="22" height="22" fill="#6bf"/><path d="M11 4 C13 12,16 18,21 20 H1 C6 18,9 12,11 4Z" fill="#f90"/></svg>
<div style="position:absolute;left:1449.0px;top:245.5px;font:12.5px/1 'Liberation Sans',sans-serif;color:#151515;white-space:nowrap;transform:scaleX(1.020);transform-origin:0 0;">Process49</div>
<svg style="position:absolute;left:1510px;top:243px;" width="5" height="6" viewBox="0 0 5 6"><path d="M0.5 5 V0.5 L3.5 5 V0.5" fill="none" stroke="#111" stroke-width="1.1"/></svg>
<svg style="position:absolute;left:1510px;top:257px;" width="5" height="6" viewBox="0 0 5 6"><path d="M0.5 0.5 V5 H2 C4.5 5,4.5 0.5,2 0.5Z" fill="none" stroke="#111" stroke-width="1.1"/></svg>
<div style="position:absolute;left:1420px;top:272px;width:99px;height:25px;background:#b6b6b6;box-shadow:inset 0 0 0 1px #8c8c8c;"></div>
<svg style="position:absolute;left:1422px;top:274px;" width="22" height="22" viewBox="0 0 22 22"><rect x=".5" y=".5" width="21" height="21" fill="#ccd" stroke="#88f"/><path d="M2 20 C4 8,10 3,20 2" stroke="#f0a050" stroke-width="1.5" fill="none"/></svg>
<div style="position:absolute;left:1449.0px;top:277.5px;font:12.5px/1 'Liberation Sans',sans-serif;color:#151515;white-space:nowrap;transform:scaleX(1.020);transform-origin:0 0;">Process51</div>
<svg style="position:absolute;left:1510px;top:275px;" width="5" height="6" viewBox="0 0 5 6"><path d="M0.5 5 V0.5 L3.5 5 V0.5" fill="none" stroke="#111" stroke-width="1.1"/></svg>
<svg style="position:absolute;left:1510px;top:289px;" width="5" height="6" viewBox="0 0 5 6"><path d="M0.5 0.5 V5 H2 C4.5 5,4.5 0.5,2 0.5Z" fill="none" stroke="#111" stroke-width="1.1"/></svg>
<div style="position:absolute;left:1701px;top:241px;width:102px;height:24px;background:#b6b6b6;box-shadow:inset 0 0 0 1px #8c8c8c;"></div>
<svg style="position:absolute;left:1703px;top:243px;" width="22" height="22" viewBox="0 0 22 22"><rect x=".5" y=".5" width="21" height="21" fill="#e8e060" stroke="#88f"/><path d="M4 4 C8 8,6 14,14 18 L10 12 L16 10Z" fill="#555"/></svg>
<div style="position:absolute;left:1730.0px;top:246.5px;font:12.5px/1 'Liberation Sans',sans-serif;color:#151515;white-space:nowrap;transform:scaleX(1.020);transform-origin:0 0;">Process05</div>
<svg style="position:absolute;left:1794px;top:244px;" width="5" height="6" viewBox="0 0 5 6"><path d="M0.5 5 V0.5 L3.5 5 V0.5" fill="none" stroke="#111" stroke-width="1.1"/></svg>
<svg style="position:absolute;left:1794px;top:257px;" width="5" height="6" viewBox="0 0 5 6"><path d="M0.5 0.5 V5 H2 C4.5 5,4.5 0.5,2 0.5Z" fill="none" stroke="#111" stroke-width="1.1"/></svg>
<div style="position:absolute;left:1701px;top:270px;width:102px;height:24px;background:#b6b6b6;box-shadow:inset 0 0 0 1px #8c8c8c;"></div>
<svg style="position:absolute;left:1703px;top:272px;" width="22" height="22" viewBox="0 0 22 22"><rect x=".5" y=".5" width="21" height="21" fill="#eee" stroke="#666"/><path d="M5 1 L17 1 L11 8Z M5 21 L17 21 L11 14Z" fill="#888"/><path d="M1 10 H21" stroke="#6c6"/><path d="M1 12 H21" stroke="#66f"/><path d="M1 14 H21" stroke="#f66"/></svg>
<div style="position:absolute;left:1730.0px;top:275.5px;font:12.5px/1 'Liberation Sans',sans-serif;color:#151515;white-space:nowrap;transform:scaleX(1.020);transform-origin:0 0;">Process02</div>
<svg style="position:absolute;left:1794px;top:273px;" width="5" height="6" viewBox="0 0 5 6"><path d="M0.5 5 V0.5 L3.5 5 V0.5" fill="none" stroke="#111" stroke-width="1.1"/></svg>
<svg style="position:absolute;left:1794px;top:286px;" width="5" height="6" viewBox="0 0 5 6"><path d="M0.5 0.5 V5 H2 C4.5 5,4.5 0.5,2 0.5Z" fill="none" stroke="#111" stroke-width="1.1"/></svg>
<div style="position:absolute;left:1701px;top:299px;width:102px;height:24px;background:#b6b6b6;box-shadow:inset 0 0 0 1px #8c8c8c;"></div>
<svg style="position:absolute;left:1703px;top:301px;" width="22" height="22" viewBox="0 0 22 22"><rect x=".5" y=".5" width="21" height="21" fill="#eee" stroke="#666"/><circle cx="11" cy="6" r="4" fill="#f06060"/><circle cx="6" cy="15" r="4" fill="#50d050"/><circle cx="16" cy="15" r="4" fill="#6060f0"/></svg>
<div style="position:absolute;left:1730.0px;top:304.5px;font:12.5px/1 'Liberation Sans',sans-serif;color:#151515;white-space:nowrap;transform:scaleX(1.020);transform-origin:0 0;">Process10</div>
<svg style="position:absolute;left:1794px;top:302px;" width="5" height="6" viewBox="0 0 5 6"><path d="M0.5 5 V0.5 L3.5 5 V0.5" fill="none" stroke="#111" stroke-width="1.1"/></svg>
<svg style="position:absolute;left:1794px;top:315px;" width="5" height="6" viewBox="0 0 5 6"><path d="M0.5 0.5 V5 H2 C4.5 5,4.5 0.5,2 0.5Z" fill="none" stroke="#111" stroke-width="1.1"/></svg>
<div style="position:absolute;left:1701px;top:328px;width:101px;height:24px;background:#b6b6b6;box-shadow:inset 0 0 0 1px #8c8c8c;"></div>
<svg style="position:absolute;left:1703px;top:330px;" width="22" height="22" viewBox="0 0 22 22"><rect x=".5" y=".5" width="21" height="21" fill="#ccd" stroke="#88f"/><path d="M2 20 C4 8,10 3,20 2" stroke="#f0a050" stroke-width="1.5" fill="none"/></svg>
<div style="position:absolute;left:1730.0px;top:333.5px;font:12.5px/1 'Liberation Sans',sans-serif;color:#151515;white-space:nowrap;transform:scaleX(1.020);transform-origin:0 0;">Process09</div>
<svg style="position:absolute;left:1793px;top:331px;" width="5" height="6" viewBox="0 0 5 6"><path d="M0.5 5 V0.5 L3.5 5 V0.5" fill="none" stroke="#111" stroke-width="1.1"/></svg>
<svg style="position:absolute;left:1793px;top:344px;" width="5" height="6" viewBox="0 0 5 6"><path d="M0.5 0.5 V5 H2 C4.5 5,4.5 0.5,2 0.5Z" fill="none" stroke="#111" stroke-width="1.1"/></svg>
<div style="position:absolute;left:1632px;top:358px;width:101px;height:23px;background:#b6b6b6;box-shadow:inset 0 0 0 1px #8c8c8c;"></div>
<svg style="position:absolute;left:1634px;top:360px;" width="22" height="22" viewBox="0 0 22 22"><rect x="1" y="1" width="12" height="12" fill="#f9c" stroke="#88f"/><rect x="5" y="5" width="12" height="12" fill="#9f9" stroke="#88f"/><rect x="9" y="9" width="12" height="12" fill="#aaf" stroke="#88f"/></svg>
<div style="position:absolute;left:1661.0px;top:363.5px;font:12.5px/1 'Liberation Sans',sans-serif;color:#151515;white-space:nowrap;transform:scaleX(1.020);transform-origin:0 0;">Process47</div>
<svg style="position:absolute;left:1724px;top:361px;" width="5" height="6" viewBox="0 0 5 6"><path d="M0.5 5 V0.5 L3.5 5 V0.5" fill="none" stroke="#111" stroke-width="1.1"/></svg>
<svg style="position:absolute;left:1724px;top:373px;" width="5" height="6" viewBox="0 0 5 6"><path d="M0.5 0.5 V5 H2 C4.5 5,4.5 0.5,2 0.5Z" fill="none" stroke="#111" stroke-width="1.1"/></svg>
<div style="position:absolute;left:1632px;top:389px;width:101px;height:24px;background:#b6b6b6;box-shadow:inset 0 0 0 1px #8c8c8c;"></div>
<svg style="position:absolute;left:1634px;top:391px;" width="22" height="22" viewBox="0 0 22 22"><rect x=".5" y=".5" width="21" height="21" fill="#ddd" stroke="#666"/><path d="M1 12 C8 10,12 6,14 1 H21 V21 H1Z" fill="#9aa0e0"/></svg>
<div style="position:absolute;left:1661.0px;top:394.5px;font:12.5px/1 'Liberation Sans',sans-serif;color:#151515;white-space:nowrap;transform:scaleX(1.020);transform-origin:0 0;">Process53</div>
<svg style="position:absolute;left:1724px;top:392px;" width="5" height="6" viewBox="0 0 5 6"><path d="M0.5 5 V0.5 L3.5 5 V0.5" fill="none" stroke="#111" stroke-width="1.1"/></svg>
<svg style="position:absolute;left:1724px;top:405px;" width="5" height="6" viewBox="0 0 5 6"><path d="M0.5 0.5 V5 H2 C4.5 5,4.5 0.5,2 0.5Z" fill="none" stroke="#111" stroke-width="1.1"/></svg>
<svg style="position:absolute;left:1882px;top:122px;" width="10" height="25" viewBox="0 0 10 25"><path d="M0 0 H2 L10 8 V25 H0Z" fill="#b6b6b6"/></svg>
<div style="position:absolute;left:1884.0px;top:136.6px;font:bold 7px/1 'Liberation Sans',sans-serif;color:#000;white-space:nowrap;transform:scaleX(1.187);transform-origin:0 0;">N</div>
<svg style="position:absolute;left:1535px;top:416px;" width="120" height="24" viewBox="0 0 120 24"><path d="M0.5 0.5 H108 L119.5 11 V23.5 H0.5Z" fill="#b6b6b6" stroke="#8c8c8c"/></svg>
<svg style="position:absolute;left:1537px;top:418px;" width="22" height="22" viewBox="0 0 22 22"><path d="M11 1 L21 5.5 V16.5 L11 21 L1 16.5 V5.5Z" fill="#5ab0f5"/><path d="M11 1 L21 5.5 L11 10 L1 5.5Z" fill="#2d8ce8"/><path d="M11 10 L21 5.5 V16.5 L11 21Z" fill="#1a6fd0"/></svg>
<div style="position:absolute;left:1564.0px;top:421.5px;font:12.5px/1 'Liberation Sans',sans-serif;color:#151515;white-space:nowrap;transform:scaleX(0.989);transform-origin:0 0;">range_mask</div>
<svg style="position:absolute;left:1646px;top:432px;" width="5" height="6" viewBox="0 0 5 6"><path d="M0.5 5 V0.5 L3.5 5 V0.5" fill="none" stroke="#111" stroke-width="1.1"/></svg>
<div style="position:absolute;left:1657px;top:416px;width:102px;height:25px;background:#b6b6b6;box-shadow:inset 0 0 0 1px #8c8c8c;"></div>
<svg style="position:absolute;left:1659px;top:418px;" width="22" height="22" viewBox="0 0 22 22"><rect width="22" height="22" fill="#6a2a9a"/><rect x="2" width="4" height="22" fill="#3a9a3a"/><rect x="9" width="4" height="22" fill="#3a9a3a"/><rect x="16" width="4" height="22" fill="#3a9a3a"/><path d="M1 1 L6 4 L1 7Z" fill="#6f0"/><path d="M21 14 L16 17 L21 20Z" fill="#80f"/></svg>
<div style="position:absolute;left:1686.0px;top:421.5px;font:12.5px/1 'Liberation Sans',sans-serif;color:#151515;white-space:nowrap;transform:scaleX(0.965);transform-origin:0 0;">Process33</div>
<svg style="position:absolute;left:1750px;top:419px;" width="5" height="6" viewBox="0 0 5 6"><path d="M0.5 5 V0.5 L3.5 5 V0.5" fill="none" stroke="#111" stroke-width="1.1"/></svg>
<svg style="position:absolute;left:1750px;top:433px;" width="5" height="6" viewBox="0 0 5 6"><path d="M0.5 0.5 V5 H2 C4.5 5,4.5 0.5,2 0.5Z" fill="none" stroke="#111" stroke-width="1.1"/></svg>
<svg style="position:absolute;left:1528px;top:445px;" width="126" height="26" viewBox="0 0 126 26"><path d="M0.5 0.5 H114 L125.5 11 V25.5 H0.5Z" fill="#b6b6b6" stroke="#8c8c8c"/></svg>
<svg style="position:absolute;left:1530px;top:447px;" width="22" height="22" viewBox="0 0 22 22"><path d="M11 1 L21 5.5 V16.5 L11 21 L1 16.5 V5.5Z" fill="#5ab0f5"/><path d="M11 1 L21 5.5 L11 10 L1 5.5Z" fill="#2d8ce8"/><path d="M11 10 L21 5.5 V16.5 L11 21Z" fill="#1a6fd0"/></svg>
<div style="position:absolute;left:1557.0px;top:450.5px;font:12.5px/1 'Liberation Sans',sans-serif;color:#151515;white-space:nowrap;transform:scaleX(0.938);transform-origin:0 0;">range_mask1</div>
<svg style="position:absolute;left:1645px;top:463px;" width="5" height="6" viewBox="0 0 5 6"><path d="M0.5 5 V0.5 L3.5 5 V0.5" fill="none" stroke="#111" stroke-width="1.1"/></svg>
<div style="position:absolute;left:1658px;top:446px;width:108px;height:26px;background:#b6b6b6;box-shadow:inset 0 0 0 1px #8c8c8c;"></div>
<svg style="position:absolute;left:1660px;top:448px;" width="22" height="22" viewBox="0 0 22 22"><rect width="22" height="22" fill="#6a2a9a"/><rect x="2" width="4" height="22" fill="#3a9a3a"/><rect x="9" width="4" height="22" fill="#3a9a3a"/><rect x="16" width="4" height="22" fill="#3a9a3a"/><path d="M1 1 L6 4 L1 7Z" fill="#6f0"/><path d="M21 14 L16 17 L21 20Z" fill="#80f"/></svg>
<div style="position:absolute;left:1687.0px;top:451.5px;font:12.5px/1 'Liberation Sans',sans-serif;color:#151515;white-space:nowrap;transform:scaleX(0.970);transform-origin:0 0;">Process401</div>
<svg style="position:absolute;left:1757px;top:449px;" width="5" height="6" viewBox="0 0 5 6"><path d="M0.5 5 V0.5 L3.5 5 V0.5" fill="none" stroke="#111" stroke-width="1.1"/></svg>
<svg style="position:absolute;left:1757px;top:464px;" width="5" height="6" viewBox="0 0 5 6"><path d="M0.5 0.5 V5 H2 C4.5 5,4.5 0.5,2 0.5Z" fill="none" stroke="#111" stroke-width="1.1"/></svg>
<div style="position:absolute;left:1625px;top:473px;width:102px;height:25px;background:#b6b6b6;box-shadow:inset 0 0 0 1px #8c8c8c;"></div>
<svg style="position:absolute;left:1627px;top:475px;" width="22" height="22" viewBox="0 0 22 22"><rect x="0.5" y="0.5" width="21" height="21" rx="2" fill="#f5a800" stroke="#000" stroke-width="2"/><path d="M2 15 L8 12 L12 16 L20 9 V20 H2Z" fill="#5a8af0"/><path d="M14 2 L20 8" stroke="#4a80f0" stroke-width="3"/><rect x="5" y="5" width="7" height="7" transform="rotate(45 8.5 8.5)" fill="#ffe030" stroke="#222" stroke-width=".8"/><path d="M10 10 L16 16" stroke="#ffe030" stroke-width="2.5"/></svg>
<div style="position:absolute;left:1654.0px;top:478.5px;font:12.5px/1 'Liberation Sans',sans-serif;color:#151515;white-space:nowrap;transform:scaleX(0.965);transform-origin:0 0;">Process35</div>
<svg style="position:absolute;left:1718px;top:476px;" width="5" height="6" viewBox="0 0 5 6"><path d="M0.5 5 V0.5 L3.5 5 V0.5" fill="none" stroke="#111" stroke-width="1.1"/></svg>
<svg style="position:absolute;left:1718px;top:490px;" width="5" height="6" viewBox="0 0 5 6"><path d="M0.5 0.5 V5 H2 C4.5 5,4.5 0.5,2 0.5Z" fill="none" stroke="#111" stroke-width="1.1"/></svg>
<div style="position:absolute;left:0;top:0;width:1920px;height:1080px;opacity:.8"><div style="position:absolute;left:1213px;top:74px;width:669px;height:341px;background:#6b6b6b;box-shadow:inset 0 0 0 1px #444;"></div>
<div style="position:absolute;left:1216px;top:100px;width:663px;height:312px;background:#e4e4e4;"></div>
<div style="position:absolute;left:1216px;top:390px;width:663px;height:22px;background:#d2ccc4;"></div>
<svg style="position:absolute;left:1225px;top:396px;" width="12" height="12" viewBox="0 0 12 12"><path d="M0 0 L11 11 H0Z" fill="#0b55b2"/></svg>
<div style="position:absolute;left:1250px;top:396px;width:11px;height:11px;background:#0b55b2;"></div>
<svg style="position:absolute;left:1809px;top:395px;" width="13" height="13" viewBox="0 0 13 13"><rect x="1" y="1" width="10" height="10" fill="none" stroke="#0b55b2" stroke-width="2"/></svg>
<svg style="position:absolute;left:1834px;top:395px;" width="13" height="13" viewBox="0 0 13 13"><path d="M1 1 H7 L11 5 V11 H1Z" fill="none" stroke="#0b55b2" stroke-width="2"/></svg>
<svg style="position:absolute;left:1858px;top:394px;" width="15" height="15" viewBox="0 0 15 15"><path d="M1 1 L6 6 M14 1 L9 6 M1 14 L6 9 M14 14 L9 9" stroke="#0b55b2" stroke-width="2"/><path d="M3 6 H6 V3 M12 6 H9 V3 M3 9 H6 V12 M12 9 H9 V12" stroke="#0b55b2" stroke-width="2" fill="none"/></svg>
<div style="position:absolute;left:1500.5px;top:78.9px;font:bold 13px/1 'Liberation Sans',sans-serif;color:#dadada;white-space:nowrap;transform:scaleX(1.089);transform-origin:0 0;">TGVInpaint</div>
<svg style="position:absolute;left:1843px;top:84px;" width="11" height="9" viewBox="0 0 11 9"><rect x="0" y="0" width="11" height="2" fill="#eee"/><path d="M0 8 L5.5 3 L11 8Z" fill="#eee"/></svg>
<svg style="position:absolute;left:1864px;top:83px;" width="11" height="11" viewBox="0 0 11 11"><path d="M1 1 L10 10 M10 1 L1 10" stroke="#eee" stroke-width="2"/></svg>
<div style="position:absolute;left:1250.5px;top:111.5px;font:12.5px/1 'Liberation Sans',sans-serif;color:#111;white-space:nowrap;transform:scaleX(1.015);transform-origin:0 0;">Support image:</div>
<div style="position:absolute;left:1341px;top:109px;width:512px;height:19px;background:#fbfbfb;box-shadow:inset 0 0 0 1px #6a9ee8,inset 0 0 0 2px #bcd4f4;"></div>
<div style="position:absolute;left:1348.0px;top:111.5px;font:12.5px/1 'Liberation Sans',sans-serif;color:#111;white-space:nowrap;transform:scaleX(0.875);transform-origin:0 0;">SUPPORT_IMAGE</div>
<div style="position:absolute;left:1443px;top:112px;width:1px;height:14px;background:#111;"></div>
<svg style="position:absolute;left:1858px;top:111px;" width="12" height="11" viewBox="0 0 12 11"><path d="M0 2 H4 L5 3 H11 V11 H0Z" fill="#444"/><rect x="0" y="4" width="11" height="7" fill="#333"/></svg>
<svg style="position:absolute;left:1341px;top:134px;" width="13" height="13" viewBox="0 0 13 13"><rect x=".5" y=".5" width="12" height="12" fill="#eee" stroke="#555"/><path d="M2.5 6.5 L5.5 9.5 L10.5 3" stroke="#111" stroke-width="2" fill="none"/></svg>
<div style="position:absolute;left:1360.0px;top:134.5px;font:12.5px/1 'Liberation Sans',sans-serif;color:#111;white-space:nowrap;transform:scaleX(0.993);transform-origin:0 0;">Precondition</div>
<svg style="position:absolute;left:1341px;top:154px;" width="13" height="13" viewBox="0 0 13 13"><circle cx="6.5" cy="6.5" r="6" fill="#eee" stroke="#555"/><circle cx="6.5" cy="6.5" r="2.5" fill="#111"/></svg>
<div style="position:absolute;left:1360.0px;top:154.5px;font:12.5px/1 'Liberation Sans',sans-serif;color:#111;white-space:nowrap;transform:scaleX(0.978);transform-origin:0 0;">RGB/K mode</div>
<svg style="position:absolute;left:1440px;top:154px;" width="13" height="13" viewBox="0 0 13 13"><circle cx="6.5" cy="6.5" r="6" fill="#f4f4f4" stroke="#555"/></svg>
<div style="position:absolute;left:1459.0px;top:154.5px;font:12.5px/1 'Liberation Sans',sans-serif;color:#111;white-space:nowrap;transform:scaleX(1.005);transform-origin:0 0;">CIE L*a*b* mode</div>
<div style="position:absolute;left:1225px;top:201px;width:647px;height:181px;background:none;box-shadow:inset 0 0 0 1px #6a6a6a;"></div>
<div style="position:absolute;left:1225px;top:176px;width:65px;height:26px;background:linear-gradient(#f2f2f2,#d0d0d0);box-shadow:inset 0 0 0 1px #6a6a6a;"></div>
<div style="position:absolute;left:1238.0px;top:182.5px;font:12.5px/1 'Liberation Sans',sans-serif;color:#111;white-space:nowrap;transform:scaleX(0.977);transform-origin:0 0;">RGB/K</div>
<div style="position:absolute;left:1289px;top:179px;width:93px;height:23px;background:#dcdcdc;box-shadow:inset 0 0 0 1px #6a6a6a;"></div>
<div style="position:absolute;left:1298.0px;top:182.5px;font:12.5px/1 'Liberation Sans',sans-serif;color:#777;white-space:nowrap;transform:scaleX(1.022);transform-origin:0 0;">Chrominance</div>
<svg style="position:absolute;left:1341px;top:213px;" width="13" height="13" viewBox="0 0 13 13"><rect x=".5" y=".5" width="12" height="12" fill="#eee" stroke="#8a8a8a"/><path d="M2.5 6.5 L5.5 9.5 L10.5 3" stroke="#808080" stroke-width="2" fill="none"/></svg>
<div style="position:absolute;left:1360.0px;top:213.5px;font:12.5px/1 'Liberation Sans',sans-serif;color:#777;white-space:nowrap;transform:scaleX(1.119);transform-origin:0 0;">Apply</div>
<div style="position:absolute;left:1245.0px;top:237.0px;font:12.5px/1 'Liberation Sans',sans-serif;color:#111;white-space:nowrap;transform:scaleX(1.008);transform-origin:0 0;">Noise reduction:</div>
<div style="position:absolute;left:1341px;top:232px;width:112px;height:19px;background:#e9e9e9;box-shadow:inset 0 0 0 1px #8a8a8a;"></div>
<div style="position:absolute;left:1348.0px;top:236.0px;font:12.5px/1 'Liberation Sans',sans-serif;color:#111;white-space:nowrap;transform:scaleX(1.001);transform-origin:0 0;">0.500000000000</div>
<div style="position:absolute;left:1457px;top:232px;width:46px;height:19px;background:#e9e9e9;box-shadow:inset 0 0 0 1px #8a8a8a;"></div>
<div style="position:absolute;left:1464.0px;top:236.0px;font:12.5px/1 'Liberation Sans',sans-serif;color:#111;white-space:nowrap;transform:scaleX(1.001);transform-origin:0 0;">5.00</div>
<div style="position:absolute;left:1507px;top:240px;width:294px;height:4px;background:#e2e2e2;box-shadow:inset 0 0 0 1px #777;"></div>
<div style="position:absolute;left:1507px;top:240px;width:133px;height:4px;background:#8a8a8a;"></div>
<svg style="position:absolute;left:1634px;top:236px;" width="12" height="12" viewBox="0 0 12 12"><defs><radialGradient id="kn" cx=".4" cy=".35"><stop offset="0" stop-color="#fff"/><stop offset="1" stop-color="#aaa"/></radialGradient></defs><circle cx="6" cy="6" r="5.5" fill="url(#kn)" stroke="#777"/></svg>
<div style="position:absolute;left:1806px;top:232px;width:55px;height:19px;background:#e9e9e9;box-shadow:inset 0 0 0 1px #8a8a8a;"></div>
<div style="position:absolute;left:1813.0px;top:236.0px;font:12.5px/1 'Liberation Sans',sans-serif;color:#111;white-space:nowrap;transform:scaleX(1.001);transform-origin:0 0;">-1</div>
<div style="position:absolute;left:1846px;top:233px;width:14px;height:17px;background:linear-gradient(90deg,#cfcfcf,#e0e0e0);box-shadow:inset 1px 0 0 #aaa;"></div>
<svg style="position:absolute;left:1849px;top:235px;" width="9" height="14" viewBox="0 0 9 14"><path d="M0.5 5.5 L4.5 1 L8.5 5.5Z M0.5 8.5 L4.5 13 L8.5 8.5Z" fill="#111"/></svg>
<div style="position:absolute;left:1253.0px;top:262.0px;font:12.5px/1 'Liberation Sans',sans-serif;color:#111;white-space:nowrap;transform:scaleX(1.006);transform-origin:0 0;">Edge diffusion:</div>
<div style="position:absolute;left:1341px;top:257px;width:112px;height:19px;background:#e9e9e9;box-shadow:inset 0 0 0 1px #8a8a8a;"></div>
<div style="position:absolute;left:1348.0px;top:261.0px;font:12.5px/1 'Liberation Sans',sans-serif;color:#111;white-space:nowrap;transform:scaleX(1.001);transform-origin:0 0;">0.050000000000</div>
<div style="position:absolute;left:1457px;top:257px;width:46px;height:19px;background:#e9e9e9;box-shadow:inset 0 0 0 1px #8a8a8a;"></div>
<div style="position:absolute;left:1464.0px;top:261.0px;font:12.5px/1 'Liberation Sans',sans-serif;color:#111;white-space:nowrap;transform:scaleX(1.001);transform-origin:0 0;">5.00</div>
<div style="position:absolute;left:1507px;top:265px;width:294px;height:4px;background:#e2e2e2;box-shadow:inset 0 0 0 1px #777;"></div>
<div style="position:absolute;left:1507px;top:265px;width:133px;height:4px;background:#8a8a8a;"></div>
<svg style="position:absolute;left:1634px;top:261px;" width="12" height="12" viewBox="0 0 12 12"><defs><radialGradient id="kn" cx=".4" cy=".35"><stop offset="0" stop-color="#fff"/><stop offset="1" stop-color="#aaa"/></radialGradient></defs><circle cx="6" cy="6" r="5.5" fill="url(#kn)" stroke="#777"/></svg>
<div style="position:absolute;left:1806px;top:257px;width:55px;height:19px;background:#e9e9e9;box-shadow:inset 0 0 0 1px #8a8a8a;"></div>
<div style="position:absolute;left:1813.0px;top:261.0px;font:12.5px/1 'Liberation Sans',sans-serif;color:#111;white-space:nowrap;transform:scaleX(1.001);transform-origin:0 0;">-2</div>
<div style="position:absolute;left:1846px;top:258px;width:14px;height:17px;background:linear-gradient(90deg,#cfcfcf,#e0e0e0);box-shadow:inset 1px 0 0 #aaa;"></div>
<svg style="position:absolute;left:1849px;top:260px;" width="9" height="14" viewBox="0 0 9 14"><path d="M0.5 5.5 L4.5 1 L8.5 5.5Z M0.5 8.5 L4.5 13 L8.5 8.5Z" fill="#111"/></svg>
<div style="position:absolute;left:1274.0px;top:287.0px;font:12.5px/1 'Liberation Sans',sans-serif;color:#111;white-space:nowrap;transform:scaleX(0.981);transform-origin:0 0;">Sharpness:</div>
<div style="position:absolute;left:1341px;top:282px;width:112px;height:19px;background:#e9e9e9;box-shadow:inset 0 0 0 1px #8a8a8a;"></div>
<div style="position:absolute;left:1348.0px;top:286.0px;font:12.5px/1 'Liberation Sans',sans-serif;color:#111;white-space:nowrap;transform:scaleX(1.001);transform-origin:0 0;">2.000000000000</div>
<div style="position:absolute;left:1457px;top:282px;width:46px;height:19px;background:#e9e9e9;box-shadow:inset 0 0 0 1px #8a8a8a;"></div>
<div style="position:absolute;left:1464.0px;top:286.0px;font:12.5px/1 'Liberation Sans',sans-serif;color:#111;white-space:nowrap;transform:scaleX(1.001);transform-origin:0 0;">2.00</div>
<div style="position:absolute;left:1507px;top:290px;width:294px;height:4px;background:#e2e2e2;box-shadow:inset 0 0 0 1px #777;"></div>
<div style="position:absolute;left:1507px;top:290px;width:37px;height:4px;background:#8a8a8a;"></div>
<svg style="position:absolute;left:1538px;top:286px;" width="12" height="12" viewBox="0 0 12 12"><defs><radialGradient id="kn" cx=".4" cy=".35"><stop offset="0" stop-color="#fff"/><stop offset="1" stop-color="#aaa"/></radialGradient></defs><circle cx="6" cy="6" r="5.5" fill="url(#kn)" stroke="#777"/></svg>
<div style="position:absolute;left:1806px;top:282px;width:55px;height:19px;background:#e9e9e9;box-shadow:inset 0 0 0 1px #8a8a8a;"></div>
<div style="position:absolute;left:1813.0px;top:286.0px;font:12.5px/1 'Liberation Sans',sans-serif;color:#111;white-space:nowrap;transform:scaleX(1.001);transform-origin:0 0;">0</div>
<div style="position:absolute;left:1846px;top:283px;width:14px;height:17px;background:linear-gradient(90deg,#cfcfcf,#e0e0e0);box-shadow:inset 1px 0 0 #aaa;"></div>
<svg style="position:absolute;left:1849px;top:285px;" width="9" height="14" viewBox="0 0 9 14"><path d="M0.5 5.5 L4.5 1 L8.5 5.5Z M0.5 8.5 L4.5 13 L8.5 8.5Z" fill="#111"/></svg>
<div style="position:absolute;left:1280.0px;top:312.0px;font:12.5px/1 'Liberation Sans',sans-serif;color:#111;white-space:nowrap;transform:scaleX(1.020);transform-origin:0 0;">Iterations:</div>
<div style="position:absolute;left:1341px;top:307px;width:76px;height:20px;background:#e9e9e9;box-shadow:inset 0 0 0 1px #8a8a8a;"></div>
<div style="position:absolute;left:1348.0px;top:311.0px;font:12.5px/1 'Liberation Sans',sans-serif;color:#111;white-space:nowrap;transform:scaleX(1.001);transform-origin:0 0;">20</div>
<div style="position:absolute;left:1402px;top:308px;width:14px;height:18px;background:linear-gradient(90deg,#cfcfcf,#e0e0e0);box-shadow:inset 1px 0 0 #aaa;"></div>
<svg style="position:absolute;left:1405px;top:310px;" width="9" height="14" viewBox="0 0 9 14"><path d="M0.5 5.5 L4.5 1 L8.5 5.5Z M0.5 8.5 L4.5 13 L8.5 8.5Z" fill="#111"/></svg>
<svg style="position:absolute;left:1341px;top:335px;" width="13" height="13" viewBox="0 0 13 13"><rect x=".5" y=".5" width="12" height="12" fill="#eee" stroke="#555"/></svg>
<div style="position:absolute;left:1360.0px;top:335.5px;font:12.5px/1 'Liberation Sans',sans-serif;color:#111;white-space:nowrap;transform:scaleX(1.018);transform-origin:0 0;">Automatic convergence</div>
<div style="position:absolute;left:1258.0px;top:357.5px;font:12.5px/1 'Liberation Sans',sans-serif;color:#888;white-space:nowrap;transform:scaleX(1.002);transform-origin:0 0;">Convergence:</div>
<div style="position:absolute;left:1341px;top:353px;width:112px;height:20px;background:#c8c8c8;box-shadow:inset 0 0 0 1px #8a8a8a;"></div>
<div style="position:absolute;left:1348.0px;top:357.0px;font:12.5px/1 'Liberation Sans',sans-serif;color:#8a8a8a;white-space:nowrap;transform:scaleX(1.001);transform-origin:0 0;">0.004000000000</div>
<div style="position:absolute;left:1457px;top:353px;width:46px;height:20px;background:#c8c8c8;box-shadow:inset 0 0 0 1px #8a8a8a;"></div>
<div style="position:absolute;left:1464.0px;top:357.0px;font:12.5px/1 'Liberation Sans',sans-serif;color:#8a8a8a;white-space:nowrap;transform:scaleX(1.001);transform-origin:0 0;">4.00</div>
<div style="position:absolute;left:1507px;top:361px;width:294px;height:4px;background:#e2e2e2;box-shadow:inset 0 0 0 1px #777;"></div>
<div style="position:absolute;left:1507px;top:361px;width:101px;height:4px;background:#8a8a8a;"></div>
<svg style="position:absolute;left:1602px;top:357px;" width="12" height="12" viewBox="0 0 12 12"><circle cx="6" cy="6" r="5.5" fill="#909090" stroke="#666"/></svg>
<div style="position:absolute;left:1806px;top:353px;width:55px;height:20px;background:#c8c8c8;box-shadow:inset 0 0 0 1px #8a8a8a;"></div>
<div style="position:absolute;left:1813.0px;top:357.0px;font:12.5px/1 'Liberation Sans',sans-serif;color:#8a8a8a;white-space:nowrap;transform:scaleX(1.001);transform-origin:0 0;">-3</div>
<div style="position:absolute;left:1846px;top:354px;width:14px;height:18px;background:#c0c0c0;box-shadow:inset 1px 0 0 #aaa;"></div>
<svg style="position:absolute;left:1849px;top:356px;" width="9" height="14" viewBox="0 0 9 14"><path d="M0.5 5.5 L4.5 1 L8.5 5.5Z M0.5 8.5 L4.5 13 L8.5 8.5Z" fill="#999"/></svg>
<div style="position:absolute;left:1228px;top:100px;width:80px;height:0px;background:none;"></div></div>
<svg style="position:absolute;left:1216px;top:79px;" width="18" height="18" viewBox="0 0 18 18"><defs><linearGradient id="tgvb" x1="0" y1="0" x2="1" y2="1"><stop offset="0" stop-color="#a0c0ff"/><stop offset="1" stop-color="#1a30e0"/></linearGradient></defs><rect x="1" y="1" width="16" height="16" rx="2" fill="#f8a800" stroke="#111" stroke-width="1.5"/><path d="M1.8 12 L5 10.5 L7 12.5 L10 9 L12 8 L13 5 L16.2 3 V16.2 H1.8Z" fill="url(#tgvb)"/><rect x="4.5" y="4" width="6" height="6" transform="rotate(40 7.5 7)" fill="#f0f020" stroke="#333" stroke-width=".7"/><path d="M9 9 L13.5 13.5" stroke="#e8e020" stroke-width="2.4"/></svg>
<div style="position:absolute;left:0px;top:1046px;width:1920px;height:34px;background:#efefef;"></div>
<div style="position:absolute;left:0px;top:1045px;width:1920px;height:1px;background:#2b2b2b;"></div>
<svg style="position:absolute;left:6px;top:1052px;" width="6" height="22" viewBox="0 0 6 22"><rect x="0" y="0" width="2" height="2" fill="#8a8a8a"/><rect x="4" y="0" width="2" height="2" fill="#8a8a8a"/><rect x="2" y="2" width="2" height="2" fill="#8a8a8a"/><rect x="0" y="4" width="2" height="2" fill="#8a8a8a"/><rect x="4" y="4" width="2" height="2" fill="#8a8a8a"/><rect x="2" y="6" width="2" height="2" fill="#8a8a8a"/><rect x="0" y="8" width="2" height="2" fill="#8a8a8a"/><rect x="4" y="8" width="2" height="2" fill="#8a8a8a"/><rect x="2" y="10" width="2" height="2" fill="#8a8a8a"/><rect x="0" y="12" width="2" height="2" fill="#8a8a8a"/><rect x="4" y="12" width="2" height="2" fill="#8a8a8a"/><rect x="2" y="14" width="2" height="2" fill="#8a8a8a"/><rect x="0" y="16" width="2" height="2" fill="#8a8a8a"/><rect x="4" y="16" width="2" height="2" fill="#8a8a8a"/><rect x="2" y="18" width="2" height="2" fill="#8a8a8a"/><rect x="0" y="20" width="2" height="2" fill="#8a8a8a"/><rect x="4" y="20" width="2" height="2" fill="#8a8a8a"/></svg>
<svg style="position:absolute;left:349px;top:1052px;" width="6" height="22" viewBox="0 0 6 22"><rect x="0" y="0" width="2" height="2" fill="#8a8a8a"/><rect x="4" y="0" width="2" height="2" fill="#8a8a8a"/><rect x="2" y="2" width="2" height="2" fill="#8a8a8a"/><rect x="0" y="4" width="2" height="2" fill="#8a8a8a"/><rect x="4" y="4" width="2" height="2" fill="#8a8a8a"/><rect x="2" y="6" width="2" height="2" fill="#8a8a8a"/><rect x="0" y="8" width="2" height="2" fill="#8a8a8a"/><rect x="4" y="8" width="2" height="2" fill="#8a8a8a"/><rect x="2" y="10" width="2" height="2" fill="#8a8a8a"/><rect x="0" y="12" width="2" height="2" fill="#8a8a8a"/><rect x="4" y="12" width="2" height="2" fill="#8a8a8a"/><rect x="2" y="14" width="2" height="2" fill="#8a8a8a"/><rect x="0" y="16" width="2" height="2" fill="#8a8a8a"/><rect x="4" y="16" width="2" height="2" fill="#8a8a8a"/><rect x="2" y="18" width="2" height="2" fill="#8a8a8a"/><rect x="0" y="20" width="2" height="2" fill="#8a8a8a"/><rect x="4" y="20" width="2" height="2" fill="#8a8a8a"/></svg>
<svg style="position:absolute;left:459px;top:1052px;" width="6" height="22" viewBox="0 0 6 22"><rect x="0" y="0" width="2" height="2" fill="#8a8a8a"/><rect x="4" y="0" width="2" height="2" fill="#8a8a8a"/><rect x="2" y="2" width="2" height="2" fill="#8a8a8a"/><rect x="0" y="4" width="2" height="2" fill="#8a8a8a"/><rect x="4" y="4" width="2" height="2" fill="#8a8a8a"/><rect x="2" y="6" width="2" height="2" fill="#8a8a8a"/><rect x="0" y="8" width="2" height="2" fill="#8a8a8a"/><rect x="4" y="8" width="2" height="2" fill="#8a8a8a"/><rect x="2" y="10" width="2" height="2" fill="#8a8a8a"/><rect x="0" y="12" width="2" height="2" fill="#8a8a8a"/><rect x="4" y="12" width="2" height="2" fill="#8a8a8a"/><rect x="2" y="14" width="2" height="2" fill="#8a8a8a"/><rect x="0" y="16" width="2" height="2" fill="#8a8a8a"/><rect x="4" y="16" width="2" height="2" fill="#8a8a8a"/><rect x="2" y="18" width="2" height="2" fill="#8a8a8a"/><rect x="0" y="20" width="2" height="2" fill="#8a8a8a"/><rect x="4" y="20" width="2" height="2" fill="#8a8a8a"/></svg>
<svg style="position:absolute;left:664px;top:1052px;" width="6" height="22" viewBox="0 0 6 22"><rect x="0" y="0" width="2" height="2" fill="#8a8a8a"/><rect x="4" y="0" width="2" height="2" fill="#8a8a8a"/><rect x="2" y="2" width="2" height="2" fill="#8a8a8a"/><rect x="0" y="4" width="2" height="2" fill="#8a8a8a"/><rect x="4" y="4" width="2" height="2" fill="#8a8a8a"/><rect x="2" y="6" width="2" height="2" fill="#8a8a8a"/><rect x="0" y="8" width="2" height="2" fill="#8a8a8a"/><rect x="4" y="8" width="2" height="2" fill="#8a8a8a"/><rect x="2" y="10" width="2" height="2" fill="#8a8a8a"/><rect x="0" y="12" width="2" height="2" fill="#8a8a8a"/><rect x="4" y="12" width="2" height="2" fill="#8a8a8a"/><rect x="2" y="14" width="2" height="2" fill="#8a8a8a"/><rect x="0" y="16" width="2" height="2" fill="#8a8a8a"/><rect x="4" y="16" width="2" height="2" fill="#8a8a8a"/><rect x="2" y="18" width="2" height="2" fill="#8a8a8a"/><rect x="0" y="20" width="2" height="2" fill="#8a8a8a"/><rect x="4" y="20" width="2" height="2" fill="#8a8a8a"/></svg>
<svg style="position:absolute;left:1123px;top:1052px;" width="6" height="22" viewBox="0 0 6 22"><rect x="0" y="0" width="2" height="2" fill="#8a8a8a"/><rect x="4" y="0" width="2" height="2" fill="#8a8a8a"/><rect x="2" y="2" width="2" height="2" fill="#8a8a8a"/><rect x="0" y="4" width="2" height="2" fill="#8a8a8a"/><rect x="4" y="4" width="2" height="2" fill="#8a8a8a"/><rect x="2" y="6" width="2" height="2" fill="#8a8a8a"/><rect x="0" y="8" width="2" height="2" fill="#8a8a8a"/><rect x="4" y="8" width="2" height="2" fill="#8a8a8a"/><rect x="2" y="10" width="2" height="2" fill="#8a8a8a"/><rect x="0" y="12" width="2" height="2" fill="#8a8a8a"/><rect x="4" y="12" width="2" height="2" fill="#8a8a8a"/><rect x="2" y="14" width="2" height="2" fill="#8a8a8a"/><rect x="0" y="16" width="2" height="2" fill="#8a8a8a"/><rect x="4" y="16" width="2" height="2" fill="#8a8a8a"/><rect x="2" y="18" width="2" height="2" fill="#8a8a8a"/><rect x="0" y="20" width="2" height="2" fill="#8a8a8a"/><rect x="4" y="20" width="2" height="2" fill="#8a8a8a"/></svg>
<div style="position:absolute;left:20px;top:1053px;width:293px;height:20px;background:linear-gradient(#f8f8f8,#d8d8d8);box-shadow:inset 0 0 0 1px #8a8a8a;"></div>
<svg style="position:absolute;left:27px;top:1056px;" width="14" height="14" viewBox="0 0 14 14"><rect x="1" y="1" width="12" height="12" fill="#e0e0e0" stroke="#555" stroke-width="2"/><rect x="1" y="1" width="12" height="3" fill="#555"/></svg>
<div style="position:absolute;left:48.0px;top:1056.7px;font:11.5px/1 'Liberation Sans',sans-serif;color:#111;white-space:nowrap;transform:scaleX(0.902);transform-origin:0 0;">AFTER</div>
<div style="position:absolute;left:295px;top:1055px;width:1px;height:16px;background:#b0b0b0;"></div>
<svg style="position:absolute;left:300px;top:1061px;" width="9" height="6" viewBox="0 0 9 6"><path d="M0 0 H9 L4.5 6Z" fill="#111"/></svg>
<div style="position:absolute;left:317px;top:1053px;width:20px;height:20px;background:#fafafa;box-shadow:inset 0 0 0 1px #8a8a8a;"></div>
<svg style="position:absolute;left:320px;top:1056px;" width="14" height="14" viewBox="0 0 14 14"><path d="M2 4 L5 1 H12 V12 H2Z" fill="#fff" stroke="#333" stroke-width="1.5"/><path d="M2 4 H5 V1" fill="none" stroke="#333" stroke-width="1.5"/><rect x="5" y="4" width="6" height="7" fill="#fff" stroke="#333"/></svg>
<div style="position:absolute;left:363px;top:1054px;width:19px;height:19px;background:linear-gradient(#6a6a6a,#2e2e2e);box-shadow:inset 0 0 0 1px #222;"></div>
<div style="position:absolute;left:386px;top:1054px;width:19px;height:19px;background:linear-gradient(#7ab0ff,#2050c0);box-shadow:inset 0 0 0 1px #222;"></div>
<div style="position:absolute;left:409px;top:1054px;width:19px;height:19px;background:linear-gradient(#6a6a6a,#2e2e2e);box-shadow:inset 0 0 0 1px #222;"></div>
<div style="position:absolute;left:432px;top:1054px;width:19px;height:19px;background:linear-gradient(#6a6a6a,#2e2e2e);box-shadow:inset 0 0 0 1px #222;"></div>
<svg style="position:absolute;left:1094px;top:1057px;" width="11" height="12" viewBox="0 0 11 12"><path d="M0 0 L11 6 L0 12Z" fill="#111"/></svg>
<div style="position:absolute;left:1148.6px;top:1058.2px;font:11.7px/1 'Liberation Mono',monospace;color:#111;white-space:nowrap;transform:scaleX(0.997);transform-origin:0 0;">w:195 · h:143 · n:3 · f32 · RGB · 326.777 KiB</div>
</body></html>
